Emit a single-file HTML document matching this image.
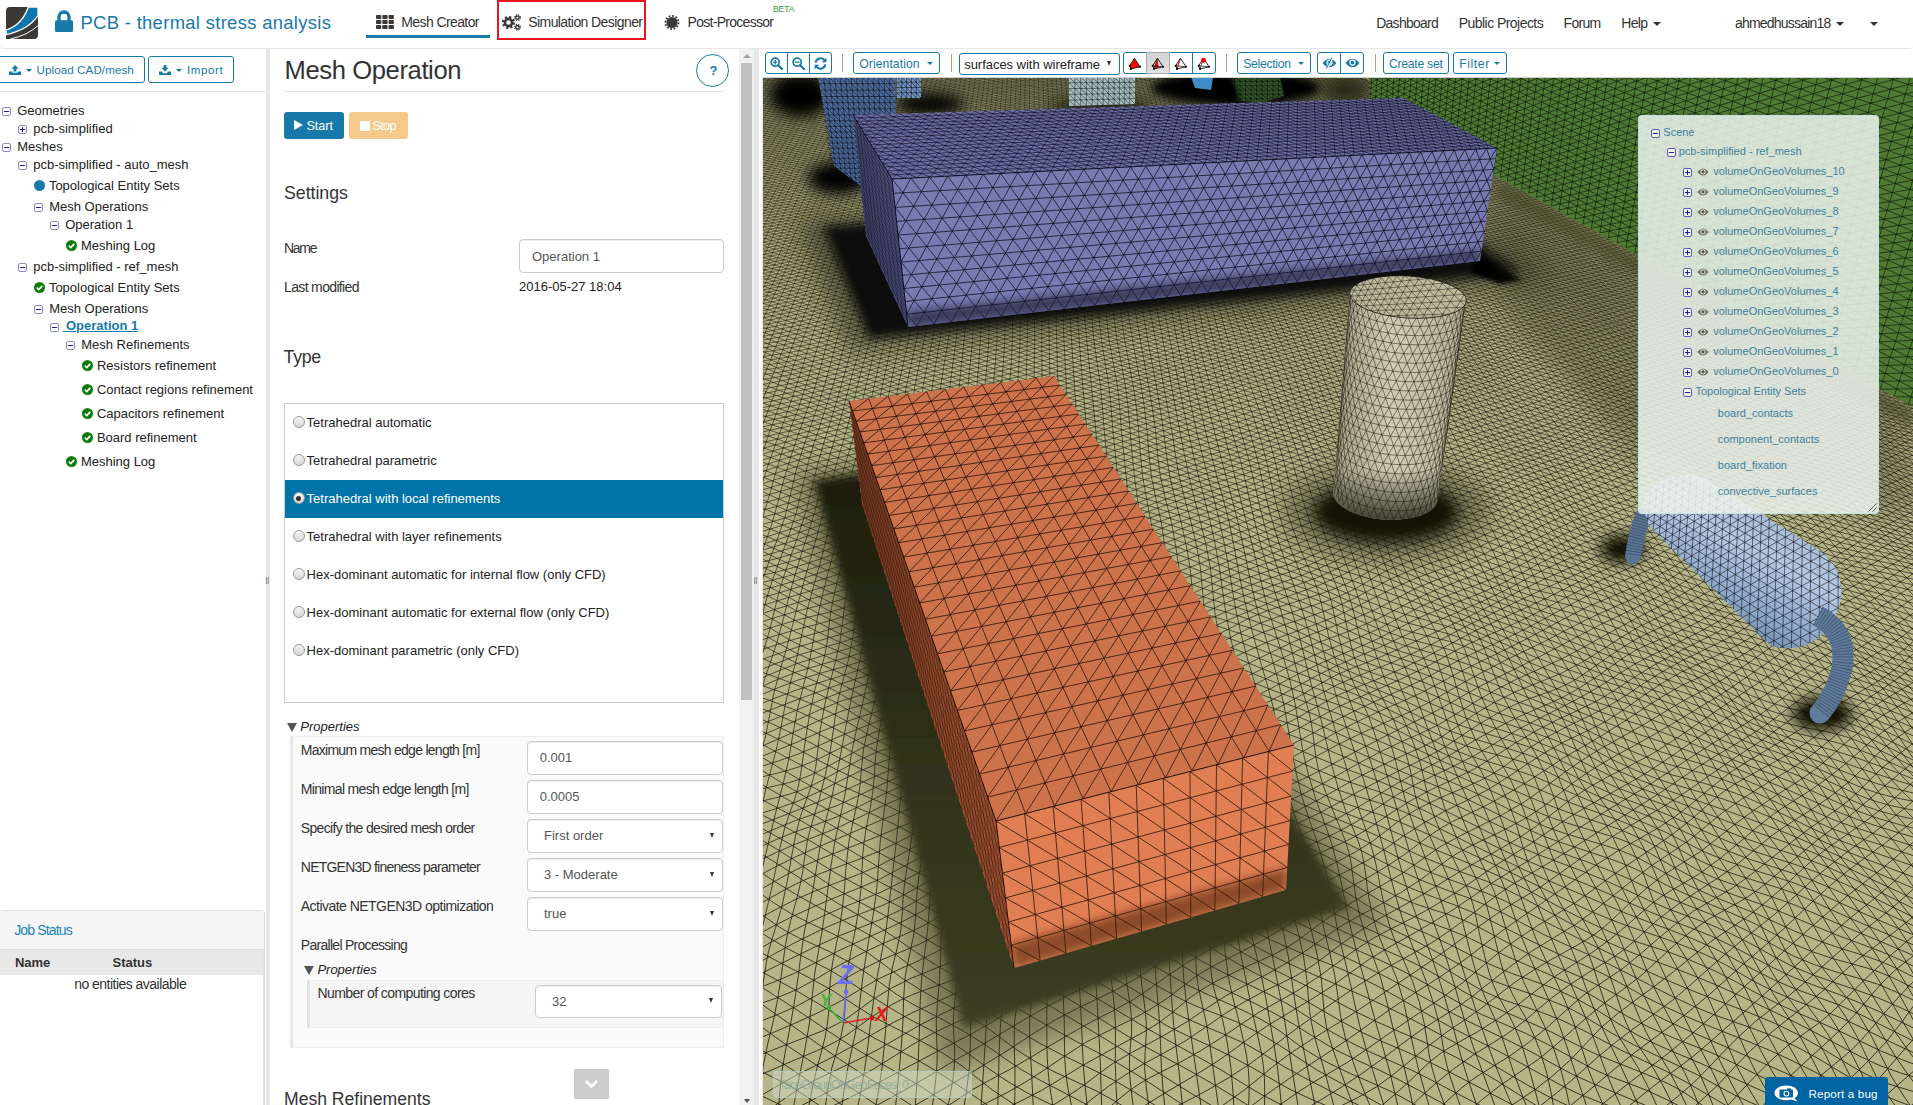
<!DOCTYPE html>
<html lang="en">
<head>
<meta charset="utf-8">
<title>PCB - thermal stress analysis</title>
<style>
html,body{margin:0;padding:0;}
body{width:1913px;height:1105px;overflow:hidden;background:#fff;position:relative;font-family:"Liberation Sans",sans-serif;color:#333;font-size:13px;}
.a{position:absolute;box-sizing:border-box;}
.t{position:absolute;white-space:nowrap;line-height:1;}
svg{position:absolute;overflow:visible;}
svg.clip{overflow:hidden;}
</style>
</head>
<body>
<!-- sec_scene -->
<svg class="clip" style="left:762px;top:77px" width="1151" height="1028" viewBox="762 77 1151 1028">
<defs><filter id="b2" x="-40%" y="-40%" width="180%" height="180%"><feGaussianBlur stdDeviation="2"/></filter><filter id="b4" x="-40%" y="-40%" width="180%" height="180%"><feGaussianBlur stdDeviation="4"/></filter><filter id="b7" x="-40%" y="-40%" width="180%" height="180%"><feGaussianBlur stdDeviation="7"/></filter><filter id="b12" x="-40%" y="-40%" width="180%" height="180%"><feGaussianBlur stdDeviation="12"/></filter><filter id="b20" x="-40%" y="-40%" width="180%" height="180%"><feGaussianBlur stdDeviation="20"/></filter><linearGradient id="gcyl" x1="0" x2="1" y1="0" y2="0"><stop offset="0" stop-color="#a5a287"/><stop offset="0.45" stop-color="#d0cdb3"/><stop offset="1" stop-color="#b4b195"/></linearGradient><linearGradient id="gcylb" x1="0" x2="0" y1="0" y2="1"><stop offset="0.78" stop-color="#14140a" stop-opacity="0"/><stop offset="1" stop-color="#14140a" stop-opacity="0.75"/></linearGradient><linearGradient id="gcap" x1="0.75" x2="0.3" y1="0.2" y2="0.95"><stop offset="0" stop-color="#a3b9d4"/><stop offset="0.35" stop-color="#b4c8e2"/><stop offset="0.7" stop-color="#8ba6c6"/><stop offset="1" stop-color="#5f7c9f"/></linearGradient><linearGradient id="gfar" x1="0" x2="0" y1="77" y2="520" gradientUnits="userSpaceOnUse"><stop offset="0" stop-color="#3a3b22" stop-opacity="0.2"/><stop offset="0.55" stop-color="#3a3b22" stop-opacity="0.05"/><stop offset="1" stop-color="#3a3b22" stop-opacity="0"/></linearGradient><linearGradient id="gln" x1="0" x2="0" y1="77" y2="1105" gradientUnits="userSpaceOnUse"><stop offset="0" stop-color="#14140a" stop-opacity="0.45"/><stop offset="0.35" stop-color="#14140a" stop-opacity="0.62"/><stop offset="1" stop-color="#14140a" stop-opacity="0.85"/></linearGradient><filter id="wav" filterUnits="userSpaceOnUse" x="762" y="77" width="1151" height="1028"><feTurbulence type="fractalNoise" baseFrequency="0.011" numOctaves="2" seed="7"/><feDisplacementMap in="SourceGraphic" scale="14" xChannelSelector="R" yChannelSelector="G"/><feGaussianBlur stdDeviation="0.4"/></filter><linearGradient id="gband" x1="0" x2="0" y1="480" y2="1040" gradientUnits="userSpaceOnUse"><stop offset="0" stop-color="#1d1e0d"/><stop offset="0.6" stop-color="#34351c"/><stop offset="1" stop-color="#3c3d22"/></linearGradient></defs>
<rect x="762" y="77" width="1151" height="1028" fill="#b6b587"/>
<path d="M1902.8 1114.0L1921.9 1095.0M1869.0 1110.2L1922.1 1063.7M1840.9 1111.1L1879.4 1078.1L1917.5 1034.2M1815.8 1112.2L1832.7 1095.7Q1849.6 1079.1 1868.1 1061.1T1901.8 1022.1L1917.0 1001.1M1783.3 1114.3L1799.6 1096.2Q1816.0 1078.1 1835.3 1063.5T1870.2 1029.8T1902.6 992.9L1919.4 975.2M1752.3 1118.6L1768.1 1099.7Q1783.9 1080.9 1802.7 1064.3T1838.4 1031.6T1870.2 996.6T1903.1 963.8L1921.1 949.8M1718.6 1115.5L1734.3 1098.3Q1750.0 1081.2 1768.0 1063.3T1805.4 1032.6T1840.2 1004.1T1872.9 971.8T1906.4 941.7L1922.8 928.4M1690.2 1110.3L1704.7 1097.3Q1719.3 1084.4 1734.2 1067.5T1768.0 1035.2T1803.8 1006.6T1838.0 976.8T1874.5 946.7T1908.6 920.5L1923.4 908.0M1660.8 1110.0L1677.6 1096.6Q1694.3 1083.2 1708.0 1068.3T1738.3 1037.1T1771.0 1009.3T1802.1 984.6T1836.2 954.2T1873.2 923.2T1906.6 895.2L1922.1 881.0M1624.4 1109.6L1643.0 1094.6Q1661.5 1079.7 1676.7 1068.9T1708.2 1043.6T1741.9 1013.9T1773.1 986.2T1803.4 958.7T1837.8 928.5T1871.6 900.8T1904.3 871.7L1921.5 855.2M1591.2 1113.0L1611.9 1096.5Q1632.6 1079.9 1649.8 1067.3T1685.2 1039.5T1722.5 1006.6T1757.3 975.0T1791.8 944.3T1829.8 910.8T1865.9 881.2T1903.1 850.9L1923.3 833.6M1557.1 1116.5L1576.9 1100.4Q1596.6 1084.2 1615.4 1068.3T1652.0 1039.7T1690.1 1010.6T1726.5 979.3T1758.7 950.9T1793.7 919.3T1829.7 886.0T1865.4 857.6T1904.6 828.0L1925.1 811.8M1530.7 1113.1L1547.5 1100.2Q1564.4 1087.3 1581.8 1071.3T1615.6 1042.3T1652.4 1015.2T1692.8 982.9T1728.7 951.3T1762.6 924.0T1796.8 894.5T1828.8 866.2T1864.5 839.4T1904.1 808.6L1923.5 792.2M1499.7 1112.7L1517.6 1101.4Q1535.6 1090.2 1553.9 1074.8T1586.8 1042.6T1617.7 1013.5T1654.1 986.5T1691.8 956.7T1728.5 929.5T1766.3 901.8T1799.9 871.5T1830.2 846.2T1865.1 821.5T1901.7 791.9L1919.2 776.5M1465.3 1114.0L1482.3 1099.5Q1499.3 1085.0 1519.4 1072.4T1556.6 1044.3T1589.1 1015.6T1622.4 989.9T1657.2 961.0T1690.8 931.6T1728.1 908.2T1767.1 882.5T1800.8 853.7T1833.4 828.0T1867.3 801.1T1899.9 773.2L1916.0 760.1M1433.7 1113.5L1451.3 1097.0Q1468.8 1080.5 1489.5 1068.6T1529.5 1041.8T1565.6 1010.7T1602.5 982.2T1640.3 954.1T1675.3 924.4T1713.4 899.4T1753.6 872.6T1790.9 842.6T1829.1 814.9T1865.4 784.4T1899.0 754.1L1916.2 740.9M1401.9 1115.4L1418.0 1099.5Q1434.1 1083.6 1453.7 1068.9T1494.7 1041.6T1533.4 1013.3T1569.1 985.2T1606.5 961.5T1641.8 934.1T1677.4 904.8T1716.9 878.7T1754.4 850.0T1791.3 822.3T1830.3 796.6T1865.8 765.6T1900.3 735.5L1919.0 722.6M1374.4 1111.8L1390.4 1098.2Q1406.5 1084.6 1422.0 1069.1T1457.6 1042.9T1496.6 1019.8T1534.8 991.6T1574.0 964.0T1610.5 939.0T1642.9 911.3T1679.4 885.7T1718.4 859.8T1755.2 828.8T1793.4 801.0T1831.0 775.5T1865.0 746.6T1901.5 719.6L1921.3 707.7M1337.0 1107.8L1357.0 1098.0Q1377.0 1088.1 1393.5 1074.4T1427.9 1046.4T1463.0 1021.0T1497.2 995.8T1535.5 968.9T1577.2 945.1T1613.3 918.7T1646.1 888.6T1681.8 863.4T1717.7 838.1T1755.5 809.2T1795.9 782.8T1831.7 755.4T1865.1 727.5T1902.1 704.1L1921.5 693.6M1301.3 1111.4L1322.2 1099.0Q1343.1 1086.6 1361.7 1073.7T1400.8 1044.8T1440.8 1017.5T1476.0 993.5T1511.9 965.3T1553.8 937.7T1594.9 910.2T1633.6 879.3T1671.1 852.6T1705.6 826.6T1744.2 797.4T1787.8 770.8T1827.0 742.5T1863.6 713.4T1901.4 689.5L1920.1 678.4M1266.8 1113.9L1288.1 1099.0Q1309.3 1084.1 1327.9 1073.9T1365.5 1050.1T1405.7 1022.1T1444.6 995.8T1479.8 968.4T1517.4 939.0T1556.3 914.4T1595.2 888.2T1636.8 858.7T1674.8 832.5T1707.8 804.8T1745.6 777.8T1787.2 754.8T1827.0 727.7T1866.0 699.7T1902.3 675.2L1918.9 663.0M1236.4 1117.2L1255.2 1103.0Q1274.0 1088.8 1292.8 1076.1T1330.3 1051.2T1370.4 1023.3T1410.8 995.6T1446.6 972.4T1483.2 945.4T1522.0 916.8T1558.4 891.5T1596.9 864.5T1638.8 839.0T1676.2 815.7T1711.0 787.6T1748.2 760.9T1786.1 738.2T1826.4 712.5T1867.8 687.3T1903.2 662.6L1918.8 648.9M1205.2 1117.1L1225.0 1103.8Q1244.9 1090.5 1262.8 1075.1T1296.3 1049.4T1332.2 1026.7T1374.5 999.3T1414.3 972.4T1449.7 947.6T1487.0 920.7T1524.1 896.9T1560.3 873.1T1600.2 844.7T1639.9 820.2T1676.5 798.2T1714.0 772.2T1750.6 747.6T1785.7 723.1T1826.0 696.5T1868.0 673.6T1903.8 649.7L1919.9 635.7M1167.5 1110.7L1187.6 1100.7Q1207.6 1090.7 1229.4 1077.3T1267.9 1050.5T1300.3 1025.9T1336.1 1000.4T1376.4 974.0T1415.6 952.0T1454.2 927.5T1491.0 899.6T1524.7 877.0T1562.1 854.7T1603.1 828.8T1640.7 805.2T1677.3 780.9T1716.1 755.7T1751.9 734.1T1786.5 709.4T1826.5 681.6T1867.0 658.7T1903.8 635.2L1921.5 621.6M1136.2 1110.8L1154.5 1099.4Q1172.8 1088.1 1194.8 1075.4T1237.3 1047.1T1275.9 1020.6T1313.2 998.2T1351.1 972.3T1389.3 947.1T1432.0 922.7T1474.3 895.3T1509.3 872.2T1545.3 849.8T1587.3 822.8T1627.8 797.9T1666.9 773.2T1707.1 746.9T1744.4 724.3T1781.6 698.9T1822.5 670.3T1862.9 645.8T1902.5 620.5L1922.8 606.4M1104.0 1111.8L1121.2 1097.2Q1138.4 1082.7 1159.4 1072.8T1201.4 1050.3T1240.5 1024.6T1279.1 1001.0T1319.2 976.2T1355.5 949.8T1391.8 928.4T1434.9 905.4T1476.9 878.3T1512.8 854.8T1549.3 830.8T1588.4 805.7T1628.3 783.5T1670.0 757.3T1709.1 729.9T1744.5 707.6T1783.1 682.9T1823.7 656.5T1862.2 632.1T1902.3 605.6L1923.6 591.3M1075.4 1112.6L1091.6 1099.3Q1107.7 1086.0 1125.3 1074.9T1164.3 1052.8T1205.4 1027.3T1243.9 1002.1T1283.6 981.9T1322.9 958.0T1358.4 931.9T1396.0 909.5T1437.4 885.4T1477.6 861.5T1516.3 839.4T1553.7 812.7T1589.0 787.3T1628.6 766.4T1672.4 741.1T1710.7 714.8T1745.3 691.4T1784.4 665.9T1824.2 642.0T1862.2 619.1T1902.5 592.3L1923.7 577.9M1036.8 1114.5L1057.4 1102.5Q1078.0 1090.5 1095.6 1076.2T1131.5 1052.6T1168.8 1032.6T1206.9 1008.2T1247.7 984.0T1288.7 961.7T1325.0 937.1T1360.9 914.9T1400.6 892.7T1439.5 865.7T1478.1 842.4T1519.4 821.7T1557.0 795.7T1590.3 770.8T1629.6 748.1T1673.4 723.2T1711.7 700.1T1747.2 676.8T1785.4 650.2T1823.8 627.5T1862.5 606.1T1903.1 580.3L1923.6 566.6M1000.2 1110.8L1020.8 1101.1Q1041.3 1091.4 1061.5 1078.4T1103.2 1053.9T1143.6 1032.0T1179.1 1006.7T1218.1 980.3T1263.4 959.2T1304.2 935.5T1340.3 909.6T1380.4 886.2T1420.9 860.2T1459.9 835.9T1502.6 814.5T1544.1 787.9T1579.9 761.7T1618.1 739.0T1661.3 713.9T1703.0 690.4T1742.4 667.1T1780.8 640.0T1819.0 616.6T1860.3 594.7T1902.8 569.5L1923.4 556.6M965.8 1112.6L986.8 1102.8Q1007.8 1093.0 1026.1 1081.7T1065.1 1055.7T1108.5 1030.7T1148.9 1010.1T1183.5 985.8T1222.5 961.2T1266.6 938.0T1307.2 912.3T1345.2 889.6T1384.0 868.0T1422.5 841.0T1463.0 816.5T1505.8 794.8T1545.2 770.0T1582.4 746.9T1621.5 723.1T1661.6 697.0T1703.0 675.6T1744.8 653.7T1782.3 627.7T1818.7 604.6T1860.6 582.1T1903.2 558.2L1923.1 546.7M933.4 1116.3L953.1 1102.4Q972.9 1088.4 991.7 1079.0T1029.7 1057.9T1070.6 1033.5T1113.1 1010.7T1151.8 987.2T1188.7 961.7T1227.7 940.8T1268.0 918.6T1309.6 891.8T1350.6 869.2T1387.0 847.6T1423.6 823.1T1466.2 800.7T1508.4 776.8T1546.0 752.0T1584.8 732.0T1624.4 709.2T1662.1 683.2T1703.2 661.8T1746.4 640.1T1783.6 616.3T1819.1 594.3T1860.8 570.6T1903.0 547.1L1922.7 536.6M898.0 1115.3L920.0 1102.5Q942.0 1089.8 960.2 1079.1T995.1 1058.2T1033.0 1033.7T1076.2 1008.9T1116.5 989.5T1154.1 966.6T1193.8 940.8T1232.0 919.6T1269.3 897.4T1312.1 873.9T1354.7 852.4T1389.6 828.2T1425.5 804.9T1468.7 785.7T1510.1 761.9T1547.5 736.8T1587.1 717.0T1626.1 695.2T1662.9 671.4T1704.0 650.0T1747.1 627.0T1784.4 604.6T1820.2 584.3T1860.9 560.3T1902.3 536.7L1922.1 526.5M859.0 1114.5L881.3 1102.9Q903.6 1091.4 927.3 1076.9T968.4 1052.7T1003.7 1031.9T1044.5 1008.0T1088.4 985.3T1128.7 962.4T1169.4 936.8T1210.3 915.8T1247.8 894.9T1288.6 869.2T1334.1 846.5T1374.4 824.4T1410.5 800.8T1451.4 780.2T1494.6 756.5T1535.6 731.1T1576.5 711.0T1616.2 689.2T1654.5 664.9T1696.4 642.9T1740.1 619.2T1779.9 596.4T1818.2 576.0T1858.7 551.7T1900.5 527.4L1921.4 516.8M827.9 1108.4L846.7 1099.1Q865.5 1089.8 887.8 1077.7T931.9 1054.3T972.4 1033.4T1010.2 1010.0T1049.7 985.2T1090.8 965.8T1133.1 944.2T1174.8 919.1T1213.2 897.7T1251.1 875.7T1293.1 853.0T1336.3 832.7T1376.4 808.5T1415.1 784.7T1454.2 765.9T1494.9 743.3T1538.1 719.0T1579.5 697.9T1617.0 675.1T1655.8 653.2T1698.4 632.4T1740.3 607.7T1780.2 584.8T1819.9 565.0T1859.2 541.6T1899.6 518.2L1920.6 507.8M795.6 1108.7L813.3 1099.4Q830.9 1090.2 852.2 1080.1T894.4 1056.0T935.0 1032.3T976.0 1013.8T1017.0 991.6T1054.0 967.9T1092.8 947.3T1137.6 924.7T1179.5 903.4T1215.5 883.3T1254.5 858.7T1297.2 836.6T1337.8 818.2T1378.4 794.8T1419.4 771.4T1456.5 751.2T1495.4 728.7T1540.3 707.3T1582.0 686.3T1617.9 661.7T1657.2 640.6T1700.0 621.0T1740.4 596.8T1780.6 574.1T1821.3 553.6T1859.6 530.9T1898.9 509.0L1920.0 499.0M763.7 1114.1L781.6 1100.7Q799.5 1087.4 817.9 1078.7T857.8 1059.8T898.9 1037.3T938.1 1015.8T980.4 994.9T1022.0 971.8T1057.5 952.2T1095.8 932.0T1141.3 907.1T1182.7 886.6T1218.5 868.0T1258.1 844.2T1300.0 822.3T1339.4 802.2T1380.9 779.8T1422.5 759.3T1458.5 737.9T1496.6 713.8T1541.9 694.3T1583.5 674.3T1619.2 649.5T1658.7 628.2T1700.9 608.5T1740.7 585.6T1781.2 563.9T1822.3 542.4T1859.9 519.8T1898.7 499.5L1919.7 490.1M755.2 1099.1L775.6 1086.9Q796.0 1074.7 815.6 1065.6T854.4 1045.0T893.2 1022.6T933.8 1003.2T976.9 982.0T1018.0 957.7T1054.7 938.6T1093.2 919.3T1136.6 894.8T1178.8 873.8T1217.2 854.3T1256.1 831.8T1296.2 811.1T1336.6 789.5T1379.1 766.6T1420.4 747.8T1456.9 726.6T1495.4 701.8T1539.5 682.1T1581.6 662.5T1618.9 638.8T1658.1 617.5T1699.4 596.7T1739.6 574.6T1780.9 554.2T1822.0 532.2T1859.7 509.2T1898.7 489.6L1919.7 480.7M751.2 1078.9L773.6 1069.1Q796.0 1059.3 817.4 1050.5T855.7 1028.5T891.5 1004.8T933.8 986.9T977.8 966.6T1016.9 942.4T1054.9 922.6T1095.0 902.7T1135.5 880.4T1177.1 860.1T1218.9 838.4T1257.3 816.4T1294.6 798.0T1336.4 775.9T1380.1 752.0T1419.7 733.8T1456.9 713.5T1496.5 689.5T1538.8 669.3T1580.4 649.0T1620.0 627.0T1658.9 606.7T1698.4 584.8T1739.4 562.8T1781.4 543.9T1821.8 522.1T1859.7 499.0T1899.1 479.7L1920.0 470.9M749.7 1059.1L772.7 1050.0Q795.7 1041.0 817.9 1032.7T856.4 1011.5T891.3 988.2T933.6 969.2T977.7 948.7T1016.3 927.0T1055.4 907.3T1096.2 885.1T1134.6 864.2T1175.7 846.1T1220.0 823.1T1258.2 800.6T1293.6 783.3T1336.3 762.0T1380.7 738.5T1419.1 719.6T1457.0 699.2T1497.8 677.3T1538.1 657.4T1579.2 635.7T1621.0 614.7T1659.6 595.9T1697.5 573.6T1739.2 551.5T1782.0 533.3T1821.4 512.1T1859.6 489.5T1899.7 470.1L1920.5 461.0M751.1 1041.6L774.2 1032.1Q797.3 1022.6 819.1 1012.2T859.3 990.0T897.7 970.0T940.5 949.7T984.2 925.3T1025.7 905.1T1067.3 886.6T1107.8 863.1T1147.4 841.5T1192.3 821.3T1236.9 799.1T1273.9 779.7T1313.2 758.1T1359.6 734.0T1402.1 715.3T1441.1 695.5T1483.1 671.8T1524.4 651.2T1565.6 630.4T1610.2 608.8T1651.7 589.2T1689.5 566.7T1732.0 544.2T1777.1 525.5T1817.8 504.2T1857.5 481.6T1899.5 461.3L1920.9 451.4M753.0 1024.0L775.1 1015.6Q797.3 1007.1 817.6 994.7T858.9 971.0T900.0 952.3T939.9 933.3T982.3 909.4T1026.8 888.9T1068.2 869.3T1106.7 847.5T1147.6 828.0T1192.6 806.1T1236.1 783.4T1274.4 765.7T1314.1 744.9T1358.6 721.0T1401.5 701.8T1441.9 681.8T1483.5 660.1T1524.1 640.2T1565.2 618.2T1610.3 597.0T1652.0 578.7T1689.5 556.6T1731.9 534.2T1777.1 515.3T1817.6 494.5T1857.6 473.1T1899.9 452.8L1921.2 442.4M753.6 1005.9L775.1 998.5Q796.6 991.2 816.5 978.7T858.9 954.9T901.6 935.7T939.6 916.3T980.7 894.6T1027.6 875.1T1069.0 853.4T1105.8 832.0T1148.1 814.6T1192.9 792.8T1234.8 769.6T1275.1 751.8T1315.5 731.7T1357.3 709.6T1400.6 690.0T1443.1 668.7T1483.7 648.5T1523.5 629.9T1565.4 607.3T1610.2 586.0T1651.9 568.2T1689.8 546.9T1731.9 525.2T1776.7 505.8T1817.6 485.0T1857.8 464.8T1900.1 444.9L1921.2 434.2M752.8 990.2L773.7 982.1Q794.7 974.1 815.9 962.5T859.6 941.1T902.0 921.8T939.5 900.2T980.3 880.0T1027.5 862.5T1069.2 839.9T1105.9 818.0T1148.5 801.1T1192.8 780.3T1233.7 758.2T1275.7 739.3T1316.8 718.5T1356.2 698.6T1399.8 679.6T1444.3 657.0T1483.8 637.2T1522.8 619.7T1565.9 597.5T1610.1 576.3T1651.4 558.0T1690.4 537.3T1732.2 516.8T1776.0 497.1T1817.5 475.8T1858.3 456.6T1900.1 437.3L1921.0 426.5M751.9 978.1L772.0 968.1Q792.1 958.1 815.6 946.6T860.7 927.4T901.4 909.5T939.6 886.5T981.1 866.1T1026.6 849.5T1068.7 827.8T1106.9 806.4T1148.7 788.2T1192.0 767.6T1233.3 747.8T1276.3 728.5T1317.5 706.3T1355.6 687.7T1399.2 669.8T1445.0 646.9T1483.8 626.8T1522.4 609.3T1566.3 588.1T1610.0 567.6T1650.8 548.5T1691.1 527.8T1732.5 508.7T1775.2 489.0T1817.5 467.3T1858.8 448.6T1900.0 429.8L1920.5 419.2M751.8 966.6L771.2 955.6Q790.5 944.5 815.4 932.5T861.3 913.5T900.6 896.7T939.8 874.5T982.3 854.0T1025.3 836.2T1067.9 815.5T1108.7 796.1T1148.9 776.6T1190.6 755.0T1233.5 737.3T1276.9 718.6T1317.5 695.5T1355.4 676.9T1399.0 659.5T1445.0 637.5T1483.9 617.5T1522.4 599.1T1566.6 578.6T1609.7 559.4T1650.3 539.7T1691.8 518.7T1732.8 500.6T1774.5 481.3T1817.5 459.5T1859.4 440.8T1899.8 422.3L1919.9 411.9M752.5 952.7L771.7 941.9Q790.9 931.2 815.3 919.6T860.9 900.3T900.4 882.5T940.4 861.9T983.1 843.0T1024.1 823.4T1067.1 802.5T1110.4 785.5T1149.0 765.9T1189.1 743.3T1233.9 726.1T1277.5 708.3T1316.9 685.7T1355.7 666.8T1399.2 648.8T1444.4 628.1T1484.0 609.0T1522.9 589.4T1566.6 569.1T1609.3 551.3T1650.1 531.4T1692.3 510.0T1733.1 492.4T1773.8 473.6T1817.5 452.1T1859.9 433.4T1899.6 414.8L1919.3 404.6M753.5 936.8L773.3 926.2Q793.1 915.7 815.3 906.0T859.3 887.9T900.7 868.0T941.5 848.0T983.0 831.5T1023.2 811.2T1066.8 789.5T1111.5 773.5T1149.2 754.8T1188.0 732.4T1234.3 714.8T1277.9 696.9T1316.2 676.0T1356.2 657.3T1399.6 638.0T1443.4 618.2T1484.1 600.5T1523.8 580.3T1566.3 559.7T1608.8 542.8T1650.2 523.3T1692.7 501.9T1733.1 484.3T1773.4 465.8T1817.5 445.1T1860.2 426.3T1899.4 407.4L1918.8 397.3M754.3 921.2L775.0 909.9Q795.7 898.6 815.4 890.9T857.3 874.9T901.4 854.0T942.9 833.5T982.2 818.3T1022.7 798.8T1067.1 777.2T1111.6 760.8T1149.3 742.5T1187.8 721.8T1234.3 703.9T1277.9 684.8T1315.9 665.5T1356.8 648.0T1399.9 627.5T1442.3 608.0T1484.2 591.5T1524.8 571.4T1565.9 550.6T1608.2 534.0T1650.6 515.0T1692.9 494.2T1733.1 476.3T1773.3 457.8T1817.4 438.0T1860.4 419.5T1899.4 400.2L1918.5 390.0M755.2 906.7L776.2 894.5Q797.3 882.4 815.3 875.4T855.8 860.5T901.9 840.3T944.0 819.9T981.3 804.1T1022.5 785.3T1067.7 765.5T1111.1 748.2T1149.4 729.1T1188.5 710.6T1233.9 693.3T1277.4 672.8T1316.0 654.3T1357.4 638.2T1400.0 617.4T1441.4 597.7T1484.3 581.9T1525.8 562.4T1565.5 541.9T1607.6 525.0T1651.0 506.4T1693.0 486.6T1732.9 468.6T1773.3 449.7T1817.4 430.9T1860.4 412.9T1899.4 393.3L1918.5 382.9M756.3 892.0L776.6 880.3Q797.0 868.5 815.0 861.1T855.2 845.3T902.1 826.1T944.6 807.3T980.8 790.1T1022.5 771.0T1068.3 753.5T1110.2 736.2T1149.5 715.7T1189.7 698.5T1233.2 682.4T1276.5 661.3T1316.7 643.0T1357.9 627.6T1399.8 607.5T1440.8 587.9T1484.4 571.8T1526.5 553.0T1565.2 533.5T1607.1 516.2T1651.5 497.5T1693.1 478.9T1732.6 461.1T1773.5 441.8T1817.4 423.6T1860.2 406.2T1899.5 386.5L1918.7 376.0M757.5 876.4L776.4 866.4Q795.3 856.4 814.2 848.6T855.2 831.2T901.0 812.1T943.6 795.5T980.0 777.8T1021.3 757.7T1066.7 741.7T1107.7 725.2T1147.7 704.1T1188.9 687.3T1230.1 672.1T1272.9 651.5T1314.8 633.1T1355.5 618.0T1396.1 598.7T1437.1 579.7T1480.7 563.5T1523.2 545.2T1561.3 526.5T1602.3 509.3T1647.1 490.9T1688.7 472.9T1727.8 455.5T1768.7 436.5T1811.8 418.6T1854.5 401.7T1894.4 382.4L1913.6 372.1M758.4 860.9L776.6 852.4Q794.8 843.8 815.8 836.4T859.6 817.2T905.2 796.2T948.1 780.9T987.6 763.2T1030.7 741.7T1075.8 725.0T1117.7 708.1T1160.6 688.4T1202.9 670.9T1244.2 652.5T1289.1 633.9T1333.0 617.5T1373.6 598.1T1415.1 578.6T1459.4 563.0T1504.5 544.4T1545.3 524.1T1585.3 507.6T1630.9 489.8T1675.4 470.3T1715.8 452.6T1757.6 434.2T1801.6 415.7T1845.4 398.2T1887.4 378.9L1907.8 368.6M758.4 847.6L776.2 839.6Q794.1 831.6 815.7 824.8T859.8 806.1T903.5 785.0T946.2 769.3T987.8 751.9T1029.3 731.7T1072.7 714.7T1115.7 697.0T1158.9 678.5T1200.7 661.8T1240.7 642.7T1285.5 624.3T1330.5 608.9T1370.1 589.8T1410.8 570.3T1455.5 555.1T1500.1 537.1T1541.0 517.2T1580.8 500.8T1625.3 483.5T1670.1 464.5T1710.5 447.2T1751.9 429.2T1795.6 411.0T1838.7 393.9T1881.1 375.1L1902.0 365.1M757.2 836.6L776.1 828.4Q794.9 820.3 816.2 813.3T859.5 795.2T901.7 775.3T944.5 758.8T988.0 740.9T1028.0 722.4T1069.4 705.6T1113.8 686.7T1157.3 669.0T1198.1 653.3T1237.7 633.8T1282.0 615.3T1327.7 600.6T1366.9 581.9T1406.6 562.4T1451.5 547.4T1495.7 529.9T1536.5 510.5T1576.5 494.2T1620.0 477.3T1664.5 458.7T1705.3 441.7T1746.3 424.2T1789.6 406.3T1832.2 389.5T1874.5 371.3L1895.9 361.6M755.2 826.5L776.1 818.5Q796.9 810.5 817.2 802.3T858.6 784.0T900.0 766.2T943.1 749.5T987.6 730.3T1026.8 713.2T1066.4 697.2T1111.9 677.4T1155.7 659.9T1195.3 645.1T1234.9 625.6T1278.8 607.0T1324.3 592.5T1363.8 574.3T1402.8 555.1T1447.5 540.0T1491.3 523.0T1531.9 504.0T1572.4 487.9T1614.9 471.2T1658.8 453.1T1700.2 436.4T1741.0 419.3T1783.7 401.7T1825.8 385.1T1867.9 367.5L1889.5 358.1M753.2 815.6L777.0 808.5Q800.7 801.3 820.6 790.9T861.3 770.5T904.1 754.5T950.2 738.1T995.4 716.6T1034.7 699.4T1076.7 683.9T1124.9 663.7T1168.4 645.5T1208.2 628.9T1251.2 610.2T1297.6 592.9T1342.0 575.0T1381.9 556.0T1425.1 540.1T1471.4 522.6T1514.3 502.8T1556.3 486.7T1599.6 470.2T1643.9 450.8T1687.8 433.7T1730.3 417.1T1773.7 398.8T1817.2 381.6T1860.6 364.0L1882.8 354.6M751.9 803.4L777.1 797.5Q802.2 791.6 821.3 780.7T859.9 759.8T902.8 744.3T949.6 728.7T994.0 708.0T1033.2 690.7T1074.7 674.8T1122.7 655.7T1166.2 638.2T1205.5 620.9T1248.7 602.4T1294.3 586.0T1338.3 568.1T1379.0 549.0T1421.4 533.5T1467.0 516.4T1509.9 496.7T1552.0 480.7T1595.3 464.5T1638.4 445.5T1682.2 428.5T1725.3 412.3T1768.0 394.3T1811.0 377.3T1854.2 360.2L1876.1 351.1M751.9 790.9L777.1 785.5Q802.4 780.2 821.5 769.8T858.9 749.6T901.7 733.9T949.0 718.4T992.2 699.2T1031.7 682.3T1073.3 665.7T1120.2 647.5T1163.8 631.0T1203.1 613.3T1246.3 594.9T1291.1 579.3T1334.3 561.6T1376.1 542.4T1418.0 527.1T1462.3 510.4T1505.5 491.0T1547.8 475.0T1590.9 459.1T1633.1 440.4T1676.5 423.6T1720.3 407.7T1762.5 390.0T1804.8 373.1T1847.8 356.5L1869.6 347.8M752.8 779.1L777.1 773.2Q801.3 767.4 820.9 757.7T858.4 739.3T900.9 723.6T948.1 707.5T990.4 689.8T1030.3 674.0T1072.3 656.6T1117.5 639.0T1161.2 623.7T1201.1 605.9T1243.8 587.4T1287.9 572.6T1330.4 555.3T1373.1 536.1T1414.9 520.9T1457.7 504.7T1501.0 485.5T1543.7 469.5T1586.5 453.9T1628.1 435.5T1670.9 418.9T1715.2 403.2T1757.2 385.8T1798.7 369.1T1841.6 352.9L1863.3 344.5M754.2 768.7L776.9 761.5Q799.5 754.3 819.8 745.1T858.5 728.6T900.4 713.7T946.7 696.4T988.6 679.9T1028.9 665.4T1071.4 647.6T1114.8 630.2T1158.3 616.1T1199.4 598.5T1241.3 580.0T1284.5 565.8T1326.7 549.0T1369.9 529.9T1411.9 514.9T1453.2 499.1T1496.5 480.2T1539.6 464.3T1582.1 448.9T1623.2 430.8T1665.3 414.4T1709.8 399.0T1752.0 381.7T1792.7 365.2T1835.3 349.4L1857.2 341.2M755.3 758.9L776.4 750.5Q797.6 742.2 818.5 732.7T858.8 717.4T900.2 703.7T944.8 685.7T986.9 669.6T1027.8 656.4T1070.3 638.6T1112.2 621.3T1155.2 608.1T1197.7 591.0T1239.0 572.7T1281.1 558.8T1323.2 542.6T1366.7 523.8T1408.9 509.0T1449.0 493.5T1491.9 475.0T1535.7 459.2T1577.7 444.1T1618.4 426.3T1660.0 410.0T1704.4 394.8T1746.9 377.8T1786.9 361.4T1829.1 346.0L1851.1 338.1M755.4 748.9L776.5 739.8Q797.7 730.7 819.8 720.2T863.3 704.6T905.9 691.5T950.4 672.9T994.5 656.0T1037.9 642.4T1081.4 625.1T1123.8 608.1T1169.0 593.0T1213.4 576.0T1255.4 559.6T1298.5 543.5T1343.3 525.7T1388.4 509.9T1430.2 493.9T1472.4 475.2T1518.4 459.1T1562.7 443.8T1604.7 425.3T1647.3 408.4T1692.7 393.3T1737.5 375.7T1779.0 358.6T1822.1 343.0L1844.9 335.1M754.5 738.3L775.6 729.4Q796.7 720.5 819.1 710.1T863.6 694.2T905.5 680.9T948.1 663.2T993.2 646.8T1037.1 632.6T1079.6 616.0T1121.3 600.0T1166.5 584.7T1211.7 567.9T1252.6 552.5T1295.0 536.8T1340.1 519.0T1385.1 503.8T1426.7 488.3T1468.1 469.9T1514.0 454.0T1558.6 439.1T1600.0 420.9T1642.3 404.2T1687.3 389.4T1732.2 372.0T1773.6 355.1T1816.0 339.8L1838.6 332.1M752.7 727.6L774.5 719.0Q796.2 710.3 818.8 700.8T863.8 684.9T904.9 670.6T946.0 653.7T992.0 638.2T1036.3 623.2T1077.6 606.8T1118.9 592.0T1164.0 576.6T1209.7 559.7T1250.0 545.3T1291.5 530.0T1337.0 512.3T1381.7 497.5T1423.1 482.7T1464.1 464.6T1509.6 448.9T1554.4 434.4T1595.4 416.6T1637.4 400.1T1682.0 385.5T1726.7 368.5T1768.4 351.7T1810.1 336.7L1832.2 329.2M750.7 717.6L773.4 708.8Q796.1 700.0 818.8 691.7T863.6 676.5T904.1 660.9T944.3 644.3T990.7 630.0T1035.5 614.3T1075.5 597.8T1116.7 584.0T1161.7 568.7T1207.4 551.7T1247.5 537.9T1288.2 523.2T1333.9 505.6T1378.3 491.2T1419.5 476.9T1460.3 459.2T1505.1 443.8T1550.2 429.7T1591.0 412.2T1632.6 396.0T1676.8 381.7T1721.2 364.9T1763.1 348.3T1804.4 333.7L1825.8 326.4M749.2 708.6L772.6 699.1Q795.9 689.6 819.0 682.7T863.3 668.7T903.1 652.0T943.1 635.4T989.4 622.0T1034.4 606.1T1073.6 589.2T1114.6 576.1T1159.6 561.1T1204.8 543.9T1245.0 530.6T1285.2 516.4T1330.6 499.0T1375.0 484.8T1415.9 471.1T1456.7 453.8T1500.8 438.6T1545.7 424.9T1586.6 407.9T1627.8 391.8T1671.8 377.9T1715.7 361.4T1757.8 345.0T1798.9 330.6L1819.7 323.6M748.6 700.4L773.2 689.7Q797.8 679.0 821.9 672.8T866.9 659.6T907.7 641.6T950.5 623.8T998.8 610.7T1043.7 594.3T1084.1 576.7T1128.4 562.8T1175.5 547.5T1220.2 530.8T1261.2 516.2T1305.4 500.7T1352.7 485.1T1396.3 470.3T1438.5 453.9T1482.8 438.3T1529.3 423.9T1573.2 406.9T1615.3 390.6T1660.3 376.3T1705.8 359.5T1749.8 342.6T1792.7 328.0L1814.0 320.8M749.0 692.2L773.2 681.3Q797.4 670.4 821.7 664.3T866.1 651.4T906.7 634.0T949.9 616.4T997.2 602.8T1042.1 586.7T1082.4 569.6T1126.5 555.4T1173.1 540.0T1217.4 524.0T1258.9 509.5T1302.5 493.9T1349.2 478.7T1392.8 464.5T1435.0 448.2T1479.0 432.9T1524.7 419.0T1568.8 402.4T1610.9 386.4T1655.4 372.4T1700.5 356.0T1744.3 339.4T1787.4 325.0L1808.6 318.0M750.2 683.3L773.5 672.9Q796.8 662.5 821.2 656.2T865.1 643.0T905.9 626.4T949.4 609.4T995.6 595.3T1040.2 579.3T1080.9 563.0T1124.7 548.5T1170.7 532.7T1214.5 517.5T1256.5 503.1T1299.7 487.3T1345.7 472.5T1389.3 458.7T1431.5 442.6T1475.4 427.5T1520.2 414.0T1564.3 397.8T1606.7 382.1T1650.5 368.4T1695.2 352.4T1738.9 336.1T1782.1 322.0L1803.5 315.2M751.9 673.4L774.1 664.2Q796.3 654.9 820.4 648.4T864.2 634.6T905.2 618.5T949.0 602.6T993.9 588.1T1038.1 571.9T1079.7 556.6T1122.9 542.0T1168.2 525.9T1211.6 511.1T1254.2 497.0T1297.2 480.9T1342.0 466.4T1385.8 453.0T1428.1 437.0T1471.8 422.2T1515.8 409.0T1559.7 393.2T1602.5 377.8T1645.8 364.4T1690.0 348.8T1733.5 332.8T1776.8 318.9L1798.4 312.3M753.6 662.7L774.8 654.9Q795.9 647.0 819.3 640.7T863.2 626.3T904.8 610.3T948.4 595.9T992.2 581.1T1036.0 564.7T1078.5 550.3T1121.3 535.8T1165.7 519.3T1208.8 504.9T1251.8 491.1T1294.7 474.9T1338.4 460.5T1382.2 447.4T1424.8 431.6T1468.2 417.0T1511.5 404.1T1555.1 388.7T1598.3 373.4T1641.1 360.4T1684.8 345.2T1728.1 329.5T1771.5 315.9L1793.4 309.4M755.1 651.9L775.4 645.2Q795.6 638.5 818.2 632.7T862.2 618.1T904.7 602.0T947.7 588.9T990.6 574.4T1034.0 557.7T1077.4 543.9T1119.6 529.8T1163.0 513.0T1206.1 498.9T1249.5 485.5T1292.3 469.1T1334.9 454.9T1378.6 442.0T1421.5 426.4T1464.6 411.8T1507.3 399.3T1550.5 384.1T1594.1 369.1T1636.6 356.4T1679.7 341.6T1722.8 326.1T1766.1 312.8L1788.1 306.5M756.0 641.7L775.7 635.6Q795.5 629.4 817.0 624.3T861.2 610.0T904.6 593.8T946.9 581.6T988.9 567.6T1032.0 550.7T1076.3 537.5T1118.1 523.9T1160.3 507.0T1203.5 493.1T1247.1 480.0T1289.9 463.7T1331.5 449.4T1375.0 436.8T1418.3 421.3T1461.0 406.8T1503.2 394.5T1546.0 379.7T1589.8 364.9T1632.2 352.3T1674.6 337.9T1717.5 322.8T1760.8 309.7L1782.7 303.5M756.3 632.3L776.6 625.9Q796.9 619.6 818.9 614.7T865.3 600.3T911.0 583.6T954.0 571.2T997.3 557.1T1043.0 540.2T1088.9 526.3T1131.5 512.1T1175.4 495.7T1221.0 481.1T1266.3 466.6T1309.5 451.0T1353.2 436.6T1399.1 422.0T1443.8 407.0T1487.4 393.2T1531.3 378.6T1576.8 363.6T1621.6 350.3T1665.0 335.7T1709.5 320.4T1754.5 306.9L1777.3 300.5M756.1 623.7L776.4 617.2Q796.6 610.8 818.1 605.8T864.6 592.0T910.8 576.0T952.8 563.5T995.6 549.8T1041.4 533.8T1087.5 520.1T1129.6 505.9T1172.7 490.1T1218.6 475.8T1263.9 461.2T1306.7 445.9T1349.7 431.8T1395.7 417.1T1440.5 402.2T1483.5 388.7T1527.0 374.2T1572.4 359.5T1617.3 346.3T1660.2 332.0T1704.2 317.0T1749.2 303.7L1771.8 297.5M755.7 615.6L776.0 609.1Q796.2 602.6 817.5 597.1T864.1 583.5T910.4 568.5T951.6 555.9T994.0 542.2T1040.0 527.3T1086.0 513.9T1127.7 499.6T1170.1 484.6T1216.3 470.6T1261.4 455.9T1303.9 440.9T1346.3 427.1T1392.2 412.4T1437.2 397.6T1479.7 384.3T1522.8 370.0T1568.0 355.4T1613.0 342.4T1655.6 328.4T1699.1 313.7T1744.0 300.5L1766.4 294.4M755.3 607.7L775.5 601.4Q795.8 595.2 817.1 588.9T863.6 574.9T909.8 561.1T950.4 548.5T992.6 534.6T1038.6 520.7T1084.4 507.7T1125.8 493.3T1167.7 478.9T1213.9 465.5T1258.9 450.7T1301.0 436.0T1343.1 422.5T1388.7 407.9T1433.9 393.2T1475.9 380.1T1518.7 365.9T1563.6 351.4T1608.7 338.5T1651.0 324.9T1693.9 310.4T1738.8 297.4L1761.2 291.3M754.9 599.7L775.1 594.0Q795.3 588.3 817.0 581.1T863.1 566.6T909.0 553.7T949.4 541.4T991.2 527.1T1037.3 513.9T1082.6 501.5T1124.0 487.0T1165.4 473.1T1211.5 460.3T1256.4 445.6T1298.2 431.1T1340.0 418.0T1385.3 403.5T1430.5 388.9T1472.2 375.9T1514.6 362.0T1559.3 347.5T1604.3 334.8T1646.6 321.3T1688.9 307.1T1733.6 294.3L1756.1 288.2M754.7 591.8L774.8 586.7Q794.8 581.7 817.0 573.8T862.7 558.6T907.9 546.4T948.4 534.4T990.0 519.7T1036.0 507.1T1080.8 495.3T1122.1 480.7T1163.3 467.3T1209.0 455.1T1253.9 440.5T1295.3 426.2T1337.0 413.6T1381.9 399.2T1427.1 384.7T1468.6 371.9T1510.6 358.1T1555.1 343.8T1599.8 331.1T1642.1 317.9T1684.0 303.9T1728.4 291.1L1751.0 285.2M754.7 584.1L774.6 579.6Q794.5 575.0 817.0 566.8T862.2 551.1T906.7 539.2T947.4 527.5T989.0 512.6T1034.6 500.3T1078.8 489.0T1120.2 474.5T1161.4 461.4T1206.6 449.8T1251.3 435.4T1292.5 421.4T1334.2 409.1T1378.5 394.9T1423.5 380.5T1465.1 368.0T1506.6 354.4T1550.9 340.2T1595.4 327.6T1637.7 314.6T1679.2 300.8T1723.2 288.1L1746.0 282.1M754.8 576.8L775.7 572.2Q796.5 567.6 820.1 559.1T866.7 542.7T912.1 530.1T954.9 518.2T999.2 502.8T1046.3 490.0T1091.2 478.3T1134.0 463.6T1178.5 450.2T1225.7 438.0T1270.4 423.4T1313.1 409.3T1358.1 396.2T1404.9 381.7T1449.6 367.5T1492.3 354.0T1537.6 339.8T1584.0 326.0T1628.6 312.7T1671.7 298.7T1717.0 285.4L1740.8 279.1M755.1 570.1L775.9 565.3Q796.8 560.4 820.2 552.3T865.9 536.3T910.8 523.5T954.2 511.3T998.2 496.5T1044.6 483.7T1089.2 471.9T1132.3 457.8T1176.5 444.7T1223.1 432.5T1267.7 418.4T1310.4 404.8T1355.1 391.8T1401.3 377.6T1446.0 363.7T1488.6 350.4T1533.6 336.3T1579.7 322.6T1624.1 309.4T1667.1 295.7T1712.0 282.4L1735.5 276.2M755.3 563.9L776.3 558.6Q797.2 553.2 820.2 545.5T865.1 530.1T909.6 517.2T953.5 504.7T997.3 490.3T1042.9 477.6T1087.2 465.6T1130.6 451.9T1174.7 439.2T1220.4 427.1T1264.9 413.4T1307.7 400.2T1352.2 387.5T1397.8 373.5T1442.4 359.9T1485.1 346.8T1529.6 332.9T1575.4 319.3T1619.7 306.3T1662.7 292.7T1707.0 279.5L1730.2 273.3M755.5 558.1L776.7 552.1Q797.9 546.2 820.2 538.6T864.1 524.1T908.4 511.3T952.9 498.2T996.4 484.3T1041.0 471.8T1085.3 459.5T1128.9 446.1T1172.8 433.8T1217.7 421.7T1262.2 408.4T1305.1 395.6T1349.3 383.1T1394.4 369.4T1438.8 356.1T1481.6 343.2T1525.6 329.5T1571.1 316.1T1615.2 303.3T1658.2 289.9T1702.1 276.7L1724.9 270.4M755.6 552.3L777.1 545.9Q798.7 539.4 820.1 531.9T863.2 518.1T907.3 505.6T952.2 492.0T995.5 478.4T1039.2 466.3T1083.4 453.6T1127.2 440.5T1171.0 428.5T1215.0 416.4T1259.4 403.3T1302.5 391.0T1346.4 378.7T1391.0 365.3T1435.2 352.3T1478.1 339.7T1521.7 326.2T1566.8 312.9T1610.8 300.3T1653.8 287.1T1697.3 273.9L1719.6 267.7M755.6 546.4L777.5 539.6Q799.4 532.8 819.9 525.2T862.2 512.1T906.4 500.1T951.5 486.1T994.6 472.7T1037.3 460.9T1081.6 447.9T1125.6 434.9T1169.2 423.4T1212.5 411.2T1256.6 398.3T1300.0 386.4T1343.6 374.3T1387.6 361.2T1431.5 348.6T1474.7 336.2T1518.0 322.9T1562.6 309.8T1606.4 297.3T1649.4 284.3T1692.7 271.2L1714.5 265.0M755.6 540.1L777.8 533.3Q800.0 526.5 819.7 518.7T861.2 506.0T905.5 494.6T950.8 480.3T993.6 467.1T1035.5 455.7T1079.7 442.5T1124.0 429.5T1167.3 418.3T1209.9 406.1T1253.8 393.3T1297.5 381.8T1340.7 369.9T1384.3 357.0T1427.9 344.8T1471.2 332.6T1514.3 319.6T1558.4 306.7T1602.0 294.4T1645.0 281.6T1688.1 268.6L1709.6 262.3M755.5 533.4L778.8 526.5Q802.2 519.7 822.2 511.4T865.5 498.4T912.4 487.1T959.5 471.9T1003.3 458.2T1047.2 446.9T1093.9 432.7T1140.0 419.1T1184.4 408.2T1229.0 395.1T1275.3 381.7T1320.7 370.6T1365.6 357.8T1410.9 344.2T1456.4 332.3T1501.5 319.4T1546.9 305.5T1592.5 292.9T1637.5 280.0T1682.5 266.3L1704.8 259.7M755.4 526.4L778.8 519.8Q802.2 513.3 821.8 505.2T864.7 492.4T911.7 481.4T958.6 466.7T1002.0 453.0T1045.5 441.7T1092.3 427.7T1138.3 414.2T1182.3 403.2T1226.4 390.3T1272.6 377.1T1318.1 366.1T1362.5 353.7T1407.4 340.3T1452.9 328.6T1498.0 316.0T1542.9 302.4T1588.2 290.0T1633.1 277.3T1678.0 263.8L1700.3 257.2M755.3 519.2L778.6 513.0Q802.0 506.7 821.4 499.0T864.0 486.6T911.1 475.6T957.7 461.4T1000.8 448.0T1043.8 436.6T1090.6 422.9T1136.6 409.5T1180.1 398.4T1223.9 385.6T1270.0 372.6T1315.6 361.7T1359.5 349.5T1403.9 336.4T1449.4 325.0T1494.5 312.7T1538.9 299.3T1583.9 287.2T1628.8 274.7T1673.6 261.3L1695.9 254.7M755.2 512.1L778.3 506.0Q801.4 499.9 820.9 492.8T863.5 480.7T910.4 469.7T956.7 456.1T999.5 443.0T1042.3 431.6T1088.9 418.1T1134.9 404.9T1178.0 393.7T1221.4 381.1T1267.4 368.2T1313.0 357.4T1356.5 345.4T1400.5 332.6T1445.9 321.4T1491.0 309.3T1535.0 296.2T1579.6 284.3T1624.4 272.1T1669.1 258.8L1691.5 252.2M755.2 505.1L777.9 499.0Q800.7 492.9 820.5 486.5T863.1 475.0T909.7 463.8T955.7 450.7T998.2 438.2T1040.9 426.6T1087.3 413.4T1133.1 400.5T1175.9 389.1T1219.0 376.6T1264.8 364.0T1310.4 353.1T1353.5 341.3T1397.2 328.8T1442.4 317.7T1487.6 306.0T1531.2 293.1T1575.3 281.4T1620.1 269.5T1664.7 256.4L1687.1 249.8M755.1 498.5L777.5 492.2Q799.8 485.9 820.1 480.2T862.7 469.3T909.0 457.9T954.6 445.3T997.0 433.4T1039.5 421.7T1085.6 408.7T1131.3 396.1T1173.8 384.7T1216.6 372.3T1262.2 359.8T1307.8 349.0T1350.6 337.3T1393.9 325.0T1439.0 314.1T1484.1 302.6T1527.5 290.0T1571.1 278.5T1615.8 266.9T1660.3 253.9L1682.7 247.4M755.0 492.2L777.0 485.6Q799.0 478.9 819.8 473.8T862.5 463.7T908.3 452.1T953.4 439.8T995.7 428.6T1038.3 416.9T1084.0 404.1T1129.5 391.9T1171.7 380.4T1214.4 368.0T1259.7 355.8T1305.2 344.9T1347.8 333.3T1390.6 321.2T1435.5 310.5T1480.6 299.3T1523.8 286.9T1567.0 275.7T1611.6 264.3T1656.0 251.5L1678.2 245.1M754.8 486.2L776.5 479.2Q798.1 472.2 819.5 467.6T862.3 458.0T907.5 446.4T952.2 434.3T994.5 423.7T1037.1 412.1T1082.3 399.4T1127.6 387.7T1169.7 376.2T1212.1 363.9T1257.2 351.9T1302.5 341.0T1345.0 329.5T1387.4 317.6T1432.2 307.0T1477.1 296.0T1520.2 283.8T1562.9 272.8T1607.3 261.7T1651.6 249.1L1673.7 242.7M754.6 480.4L776.0 473.1Q797.4 465.7 819.3 461.4T862.2 452.3T906.6 440.7T951.0 428.8T993.3 418.8T1035.9 407.3T1080.7 394.8T1125.7 383.5T1167.7 372.1T1210.0 359.8T1254.7 348.0T1299.8 337.2T1342.2 325.7T1384.3 313.9T1428.8 303.5T1473.6 292.7T1516.5 280.7T1558.9 269.9T1603.0 259.0T1647.3 246.7L1669.2 240.4M754.2 474.6L776.7 466.9Q799.1 459.1 822.3 454.6T867.5 445.4T913.5 433.3T959.4 420.8T1003.8 411.1T1049.0 398.9T1096.0 385.5T1141.8 374.9T1185.5 362.6T1231.0 349.1T1278.2 338.2T1323.8 326.7T1367.4 313.7T1413.1 303.0T1460.2 292.0T1505.5 279.5T1549.7 268.4T1595.5 257.3T1641.9 244.6L1664.8 238.0M753.8 468.8L776.3 461.2Q798.8 453.6 822.2 448.9T867.2 439.7T912.5 427.9T958.2 415.6T1002.7 406.0T1047.8 394.2T1094.2 381.2T1139.7 370.7T1183.5 358.7T1228.7 345.3T1275.6 334.5T1321.0 323.1T1364.5 310.2T1409.9 299.5T1456.7 288.8T1502.0 276.4T1545.9 265.5T1591.3 254.6T1637.7 242.1L1660.4 235.7M753.3 463.0L776.0 455.7Q798.6 448.3 822.1 443.5T867.0 434.1T911.5 422.5T957.0 410.5T1001.7 401.0T1046.6 389.6T1092.3 376.9T1137.7 366.5T1181.6 354.8T1226.5 341.6T1272.9 330.8T1318.2 319.5T1361.7 306.8T1406.7 296.2T1453.3 285.6T1498.4 273.3T1542.1 262.6T1587.1 252.0T1633.4 239.7L1656.1 233.4M752.8 457.2L775.7 450.2Q798.6 443.3 822.0 438.3T866.6 428.6T910.5 417.2T955.8 405.5T1000.7 396.0T1045.4 384.9T1090.5 372.6T1135.7 362.4T1179.7 350.9T1224.4 338.0T1270.3 327.3T1315.4 316.1T1358.9 303.5T1403.6 292.9T1449.9 282.4T1494.8 270.3T1538.4 259.7T1583.1 249.3T1629.1 237.3L1651.9 231.1M752.3 451.3L775.5 444.8Q798.8 438.3 821.9 433.3T866.3 423.2T909.5 411.9T954.6 400.6T999.8 391.1T1044.2 380.2T1088.8 368.3T1133.7 358.2T1177.8 347.0T1222.2 334.4T1267.8 323.7T1312.6 312.7T1356.1 300.2T1400.5 289.7T1446.4 279.3T1491.3 267.4T1534.7 256.9T1579.0 246.7T1624.9 234.9L1647.8 228.8M751.9 445.5L775.4 439.5Q799.0 433.5 821.8 428.4T865.8 418.0T908.6 406.7T953.5 395.8T998.8 386.2T1043.0 375.5T1087.0 364.0T1131.7 354.1T1175.9 343.1T1220.1 330.8T1265.2 320.3T1309.8 309.4T1353.4 297.0T1397.4 286.5T1443.1 276.2T1487.7 264.5T1531.1 254.1T1575.1 244.1T1620.6 232.5L1643.6 226.5M751.6 439.9L775.4 434.3Q799.2 428.6 821.7 423.7T865.3 413.1T907.6 401.6T952.4 391.1T997.9 381.5T1041.8 370.8T1085.3 359.8T1129.7 350.0T1174.1 339.2T1218.0 327.2T1262.7 316.8T1307.1 306.1T1350.6 293.9T1394.4 283.4T1439.7 273.3T1484.2 261.6T1527.4 251.3T1571.2 241.4T1616.4 230.1L1639.5 224.2M751.3 434.5L775.3 429.1Q799.3 423.8 821.5 419.0T864.8 408.2T906.8 396.7T951.4 386.5T996.9 376.8T1040.5 366.2T1083.6 355.5T1127.7 345.9T1172.3 335.3T1216.0 323.7T1260.1 313.4T1304.3 302.8T1347.9 290.8T1391.5 280.4T1436.3 270.3T1480.7 258.8T1523.8 248.6T1567.3 238.9T1612.2 227.7L1635.2 221.9M751.3 429.3L775.3 424.1Q799.4 418.9 821.3 414.4T864.2 403.5T905.9 391.8T950.3 382.0T995.9 372.2T1039.2 361.6T1081.9 351.3T1125.8 341.8T1170.4 331.5T1213.9 320.1T1257.6 310.0T1301.5 299.6T1345.2 287.7T1388.6 277.4T1433.0 267.5T1477.2 256.0T1520.3 245.9T1563.5 236.3T1608.1 225.4L1631.0 219.7M751.3 424.2L776.6 418.8Q801.8 413.4 824.5 409.0T869.0 397.5T913.1 385.0T960.3 375.4T1007.6 365.0T1052.4 353.2T1097.3 343.7T1144.0 333.6T1190.4 321.6T1235.7 311.3T1281.6 300.7T1327.6 288.4T1373.2 277.5T1419.3 267.1T1465.7 255.3T1511.1 244.6T1556.4 234.5T1602.8 223.3L1626.7 217.4M751.5 419.4L776.6 414.0Q801.6 408.6 824.1 404.4T868.4 393.1T912.3 380.5T959.3 371.0T1006.5 360.7T1050.9 348.9T1095.5 339.5T1142.1 329.7T1188.5 317.9T1233.5 307.8T1278.9 297.5T1324.8 285.4T1370.4 274.6T1416.1 264.3T1462.2 252.6T1507.6 242.0T1552.7 232.0T1598.8 221.0L1622.3 215.2M751.8 414.7L776.6 409.3Q801.3 404.0 823.7 399.8T867.8 388.7T911.6 376.2T958.4 366.6T1005.4 356.4T1049.5 344.7T1093.8 335.4T1140.3 325.8T1186.6 314.2T1231.3 304.3T1276.3 294.3T1322.2 282.4T1367.7 271.7T1413.0 261.5T1458.8 250.0T1504.0 239.4T1549.0 229.5T1594.8 218.7L1618.0 213.0M752.2 410.0L776.5 404.7Q800.9 399.4 823.2 395.2T867.1 384.3T910.9 372.0T957.5 362.4T1004.3 352.3T1048.1 340.6T1092.1 331.4T1138.4 322.0T1184.7 310.6T1229.1 300.8T1273.7 291.1T1319.5 279.4T1365.0 268.9T1410.0 258.8T1455.4 247.4T1500.5 236.9T1545.4 227.1T1590.8 216.4L1613.7 210.8M752.6 405.3L776.5 400.1Q800.4 394.9 822.7 390.6T866.6 379.9T910.3 367.9T956.6 358.2T1003.1 348.2T1046.8 336.6T1090.5 327.4T1136.6 318.1T1182.8 307.0T1226.9 297.4T1271.2 287.9T1316.8 276.4T1362.2 266.0T1407.0 256.1T1452.0 244.9T1497.1 234.4T1541.8 224.7T1586.9 214.1L1609.5 208.6M753.1 400.6L776.4 395.6Q799.8 390.6 822.2 386.1T866.0 375.5T909.7 363.8T955.7 354.2T1001.9 344.1T1045.4 332.7T1088.9 323.5T1134.8 314.4T1180.9 303.4T1224.8 294.0T1268.7 284.7T1314.2 273.4T1359.5 263.2T1404.0 253.5T1448.6 242.4T1493.6 232.0T1538.2 222.3T1583.1 211.9L1605.4 206.5M753.5 395.8L776.3 391.0Q799.1 386.3 821.6 381.7T865.4 371.2T909.1 359.9T954.8 350.2T1000.6 340.2T1044.0 328.9T1087.4 319.7T1133.1 310.6T1178.9 299.8T1222.6 290.5T1266.2 281.5T1311.5 270.5T1356.8 260.4T1401.0 250.8T1445.3 239.9T1490.1 229.6T1534.7 220.0T1579.3 209.7L1601.4 204.4M753.9 390.9L776.2 386.5Q798.4 382.1 821.0 377.3T864.9 366.8T908.6 355.9T953.9 346.3T999.4 336.3T1042.7 325.2T1085.9 316.0T1131.3 307.0T1177.0 296.3T1220.5 287.2T1263.8 278.3T1308.9 267.5T1354.1 257.6T1398.1 248.2T1442.0 237.4T1486.7 227.2T1531.2 217.7T1575.5 207.6L1597.5 202.3M754.3 386.0L776.0 381.9Q797.7 377.9 820.5 372.9T864.4 362.5T908.1 352.0T953.0 342.5T998.1 332.4T1041.4 321.5T1084.4 312.3T1129.6 303.4T1175.0 292.9T1218.4 283.8T1261.4 275.1T1306.3 264.6T1351.4 254.8T1395.2 245.6T1438.8 235.0T1483.3 224.9T1527.7 215.4T1571.8 205.5L1593.7 200.3M754.5 381.0L775.8 377.4Q797.1 373.7 819.9 368.5T864.0 358.1T907.6 348.1T952.1 338.7T996.8 328.6T1040.0 318.0T1083.0 308.8T1127.9 299.8T1173.1 289.4T1216.3 280.5T1259.0 272.0T1303.7 261.6T1348.7 252.0T1392.4 243.0T1435.6 232.6T1479.9 222.6T1524.2 213.2T1568.1 203.4L1590.0 198.3M754.6 376.2L775.6 372.8Q796.6 369.4 819.4 364.2T863.6 353.8T907.1 344.2T951.2 335.0T995.5 324.9T1038.7 314.4T1081.6 305.3T1126.2 296.3T1171.1 286.1T1214.2 277.2T1256.7 268.8T1301.2 258.7T1346.0 249.3T1389.5 240.4T1432.4 230.2T1476.5 220.3T1520.7 211.0T1564.4 201.3L1586.3 196.3M754.7 371.3L776.6 368.1Q798.5 364.8 822.6 359.2T869.2 348.1T915.0 338.7T961.3 329.1T1007.6 317.7T1052.8 307.7T1098.5 298.4T1145.7 287.8T1192.0 278.2T1236.7 269.3T1282.5 259.3T1329.8 249.4T1375.9 240.0T1421.0 229.8T1467.0 219.4T1513.6 209.5T1559.6 199.5L1582.6 194.4M754.6 366.7L776.4 363.5Q798.1 360.4 822.2 354.9T868.8 343.9T914.5 334.8T960.2 325.5T1006.3 314.1T1051.5 304.3T1097.0 295.0T1143.9 284.5T1190.0 275.0T1234.6 266.2T1280.1 256.3T1327.1 246.6T1373.2 237.4T1418.0 227.4T1463.7 217.2T1510.2 207.4T1556.0 197.5L1578.9 192.5M754.5 362.1L776.1 359.0Q797.7 355.9 821.7 350.6T868.4 339.9T913.9 330.9T959.2 321.8T1005.0 310.6T1050.3 300.9T1095.6 291.8T1142.0 281.2T1188.0 271.8T1232.5 263.1T1277.7 253.4T1324.5 243.8T1370.4 234.8T1415.0 225.0T1460.4 214.9T1506.8 205.3T1552.5 195.6L1575.2 190.6M754.3 357.8L775.9 354.6Q797.4 351.5 821.3 346.3T868.0 335.8T913.3 327.0T958.2 318.2T1003.7 307.2T1049.0 297.6T1094.1 288.6T1140.2 278.1T1185.9 268.6T1230.3 260.1T1275.4 250.5T1321.9 241.1T1367.6 232.2T1412.0 222.6T1457.1 212.7T1503.4 203.1T1549.0 193.6L1571.6 188.7M754.1 353.6L775.7 350.3Q797.2 347.0 821.0 342.1T867.6 331.8T912.7 323.2T957.1 314.6T1002.5 303.8T1047.8 294.3T1092.7 285.4T1138.4 274.9T1183.9 265.6T1228.2 257.1T1273.1 247.6T1319.3 238.3T1364.9 229.6T1409.1 220.2T1453.9 210.4T1500.0 201.0T1545.5 191.7L1567.9 186.9M753.9 349.5L775.5 346.1Q797.1 342.6 820.7 337.8T867.2 327.9T912.1 319.4T956.1 311.0T1001.2 300.4T1046.5 291.0T1091.3 282.3T1136.6 271.9T1181.9 262.5T1226.2 254.2T1270.8 244.7T1316.7 235.6T1362.1 227.0T1406.2 217.8T1450.7 208.2T1496.6 198.9T1542.0 189.8L1564.2 185.1M753.7 345.6L775.3 342.0Q797.0 338.3 820.4 333.6T866.8 324.0T911.4 315.6T955.1 307.4T1000.0 297.0T1045.3 287.8T1089.9 279.2T1134.8 268.9T1179.9 259.6T1224.1 251.3T1268.5 241.9T1314.2 232.9T1359.4 224.5T1403.3 215.5T1447.6 206.0T1493.2 196.9T1538.5 187.9L1560.6 183.3M753.4 341.8L775.2 337.9Q796.9 334.0 820.1 329.5T866.4 320.1T910.8 311.9T954.1 303.8T998.8 293.7T1044.1 284.5T1088.6 276.1T1133.1 265.9T1177.9 256.7T1222.1 248.4T1266.3 239.2T1311.6 230.2T1356.7 221.9T1400.4 213.1T1444.5 203.8T1489.9 194.8T1535.1 186.0L1557.0 181.5M753.2 338.1L775.1 334.0Q796.9 329.9 819.9 325.4T865.9 316.3T910.1 308.2T953.1 300.2T997.6 290.3T1042.9 281.4T1087.2 273.0T1131.3 263.0T1175.9 253.8T1220.0 245.6T1264.1 236.4T1309.1 227.6T1354.0 219.4T1397.6 210.8T1441.4 201.6T1486.6 192.7T1531.6 184.1L1553.5 179.7M753.1 334.4L775.0 330.1Q796.9 325.9 819.6 321.3T865.5 312.5T909.4 304.5T952.2 296.6T996.5 287.0T1041.7 278.2T1085.8 270.0T1129.6 260.1T1173.9 251.0T1218.0 242.9T1261.9 233.8T1306.6 225.0T1351.3 216.9T1394.8 208.4T1438.4 199.4T1483.3 190.7T1528.2 182.2L1550.1 177.9M753.0 330.8L774.9 326.4Q796.9 322.0 819.4 317.4T865.0 308.7T908.7 300.9T951.2 293.0T995.4 283.7T1040.5 275.1T1084.4 267.0T1127.9 257.2T1172.0 248.2T1216.0 240.2T1259.8 231.1T1304.1 222.4T1348.6 214.4T1392.0 206.1T1435.4 197.2T1480.0 188.6T1524.8 180.4L1546.7 176.2M753.0 327.1L776.2 322.4Q799.4 317.7 823.2 312.6T871.0 303.9T916.7 295.9T961.8 286.9T1008.9 277.7T1056.1 269.1T1102.1 259.7T1148.0 250.0T1194.7 240.9T1240.9 232.0T1287.4 222.7T1334.2 213.9T1380.4 205.6T1426.0 196.4T1472.8 187.3T1520.1 178.7L1543.4 174.4M753.0 323.5L776.2 318.7Q799.4 314.0 823.0 308.9T870.5 300.2T916.0 292.5T960.8 283.4T1007.7 274.5T1054.9 266.0T1100.6 256.8T1146.2 247.2T1192.7 238.2T1238.9 229.4T1285.1 220.2T1331.6 211.4T1377.6 203.3T1423.1 194.2T1469.6 185.2T1516.7 176.9L1540.1 172.7M753.1 319.8L776.2 315.1Q799.3 310.4 822.8 305.2T869.9 296.6T915.2 289.0T959.9 280.0T1006.6 271.3T1053.6 263.1T1099.1 253.9T1144.4 244.5T1190.7 235.6T1236.9 226.8T1282.8 217.7T1329.0 209.0T1374.9 200.9T1420.2 192.0T1466.5 183.2T1513.3 175.0L1536.8 170.9M753.3 316.2L776.3 311.5Q799.3 306.9 822.5 301.6T869.4 293.1T914.5 285.6T959.0 276.6T1005.5 268.1T1052.4 260.1T1097.6 251.0T1142.6 241.8T1188.8 233.0T1234.8 224.3T1280.5 215.2T1326.4 206.6T1372.2 198.7T1417.4 189.9T1463.3 181.1T1510.0 173.2L1533.4 169.2M753.5 312.5L776.3 308.0Q799.1 303.4 822.3 298.1T868.8 289.6T913.7 282.2T958.2 273.3T1004.4 264.9T1051.1 257.1T1096.1 248.2T1140.9 239.1T1186.9 230.5T1232.8 221.8T1278.2 212.8T1323.9 204.3T1369.5 196.4T1414.5 187.7T1460.2 179.1T1506.6 171.3L1530.1 167.4M753.7 308.9L776.4 304.4Q799.0 300.0 822.0 294.7T868.2 286.1T913.0 278.9T957.3 270.0T1003.4 261.7T1049.8 254.2T1094.6 245.4T1139.1 236.4T1184.9 228.0T1230.8 219.4T1276.0 210.4T1321.3 201.9T1366.8 194.1T1411.7 185.6T1457.1 177.1T1503.3 169.4L1526.7 165.7M753.9 305.3L776.4 300.9Q798.9 296.5 821.7 291.3T867.6 282.8T912.3 275.6T956.5 266.8T1002.3 258.6T1048.6 251.2T1093.2 242.6T1137.4 233.7T1183.0 225.5T1228.8 216.9T1273.7 208.0T1318.8 199.6T1364.1 191.9T1409.0 183.5T1454.1 175.1T1500.0 167.6L1523.3 163.9M754.2 301.8L776.5 297.5Q798.7 293.1 821.5 288.0T867.0 279.5T911.5 272.3T955.7 263.6T1001.2 255.5T1047.3 248.3T1091.7 239.8T1135.7 231.1T1181.1 223.0T1226.8 214.5T1271.5 205.7T1316.3 197.4T1361.4 189.7T1406.2 181.4T1451.1 173.1T1496.7 165.7L1519.8 162.1M754.5 298.3L776.5 294.0Q798.6 289.7 821.2 284.7T866.4 276.3T910.8 269.1T954.9 260.5T1000.2 252.4T1046.0 245.4T1090.3 237.0T1134.1 228.4T1179.3 220.5T1224.8 212.2T1269.4 203.4T1313.8 195.1T1358.7 187.6T1403.5 179.3T1448.1 171.1T1493.5 163.9L1516.4 160.4M754.7 294.8L776.5 290.6Q798.4 286.4 820.9 281.4T865.8 273.1T910.1 265.9T954.1 257.4T999.2 249.4T1044.7 242.5T1088.8 234.2T1132.4 225.8T1177.4 218.0T1222.8 209.8T1267.2 201.1T1311.3 192.9T1356.1 185.4T1400.7 177.2T1445.2 169.1T1490.2 162.0L1512.9 158.6M754.9 291.4L776.6 287.2Q798.2 283.0 820.6 278.2T865.2 270.0T909.5 262.8T953.3 254.3T998.1 246.4T1043.4 239.6T1087.4 231.5T1130.8 223.2T1175.6 215.6T1220.9 207.5T1265.1 198.9T1308.9 190.8T1353.4 183.3T1398.0 175.2T1442.3 167.1T1487.0 160.2L1509.4 156.8M755.1 288.1L776.6 283.8Q798.0 279.6 820.3 275.0T864.6 266.9T908.8 259.7T952.6 251.3T997.1 243.4T1042.1 236.8T1085.9 228.8T1129.2 220.6T1173.8 213.2T1218.9 205.2T1262.9 196.7T1306.5 188.6T1350.8 181.2T1395.3 173.2T1439.4 165.2T1483.8 158.3L1506.0 155.0M755.3 284.8L776.6 280.5Q797.9 276.2 820.0 271.9T864.0 263.9T908.1 256.6T951.8 248.3T996.1 240.5T1040.9 233.9T1084.5 226.1T1127.6 218.1T1172.0 210.8T1216.9 202.9T1260.8 194.5T1304.1 186.5T1348.2 179.2T1392.6 171.2T1436.5 163.2T1480.7 156.5L1502.7 153.3M755.4 281.6L777.9 276.9Q800.4 272.2 823.7 268.0T870.3 259.9T917.0 251.7T963.4 243.3T1010.4 235.4T1057.4 228.0T1103.2 219.8T1149.4 211.5T1196.8 204.0T1243.8 195.2T1289.6 186.4T1336.0 178.8T1383.0 170.5T1429.6 162.0T1476.2 154.9L1499.3 151.5M755.5 278.4L777.9 273.7Q800.2 268.9 823.4 264.9T869.8 257.0T916.3 248.8T962.6 240.4T1009.3 232.6T1056.1 225.3T1101.7 217.2T1147.7 209.1T1194.9 201.6T1241.8 193.1T1287.3 184.3T1333.4 176.8T1380.3 168.5T1426.8 160.1T1473.1 153.1L1496.1 149.7M755.6 275.2L777.8 270.4Q800.0 265.7 823.1 261.9T869.2 254.1T915.7 245.9T961.8 237.5T1008.2 229.9T1054.7 222.6T1100.2 214.6T1146.0 206.7T1193.0 199.3T1239.8 190.9T1285.1 182.3T1330.9 174.8T1377.7 166.6T1424.1 158.2T1470.0 151.3L1492.9 148.0M755.6 272.0L777.7 267.3Q799.8 262.5 822.7 258.8T868.6 251.2T915.1 243.0T961.0 234.7T1007.1 227.2T1053.4 219.9T1098.8 212.0T1144.4 204.3T1191.2 197.0T1237.7 188.8T1282.8 180.2T1328.4 172.9T1375.0 164.7T1421.3 156.4T1467.0 149.5L1489.8 146.2M755.6 268.9L777.7 264.1Q799.7 259.4 822.4 255.8T868.1 248.4T914.4 240.2T960.2 231.9T1006.0 224.5T1052.1 217.3T1097.4 209.5T1142.8 201.9T1189.3 194.8T1235.7 186.6T1280.6 178.2T1326.0 170.9T1372.4 162.8T1418.6 154.6T1464.0 147.7L1486.7 144.5M755.6 265.7L777.5 261.0Q799.5 256.3 822.0 252.8T867.5 245.6T913.8 237.4T959.4 229.2T1004.9 221.9T1050.7 214.6T1096.0 207.0T1141.2 199.5T1187.5 192.5T1233.7 184.5T1278.5 176.2T1323.5 169.0T1369.8 161.0T1415.8 152.8T1461.0 145.9L1483.7 142.7M755.5 262.6L777.4 257.9Q799.4 253.2 821.7 249.8T867.0 242.8T913.2 234.7T958.6 226.5T1003.8 219.3T1049.4 212.1T1094.6 204.5T1139.6 197.1T1185.7 190.2T1231.7 182.4T1276.3 174.2T1321.1 167.1T1367.2 159.2T1413.1 151.0T1458.1 144.2L1480.7 141.0M755.4 259.4L777.3 254.8Q799.2 250.2 821.4 246.9T866.5 240.0T912.6 232.0T957.8 223.8T1002.8 216.7T1048.1 209.5T1093.2 202.0T1138.0 194.7T1183.9 188.0T1229.7 180.3T1274.2 172.2T1318.7 165.2T1364.6 157.4T1410.4 149.2T1455.2 142.4L1477.7 139.3M755.3 256.2L777.2 251.7Q799.1 247.2 821.1 243.9T866.0 237.2T911.9 229.3T957.0 221.2T1001.7 214.2T1046.8 207.0T1091.8 199.5T1136.5 192.4T1182.0 185.8T1227.7 178.2T1272.0 170.2T1316.3 163.3T1362.1 155.6T1407.7 147.5T1452.3 140.7L1474.7 137.6M755.2 253.1L777.1 248.7Q798.9 244.3 820.8 241.1T865.5 234.4T911.3 226.6T956.2 218.6T1000.7 211.7T1045.5 204.5T1090.4 197.1T1135.0 190.1T1180.3 183.6T1225.7 176.1T1269.9 168.3T1314.0 161.5T1359.5 153.8T1405.1 145.8T1449.5 139.0L1471.7 135.9M755.0 249.9L776.9 245.7Q798.8 241.4 820.5 238.2T865.1 231.7T910.7 224.0T955.5 216.0T999.6 209.2T1044.3 202.1T1089.0 194.7T1133.4 187.8T1178.5 181.3T1223.7 174.1T1267.8 166.3T1311.7 159.6T1357.0 152.1T1402.4 144.1T1446.7 137.4L1468.7 134.2M754.9 246.7L776.8 242.7Q798.6 238.6 820.2 235.4T864.6 229.0T910.1 221.4T954.7 213.5T998.6 206.7T1043.0 199.6T1087.7 192.3T1131.9 185.5T1176.7 179.2T1221.7 172.0T1265.7 164.4T1309.4 157.8T1354.4 150.4T1399.7 142.4T1443.8 135.7L1465.7 132.6M754.8 243.6L776.6 239.7Q798.5 235.8 819.9 232.6T864.2 226.3T909.5 218.8T953.9 211.0T997.5 204.3T1041.7 197.3T1086.3 189.9T1130.5 183.2T1175.0 177.0T1219.7 169.9T1263.6 162.5T1307.1 156.0T1351.9 148.6T1397.1 140.8T1441.1 134.1L1462.7 130.9M754.6 240.5L776.5 236.7Q798.3 233.0 819.6 229.8T863.7 223.6T908.9 216.2T953.1 208.5T996.5 201.9T1040.5 194.9T1085.0 187.6T1129.0 181.0T1173.2 174.8T1217.8 167.9T1261.5 160.6T1304.9 154.1T1349.4 146.9T1394.5 139.2T1438.3 132.5L1459.8 129.3M754.5 237.4L777.7 233.6Q800.9 229.8 823.8 226.4T870.8 219.7T918.7 212.0T965.2 204.0T1011.5 197.1T1058.5 189.5T1105.6 181.8T1152.4 175.5T1199.6 168.4T1246.5 160.7T1292.5 153.9T1339.5 146.4T1387.3 138.3T1434.1 131.1L1456.8 127.7M754.4 234.3L777.6 230.7Q800.8 227.1 823.5 223.7T870.3 217.0T918.0 209.4T964.4 201.6T1010.4 194.7T1057.2 187.2T1104.3 179.6T1150.8 173.3T1197.7 166.4T1244.4 158.8T1290.4 152.1T1337.1 144.7T1384.7 136.7T1431.4 129.5L1454.0 126.1M754.3 231.3L777.4 227.8Q800.6 224.3 823.2 221.0T869.9 214.4T917.4 206.9T963.6 199.2T1009.3 192.4T1055.9 185.0T1102.9 177.4T1149.2 171.2T1195.9 164.3T1242.4 156.8T1288.2 150.3T1334.7 143.0T1382.2 135.2T1428.7 128.0L1451.1 124.6M754.2 228.3L777.3 225.0Q800.4 221.6 822.9 218.4T869.4 211.8T916.7 204.5T962.7 196.9T1008.2 190.1T1054.6 182.8T1101.5 175.2T1147.6 169.0T1194.0 162.3T1240.4 154.9T1286.1 148.4T1332.3 141.4T1379.6 133.6T1425.9 126.4L1448.3 123.0M754.1 225.4L777.2 222.1Q800.3 218.8 822.7 215.7T869.0 209.2T916.1 202.0T961.9 194.6T1007.1 187.9T1053.4 180.6T1100.2 173.0T1146.1 166.9T1192.2 160.3T1238.4 153.0T1284.0 146.6T1330.0 139.7T1377.0 132.0T1423.2 124.9L1445.6 121.5M754.0 222.6L777.1 219.4Q800.1 216.1 822.4 213.1T868.6 206.7T915.4 199.5T961.0 192.3T1006.1 185.7T1052.2 178.4T1098.8 170.9T1144.5 164.8T1190.4 158.3T1236.4 151.1T1281.9 144.8T1327.7 138.1T1374.5 130.5T1420.6 123.4L1442.9 120.0M754.0 219.8L776.9 216.6Q799.9 213.4 822.2 210.5T868.1 204.2T914.7 197.1T960.2 190.0T1005.0 183.4T1050.9 176.2T1097.5 168.8T1143.0 162.8T1188.6 156.3T1234.4 149.2T1279.8 143.0T1325.4 136.4T1371.9 128.9T1417.9 121.9L1440.2 118.5M753.9 217.0L776.8 213.9Q799.7 210.8 822.0 207.9T867.7 201.6T914.1 194.7T959.4 187.8T1004.0 181.3T1049.7 174.1T1096.1 166.7T1141.5 160.7T1186.8 154.3T1232.4 147.3T1277.8 141.3T1323.1 134.8T1369.4 127.4T1415.2 120.4L1437.6 117.0M753.9 214.3L776.7 211.2Q799.5 208.1 821.8 205.4T867.3 199.2T913.4 192.3T958.5 185.5T1003.0 179.1T1048.5 172.0T1094.8 164.7T1140.0 158.7T1185.0 152.4T1230.4 145.4T1275.7 139.5T1320.8 133.1T1366.9 125.9T1412.6 118.9L1435.0 115.6M753.8 211.6L776.6 208.5Q799.3 205.5 821.5 202.8T866.9 196.7T912.7 189.9T957.7 183.3T1001.9 176.9T1047.3 169.9T1093.4 162.7T1138.5 156.7T1183.2 150.4T1228.5 143.6T1273.6 137.7T1318.6 131.5T1364.4 124.4T1409.9 117.5L1432.5 114.1M753.8 209.0L776.5 205.9Q799.2 202.9 821.3 200.3T866.5 194.2T912.1 187.5T956.9 181.1T1000.9 174.8T1046.2 167.9T1092.1 160.7T1137.0 154.8T1181.5 148.5T1226.6 141.7T1271.6 135.9T1316.4 129.8T1361.9 122.9T1407.3 116.0L1429.9 112.7M753.8 206.4L776.4 203.3Q799.0 200.3 821.1 197.8T866.0 191.8T911.4 185.1T956.1 178.9T1000.0 172.7T1045.0 165.8T1090.8 158.7T1135.5 152.8T1179.7 146.6T1224.6 139.9T1269.6 134.2T1314.2 128.2T1359.5 121.4T1404.7 114.6L1427.3 111.3M753.8 203.9L776.3 200.8Q798.8 197.7 820.9 195.3T865.6 189.4T910.7 182.8T955.2 176.7T999.0 170.6T1043.8 163.8T1089.4 156.8T1134.0 150.9T1178.0 144.8T1222.7 138.1T1267.5 132.4T1312.0 126.6T1357.0 119.9T1402.1 113.2L1424.7 109.8M753.8 201.4L776.2 198.3Q798.6 195.2 820.7 192.8T865.2 187.0T910.1 180.5T954.4 174.5T998.0 168.5T1042.7 161.8T1088.1 154.8T1132.6 149.0T1176.3 142.9T1220.8 136.2T1265.5 130.7T1309.9 125.0T1354.6 118.4T1399.5 111.7L1422.1 108.4M753.8 198.9L776.1 195.8Q798.5 192.7 820.5 190.4T864.8 184.6T909.4 178.2T953.6 172.4T997.1 166.5T1041.5 159.8T1086.8 152.9T1131.1 147.1T1174.6 141.1T1218.9 134.5T1263.5 129.0T1307.7 123.4T1352.2 116.9T1396.9 110.3L1419.5 107.0M753.8 196.5L776.1 193.4Q798.3 190.3 820.3 188.0T864.3 182.3T908.7 175.9T952.8 170.2T996.1 164.4T1040.4 157.8T1085.5 151.0T1129.7 145.3T1172.9 139.3T1217.0 132.7T1261.5 127.3T1305.6 121.7T1349.8 115.4T1394.4 108.9L1416.8 105.7M753.8 194.1L777.6 190.8Q801.4 187.5 824.8 185.0T871.8 178.9T919.1 172.1T965.9 166.3T1012.4 159.9T1060.1 152.6T1107.9 146.2T1154.3 139.8T1201.0 133.0T1248.4 126.9T1295.7 121.1T1342.7 114.7T1390.2 107.7L1414.1 104.3M753.8 191.7L777.5 188.4Q801.2 185.1 824.6 182.7T871.4 176.6T918.4 169.9T965.1 164.2T1011.4 158.0T1058.9 150.7T1106.5 144.3T1152.8 138.0T1199.1 131.3T1246.5 125.2T1293.6 119.5T1340.4 113.2T1387.7 106.3L1411.4 102.9M753.8 189.3L777.4 186.1Q801.0 182.8 824.4 180.3T870.9 174.3T917.7 167.7T964.3 162.1T1010.4 156.0T1057.8 148.8T1105.2 142.5T1151.2 136.3T1197.4 129.6T1244.5 123.5T1291.6 117.8T1338.1 111.7T1385.2 104.9L1408.8 101.5M753.8 187.0L777.4 183.8Q800.9 180.6 824.2 178.0T870.4 172.0T917.0 165.5T963.4 160.1T1009.4 154.0T1056.6 146.9T1103.8 140.7T1149.7 134.5T1195.6 127.8T1242.6 121.8T1289.5 116.2T1335.8 110.2T1382.6 103.5L1406.1 100.2M753.8 184.6L777.3 181.5Q800.8 178.3 823.9 175.7T869.9 169.8T916.3 163.3T962.6 158.0T1008.5 152.1T1055.4 145.0T1102.4 138.9T1148.2 132.8T1193.8 126.1T1240.7 120.1T1287.5 114.7T1333.6 108.7T1380.1 102.1L1403.4 98.8M753.9 182.3L777.2 179.2Q800.6 176.1 823.7 173.5T869.5 167.6T915.6 161.2T961.8 155.9T1007.5 150.1T1054.2 143.2T1101.0 137.2T1146.7 131.1T1192.1 124.5T1238.8 118.5T1285.4 113.1T1331.3 107.3T1377.6 100.8L1400.7 97.5M753.9 180.0L777.2 177.0Q800.5 174.0 823.5 171.3T869.0 165.4T914.9 159.1T961.0 153.9T1006.6 148.2T1053.1 141.3T1099.7 135.4T1145.2 129.4T1190.3 122.8T1236.9 116.8T1283.4 111.5T1329.1 105.8T1375.1 99.4L1398.1 96.1M753.9 177.8L777.1 174.8Q800.3 171.8 823.3 169.1T868.5 163.2T914.2 157.0T960.2 151.9T1005.7 146.3T1051.9 139.5T1098.3 133.7T1143.7 127.7T1188.6 121.2T1235.0 115.2T1281.4 110.0T1326.9 104.3T1372.7 98.0L1395.5 94.8M753.9 175.5L777.0 172.6Q800.2 169.7 823.1 166.9T868.1 161.0T913.6 154.9T959.4 149.8T1004.7 144.4T1050.7 137.7T1097.0 131.9T1142.2 126.1T1186.9 119.6T1233.1 113.6T1279.4 108.4T1324.8 102.9T1370.2 96.6L1392.9 93.4M753.9 173.2L777.0 170.4Q800.1 167.6 822.8 164.8T867.6 158.9T912.9 152.9T958.6 147.8T1003.8 142.5T1049.6 135.9T1095.6 130.2T1140.7 124.4T1185.2 118.0T1231.2 112.1T1277.4 106.9T1322.6 101.4T1367.8 95.2L1390.4 92.1M753.9 171.0L776.9 168.3Q800.0 165.6 822.6 162.7T867.1 156.7T912.2 150.8T957.8 145.9T1002.9 140.6T1048.5 134.1T1094.3 128.5T1139.2 122.8T1183.6 116.4T1229.4 110.5T1275.4 105.3T1320.5 100.0T1365.4 93.9L1387.9 90.8M753.8 168.8L776.8 166.2Q799.9 163.5 822.4 160.6T866.7 154.6T911.6 148.8T957.0 143.9T1002.0 138.7T1047.3 132.3T1093.0 126.8T1137.7 121.2T1181.9 114.8T1227.5 108.9T1273.4 103.8T1318.3 98.5T1363.0 92.5L1385.5 89.4M753.8 166.6L776.8 164.0Q799.7 161.5 822.1 158.5T866.2 152.6T910.9 146.8T956.3 141.9T1001.2 136.8T1046.2 130.6T1091.6 125.2T1136.3 119.6T1180.3 113.2T1225.7 107.4T1271.4 102.3T1316.2 97.1T1360.6 91.2L1383.0 88.1M753.8 164.4L776.7 161.9Q799.6 159.5 821.9 156.5T865.8 150.5T910.3 144.8T955.5 140.0T1000.3 134.9T1045.1 128.8T1090.3 123.5T1134.8 118.0T1178.7 111.7T1223.8 105.9T1269.5 100.9T1314.1 95.7T1358.3 89.8L1380.6 86.8M753.8 162.2L776.7 159.9Q799.5 157.5 821.6 154.5T865.3 148.5T909.6 142.9T954.7 138.1T999.4 133.1T1044.0 127.1T1089.0 121.8T1133.4 116.5T1177.1 110.2T1222.0 104.4T1267.5 99.4T1312.0 94.3T1356.0 88.5L1378.2 85.5M753.8 160.1L776.6 157.8Q799.4 155.5 821.4 152.5T864.9 146.5T909.0 140.9T954.0 136.2T998.5 131.2T1042.9 125.3T1087.7 120.2T1131.9 114.9T1175.5 108.7T1220.2 102.9T1265.6 97.9T1309.9 92.9T1353.7 87.1L1375.9 84.2M753.8 158.0L776.5 155.8Q799.2 153.6 821.1 150.5T864.4 144.5T908.4 139.0T953.2 134.3T997.7 129.4T1041.8 123.6T1086.4 118.5T1130.5 113.3T1174.0 107.2T1218.4 101.4T1263.6 96.5T1307.9 91.5T1351.4 85.8L1373.5 82.9M753.8 155.9L776.4 153.7Q799.1 151.6 820.8 148.5T864.0 142.5T907.8 137.1T952.5 132.4T996.8 127.6T1040.7 121.9T1085.1 116.9T1129.0 111.8T1172.4 105.7T1216.6 100.0T1261.7 95.1T1305.8 90.1T1349.1 84.5L1371.1 81.6M753.8 153.8L778.0 151.5Q802.3 149.3 825.6 145.9T871.8 139.4T919.1 134.0T967.1 129.0T1014.4 123.4T1061.7 117.7T1109.1 112.3T1155.9 106.5T1202.9 100.0T1251.2 94.5T1298.7 89.4T1345.2 83.3L1368.8 80.3M753.7 151.8L777.9 149.6Q802.1 147.3 825.3 144.0T871.4 137.5T918.5 132.1T966.3 127.2T1013.5 121.6T1060.5 116.1T1107.7 110.8T1154.4 105.0T1201.2 98.5T1249.3 93.1T1296.7 88.0T1343.0 82.0L1366.4 79.0M753.7 149.7L777.9 147.6Q802.0 145.4 825.0 142.1T870.9 135.6T917.9 130.3T965.5 125.4T1012.5 119.8T1059.3 114.4T1106.4 109.2T1152.9 103.5T1199.5 97.1T1247.4 91.7T1294.6 86.7T1340.8 80.7L1364.1 77.7M753.7 147.8L777.8 145.6Q801.8 143.5 824.7 140.2T870.4 133.7T917.3 128.5T964.8 123.6T1011.6 118.1T1058.1 112.8T1105.0 107.7T1151.5 102.1T1197.8 95.7T1245.6 90.4T1292.6 85.3T1338.7 79.4L1361.7 76.4M753.7 145.8L777.7 143.7Q801.6 141.5 824.4 138.3T870.0 131.9T916.6 126.7T964.0 121.9T1010.7 116.4T1056.9 111.1T1103.7 106.2T1150.0 100.6T1196.2 94.3T1243.7 89.0T1290.6 84.0T1336.5 78.2L1359.3 75.2M753.7 143.8L777.6 141.7Q801.4 139.6 824.1 136.4T869.6 130.1T916.0 124.9T963.2 120.1T1009.8 114.6T1055.8 109.5T1102.3 104.6T1148.5 99.2T1194.6 93.0T1241.8 87.7T1288.6 82.7T1334.4 76.9L1357.0 73.9M753.7 141.9L777.5 139.8Q801.3 137.7 823.8 134.6T869.1 128.3T915.4 123.1T962.5 118.4T1008.9 112.9T1054.6 107.9T1101.0 103.1T1147.1 97.7T1193.0 91.6T1240.0 86.3T1286.7 81.4T1332.2 75.6L1354.7 72.7M753.7 140.0L777.4 137.9Q801.1 135.8 823.6 132.7T868.7 126.5T914.8 121.3T961.7 116.7T1008.0 111.3T1053.5 106.3T1099.7 101.6T1145.6 96.3T1191.4 90.2T1238.1 85.0T1284.7 80.1T1330.1 74.4L1352.4 71.5M753.7 138.1L777.3 136.0Q800.9 133.9 823.3 130.9T868.3 124.7T914.2 119.6T961.0 115.0T1007.1 109.6T1052.3 104.7T1098.3 100.1T1144.2 94.9T1189.8 88.9T1236.3 83.7T1282.7 78.8T1328.0 73.1L1350.1 70.2M753.7 136.3L777.1 134.1Q800.6 132.0 823.0 129.1T867.8 123.0T913.6 117.9T960.2 113.3T1006.1 107.9T1051.2 103.1T1097.0 98.6T1142.7 93.5T1188.2 87.5T1234.5 82.4T1280.8 77.6T1325.9 71.9L1347.8 69.0M753.6 134.4L777.0 132.3Q800.3 130.2 822.4 127.3T867.0 121.3T912.4 116.2T958.8 111.7T1004.4 106.4T1049.1 101.6T1094.5 97.2T1140.0 92.2T1185.2 86.4T1231.0 81.3T1277.0 76.5T1321.8 70.9L1343.6 68.1M753.6 132.6L776.4 130.5Q799.2 128.4 820.9 125.7T864.6 119.8T908.9 114.9T954.3 110.4T999.0 105.3T1042.7 100.5T1087.0 96.3T1131.6 91.7T1175.9 86.0T1220.4 80.9T1265.6 76.3T1309.7 71.0L1331.1 68.4M753.6 130.8L777.7 128.5Q801.8 126.2 824.8 123.3T871.1 117.3T918.3 112.2T966.2 107.5T1013.3 101.9T1059.6 97.2T1106.8 92.8T1153.9 87.2T1200.8 81.7T1248.5 76.6T1295.6 71.4L1318.9 68.6M753.6 129.0L777.1 126.7Q800.6 124.5 823.1 121.7T868.4 115.9T914.5 110.9T961.3 106.3T1007.4 100.8T1052.5 96.2T1098.6 92.0T1144.7 86.9T1190.5 81.3T1236.9 76.3T1283.3 71.5L1306.5 68.8M753.6 127.2L776.5 125.0Q799.5 122.8 821.5 120.2T865.8 114.5T910.6 109.6T956.4 105.1T1001.5 99.9T1045.5 95.3T1090.3 91.2T1135.4 86.5T1180.2 81.0T1225.2 76.1T1270.8 71.5L1293.6 68.8M753.6 125.4L778.0 123.0Q802.3 120.6 825.7 117.8T872.9 112.0T920.9 106.8T969.5 102.0T1017.1 96.4T1064.0 91.9T1112.1 87.6T1159.9 81.9T1207.6 76.6T1256.0 71.6L1280.2 68.8M753.6 123.6L777.3 121.3Q801.0 119.0 823.9 116.3T869.9 110.6T916.6 105.6T964.0 101.0T1010.6 95.5T1056.2 91.0T1102.9 86.9T1149.7 81.6T1196.2 76.4T1243.1 71.5L1266.6 69.0M753.6 121.8L776.7 119.6Q799.7 117.3 822.0 114.7T867.0 109.2T912.3 104.4T958.5 99.9T1004.0 94.6T1048.3 90.1T1093.7 86.2T1139.4 81.4T1184.7 76.1T1230.1 71.4L1253.0 69.3M753.6 120.1L776.0 117.9Q798.4 115.7 820.2 113.2T864.0 107.9T908.0 103.2T953.0 98.9T997.3 93.7T1040.5 89.3T1084.4 85.5T1128.9 81.1T1173.1 76.0T1217.2 71.3L1239.5 69.5M753.6 118.3L777.5 116.0Q801.4 113.6 824.7 110.9T871.6 105.5T918.9 100.5T966.8 95.7T1013.8 90.3T1060.0 85.9T1107.6 81.9T1155.0 76.5T1202.1 71.5L1225.9 69.4M753.6 116.6L776.8 114.3Q799.9 112.0 822.7 109.4T868.2 104.2T914.0 99.4T960.7 94.8T1006.4 89.5T1051.3 85.1T1097.2 81.3T1143.4 76.4T1189.2 71.4L1212.0 69.1M753.6 114.8L776.0 112.6Q798.4 110.4 820.6 108.0T864.8 102.9T909.2 98.3T954.4 93.9T999.0 88.7T1042.5 84.4T1086.7 80.7T1131.7 76.3T1176.2 71.4L1198.0 68.7M753.6 113.1L777.7 110.8Q801.8 108.4 825.6 105.6T873.3 100.4T921.3 95.6T969.8 90.6T1017.4 85.3T1064.2 80.9T1112.6 76.9T1160.7 71.6L1184.3 68.6M753.6 111.4L776.9 109.1Q800.2 106.9 823.3 104.2T869.5 99.2T915.8 94.6T962.8 89.8T1009.0 84.6T1054.2 80.3T1100.8 76.5T1147.5 71.6L1170.8 68.8M753.6 109.6L776.0 107.5Q798.5 105.3 821.0 102.8T865.7 98.0T910.3 93.5T955.8 89.1T1000.5 83.9T1044.3 79.6T1088.8 76.1T1134.2 71.6L1157.2 69.2M753.6 107.9L778.0 105.6Q802.4 103.3 826.7 100.5T875.2 95.5T923.9 90.8T973.0 85.5T1021.2 80.4T1068.8 76.1T1118.0 71.9L1143.1 69.6M753.6 106.2L777.0 104.0Q800.4 101.8 824.0 99.1T870.8 94.3T917.6 89.8T965.0 85.0T1011.5 79.8T1057.3 75.5T1104.5 71.8L1128.3 69.7M753.6 104.5L776.1 102.4Q798.5 100.4 821.3 97.8T866.4 93.2T911.3 88.9T956.9 84.4T1001.8 79.3T1045.8 75.0T1090.7 71.6L1113.4 69.5M753.6 102.8L775.1 100.8Q796.6 98.9 818.6 96.5T862.0 92.0T904.9 88.0T948.6 83.8T992.0 78.8T1034.3 74.6T1077.0 71.2L1098.6 69.3M753.6 101.1L777.2 99.0Q800.8 96.9 824.7 94.2T872.2 89.5T919.4 85.2T967.2 80.2T1014.1 75.1T1060.5 71.0L1084.1 69.2M753.6 99.4L776.1 97.5Q798.5 95.5 821.6 92.9T867.0 88.5T912.0 84.4T957.7 79.8T1002.8 74.8T1047.1 70.6L1069.4 69.1M753.6 97.8L774.9 95.9Q796.3 94.1 818.4 91.7T861.8 87.4T904.6 83.6T948.1 79.5T991.3 74.5T1033.6 70.3L1054.5 68.9M753.5 96.1L777.3 94.1Q801.1 92.1 825.5 89.3T873.6 84.8T921.2 80.7T969.4 75.5T1016.8 70.6L1039.7 68.5M753.5 94.5L776.0 92.6Q798.5 90.7 821.8 88.1T867.4 83.9T912.4 80.0T958.1 75.4T1003.2 70.5L1025.3 67.9M753.5 92.8L774.7 91.1Q795.9 89.4 818.0 87.0T861.2 82.9T903.7 79.4T946.7 75.3T989.6 70.5L1011.0 67.7M753.5 91.2L777.5 89.3Q801.6 87.3 826.3 84.6T875.0 80.2T923.0 76.3T971.6 71.0L996.2 68.0M753.5 89.6L775.9 87.8Q798.4 86.1 821.7 83.5T867.4 79.4T912.3 75.8T957.8 71.2L980.7 68.7M753.5 88.0L774.3 86.4Q795.2 84.8 817.1 82.4T859.7 78.6T901.6 75.3T943.8 71.4L964.8 69.4M753.4 86.5L777.7 84.5Q802.0 82.6 827.2 80.0T876.4 75.7T924.8 71.9L949.1 69.7M753.4 84.9L775.7 83.2Q798.0 81.5 821.3 79.0T866.7 75.1T911.2 71.7L933.6 69.7M753.4 83.4L773.7 81.8Q794.0 80.3 815.3 78.0T856.9 74.4T897.5 71.4L918.0 69.7M753.4 81.8L778.0 79.9Q802.6 77.9 828.0 75.5T877.8 71.4L902.0 69.7M753.4 80.3L775.2 78.7Q797.1 77.0 820.0 74.6T864.5 71.0L886.1 69.7M753.4 78.8L772.5 77.4Q791.7 76.0 811.7 73.8T851.1 70.5L870.5 69.4M753.3 77.4L803.1 73.3L854.7 68.7M753.3 75.9L794.8 72.7L838.1 68.3M753.3 74.5L820.9 68.3M753.3 73.1L803.6 68.8M753.3 71.6L786.8 69.2M753.3 70.3L770.0 69.2M1918.6 377.7L1908.3 368.9M1918.5 382.7L1889.1 357.8M1918.5 387.9L1868.1 347.0M1918.6 393.2L1885.4 365.8L1848.6 336.9M1918.9 398.5L1904.9 387.2Q1890.9 375.9 1875.3 363.5T1844.1 339.4L1828.6 327.6M1919.2 403.8L1902.1 390.1Q1885.1 376.5 1866.3 361.5T1828.8 332.6L1810.0 318.7M1919.6 409.1L1904.5 397.4Q1889.3 385.6 1873.0 372.5T1840.2 346.6T1808.9 321.8L1793.9 309.7M1920.1 414.4L1902.7 401.0Q1885.3 387.5 1866.6 372.4T1829.1 343.0T1793.7 314.5L1776.9 300.3M1920.5 419.7L1904.6 407.7Q1888.7 395.8 1872.2 382.5T1839.2 355.7T1807.0 329.7T1775.8 303.9L1760.0 290.6M1920.9 425.0L1903.3 411.7Q1885.7 398.4 1867.4 383.6T1830.6 353.9T1795.6 325.2T1761.5 296.1L1744.0 281.0M1921.1 430.4L1902.0 415.8Q1882.9 401.2 1862.8 384.8T1822.5 352.3T1784.3 320.7T1746.7 288.4L1727.2 271.7M1921.2 436.2L1903.7 422.8Q1886.2 409.4 1868.7 395.0T1832.9 365.4T1798.0 336.4T1764.2 307.7T1728.9 278.0L1710.9 263.0M1921.2 442.2L1902.6 427.5Q1883.9 412.9 1865.0 397.3T1826.4 365.3T1789.2 334.0T1753.1 302.7T1715.4 270.7L1696.4 254.9M1921.0 448.6L1903.9 434.8Q1886.8 421.0 1870.4 407.0T1835.8 377.8T1800.5 348.3T1766.8 319.9T1732.8 290.6T1698.9 261.4L1682.5 247.3M1920.7 455.4L1902.8 440.3Q1884.9 425.2 1867.4 410.3T1830.6 378.9T1793.7 347.5T1758.0 317.0T1721.4 285.5T1685.5 254.7L1668.2 239.9M1920.4 462.5L1904.0 448.0Q1887.6 433.4 1872.2 419.9T1838.6 391.0T1803.0 361.2T1769.7 332.7T1737.1 303.9T1703.6 274.6T1670.7 246.4L1654.5 232.5M1920.0 469.7L1903.0 454.0Q1886.0 438.3 1869.7 423.8T1834.5 393.2T1797.4 361.6T1762.3 331.4T1727.3 300.7T1692.5 269.9T1658.5 240.1L1641.3 225.2M1919.8 476.9L1902.0 460.0Q1884.3 443.1 1867.3 427.9T1830.4 395.5T1792.0 362.2T1755.2 330.3T1717.9 297.8T1681.6 265.5T1646.0 234.0L1627.9 218.1M1919.7 483.9L1903.3 467.8Q1886.9 451.7 1871.4 437.4T1837.4 407.6T1801.0 376.3T1766.9 346.1T1733.3 316.2T1698.8 285.5T1665.2 255.9T1631.5 226.3L1614.2 211.1M1919.7 490.7L1902.5 473.6Q1885.3 456.6 1869.2 441.5T1834.0 410.3T1796.3 377.7T1760.7 346.1T1725.3 314.7T1689.7 282.7T1655.2 251.7T1619.6 220.4L1601.2 204.3M1919.9 497.2L1903.6 481.1Q1887.2 465.0 1872.0 450.4T1839.4 421.4T1804.8 391.0T1771.8 360.7T1738.9 331.6T1704.3 301.6T1671.4 271.8T1639.6 242.8T1606.3 213.0L1589.2 197.9M1920.3 503.5L1902.9 486.8Q1885.5 470.1 1869.8 454.7T1836.3 424.4T1800.6 392.8T1766.5 361.4T1732.3 331.1T1696.7 299.8T1662.6 269.0T1629.1 238.6T1594.7 207.4L1577.6 191.8M1920.8 509.9L1902.4 492.6Q1883.9 475.3 1867.7 459.1T1833.1 427.4T1796.5 394.8T1761.3 362.2T1725.8 330.8T1689.3 298.2T1654.2 266.3T1618.9 234.5T1583.4 202.0L1565.9 185.9M1921.4 516.6L1903.3 500.5Q1885.1 484.4 1869.7 468.4T1838.2 438.1T1805.0 407.9T1771.7 376.7T1738.2 347.0T1703.2 316.8T1669.9 286.1T1637.9 256.3T1604.4 225.9T1570.9 195.2L1554.5 180.2M1921.9 523.5L1902.8 507.1Q1883.7 490.6 1867.7 473.8T1835.3 442.0T1801.3 410.6T1767.4 378.3T1732.9 347.5T1696.6 316.2T1662.3 284.5T1629.1 253.5T1594.8 221.8T1560.6 190.1L1543.8 174.7M1922.4 530.8L1903.7 515.6Q1885.1 500.3 1869.9 483.8T1840.2 453.0T1808.6 423.5T1775.5 392.7T1743.4 362.8T1710.4 333.6T1677.2 303.3T1645.3 273.6T1613.0 244.1T1580.7 213.6T1549.1 183.7L1533.3 169.1M1922.8 538.2L1903.5 522.8Q1884.2 507.4 1868.5 490.3T1837.7 458.0T1805.2 427.4T1771.6 395.4T1738.7 364.4T1704.4 334.0T1670.6 302.6T1638.0 271.9T1604.5 241.2T1571.2 209.6T1538.9 178.8L1522.6 163.5M1923.1 545.5L1903.4 530.1Q1883.6 514.6 1867.4 496.9T1835.4 463.4T1802.0 431.6T1767.7 398.6T1734.0 366.3T1698.6 334.7T1664.1 302.1T1630.8 270.4T1596.3 238.4T1562.2 205.8T1528.7 173.8L1511.6 157.9M1923.3 552.7L1904.9 538.4Q1886.6 524.2 1870.8 507.6T1840.1 475.4T1807.8 445.1T1774.7 414.0T1744.2 382.4T1712.3 352.3T1678.2 321.4T1645.6 290.4T1613.7 260.2T1581.5 229.2T1549.9 198.2T1517.5 167.7L1500.9 152.3M1923.5 559.9L1905.1 545.3Q1886.8 530.8 1870.3 514.2T1838.3 481.3T1804.8 450.0T1771.1 418.1T1739.9 385.5T1707.2 354.2T1672.7 322.1T1639.3 289.9T1606.2 258.6T1573.3 226.4T1541.3 194.5T1508.0 162.8L1490.7 146.7M1923.6 567.3L1905.4 552.3Q1887.1 537.3 1869.9 520.7T1836.5 487.2T1802.0 455.0T1767.5 422.4T1735.7 388.7T1702.3 356.3T1667.3 323.0T1633.3 289.7T1598.9 257.1T1565.3 223.7T1532.7 190.9T1498.7 158.0L1481.1 141.2M1923.7 575.4L1907.1 560.6Q1890.5 545.9 1873.4 530.8T1840.4 499.1T1807.7 468.0T1775.1 437.7T1745.1 405.5T1714.0 374.0T1680.1 342.7T1647.8 310.3T1616.2 278.8T1583.6 247.2T1551.7 215.1T1520.3 183.8T1488.0 152.1L1471.6 135.8M1923.7 584.6L1907.1 568.7Q1890.6 552.9 1872.8 537.7T1838.9 505.3T1805.4 473.2T1771.9 442.1T1741.3 409.2T1709.6 376.9T1675.2 344.6T1642.2 311.1T1609.7 278.5T1576.6 245.7T1544.3 212.5T1511.9 180.2T1478.7 147.3L1462.2 130.6M1923.5 594.9L1906.8 577.8Q1890.1 560.7 1872.0 545.2T1837.5 512.0T1803.3 478.5T1768.9 446.6T1737.6 412.9T1705.3 379.7T1670.4 346.4T1636.8 311.9T1603.3 278.3T1569.7 244.3T1537.0 210.1T1503.7 176.7T1469.7 142.8L1452.9 125.6M1922.9 605.9L1907.2 588.8Q1891.5 571.6 1873.9 556.8T1841.4 525.1T1810.4 492.1T1777.2 461.1T1745.1 429.5T1714.8 397.0T1683.0 365.6T1651.3 332.9T1619.6 300.0T1586.5 267.8T1554.7 234.7T1524.2 202.1T1492.5 169.9T1460.1 137.1L1444.1 120.7M1922.0 617.1L1906.0 599.1Q1890.1 581.1 1872.5 565.7T1840.1 533.1T1808.9 498.8T1774.8 466.3T1741.8 433.6T1710.7 400.1T1678.4 367.9T1646.5 334.4T1614.3 300.6T1580.5 267.4T1548.0 233.3T1516.8 199.8T1484.5 166.5T1451.9 132.7L1435.8 116.0M1920.8 627.7L1904.7 609.3Q1888.5 590.8 1871.0 574.9T1838.8 541.5T1807.5 506.0T1772.5 471.9T1738.6 438.1T1706.8 403.4T1673.9 370.2T1641.6 335.8T1609.0 301.3T1574.6 267.1T1541.5 232.0T1509.4 197.6T1476.6 163.1T1443.9 128.5L1427.7 111.5M1919.7 637.6L1904.4 620.2Q1889.2 602.7 1873.0 586.9T1842.9 555.3T1813.6 521.5T1779.8 487.7T1746.1 455.2T1716.5 421.3T1686.2 388.6T1654.3 356.3T1623.1 322.7T1591.2 290.0T1559.2 256.8T1528.4 223.0T1497.1 190.0T1465.5 156.6T1434.7 123.3L1419.4 107.0M1918.8 647.2L1903.6 629.8Q1888.4 612.3 1872.0 595.7T1841.4 563.4T1811.8 529.3T1777.7 494.4T1743.4 460.8T1713.1 425.7T1682.1 391.6T1649.9 358.3T1618.4 323.9T1585.7 290.3T1553.2 256.3T1522.1 221.8T1490.2 187.9T1458.0 153.4T1426.6 119.3L1410.9 102.6M1918.7 657.2L1904.6 640.7Q1890.6 624.3 1874.7 607.3T1844.1 575.8T1815.4 544.2T1784.8 510.3T1752.5 477.8T1722.3 444.4T1691.8 410.3T1660.8 377.9T1631.7 344.9T1601.9 311.8T1569.6 279.7T1538.6 246.5T1509.1 213.4T1478.7 180.7T1448.1 147.2T1417.7 114.4L1402.4 98.3M1919.2 667.9L1905.2 651.4Q1891.2 634.8 1874.4 616.7T1842.2 583.4T1813.0 551.3T1782.9 516.9T1750.5 483.6T1719.5 449.7T1688.2 414.5T1656.5 380.9T1627.3 346.9T1597.0 312.9T1564.4 279.9T1532.9 246.0T1502.7 212.2T1471.9 178.5T1441.2 144.3T1410.1 110.6L1394.2 94.1M1920.2 679.2L1906.1 662.7Q1892.0 646.1 1874.3 626.9T1840.4 591.5T1810.6 558.3T1781.0 523.3T1748.4 489.2T1716.8 454.9T1684.7 418.8T1652.4 384.2T1622.8 349.1T1592.2 314.1T1559.2 280.3T1527.4 245.5T1496.3 211.1T1465.1 176.5T1434.3 141.4T1402.6 106.9L1386.2 89.9M1921.3 690.4L1907.8 675.0Q1894.4 659.5 1876.9 640.9T1842.8 605.2T1814.2 572.4T1787.7 538.7T1756.4 505.0T1724.6 472.8T1694.8 438.5T1664.4 404.4T1634.6 370.9T1605.6 336.3T1574.9 303.0T1544.2 270.0T1514.4 236.3T1484.0 203.2T1453.9 169.6T1424.7 135.7T1394.4 102.3L1378.6 85.7M1921.6 700.8L1907.9 685.5Q1894.2 670.1 1876.6 651.7T1841.9 615.0T1812.4 580.5T1785.5 545.8T1754.0 510.7T1722.2 477.7T1691.9 443.1T1660.7 408.4T1630.6 374.1T1601.3 338.7T1570.1 304.3T1539.0 270.4T1508.9 235.9T1478.0 202.1T1447.4 167.7T1417.8 133.0T1387.0 98.7L1371.1 81.5M1920.9 711.0L1907.1 695.1Q1893.3 679.2 1876.2 661.6T1841.7 624.9T1811.0 589.1T1783.2 553.4T1751.5 516.8T1719.7 482.7T1689.2 447.7T1657.3 412.3T1626.6 377.5T1597.0 341.2T1565.3 305.9T1533.9 271.0T1503.5 235.7T1472.1 201.1T1441.2 165.8T1411.0 130.4T1379.7 95.3L1363.6 77.5M1919.1 722.0L1905.9 705.6Q1892.8 689.1 1878.4 673.5T1847.1 639.3T1815.7 604.3T1787.1 570.5T1757.5 534.4T1728.2 500.0T1700.0 466.7T1668.6 432.1T1636.9 398.8T1609.2 364.6T1580.9 329.5T1550.0 295.6T1519.8 261.2T1490.3 227.2T1460.5 193.6T1431.3 159.3T1401.9 125.1T1371.5 90.9L1356.2 73.5M1916.9 734.9L1904.0 716.5Q1891.0 698.0 1877.9 682.4T1847.6 648.1T1814.7 612.7T1784.8 578.8T1755.0 542.3T1725.8 506.3T1697.5 471.9T1665.6 436.5T1633.4 402.4T1605.1 367.9T1576.5 332.1T1545.5 297.3T1515.0 262.0T1484.8 227.1T1454.7 192.7T1425.4 157.5T1395.4 122.7T1364.4 87.6L1348.9 69.6M1915.7 749.1L1902.6 729.0Q1889.5 708.8 1877.4 692.5T1847.9 657.5T1814.1 621.3T1783.3 587.2T1753.3 551.1T1723.9 514.1T1695.6 478.7T1663.6 442.2T1630.9 407.3T1602.1 372.4T1573.2 336.2T1542.2 300.7T1511.5 264.6T1480.9 228.8T1450.4 193.6T1421.0 157.8T1390.8 122.3T1359.5 86.5L1343.8 68.1M1916.3 762.7L1903.1 743.1Q1889.9 723.5 1878.8 706.8T1851.1 672.7T1818.7 636.9T1789.7 603.2T1761.8 570.3T1731.6 534.7T1703.5 500.2T1676.0 465.2T1645.4 429.8T1615.4 396.5T1587.3 362.3T1558.6 327.6T1529.8 293.4T1501.0 258.2T1471.0 223.7T1441.8 189.6T1414.0 154.9T1385.1 120.7T1355.0 86.0L1340.1 68.2M1918.6 774.6L1903.9 755.7Q1889.2 736.9 1877.2 719.2T1849.6 684.5T1818.4 647.8T1789.9 612.1T1761.1 578.9T1729.6 543.4T1701.5 508.6T1674.7 473.3T1644.1 436.7T1613.4 402.4T1584.9 367.6T1556.1 332.5T1527.3 297.9T1498.3 262.1T1468.1 226.7T1438.6 191.8T1410.6 156.5T1381.6 121.7T1351.4 86.4L1336.4 68.2M1921.9 785.6L1905.2 767.7Q1888.6 749.8 1875.5 731.4T1847.8 696.6T1818.1 660.0T1790.0 622.3T1760.4 587.8T1727.9 552.2T1699.5 516.9T1673.3 481.6T1642.7 444.3T1611.4 408.6T1582.5 373.2T1553.6 337.4T1524.8 302.4T1495.7 266.0T1465.2 229.9T1435.4 194.2T1407.2 158.1T1378.1 122.7T1347.8 86.8L1332.8 68.3M1924.4 798.1L1906.3 780.5Q1888.1 762.8 1874.2 743.5T1846.4 708.3T1817.7 672.7T1789.6 634.0T1759.6 597.8T1726.5 561.3T1697.6 525.1T1671.7 490.0T1641.2 452.3T1609.6 415.5T1580.3 379.1T1551.1 342.5T1522.2 306.9T1493.1 270.1T1462.3 233.2T1432.3 196.7T1403.9 159.9T1374.5 123.8T1344.2 87.2L1329.1 68.4M1925.1 812.9L1907.3 796.2Q1889.6 779.4 1876.1 759.7T1850.0 723.9T1822.2 691.0T1793.4 654.9T1766.3 618.5T1736.7 583.2T1706.8 546.7T1680.3 512.6T1652.7 477.9T1623.2 441.4T1595.1 406.1T1566.6 370.1T1537.5 334.7T1510.3 300.2T1482.7 264.3T1453.0 228.7T1424.2 193.1T1396.9 157.2T1368.8 122.2T1339.9 86.7L1325.5 68.5M1923.9 828.8L1907.2 812.1Q1890.6 795.4 1877.2 775.4T1850.4 737.0T1820.7 702.6T1791.3 667.2T1765.6 630.5T1736.8 594.6T1705.5 556.7T1677.8 521.0T1650.7 486.2T1621.8 449.4T1593.3 413.4T1564.2 376.5T1534.8 339.9T1507.6 304.7T1479.9 268.4T1450.1 232.0T1421.0 195.7T1393.4 159.0T1365.2 123.3T1336.3 87.1L1321.9 68.6M1922.1 844.3L1907.1 827.6Q1892.0 810.9 1878.5 791.9T1850.7 752.4T1819.3 715.2T1789.2 679.3T1764.8 642.3T1736.7 606.4T1704.2 567.9T1675.5 530.2T1648.7 494.4T1620.1 457.3T1591.5 420.8T1561.9 383.3T1532.1 345.5T1504.8 309.4T1477.2 272.5T1447.2 235.5T1417.9 198.4T1390.0 160.9T1361.5 124.4T1332.6 87.5L1318.3 68.7M1921.4 860.8L1907.9 843.3Q1894.4 825.9 1880.6 809.8T1853.2 773.5T1823.7 735.6T1794.4 700.0T1770.0 663.2T1744.2 628.4T1713.4 593.2T1685.0 555.1T1659.7 519.2T1631.7 483.4T1603.5 447.4T1577.0 412.3T1548.7 375.2T1520.0 338.7T1493.7 303.3T1466.8 267.1T1438.2 231.4T1410.3 195.2T1383.2 158.6T1355.8 123.0T1328.3 87.0L1314.7 68.7M1922.0 879.9L1907.8 859.9Q1893.5 839.9 1879.1 824.0T1852.3 789.0T1824.8 751.0T1794.4 714.4T1767.6 676.1T1742.3 639.3T1713.0 604.5T1684.2 566.5T1657.6 529.1T1629.3 492.2T1601.5 455.1T1575.2 419.6T1546.5 382.2T1517.3 344.6T1490.8 308.1T1464.0 271.2T1435.3 234.8T1407.2 197.9T1379.7 160.6T1352.1 124.1T1324.7 87.4L1311.0 68.7M1923.1 900.1L1907.5 878.5Q1891.8 857.0 1876.9 839.3T1851.2 803.3T1826.1 765.7T1794.7 729.0T1765.1 690.4T1740.1 651.0T1712.6 615.2T1683.6 577.6T1655.7 539.6T1626.8 501.7T1599.4 463.0T1573.4 426.7T1544.3 389.2T1514.6 350.8T1488.0 313.3T1461.1 275.4T1432.3 238.2T1404.0 200.8T1376.2 162.7T1348.4 125.3T1321.0 87.8L1307.3 68.8M1923.4 917.1L1907.9 897.6Q1892.4 878.1 1877.7 859.0T1853.2 822.5T1830.7 785.4T1800.4 749.4T1769.6 714.5T1746.3 675.4T1721.6 638.1T1692.2 602.5T1664.9 565.5T1638.9 529.4T1611.4 491.6T1585.1 454.0T1559.1 418.6T1530.9 381.7T1503.5 344.5T1477.7 307.7T1451.0 270.5T1423.6 234.4T1396.7 197.8T1369.8 160.6T1342.9 124.1T1316.6 87.3L1303.6 68.8M1922.6 931.1L1908.5 913.4Q1894.4 895.7 1878.9 875.9T1851.9 838.6T1828.5 800.6T1800.4 762.1T1770.1 727.3T1744.9 689.5T1719.3 650.5T1690.6 613.4T1664.1 575.5T1637.7 539.2T1608.9 501.4T1582.4 462.3T1557.1 425.7T1528.8 388.3T1500.8 350.7T1474.8 313.1T1448.0 274.9T1420.6 237.8T1393.5 200.6T1366.3 162.7T1339.2 125.3T1312.9 87.7L1299.8 68.8M1921.4 946.6L1909.6 929.0Q1897.9 911.4 1881.2 891.3T1850.5 854.0T1825.5 816.8T1800.2 776.2T1771.1 739.1T1743.8 702.5T1716.8 663.3T1688.8 625.1T1663.3 585.8T1636.5 548.5T1606.6 511.1T1579.8 471.2T1555.0 433.1T1526.8 395.0T1498.1 356.8T1471.8 318.6T1445.0 279.4T1417.5 241.3T1390.3 203.4T1362.8 164.9T1335.5 126.7T1309.1 88.2L1296.0 68.8M1920.2 964.9L1910.5 947.4Q1900.7 929.9 1884.5 910.0T1852.4 871.9T1827.0 837.3T1805.5 799.7T1777.9 760.5T1748.9 724.7T1723.6 687.6T1698.0 650.8T1671.9 613.2T1646.3 574.2T1618.8 538.4T1591.6 501.4T1567.2 462.8T1541.5 425.6T1513.6 387.8T1487.4 350.8T1462.1 313.5T1435.5 275.0T1409.1 237.8T1383.2 200.6T1356.5 163.0T1330.1 125.6T1304.7 87.8L1292.1 68.8M1918.6 983.1L1908.5 965.3Q1898.3 947.6 1883.8 928.3T1853.7 888.0T1827.0 850.8T1803.6 814.9T1776.1 775.4T1748.5 737.5T1723.6 699.3T1696.4 662.0T1669.1 625.2T1644.8 585.0T1618.0 547.3T1589.5 510.3T1564.3 471.5T1539.1 433.3T1511.5 394.5T1484.8 356.6T1459.1 318.9T1432.4 279.7T1406.0 241.4T1379.9 203.4T1353.0 165.1T1326.4 126.9T1300.9 88.2L1288.2 68.8M1916.9 1002.5L1905.8 983.6Q1894.7 964.7 1884.0 948.4T1859.0 911.2T1831.1 871.4T1805.2 835.7T1780.3 798.9T1755.8 761.6T1731.3 724.4T1703.6 685.7T1676.3 650.4T1654.0 613.9T1630.1 574.6T1601.1 538.1T1574.7 501.1T1552.3 463.8T1526.8 426.5T1499.2 387.9T1474.2 351.2T1449.6 314.1T1423.5 275.7T1398.0 238.2T1372.9 200.7T1346.8 163.4T1321.2 126.0T1296.5 87.9L1284.2 68.8M1916.8 1026.5L1904.9 1004.6Q1892.9 982.7 1883.0 965.7T1859.1 929.9T1830.7 890.2T1804.6 851.5T1779.7 813.6T1754.2 775.7T1729.6 739.0T1703.3 698.9T1675.3 661.0T1651.3 625.1T1627.9 585.9T1599.9 547.7T1572.9 509.7T1549.5 471.9T1524.1 434.4T1496.9 394.9T1471.7 356.9T1446.6 319.4T1420.3 280.4T1394.9 242.0T1369.6 203.6T1343.3 165.4T1317.6 127.3T1292.7 88.4L1280.2 68.8M1919.7 1050.1L1906.9 1028.7Q1894.1 1007.3 1882.6 986.6T1856.9 948.1T1829.7 909.3T1805.5 869.8T1779.8 830.4T1751.5 789.9T1727.3 753.1T1703.5 713.8T1674.9 673.0T1648.4 635.9T1625.3 597.1T1598.9 558.1T1571.3 519.0T1546.7 479.9T1521.3 442.3T1494.6 402.3T1469.2 362.9T1443.6 324.6T1417.1 285.2T1391.7 245.9T1366.3 206.5T1339.8 167.5T1313.9 128.6T1288.8 88.9L1276.2 68.9M1922.8 1069.9L1909.4 1052.1Q1896.0 1034.3 1883.2 1013.0T1857.6 973.0T1832.9 934.2T1810.2 895.0T1785.0 857.9T1756.1 817.6T1732.3 777.8T1712.0 741.9T1684.7 702.4T1655.5 663.2T1633.5 625.8T1611.4 587.5T1583.4 550.1T1557.1 510.8T1534.4 472.5T1509.6 435.8T1483.5 396.4T1458.8 357.9T1434.0 320.1T1408.7 281.4T1384.1 243.0T1359.2 204.1T1333.7 165.8T1308.9 127.7T1284.5 88.6L1272.2 68.9M1922.0 1093.4L1908.3 1075.0Q1894.5 1056.5 1883.0 1035.9T1858.7 996.0T1832.2 956.5T1807.6 914.8T1784.4 876.0T1757.2 837.4T1730.6 795.0T1708.8 756.3T1683.8 717.6T1655.3 677.4T1631.3 638.2T1608.6 598.4T1581.6 560.7T1555.6 521.1T1532.0 480.9T1506.6 443.4T1480.8 404.0T1456.4 364.3T1431.1 325.4T1405.4 286.1T1380.9 247.0T1355.9 207.2T1330.1 167.9T1305.2 129.0T1280.7 89.1L1268.2 69.0M1916.8 1115.0L1903.9 1096.3Q1890.9 1077.6 1881.9 1057.4T1860.4 1017.3T1832.3 980.1T1805.8 940.8T1786.8 899.2T1763.6 862.3T1733.6 823.1T1709.8 782.4T1690.9 744.0T1665.2 704.9T1636.9 666.8T1614.5 627.3T1592.6 588.0T1566.9 551.5T1541.6 512.1T1518.0 473.0T1494.1 435.9T1470.0 397.2T1445.7 358.7T1420.8 320.2T1396.8 281.8T1373.3 243.6T1348.7 204.5T1323.8 166.0T1300.1 127.9T1276.4 88.7L1264.1 69.1M1901.1 1113.8L1888.7 1096.6Q1876.4 1079.5 1867.4 1058.4T1846.0 1017.3T1818.5 980.6T1793.1 942.1T1773.5 900.8T1750.3 862.9T1722.3 823.9T1698.8 784.4T1678.4 744.9T1653.9 705.0T1627.8 667.8T1604.5 627.9T1581.8 587.9T1558.1 551.3T1533.8 512.1T1509.2 472.9T1485.7 435.4T1463.0 396.9T1438.8 358.7T1413.8 319.9T1390.5 281.5T1367.6 243.5T1343.2 204.4T1318.7 165.9T1295.6 127.8T1272.2 88.8L1260.1 69.2M1884.4 1111.6L1874.1 1095.4Q1863.7 1079.3 1854.0 1058.5T1830.8 1017.5T1804.1 980.2T1781.1 942.3T1760.5 902.4T1736.3 863.7T1711.0 824.1T1688.3 786.1T1665.9 746.3T1642.2 705.3T1618.7 668.5T1594.7 628.8T1571.0 588.3T1549.0 551.2T1525.9 512.2T1500.6 473.1T1477.2 434.9T1455.9 396.5T1432.0 358.6T1406.8 319.7T1384.1 281.2T1362.0 243.4T1337.8 204.3T1313.6 165.8T1291.1 127.7T1268.1 88.8L1256.1 69.3M1867.3 1110.1L1858.6 1093.0Q1849.9 1075.8 1839.5 1054.8T1813.5 1013.8T1785.9 974.6T1765.1 934.6T1743.6 895.3T1716.5 854.4T1691.8 813.2T1670.4 774.8T1646.4 732.3T1621.3 690.9T1597.8 652.2T1573.9 609.9T1550.1 569.4T1527.0 529.6T1502.3 489.1T1477.7 449.0T1455.2 408.6T1431.7 369.5T1406.2 329.4T1382.6 288.9T1359.9 249.8T1335.5 209.6T1310.9 169.4T1287.8 129.7T1264.4 89.5L1252.1 69.3M1852.1 1110.2L1843.3 1091.6Q1834.6 1073.1 1824.3 1052.5T1799.5 1013.3T1773.0 973.9T1751.2 933.1T1729.6 895.4T1704.9 854.8T1680.7 813.1T1657.5 775.3T1634.6 733.5T1611.9 691.8T1587.7 652.6T1562.8 611.0T1540.9 570.2T1518.9 529.6T1493.3 489.5T1469.1 449.4T1447.9 408.4T1424.6 369.4T1399.2 329.4T1376.2 288.8T1354.1 249.6T1330.0 209.5T1305.8 169.3T1283.2 129.6T1260.2 89.5L1248.2 69.4M1839.7 1111.2L1829.1 1091.3Q1818.4 1071.4 1807.6 1050.3T1785.0 1012.0T1761.3 973.3T1737.5 931.6T1714.7 894.3T1693.4 854.7T1670.2 813.0T1644.5 775.0T1622.4 734.2T1602.6 693.0T1577.8 652.8T1551.8 611.8T1531.5 571.3T1510.6 529.8T1484.6 489.8T1460.5 449.8T1440.4 408.3T1417.6 369.2T1392.3 329.3T1369.8 288.7T1348.2 249.4T1324.5 209.4T1300.7 169.2T1278.5 129.4T1256.0 89.4L1244.2 69.5M1828.0 1112.0L1815.5 1091.7Q1803.0 1071.3 1791.0 1049.3T1769.8 1010.5T1749.5 972.4T1724.3 930.5T1699.9 892.7T1681.2 853.8T1659.5 813.0T1632.2 774.2T1610.2 734.1T1592.5 694.0T1568.0 652.9T1541.3 612.3T1521.8 572.5T1502.0 530.2T1476.1 490.2T1452.1 450.3T1432.7 408.5T1410.4 369.2T1385.5 329.3T1363.3 288.7T1342.3 249.3T1319.0 209.3T1295.7 169.2T1273.9 129.3T1251.8 89.3L1240.2 69.5M1814.1 1112.2L1801.1 1092.1Q1788.0 1071.9 1775.6 1049.6T1755.1 1009.6T1736.3 971.1T1711.1 930.1T1686.3 891.2T1668.6 852.1T1647.8 812.8T1620.5 773.3T1598.7 733.2T1581.7 694.6T1557.8 653.1T1531.5 612.4T1512.2 573.3T1492.8 530.8T1467.6 490.5T1444.1 450.8T1424.8 408.9T1403.0 369.2T1378.8 329.3T1356.9 288.8T1336.2 249.1T1313.5 209.1T1290.7 169.2T1269.2 129.1T1247.5 89.2L1236.2 69.5M1798.0 1112.8L1784.9 1092.5Q1771.9 1072.1 1760.9 1050.7T1741.5 1010.0T1721.9 969.9T1697.1 929.9T1674.0 890.5T1656.1 850.1T1634.9 812.1T1609.1 772.5T1588.1 731.9T1570.3 694.5T1547.1 653.2T1522.2 612.4T1502.7 573.8T1483.2 531.5T1459.2 490.9T1436.3 451.1T1416.8 409.5T1395.5 369.4T1372.2 329.3T1350.6 288.9T1330.0 249.1T1308.0 209.0T1285.7 169.2T1264.5 129.0T1243.2 89.1L1232.2 69.5M1781.5 1114.5L1768.1 1093.1Q1754.7 1071.6 1745.9 1051.8T1728.7 1011.6T1707.4 969.5T1682.5 929.8T1662.1 890.5T1644.0 848.6T1621.4 811.1T1597.5 771.7T1578.0 730.6T1558.9 693.7T1535.9 653.1T1513.1 612.2T1493.5 573.8T1473.3 532.1T1450.6 491.4T1428.8 451.4T1408.8 410.0T1387.8 369.7T1365.6 329.3T1344.4 289.1T1323.8 249.0T1302.4 208.9T1280.7 169.2T1259.7 128.9T1238.8 89.0L1228.2 69.5M1766.0 1117.1L1752.2 1094.2Q1738.4 1071.3 1730.8 1052.7T1715.1 1013.6T1693.3 970.2T1668.2 930.0T1649.7 890.9T1631.9 848.1T1608.3 810.0T1585.7 771.0T1567.8 729.7T1547.6 692.4T1524.6 652.6T1503.9 612.1T1484.5 573.4T1463.4 532.4T1441.8 491.9T1421.2 451.5T1400.9 410.5T1380.0 370.1T1359.0 329.3T1338.1 289.3T1317.6 249.1T1296.8 208.8T1275.8 169.1T1255.0 128.8T1234.4 88.8L1224.1 69.4M1750.5 1118.7L1737.4 1094.5Q1724.3 1070.3 1715.4 1051.3T1697.6 1010.7T1676.1 965.8T1652.0 923.8T1632.1 882.0T1613.2 838.1T1590.2 797.9T1567.5 756.0T1548.4 714.6T1527.9 674.8T1504.9 633.3T1483.8 592.5T1463.9 551.0T1442.5 509.2T1420.4 467.1T1399.7 424.6T1379.0 382.7T1357.5 340.0T1336.1 298.2T1315.1 256.5T1294.1 214.3T1272.8 173.1T1251.5 131.2T1230.5 89.5L1220.0 69.3M1733.7 1118.0L1723.3 1094.9Q1712.9 1071.7 1702.2 1052.1T1681.4 1011.3T1661.2 967.6T1640.5 925.0T1619.3 882.6T1598.7 839.2T1578.6 797.5T1557.6 755.4T1536.3 714.4T1516.1 673.4T1495.8 632.6T1474.5 592.1T1453.5 550.3T1433.5 509.4T1412.8 467.3T1391.5 424.7T1371.0 383.2T1350.8 340.2T1329.8 298.3T1308.8 256.7T1288.4 214.3T1267.8 173.1T1246.8 131.1T1226.1 89.4L1215.9 69.2M1716.7 1115.1L1708.5 1093.9Q1700.2 1072.7 1688.8 1052.8T1665.9 1011.2T1646.2 968.8T1628.4 926.6T1606.7 883.1T1584.5 840.7T1566.6 798.0T1547.3 755.0T1524.5 714.5T1504.3 672.4T1486.4 631.7T1465.2 591.7T1443.3 549.5T1424.5 509.3T1405.1 467.4T1383.4 424.7T1363.0 383.6T1343.9 340.5T1323.4 298.5T1302.5 256.8T1282.7 214.3T1262.8 173.0T1242.1 131.1T1221.7 89.3L1211.8 69.1M1701.7 1111.9L1693.5 1092.0Q1685.3 1072.0 1673.8 1052.7T1651.1 1010.7T1632.2 969.0T1615.3 928.1T1593.6 883.7T1571.5 842.1T1554.6 799.1T1536.1 755.0T1513.0 714.9T1493.1 671.9T1476.5 630.8T1455.7 591.3T1433.5 548.7T1415.4 508.8T1397.1 467.3T1375.4 424.7T1355.2 383.8T1337.0 340.8T1317.0 298.6T1296.2 257.0T1276.9 214.4T1257.7 173.0T1237.3 131.1T1217.3 89.3L1207.7 68.9M1688.7 1110.1L1679.1 1090.0Q1669.6 1069.9 1657.5 1051.7T1636.2 1010.0T1619.5 968.4T1601.5 928.9T1579.4 884.4T1559.3 843.1T1543.0 800.5T1523.9 755.6T1501.4 715.3T1482.7 671.9T1466.3 630.2T1445.6 590.7T1424.1 548.1T1406.6 508.2T1388.7 467.2T1367.4 424.6T1347.5 383.9T1330.0 341.1T1310.5 298.8T1290.0 257.2T1271.2 214.5T1252.6 173.0T1232.6 131.1T1212.9 89.2L1203.5 68.8M1675.2 1109.9L1664.8 1089.0Q1654.4 1068.2 1641.4 1050.1T1621.0 1009.0T1606.9 967.5T1587.9 928.5T1564.9 885.1T1547.3 843.7T1531.9 801.6T1511.1 756.8T1489.6 715.8T1472.9 672.4T1456.0 630.0T1435.1 590.1T1414.8 547.7T1398.0 507.6T1380.0 466.8T1359.2 424.6T1340.1 383.8T1322.9 341.3T1303.9 299.0T1283.8 257.3T1265.5 214.7T1247.4 173.1T1227.8 131.1T1208.5 89.2L1199.4 68.7M1658.8 1110.0L1649.1 1089.1Q1639.4 1068.2 1626.4 1048.7T1606.3 1007.5T1593.2 966.7T1574.4 927.1T1550.9 885.2T1534.8 844.1T1520.6 802.2T1498.6 758.4T1477.6 716.4T1463.0 673.0T1445.8 630.4T1424.3 589.5T1405.6 547.4T1389.6 507.0T1371.2 466.2T1350.9 424.5T1332.8 383.6T1315.9 341.4T1297.1 299.2T1277.6 257.4T1259.8 214.9T1242.2 173.1T1223.0 131.1T1204.2 89.2L1195.3 68.6M1640.3 1109.7L1631.6 1089.9Q1623.0 1070.0 1612.0 1048.2T1592.9 1006.0T1578.2 966.1T1560.4 925.4T1538.3 884.6T1522.1 844.3T1508.3 802.1T1486.7 759.8T1466.0 717.3T1452.6 673.6T1435.6 631.3T1413.7 589.2T1396.2 547.3T1381.2 506.6T1362.4 465.5T1342.5 424.3T1325.5 383.4T1308.9 341.4T1290.2 299.4T1271.5 257.4T1254.2 215.0T1236.9 173.2T1218.2 131.1T1199.9 89.2L1191.2 68.6M1622.4 1109.6L1613.9 1091.0Q1605.4 1072.3 1597.5 1048.8T1580.2 1005.0T1562.7 965.6T1545.5 924.0T1526.6 883.3T1509.7 844.1T1494.8 801.5T1475.1 760.7T1455.3 718.2T1441.6 674.2T1425.1 632.4T1403.6 589.2T1386.8 547.2T1372.6 506.4T1353.6 464.8T1334.2 424.1T1318.2 383.1T1301.9 341.2T1283.3 299.6T1265.3 257.5T1248.6 215.2T1231.6 173.3T1213.4 131.2T1195.6 89.3L1187.2 68.6M1605.8 1110.8L1597.2 1091.4Q1588.5 1072.0 1581.5 1047.1T1565.1 1000.9T1545.4 959.3T1527.0 914.9T1511.1 873.3T1493.9 832.0T1474.6 787.9T1456.5 746.6T1440.2 701.3T1423.1 656.7T1403.9 612.7T1385.8 567.1T1369.6 524.5T1352.2 480.8T1332.9 438.0T1315.4 395.8T1299.1 352.3T1280.9 309.2T1262.3 265.4T1245.2 221.5T1228.1 177.8T1209.7 133.8T1191.7 90.2L1183.1 68.6M1589.1 1113.4L1582.1 1092.8Q1575.1 1072.2 1567.4 1048.2T1549.8 1002.1T1530.7 959.2T1513.8 914.4T1498.3 872.1T1480.9 830.9T1462.0 787.2T1445.0 746.5T1429.6 701.7T1412.1 657.4T1393.2 613.6T1376.4 567.5T1360.8 524.7T1343.0 480.6T1324.4 437.6T1308.0 395.5T1291.8 351.9T1273.8 309.2T1256.0 265.5T1239.5 221.5T1222.7 177.9T1204.8 133.9T1187.4 90.3L1179.2 68.6M1571.7 1115.9L1567.1 1094.0Q1562.4 1072.1 1553.8 1049.0T1533.9 1003.8T1515.4 959.6T1501.7 914.4T1485.5 871.5T1466.8 829.5T1449.9 786.4T1434.2 745.7T1418.1 701.9T1400.9 657.9T1383.0 614.3T1366.9 568.1T1351.6 525.0T1334.0 480.6T1316.0 437.3T1300.5 395.3T1284.6 351.6T1266.8 309.2T1249.7 265.5T1233.8 221.6T1217.3 178.0T1199.8 133.9T1183.1 90.3L1175.2 68.7M1555.2 1116.5L1551.5 1094.5Q1547.7 1072.6 1539.4 1049.4T1518.7 1005.5T1500.3 960.6T1489.2 914.9T1472.9 871.7T1452.5 828.2T1437.8 785.6T1424.0 744.6T1406.3 701.5T1389.2 658.3T1373.4 614.7T1357.5 568.9T1341.9 525.4T1325.0 480.7T1307.9 437.1T1292.8 395.0T1277.2 351.3T1259.8 309.0T1243.4 265.5T1228.1 221.7T1211.8 178.2T1194.9 134.0T1178.8 90.4L1171.2 68.8M1541.5 1114.9L1536.0 1094.0Q1530.6 1073.0 1523.2 1049.4T1504.1 1006.6T1486.1 961.9T1475.7 915.7T1460.0 872.4T1438.7 827.4T1425.4 785.0T1413.6 743.5T1394.6 700.6T1377.3 658.5T1363.9 614.9T1348.3 569.7T1331.9 525.9T1316.1 481.0T1300.0 437.2T1285.0 394.7T1269.8 351.1T1252.9 308.8T1237.1 265.4T1222.3 221.7T1206.4 178.3T1189.9 134.1T1174.5 90.5L1167.2 68.9M1529.1 1112.8L1521.1 1092.5Q1513.1 1072.1 1505.9 1048.9T1489.5 1007.0T1473.3 963.0T1461.4 916.8T1446.3 873.5T1426.1 827.3T1413.1 784.5T1402.4 742.5T1383.1 699.4T1365.5 658.4T1354.3 614.7T1339.2 570.4T1321.7 526.4T1307.0 481.3T1292.3 437.4T1277.1 394.4T1262.1 350.9T1246.1 308.6T1230.8 265.3T1216.5 221.7T1201.0 178.4T1185.0 134.1T1170.2 90.6L1163.2 69.0M1514.7 1112.0L1505.7 1090.7Q1496.7 1069.4 1488.9 1047.9T1474.7 1006.7T1461.0 963.3T1446.8 918.1T1431.6 874.6T1414.4 827.9T1401.3 784.4T1390.1 741.8T1371.7 698.3T1354.4 657.9T1344.3 614.4T1329.9 570.8T1311.7 527.0T1297.9 481.7T1284.6 437.7T1269.2 394.3T1254.4 350.7T1239.4 308.3T1224.5 265.2T1210.6 221.7T1195.6 178.4T1180.1 134.2T1165.9 90.7L1159.2 69.2M1497.4 1112.8L1488.9 1089.4Q1480.3 1066.0 1473.2 1046.5T1460.4 1006.0T1447.7 962.8T1432.4 919.2T1416.9 875.5T1402.7 828.9T1389.8 784.9T1377.1 741.3T1360.1 697.4T1344.1 657.2T1334.0 613.8T1320.1 571.0T1302.0 527.5T1288.9 482.0T1276.8 438.2T1261.3 394.2T1246.5 350.6T1232.7 308.1T1218.3 265.0T1204.6 221.7T1190.2 178.4T1175.2 134.3T1161.5 90.8L1155.1 69.3M1479.6 1113.9L1471.2 1088.9Q1462.8 1063.9 1458.0 1045.3T1446.9 1005.0T1433.2 961.7T1417.8 919.7T1403.2 876.2T1390.7 830.1T1378.2 785.8T1363.9 741.1T1348.4 696.9T1334.3 656.3T1323.5 613.1T1309.9 570.8T1292.5 527.8T1279.9 482.4T1268.8 438.7T1253.4 394.2T1238.7 350.5T1225.9 308.0T1212.2 264.8T1198.5 221.6T1184.7 178.4T1170.3 134.4T1157.1 90.9L1151.0 69.4M1463.3 1114.0L1454.3 1089.1Q1445.3 1064.3 1442.8 1044.8T1433.7 1003.8T1418.0 960.3T1402.7 919.5T1390.5 876.5T1378.6 831.1T1365.8 787.1T1351.1 741.3T1336.7 697.0T1324.6 655.5T1313.1 612.4T1299.2 570.5T1283.3 527.9T1271.2 482.7T1260.5 439.2T1245.5 394.4T1231.0 350.5T1219.1 307.8T1206.0 264.5T1192.5 221.6T1179.2 178.4T1165.5 134.5T1152.7 91.0L1146.8 69.5M1447.9 1113.5L1439.0 1089.9Q1430.2 1066.4 1427.7 1045.3T1419.5 1002.8T1403.0 959.0T1387.5 918.7T1378.3 876.2T1366.5 831.7T1352.4 788.4T1338.7 741.8T1325.6 697.4T1314.5 654.9T1302.6 611.5T1288.4 570.1T1274.2 527.7T1262.8 483.0T1252.0 439.7T1237.4 394.6T1223.4 350.6T1212.3 307.8T1199.8 264.3T1186.4 221.5T1173.7 178.4T1160.7 134.5T1148.3 91.1L1142.6 69.6M1431.5 1113.5L1424.6 1091.0Q1417.7 1068.5 1413.2 1046.5T1403.7 1002.3T1388.3 958.1T1373.1 917.6T1365.8 875.3T1354.4 832.0T1338.5 789.4T1326.4 742.6T1315.1 698.1T1303.8 654.6T1291.8 610.8T1277.9 569.6T1265.0 527.2T1254.4 483.2T1243.3 440.0T1229.3 394.9T1216.0 350.7T1205.4 307.7T1193.5 264.1T1180.3 221.4T1168.2 178.3T1155.9 134.6T1143.9 91.1L1138.3 69.7M1414.9 1114.6L1410.0 1092.1Q1405.2 1069.5 1398.7 1048.1T1387.0 1002.6T1373.5 957.7T1360.0 916.6T1352.6 874.0T1341.8 831.9T1324.8 789.9T1314.1 743.5T1305.1 699.1T1292.8 654.7T1280.7 610.3T1267.7 569.1T1255.9 526.6T1245.9 483.3T1234.5 440.3T1221.1 395.2T1208.7 351.0T1198.6 307.7T1187.1 264.0T1174.2 221.4T1162.7 178.2T1151.1 134.6T1139.4 91.2L1133.9 69.7M1400.0 1115.4L1394.6 1091.9Q1389.3 1068.5 1382.7 1046.6T1369.2 998.4T1356.6 951.5T1346.3 907.5T1336.7 862.4T1323.4 820.0T1308.5 775.1T1299.0 727.9T1290.2 681.8T1275.9 634.2T1262.9 589.2T1252.4 545.7T1240.9 500.6T1230.0 456.5T1217.4 410.2T1204.1 363.6T1194.1 318.2T1183.0 272.4T1169.9 227.7T1158.4 182.8T1147.0 137.4T1135.2 92.2L1129.5 69.7M1386.8 1114.3L1379.5 1091.8Q1372.2 1069.4 1365.7 1047.7T1353.7 999.4T1342.8 952.4T1333.3 907.0T1323.1 861.3T1309.2 819.3T1296.5 774.7T1288.2 728.7T1278.7 682.7T1264.7 634.6T1252.3 589.1T1243.0 545.1T1232.3 500.1T1220.8 456.5T1209.0 410.4T1196.8 364.0T1187.1 318.3T1176.5 272.4T1163.8 227.6T1152.8 182.7T1142.1 137.4T1130.8 92.3L1125.1 69.7M1372.3 1111.3L1364.0 1091.1Q1355.8 1070.8 1348.5 1048.1T1338.4 1000.3T1330.0 953.9T1319.4 906.9T1308.9 860.6T1295.7 818.2T1284.6 774.0T1277.5 729.1T1266.9 683.6T1253.2 635.1T1242.2 589.4T1233.7 544.6T1223.3 499.6T1211.7 456.4T1200.5 410.4T1189.6 364.4T1180.0 318.5T1169.8 272.4T1157.7 227.5T1147.2 182.6T1137.3 137.4T1126.3 92.4L1120.7 69.6M1354.2 1108.5L1347.3 1090.0Q1340.5 1071.6 1332.3 1047.6T1323.2 1000.9T1317.3 955.4T1305.1 907.4T1293.9 860.5T1283.1 817.2T1272.9 772.9T1266.1 729.1T1255.1 684.3T1241.5 635.8T1232.4 589.9T1224.4 544.1T1214.0 499.2T1202.6 456.0T1192.1 410.4T1182.3 364.7T1173.0 318.7T1163.0 272.4T1151.6 227.4T1141.6 182.5T1132.3 137.3T1121.8 92.4L1116.3 69.5M1334.4 1107.9L1329.4 1089.2Q1324.5 1070.5 1317.2 1046.2T1308.7 1001.0T1303.5 956.5T1290.7 908.4T1278.8 860.9T1271.1 816.6T1261.5 771.7T1253.9 728.7T1243.2 684.6T1230.2 636.4T1222.6 590.6T1215.1 543.9T1204.4 498.9T1193.5 455.6T1183.9 410.3T1174.9 364.9T1165.9 318.9T1156.1 272.5T1145.5 227.4T1136.1 182.4T1127.4 137.3T1117.3 92.4L1111.9 69.5M1315.9 1109.5L1311.6 1088.7Q1307.4 1067.9 1302.6 1044.5T1294.8 1000.6T1288.4 957.0T1276.2 909.4T1264.3 861.7T1259.0 816.4T1250.3 770.5T1240.9 728.2T1231.3 684.4T1219.4 637.1T1212.8 591.4T1205.8 543.9T1194.5 498.7T1184.5 455.1T1175.9 410.1T1167.5 365.0T1158.8 319.1T1149.3 272.6T1139.4 227.4T1130.6 182.2T1122.4 137.2T1112.8 92.4L1107.5 69.4M1299.0 1111.7L1295.2 1088.7Q1291.3 1065.7 1288.1 1043.1T1280.8 999.6T1272.6 956.9T1261.4 910.2T1250.9 863.0T1246.7 816.8T1238.8 769.6T1227.6 727.5T1219.1 683.6T1209.3 637.6T1202.7 592.2T1196.2 544.1T1184.7 498.7T1175.4 454.6T1168.0 409.8T1160.0 365.1T1151.6 319.3T1142.4 272.7T1133.3 227.5T1125.1 182.1T1117.3 137.2T1108.2 92.4L1103.2 69.3M1282.0 1113.1L1279.9 1089.4Q1277.7 1065.6 1273.6 1042.5T1265.8 998.3T1256.7 956.3T1246.5 910.4T1238.5 864.4T1234.2 817.3T1226.4 769.2T1214.5 726.9T1207.1 682.6T1199.5 637.9T1192.6 592.7T1186.1 544.6T1175.0 498.7T1166.4 454.3T1160.3 409.5T1152.4 365.1T1144.2 319.5T1135.6 272.8T1127.2 227.6T1119.7 182.0T1112.3 137.1T1103.7 92.3L1098.9 69.3M1264.4 1114.0L1264.7 1090.6Q1265.0 1067.2 1259.2 1042.4T1249.4 997.4T1241.0 955.3T1232.4 909.8T1226.2 865.7T1221.6 818.0T1213.1 769.6T1201.9 726.3T1195.4 681.4T1189.8 637.9T1182.3 593.0T1175.6 545.2T1165.5 498.9T1157.6 454.0T1152.5 409.0T1144.8 365.0T1136.8 319.6T1128.8 273.0T1121.0 227.7T1114.2 181.9T1107.2 137.1T1099.0 92.3L1094.6 69.3M1248.3 1115.5L1249.1 1092.1Q1249.9 1068.8 1244.0 1042.9T1232.7 997.3T1225.4 953.9T1219.3 909.0T1213.5 866.5T1208.5 818.6T1199.4 770.6T1189.5 725.8T1184.2 680.5T1179.7 637.6T1172.0 593.2T1164.8 545.8T1156.1 499.3T1148.9 453.9T1144.5 408.6T1137.1 364.9T1129.2 319.6T1122.1 273.2T1115.0 227.8T1108.7 181.8T1102.1 137.0T1094.4 92.2L1090.3 69.2M1234.4 1117.5L1233.1 1093.2Q1231.7 1068.8 1227.4 1043.8T1216.5 998.1T1210.2 952.5T1206.8 908.1T1200.4 866.5T1194.7 819.1T1185.7 771.9T1177.3 725.7T1173.6 679.8T1169.3 636.9T1161.3 593.2T1154.0 546.2T1146.8 499.8T1140.4 453.9T1136.4 408.2T1129.3 364.8T1121.6 319.5T1115.4 273.4T1108.9 227.9T1103.1 181.8T1096.9 137.0T1089.8 92.1L1086.0 69.2M1220.0 1118.4L1216.5 1093.1Q1213.0 1067.8 1209.9 1045.0T1201.0 999.4T1195.8 951.5T1194.1 907.4T1186.8 865.6T1180.2 819.5T1172.7 773.2T1165.6 726.0T1163.1 679.4T1158.5 636.1T1150.4 592.9T1143.4 546.5T1137.7 500.4T1132.1 453.9T1128.1 407.9T1121.5 364.7T1114.1 319.3T1108.7 273.6T1102.9 228.0T1097.5 181.8T1091.8 136.9T1085.1 92.0L1081.7 69.2M1202.5 1116.7L1199.0 1091.9Q1195.6 1067.1 1192.5 1046.2T1186.1 1000.7T1182.2 951.5T1180.5 906.9T1172.9 864.3T1165.3 819.5T1160.1 774.1T1154.3 726.9T1152.3 679.2T1147.3 635.5T1139.1 592.5T1133.1 546.5T1128.6 501.1T1123.8 454.0T1119.7 407.8T1113.5 364.4T1106.6 319.1T1102.0 273.7T1096.9 228.1T1091.9 181.8T1086.6 136.8T1080.4 91.9L1077.4 69.2M1183.0 1113.3L1180.9 1090.2Q1178.7 1067.2 1176.1 1046.9T1171.8 1001.5T1168.7 952.3T1166.0 906.6T1158.4 863.1T1150.9 819.0T1148.0 774.7T1143.5 727.9T1140.9 679.3T1135.9 635.1T1127.8 591.7T1123.0 546.3T1119.6 501.8T1115.3 454.2T1111.1 407.9T1105.4 364.2T1099.1 318.8T1095.3 273.9T1090.9 228.2T1086.2 181.9T1081.4 136.8T1075.8 91.8L1073.0 69.2M1165.1 1110.4L1163.0 1088.8Q1160.9 1067.2 1160.6 1046.6T1157.9 1002.0T1154.6 953.6T1150.8 906.8T1143.6 862.2T1137.2 818.0T1136.1 774.9T1132.7 728.9T1128.9 679.6T1124.2 635.2T1116.7 590.8T1113.2 546.1T1110.7 502.3T1106.7 454.3T1102.5 408.1T1097.3 363.9T1091.8 318.6T1088.6 274.0T1084.8 228.2T1080.5 182.0T1076.1 136.8T1071.1 91.7L1068.7 69.1M1149.4 1109.8L1146.3 1088.0Q1143.2 1066.1 1145.5 1045.5T1144.1 1002.1T1139.4 954.7T1135.2 907.6T1128.9 861.8T1124.4 816.6T1124.3 775.0T1121.4 729.3T1116.5 680.3T1112.3 635.5T1105.9 589.8T1103.5 545.9T1101.9 502.5T1097.8 454.5T1093.7 408.5T1089.1 363.6T1084.6 318.4T1081.9 274.0T1078.7 228.3T1074.7 182.1T1070.9 136.7T1066.4 91.6L1064.3 69.1M1133.8 1111.0L1130.9 1087.6Q1128.0 1064.2 1130.6 1044.2T1129.6 1001.7T1123.5 955.2T1119.4 909.0T1114.9 861.7T1112.1 815.4T1112.6 774.7T1109.5 729.2T1103.9 681.3T1100.3 636.0T1095.6 588.9T1093.9 545.7T1093.0 502.4T1088.8 454.8T1084.9 408.9T1081.0 363.4T1077.4 318.2T1075.3 274.0T1072.6 228.3T1068.9 182.2T1065.6 136.7T1061.8 91.6L1059.9 69.0M1117.4 1111.9L1116.1 1087.6Q1114.8 1063.4 1115.4 1043.6T1113.8 1000.5T1107.3 955.1T1103.9 910.7T1101.8 861.8T1099.9 815.0T1100.4 774.1T1096.9 728.5T1091.2 682.6T1088.5 636.6T1085.7 588.4T1084.4 545.5T1083.8 502.0T1079.5 455.1T1076.0 409.4T1073.0 363.2T1070.2 318.0T1068.6 273.9T1066.4 228.4T1063.1 182.3T1060.3 136.7T1057.2 91.5L1055.5 68.9M1101.8 1111.8L1101.1 1088.4Q1100.5 1065.0 1099.4 1043.9T1097.0 998.7T1091.2 954.8T1089.0 912.0T1089.3 862.0T1087.7 815.4T1087.6 773.0T1083.8 727.5T1078.5 683.7T1077.2 637.0T1075.9 588.4T1074.8 545.2T1074.3 501.4T1070.2 455.5T1067.1 409.7T1065.2 363.2T1063.1 317.9T1062.0 273.7T1060.1 228.4T1057.3 182.4T1055.0 136.7T1052.6 91.4L1051.1 68.8M1087.9 1111.7L1085.5 1090.0Q1083.0 1068.3 1082.3 1044.6T1080.0 996.9T1075.8 954.6T1075.0 912.1T1076.8 862.6T1075.1 816.5T1073.9 771.8T1070.6 726.7T1066.1 684.3T1066.3 637.3T1066.1 588.8T1065.2 544.9T1064.4 500.8T1060.8 455.7T1058.2 410.0T1057.4 363.3T1056.0 317.8T1055.3 273.5T1053.8 228.4T1051.4 182.5T1049.7 136.8T1048.0 91.4L1046.7 68.7M1073.0 1112.8L1068.7 1092.0Q1064.4 1071.3 1064.5 1045.2T1063.2 996.1T1061.2 954.3T1061.6 911.3T1064.0 863.6T1061.8 817.7T1059.8 770.8T1057.4 726.1T1054.2 684.3T1055.8 637.6T1056.3 589.6T1055.2 544.6T1054.3 500.2T1051.4 455.7T1049.5 410.3T1049.7 363.5T1048.9 317.7T1048.5 273.4T1047.4 228.4T1045.5 182.5T1044.4 136.8T1043.4 91.4L1042.3 68.6M1054.3 1114.3L1050.8 1093.2Q1047.3 1072.1 1046.9 1045.6T1047.1 996.6T1047.4 953.6T1048.3 909.9T1050.5 864.6T1047.8 818.7T1045.5 770.5T1044.5 725.6T1043.0 683.6T1045.3 638.0T1046.4 590.4T1044.9 544.4T1044.1 499.8T1042.0 455.5T1041.0 410.4T1042.0 363.8T1041.8 317.7T1041.7 273.2T1041.0 228.4T1039.7 182.6T1039.2 136.9T1038.8 91.3L1038.0 68.4M1033.6 1114.4L1032.6 1092.9Q1031.6 1071.4 1030.0 1046.2T1031.9 998.0T1034.1 952.8T1034.6 908.6T1036.2 865.0T1033.3 819.4T1031.3 771.0T1032.0 725.1T1032.2 682.7T1034.7 638.3T1036.1 591.0T1034.2 544.5T1033.8 499.5T1032.7 455.2T1032.6 410.6T1034.4 364.1T1034.6 317.6T1034.7 273.1T1034.6 228.4T1033.8 182.6T1033.9 137.1T1034.2 91.3L1033.7 68.2M1014.5 1112.5L1014.9 1091.5Q1015.4 1070.5 1014.2 1046.9T1017.5 999.3T1020.3 952.5T1020.2 907.8T1020.9 864.4T1018.7 820.0T1017.7 772.0T1020.2 724.6T1021.6 681.8T1023.9 638.3T1025.3 591.4T1023.3 544.9T1023.6 499.2T1023.5 454.6T1024.4 410.8T1026.7 364.4T1027.4 317.6T1027.7 273.0T1028.1 228.2T1027.9 182.7T1028.7 137.2T1029.6 91.2L1029.5 68.1M997.7 1110.6L998.2 1090.3Q998.7 1070.1 999.3 1046.9T1003.1 1000.1T1005.8 953.3T1005.0 907.1T1005.2 863.2T1004.6 820.6T1004.6 773.0T1009.0 724.4T1010.9 681.4T1012.8 637.8T1014.1 591.6T1012.5 545.7T1013.4 499.0T1014.6 454.1T1016.2 410.9T1018.9 364.6T1020.1 317.7T1020.6 273.0T1021.6 228.1T1022.0 182.7T1023.5 137.3T1025.0 91.2L1025.3 67.9M980.8 1110.7L982.2 1089.9Q983.6 1069.0 985.0 1045.7T988.0 1000.5T990.4 955.0T989.0 906.5T989.6 862.0T991.0 821.0T992.3 773.5T997.8 724.9T999.7 681.3T1001.3 636.8T1002.5 591.8T1001.7 546.6T1003.4 498.8T1005.9 453.7T1008.1 410.9T1011.1 364.6T1012.6 317.8T1013.5 273.1T1015.1 227.9T1016.2 182.7T1018.3 137.5T1020.4 91.2L1021.1 67.8M963.0 1113.1L966.7 1089.8Q970.5 1066.6 970.3 1043.7T971.7 1001.1T974.2 956.5T972.9 906.0T974.8 861.5T978.0 820.7T980.6 773.3T986.2 726.0T988.2 681.4T989.3 635.5T990.7 592.0T991.1 547.3T993.6 498.6T997.4 453.6T999.9 410.8T1003.2 364.5T1005.1 318.1T1006.3 273.1T1008.6 227.7T1010.3 182.7T1013.1 137.6T1015.8 91.1L1016.8 67.7M946.2 1115.5L951.2 1089.6Q956.2 1063.6 954.2 1041.9T954.8 1001.5T957.4 956.9T957.2 906.2T960.8 861.9T965.4 819.5T969.1 772.9T974.0 727.7T976.2 681.4T976.8 634.3T979.1 592.2T980.8 547.8T984.1 498.6T988.9 453.6T991.5 410.6T995.2 364.4T997.3 318.5T999.2 273.2T1002.1 227.5T1004.6 182.8T1007.8 137.7T1011.1 91.1L1012.6 67.7M931.0 1116.3L934.6 1089.3Q938.3 1062.3 936.8 1041.6T937.6 1001.3T940.6 956.2T942.7 907.3T947.2 862.8T953.3 817.7T957.1 772.6T961.1 729.4T963.7 681.2T964.1 633.5T967.8 592.4T970.6 547.7T974.8 498.7T980.2 453.9T983.1 410.1T987.0 364.2T989.5 318.9T992.0 273.2T995.6 227.3T998.8 182.8T1002.6 137.7T1006.5 91.1L1008.3 67.7M914.5 1115.7L916.4 1089.8Q918.3 1063.8 919.0 1042.6T920.3 1000.1T924.5 955.0T929.2 909.1T934.0 863.5T941.1 816.0T944.2 772.5T947.8 730.4T950.8 681.1T951.7 633.4T956.9 592.3T960.6 547.3T965.8 499.2T971.4 454.3T974.6 409.6T978.7 364.0T981.7 319.3T984.9 273.2T989.1 227.1T993.1 182.9T997.4 137.7T1001.9 91.1L1004.0 67.8M894.7 1115.3L897.1 1091.0Q899.6 1066.7 901.5 1044.0T903.6 998.6T909.7 954.1T916.0 910.5T920.9 863.8T928.2 815.1T930.5 772.4T934.2 730.4T937.6 681.3T939.9 634.0T946.1 591.8T951.0 546.7T956.7 499.9T962.4 454.7T966.0 409.0T970.2 363.9T973.9 319.6T977.8 273.2T982.6 227.0T987.4 182.9T992.2 137.7T997.2 91.2L999.6 67.9M874.1 1115.2L878.3 1091.9Q882.6 1068.6 884.4 1044.9T888.0 997.9T895.9 953.5T902.5 910.8T907.6 864.3T914.1 815.4T916.4 772.0T920.3 729.7T924.6 681.9T928.7 634.9T935.6 591.0T941.6 546.1T947.4 500.6T953.1 455.0T957.3 408.4T961.5 363.9T966.2 319.8T970.7 273.2T976.2 227.0T981.6 182.9T986.9 137.7T992.5 91.2L995.2 68.1M856.3 1114.2L860.8 1091.4Q865.3 1068.7 867.9 1045.6T873.8 998.6T881.8 952.7T888.6 910.0T893.6 865.0T898.9 816.4T902.3 771.2T906.4 728.6T912.2 682.7T917.9 635.7T925.1 590.2T932.2 545.6T937.8 501.2T943.7 455.2T948.3 408.1T952.8 363.8T958.5 319.9T963.7 273.2T969.9 227.0T975.9 182.8T981.6 137.6T987.8 91.3L990.6 68.3M841.0 1111.3L844.2 1089.7Q847.3 1068.0 852.4 1046.7T860.1 1000.0T866.8 951.6T874.1 908.9T878.4 865.9T883.4 817.3T888.4 770.4T892.8 727.9T900.7 683.3T907.3 636.2T914.8 589.8T922.7 545.3T927.7 501.5T934.2 455.3T939.1 408.1T944.2 363.8T950.9 319.8T956.6 273.2T963.5 227.1T970.1 182.8T976.3 137.5T983.0 91.4L986.0 68.5M825.2 1108.0L828.0 1088.1Q830.8 1068.2 837.7 1047.9T845.4 1000.9T851.1 950.8T858.8 908.4T862.2 866.4T868.3 817.6T874.6 770.3T879.9 727.5T889.8 683.3T896.6 636.6T904.6 589.9T912.6 545.0T917.5 501.4T924.5 455.5T929.9 408.2T935.8 363.7T943.3 319.7T949.6 273.3T957.3 227.3T964.3 182.7T971.0 137.4T978.2 91.5L981.4 68.7M808.6 1107.1L812.4 1088.0Q816.3 1068.9 822.4 1048.1T829.1 1000.7T834.9 951.1T842.4 908.6T846.2 865.6T853.9 817.7T861.2 771.3T868.2 727.2T878.8 682.4T885.9 637.0T894.2 590.5T901.9 544.6T907.1 500.9T914.7 455.7T920.6 408.5T927.5 363.5T935.7 319.4T942.7 273.4T950.9 227.4T958.4 182.6T965.7 137.3T973.3 91.6L976.7 68.9M793.1 1109.2L796.9 1088.9Q800.8 1068.7 805.4 1046.7T811.9 999.9T818.2 952.8T825.3 909.0T831.3 863.7T840.0 817.8T848.4 773.0T857.2 726.6T867.5 681.0T875.0 637.6T883.3 591.4T890.7 544.1T896.8 500.4T904.7 456.0T911.5 408.9T919.4 363.3T928.1 319.2T935.9 273.5T944.6 227.6T952.5 182.4T960.4 137.2T968.4 91.8L972.0 69.1M778.1 1112.4L780.0 1089.8Q781.9 1067.3 786.6 1044.5T794.8 999.5T800.9 955.2T808.9 908.8T817.5 861.6T826.3 818.4T836.6 774.8T846.0 725.8T855.5 679.8T864.0 638.3T871.8 592.1T879.4 543.6T886.4 499.9T894.6 456.4T902.6 409.2T911.4 363.1T920.6 319.0T929.1 273.7T938.2 227.7T946.6 182.3T955.0 137.1T963.5 91.9L967.3 69.3M760.4 1114.3L761.1 1090.2Q761.7 1066.2 767.9 1043.1T777.6 999.4T783.8 956.6T794.1 908.4T804.2 860.3T813.1 819.2T825.2 775.7T834.1 725.0T843.3 679.2T852.5 639.0T859.5 592.4T868.1 543.2T876.1 499.8T884.7 456.6T894.0 409.4T903.4 363.0T913.1 318.8T922.4 273.8T931.7 227.8T940.6 182.2T949.6 137.1T958.5 92.0L962.7 69.4M751.8 1035.8L757.2 1013.5Q762.7 991.1 764.9 971.9T774.9 930.0T787.0 882.4T795.2 837.2T807.2 797.4T817.4 753.2T824.7 705.1T835.3 662.4T842.6 621.5T850.2 575.7T860.1 529.7T868.0 487.3T877.8 444.3T887.9 399.1T897.2 354.6T907.4 311.2T916.8 267.5T926.2 223.1T935.4 178.8T944.5 134.9T953.6 91.4L958.0 69.5M751.8 966.6L758.0 943.8Q764.2 921.0 770.2 894.6T780.0 847.7T791.4 808.3T802.1 764.2T809.6 714.2T820.4 670.5T828.6 630.0T836.8 583.6T848.0 536.2T856.7 493.3T867.3 450.2T878.6 404.1T888.3 358.6T899.2 314.7T909.3 270.5T919.0 225.5T929.1 180.4T938.8 135.9T948.5 91.7L953.4 69.6M755.9 896.9L761.8 871.0Q767.7 845.2 772.8 824.5T783.5 782.3T792.7 735.7T802.9 687.9T812.9 642.9T821.9 597.3T834.0 550.7T844.3 505.4T855.5 459.7T868.1 413.1T878.4 367.1T890.1 321.7T901.1 275.9T911.4 229.7T922.3 183.5T932.8 137.8T943.3 92.4L948.8 69.7M756.6 833.1L760.8 811.6Q765.1 790.1 771.5 767.9T781.8 722.7T791.8 677.3T802.3 632.2T813.4 586.9T825.6 542.1T836.4 497.4T848.9 452.0T861.1 406.8T871.7 361.9T883.9 316.8T894.7 271.9T905.4 226.8T916.8 181.4T927.4 136.4T938.4 91.9L944.2 69.7M752.9 779.0L759.7 757.4Q766.6 735.9 769.8 714.4T780.2 669.9T792.9 624.0T804.5 579.7T816.8 536.4T828.9 491.6T841.7 446.4T853.5 402.4T864.8 358.2T877.2 313.3T888.1 269.0T899.2 224.8T911.1 180.0T922.0 135.5T933.5 91.6L939.6 69.7M753.3 731.0L756.9 710.2Q760.6 689.5 769.3 665.4T783.4 618.6T794.8 575.5T808.0 533.5T821.0 488.1T833.5 442.8T845.6 399.9T857.5 356.3T869.9 311.3T881.1 267.2T892.9 223.6T905.1 179.2T916.5 134.9T928.6 91.3L935.1 69.7M749.3 689.2L758.7 664.1Q768.0 639.1 773.0 616.4T784.4 574.5T798.9 533.3T812.2 487.0T824.3 441.3T837.2 399.3T849.5 356.0T862.1 310.6T873.9 266.5T886.4 223.4T899.0 179.1T910.9 134.6T923.7 91.2L930.5 69.7M756.0 641.4L761.3 618.6Q766.7 595.8 773.6 576.8T788.8 535.4T802.1 488.4T814.3 442.4T828.1 400.9T840.8 357.6T853.6 311.4T866.3 267.1T879.5 224.1T892.6 179.6T905.2 134.8T918.8 91.2L925.9 69.7M755.0 602.1L761.8 581.9Q768.6 561.6 777.2 539.7T790.8 493.1T803.4 446.8T818.2 404.7T831.3 360.8T844.6 313.8T858.4 269.1T872.2 225.9T886.0 181.0T899.4 135.5T913.8 91.3L921.3 69.7M755.1 567.8L763.6 547.2Q772.0 526.6 777.9 502.4T791.4 454.8T807.0 410.4T820.9 365.8T834.8 318.5T849.9 272.9T864.4 229.0T879.1 183.2T893.5 136.6T908.7 91.7L916.6 69.7M755.6 539.9L762.6 517.6Q769.6 495.3 775.9 471.9T790.5 428.6T804.8 388.9T817.7 346.5T832.4 301.9T847.0 259.6T861.0 218.5T875.3 175.5T889.5 132.1T904.3 90.2L911.9 69.7M755.2 507.1L762.0 484.2Q768.9 461.3 777.1 439.8T792.4 397.5T806.5 354.0T822.2 308.6T837.9 265.1T852.8 222.8T868.2 178.6T883.5 133.8T899.2 90.7L907.2 69.7M754.4 478.2L762.0 454.4Q769.6 430.7 778.1 408.8T794.0 364.6T810.8 318.7T827.9 273.1T843.8 228.5T860.6 182.7T877.2 136.3T893.9 91.6L902.5 69.7M752.3 451.1L760.6 430.0Q768.8 409.0 776.7 388.1T792.6 345.3T809.3 301.9T825.3 259.8T840.9 218.3T857.4 175.3T873.4 132.0T889.5 90.2L897.8 69.8M751.3 425.7L761.0 403.5Q770.7 381.3 779.0 359.4T796.7 315.0T814.3 270.1T831.3 225.7T849.3 180.7T866.8 135.4T884.1 91.3L893.0 69.8M752.8 403.5L761.6 382.2Q770.4 360.9 778.4 340.1T795.3 298.5T812.1 257.0T828.9 215.6T846.4 173.4T863.0 131.1T879.7 89.9L888.4 69.7M754.5 380.8L763.0 358.9Q771.4 337.1 781.0 314.8T799.8 269.9T818.3 225.0T837.4 180.4T855.8 135.6T874.1 91.4L883.7 69.7M754.4 359.0L762.5 339.1Q770.6 319.2 780.1 298.6T798.4 256.9T816.3 214.8T834.6 173.0T852.1 131.2T869.8 90.0L879.1 69.6M753.4 340.4L763.5 318.4Q773.6 296.4 784.0 273.3T804.2 227.5T824.4 182.3T844.2 137.2T864.0 91.9L874.5 69.5M753.0 323.2L763.5 302.6Q773.9 281.9 783.4 259.9T802.4 216.7T821.7 174.6T840.6 132.6T859.8 90.4L869.9 69.3M753.9 306.3L763.8 286.9Q773.8 267.5 782.5 247.0T800.5 206.6T818.9 167.4T837.0 128.4T855.6 88.9L865.3 69.2M755.0 290.1L765.7 267.6Q776.3 245.2 786.4 222.8T807.3 179.0T828.3 135.5T849.6 91.3L860.6 69.0M755.6 274.9L765.2 253.5Q774.8 232.1 784.7 211.5T804.9 171.1T825.0 131.0T845.4 89.7L855.9 68.8M755.4 260.2L764.4 240.2Q773.3 220.1 783.0 201.0T802.6 163.7T821.8 126.6T841.1 88.1L851.2 68.6M754.9 245.4L765.7 222.7Q776.6 200.1 788.6 178.6T811.7 135.4T834.6 91.0L846.3 68.5M754.3 231.1L764.9 210.5Q775.5 189.9 786.9 170.3T808.8 130.6T830.3 89.3L841.4 68.3M753.9 217.7L764.3 198.9Q774.6 180.2 785.2 162.4T805.7 125.9T826.0 87.7L836.4 68.3M753.8 205.3L767.1 182.7Q780.4 160.1 793.0 137.8T818.5 91.8L831.3 68.2M753.8 193.8L766.3 173.3Q778.8 152.7 790.5 132.1T814.2 89.9L826.2 68.3M753.9 182.9L765.4 164.3Q777.0 145.7 787.8 126.8T809.8 88.1L821.1 68.3M753.9 172.3L764.5 155.6Q775.1 138.9 785.1 121.5T805.5 86.3L815.9 68.4M753.8 162.0L782.3 116.6L810.8 68.6M753.7 152.2L779.6 111.6L805.8 68.7M753.7 143.0L776.9 106.7L800.7 68.9M753.6 134.2L774.3 102.0L795.7 69.0M753.6 125.8L790.8 69.1M753.6 117.5L785.9 69.2M753.6 109.4L780.9 69.2M753.6 101.5L776.0 69.2M753.5 93.7L771.0 69.2M753.4 86.2L766.1 69.1M753.4 79.1L761.0 69.0M753.3 72.4L756.0 68.9M1347.3 68.8L1343.9 68.1M1350.6 70.5L1338.7 68.2M1354.0 72.3L1333.5 68.3M1357.4 74.1L1328.3 68.4M1360.8 76.0L1323.2 68.6M1364.3 77.8L1318.1 68.7M1367.7 79.7L1312.9 68.7M1371.2 81.6L1307.7 68.8M1374.6 83.5L1337.6 76.1L1302.4 68.8M1378.1 85.4L1336.6 77.0L1297.0 68.8M1381.6 87.3L1335.6 78.0L1291.5 68.8M1385.1 89.2L1334.7 79.0L1285.9 68.8M1388.7 91.2L1333.7 80.0L1280.2 68.8M1392.4 93.1L1372.5 89.1Q1352.7 85.0 1333.3 81.0T1294.2 72.9L1274.5 68.9M1396.1 95.1L1374.7 90.7Q1353.3 86.4 1332.4 82.0T1290.1 73.3L1268.8 69.0M1399.9 97.1L1376.9 92.4Q1353.9 87.7 1331.5 82.9T1286.1 73.6L1263.1 69.1M1403.8 99.0L1379.2 94.1Q1354.6 89.1 1330.6 84.0T1282.1 74.0L1257.4 69.2M1407.7 101.0L1381.5 95.7Q1355.2 90.5 1329.8 85.0T1278.0 74.4L1251.8 69.3M1411.7 103.0L1390.7 98.8Q1369.6 94.6 1348.9 90.3T1308.3 81.7T1267.3 73.4L1246.1 69.4M1415.6 105.0L1393.3 100.6Q1371.1 96.1 1349.2 91.6T1306.2 82.5T1262.8 73.7L1240.5 69.5M1419.5 107.1L1396.0 102.4Q1372.5 97.7 1349.5 92.9T1304.1 83.3T1258.3 74.0L1234.8 69.5M1423.3 109.1L1398.7 104.2Q1374.0 99.2 1349.8 94.2T1301.9 84.1T1253.8 74.2L1229.1 69.5M1427.1 111.2L1406.5 107.0Q1385.8 102.8 1365.4 98.7T1325.1 90.2T1284.8 81.7T1243.9 73.5L1223.4 69.4M1430.9 113.2L1409.4 108.8Q1387.9 104.5 1366.5 100.2T1324.3 91.3T1282.0 82.4T1239.1 73.7L1217.6 69.2M1434.7 115.4L1412.3 110.7Q1390.0 106.1 1367.7 101.7T1323.5 92.4T1279.1 83.0T1234.2 73.8L1211.7 69.1M1438.4 117.5L1415.3 112.7Q1392.2 107.8 1368.8 103.2T1322.6 93.5T1276.3 83.7T1229.3 74.0L1205.8 68.9M1442.3 119.7L1418.4 114.6Q1394.4 109.5 1370.0 104.7T1321.8 94.6T1273.5 84.4T1224.4 74.1L1200.0 68.7M1446.2 121.9L1425.8 117.4Q1405.4 112.8 1384.0 108.8T1341.5 100.2T1300.1 91.2T1258.2 82.4T1215.4 73.3L1194.2 68.6M1450.3 124.1L1429.1 119.4Q1408.0 114.6 1385.7 110.4T1341.5 101.5T1298.4 92.2T1254.8 82.9T1210.4 73.4L1188.4 68.6M1454.4 126.4L1432.5 121.4Q1410.6 116.4 1387.4 112.1T1341.5 102.8T1296.7 93.1T1251.5 83.5T1205.5 73.6L1182.7 68.6M1458.7 128.7L1435.9 123.5Q1413.1 118.2 1389.1 113.7T1341.5 104.1T1295.0 94.1T1248.1 84.0T1200.6 73.7L1177.0 68.6M1463.0 131.1L1439.3 125.6Q1415.7 120.1 1390.8 115.4T1341.5 105.4T1293.3 95.1T1244.7 84.5T1195.6 73.9L1171.4 68.8M1467.4 133.5L1446.2 128.4Q1425.1 123.4 1403.3 119.2T1359.8 110.6T1316.9 101.4T1273.8 92.2T1230.1 82.6T1187.1 73.3L1165.8 69.0M1471.8 135.9L1449.8 130.6Q1427.8 125.4 1405.4 121.0T1360.5 112.0T1316.1 102.6T1271.5 93.0T1226.4 83.0T1181.9 73.5L1160.1 69.1M1476.1 138.4L1453.4 132.9Q1430.6 127.4 1407.5 122.8T1361.3 113.5T1315.4 103.8T1269.3 93.8T1222.6 83.4T1176.8 73.8L1154.3 69.3M1480.5 140.9L1456.9 135.1Q1433.4 129.4 1409.7 124.6T1362.1 115.0T1314.6 105.1T1267.0 94.6T1218.8 83.9T1171.6 74.0L1148.4 69.5M1484.9 143.4L1463.5 138.1Q1442.2 132.8 1421.3 128.4T1378.4 119.7T1334.9 110.8T1292.5 101.6T1249.5 91.9T1205.8 82.3T1163.2 73.7L1142.4 69.6M1489.4 146.0L1467.4 140.4Q1445.4 134.9 1423.9 130.3T1379.7 121.3T1334.8 112.2T1291.1 102.7T1246.8 92.6T1201.8 82.8T1157.9 74.0L1136.2 69.7M1494.0 148.5L1471.3 142.8Q1448.6 137.1 1426.5 132.3T1380.9 122.9T1334.7 113.6T1289.6 103.8T1244.0 93.3T1197.8 83.3T1152.5 74.2L1130.0 69.7M1498.6 151.1L1475.3 145.2Q1451.9 139.3 1429.1 134.3T1382.2 124.6T1334.7 115.0T1288.3 104.9T1241.3 94.0T1193.8 83.8T1147.1 74.4L1123.8 69.6M1503.5 153.7L1482.1 148.3Q1460.7 142.9 1439.6 138.1T1396.9 129.0T1353.6 120.3T1310.9 111.3T1268.1 101.7T1224.8 91.6T1181.9 82.7T1139.1 74.1L1117.5 69.6M1508.4 156.3L1486.3 150.8Q1464.2 145.2 1442.5 140.2T1398.6 130.7T1354.2 121.8T1310.3 112.6T1266.2 102.6T1221.6 92.2T1177.7 83.2T1133.7 74.3L1111.3 69.5M1513.5 158.9L1490.6 153.3Q1467.7 147.6 1445.4 142.4T1400.3 132.5T1354.8 123.3T1309.6 113.9T1264.3 103.5T1218.5 92.9T1173.5 83.7T1128.2 74.4L1105.1 69.4M1518.6 161.5L1494.9 155.7Q1471.3 150.0 1448.3 144.6T1402.0 134.3T1355.4 124.9T1309.0 115.2T1262.4 104.5T1215.4 93.6T1169.3 84.3T1122.8 74.6L1099.0 69.3M1523.6 164.1L1501.6 158.9Q1479.5 153.7 1458.2 148.5T1415.9 138.7T1372.9 129.8T1329.3 121.1T1286.9 111.8T1243.9 101.3T1200.2 91.8T1157.8 83.4T1114.9 74.2L1092.9 69.2M1528.6 166.6L1505.9 161.4Q1483.3 156.2 1461.4 150.8T1418.1 140.7T1374.0 131.5T1329.2 122.6T1285.8 112.9T1241.6 102.2T1196.9 92.5T1153.3 83.8T1109.3 74.3L1086.8 69.2M1533.5 169.2L1510.3 163.9Q1487.1 158.7 1464.7 153.1T1420.3 142.6T1375.0 133.1T1329.2 124.1T1284.6 114.1T1239.3 103.1T1193.5 93.3T1148.8 84.3T1103.7 74.4L1080.7 69.2M1538.3 171.8L1514.7 166.5Q1491.1 161.2 1468.1 155.5T1422.5 144.7T1376.1 134.9T1329.1 125.6T1283.4 115.3T1237.1 104.0T1190.2 94.0T1144.3 84.7T1098.0 74.5L1074.5 69.2M1543.2 174.3L1521.4 169.6Q1499.7 164.8 1478.1 159.4T1435.3 149.1T1392.3 139.7T1348.8 131.0T1305.8 122.1T1262.8 111.7T1219.3 101.4T1176.3 92.6T1133.4 83.8T1090.1 74.1L1068.4 69.1M1548.0 176.9L1526.0 172.1Q1504.0 167.3 1481.8 161.9T1437.7 151.3T1393.8 141.5T1349.3 132.6T1305.3 123.4T1261.2 112.7T1216.7 102.3T1172.8 93.3T1128.7 84.2T1084.3 74.2L1062.1 69.1M1553.0 179.5L1530.7 174.7Q1508.4 169.9 1485.5 164.3T1440.2 153.5T1395.3 143.3T1349.9 134.2T1304.7 124.8T1259.6 113.8T1214.0 103.2T1169.2 94.0T1124.1 84.6T1078.5 74.3L1055.9 69.0M1558.2 182.1L1535.5 177.3Q1512.8 172.5 1489.2 166.8T1442.7 155.7T1396.8 145.2T1350.4 135.8T1304.2 126.2T1258.0 114.9T1211.4 104.1T1165.6 94.7T1119.5 85.0T1072.8 74.3L1049.6 68.8M1563.4 184.7L1542.3 180.3Q1521.2 175.9 1498.8 170.7T1455.0 160.3T1412.4 150.1T1368.9 141.0T1324.9 132.4T1282.2 122.4T1238.8 111.6T1194.8 102.2T1152.2 93.4T1109.0 84.1T1065.1 73.9L1043.4 68.6M1568.8 187.3L1547.2 182.9Q1525.5 178.5 1502.7 173.2T1457.9 162.6T1414.4 152.2T1369.9 142.7T1324.9 133.9T1281.3 123.7T1236.9 112.7T1192.0 103.1T1148.4 94.1T1104.2 84.4T1059.4 73.9L1037.3 68.4M1574.2 190.0L1552.0 185.6Q1529.8 181.1 1506.6 175.7T1460.9 165.0T1416.3 154.2T1370.8 144.5T1324.9 135.5T1280.3 125.0T1235.0 113.7T1189.1 104.0T1144.5 94.7T1099.4 84.8T1053.8 73.9L1031.3 68.1M1579.6 192.8L1556.8 188.2Q1534.1 183.7 1510.6 178.3T1464.0 167.4T1418.3 156.3T1371.8 146.3T1325.0 137.1T1279.4 126.3T1233.1 114.8T1186.3 104.9T1140.6 95.3T1094.5 85.1T1048.1 73.8L1025.3 67.9M1585.0 195.6L1563.4 191.3Q1541.9 187.0 1520.2 182.1T1476.4 171.9T1432.7 161.4T1389.3 151.5T1345.4 142.8T1301.8 133.4T1258.4 122.5T1214.5 112.2T1171.0 103.2T1127.7 94.1T1084.0 84.2T1040.7 73.4L1019.3 67.8M1590.4 198.5L1568.4 194.1Q1546.4 189.7 1524.4 184.7T1479.7 174.4T1435.0 163.7T1390.7 153.4T1346.0 144.5T1301.4 134.9T1257.0 123.8T1212.3 113.3T1168.0 104.0T1123.7 94.7T1079.0 84.4T1035.0 73.3L1013.3 67.7M1595.8 201.4L1573.5 196.9Q1551.1 192.3 1528.7 187.3T1483.1 176.9T1437.3 165.9T1392.2 155.4T1346.6 146.2T1301.0 136.3T1255.7 125.0T1210.1 114.4T1165.0 104.9T1119.7 95.3T1074.0 84.7T1029.3 73.3L1007.2 67.8M1601.5 204.5L1578.7 199.8Q1555.8 195.0 1533.1 189.9T1486.5 179.4T1439.6 168.2T1393.7 157.4T1347.2 147.9T1300.6 137.8T1254.4 126.3T1207.9 115.5T1161.9 105.7T1115.7 95.9T1069.0 84.9T1023.5 73.4L1001.0 67.9M1607.4 207.5L1585.7 203.0Q1564.0 198.5 1542.5 193.7T1498.3 183.8T1453.9 173.4T1410.6 162.8T1366.4 153.4T1321.9 144.4T1278.7 133.9T1234.7 123.1T1190.2 113.3T1147.1 104.1T1103.3 94.6T1059.0 83.8T1015.9 73.1L994.7 68.1M1613.5 210.7L1591.2 206.0Q1569.0 201.3 1546.9 196.4T1501.9 186.4T1456.7 175.8T1412.5 164.9T1367.4 155.3T1322.1 146.1T1278.0 135.3T1233.1 124.3T1187.8 114.3T1143.8 105.0T1099.2 95.2T1054.0 84.0T1010.0 73.2L988.3 68.4M1619.8 213.9L1596.8 209.0Q1573.9 204.2 1551.3 199.1T1505.6 188.9T1459.6 178.2T1414.3 167.1T1368.4 157.2T1322.3 147.7T1277.3 136.8T1231.5 125.6T1185.3 115.4T1140.5 105.8T1095.0 95.7T1049.0 84.2T1004.0 73.4L981.7 68.7M1626.1 217.1L1603.9 212.5Q1581.8 207.8 1560.3 202.9T1517.3 193.3T1473.5 183.3T1429.8 172.7T1386.7 162.7T1343.0 153.8T1299.4 144.0T1256.3 133.2T1212.8 122.9T1169.3 113.4T1126.3 104.4T1082.9 94.3T1039.5 83.2T996.6 73.3L975.1 69.0M1632.4 220.4L1609.6 215.6Q1586.8 210.8 1565.0 205.8T1521.3 195.9T1476.7 185.8T1432.0 175.0T1388.2 164.7T1343.6 155.6T1299.1 145.5T1255.2 134.6T1210.9 124.1T1166.6 114.4T1122.8 105.2T1078.5 94.7T1034.5 83.4T990.6 73.6L968.4 69.2M1638.6 223.7L1615.3 218.8Q1592.0 213.9 1569.7 208.7T1525.3 198.6T1479.8 188.3T1434.2 177.3T1389.6 166.8T1344.3 157.4T1298.9 147.1T1254.2 136.0T1209.0 125.4T1164.0 115.5T1119.2 105.9T1074.1 95.2T1029.4 83.7T984.6 73.8L961.8 69.4M1644.7 227.1L1621.0 222.0Q1597.3 217.0 1574.7 211.7T1529.4 201.3T1483.0 190.8T1436.5 179.7T1391.2 168.9T1345.0 159.2T1298.7 148.7T1253.2 137.5T1207.2 126.6T1161.4 116.5T1115.7 106.7T1069.7 95.6T1024.3 84.0T978.6 74.1L955.2 69.6M1650.7 230.4L1628.3 225.6Q1606.0 220.8 1584.2 215.7T1540.7 205.7T1496.5 195.7T1452.2 185.3T1408.8 174.7T1364.7 165.2T1320.4 155.5T1277.2 145.0T1233.2 134.4T1189.0 124.2T1145.9 114.8T1102.1 105.2T1057.9 94.1T1014.9 83.4T971.1 74.1L948.7 69.7M1656.9 233.8L1634.3 228.9Q1611.8 224.0 1589.4 218.8T1544.8 208.5T1500.0 198.3T1455.0 187.8T1410.7 177.0T1365.8 167.2T1320.7 157.3T1276.7 146.6T1231.9 135.8T1186.9 125.4T1143.1 115.8T1098.5 105.9T1053.4 94.5T1009.6 83.8T965.1 74.3L942.2 69.7M1663.2 237.2L1640.5 232.2Q1617.8 227.3 1594.6 222.0T1549.0 211.3T1503.6 201.0T1457.8 190.2T1412.5 179.3T1366.9 169.2T1321.1 159.0T1276.2 148.1T1230.6 137.2T1184.8 126.6T1140.2 116.8T1094.8 106.5T1048.9 94.9T1004.3 84.2T958.9 74.5L935.7 69.7M1669.7 240.6L1648.1 235.9Q1626.5 231.1 1604.0 226.1T1560.0 215.8T1517.0 205.8T1473.0 195.7T1429.0 185.1T1386.0 175.1T1342.2 165.5T1298.3 155.3T1255.4 144.9T1211.7 134.4T1168.0 124.5T1125.1 115.2T1081.6 104.8T1037.8 93.7T994.8 83.7T951.3 74.4L929.2 69.7M1676.2 244.0L1654.3 239.2Q1632.3 234.4 1609.3 229.3T1564.5 218.9T1520.9 208.5T1476.0 198.3T1431.3 187.5T1387.6 177.4T1343.0 167.5T1298.3 157.0T1254.6 146.4T1210.2 135.7T1165.7 125.7T1122.0 116.1T1077.7 105.4T1033.3 94.2T989.4 84.2T945.0 74.6L922.7 69.7M1682.8 247.5L1660.4 242.6Q1638.1 237.7 1614.8 232.6T1569.3 221.9T1524.8 211.3T1479.1 200.8T1433.6 190.0T1389.2 179.6T1343.8 169.4T1298.3 158.8T1253.9 148.0T1208.7 137.1T1163.5 126.9T1118.9 117.1T1073.8 106.0T1028.8 94.7T984.0 84.6T938.7 74.7L916.0 69.7M1689.3 251.0L1666.5 246.0Q1643.8 241.0 1620.3 235.9T1574.1 225.1T1528.7 214.2T1482.3 203.4T1436.0 192.4T1390.8 181.9T1344.6 171.4T1298.3 160.5T1253.1 149.6T1207.2 138.5T1161.2 128.1T1115.8 118.0T1069.9 106.6T1024.3 95.3T978.5 85.0T932.3 74.8L909.4 69.7M1695.7 254.5L1673.9 249.7Q1652.2 244.8 1630.0 240.1T1585.5 229.8T1541.4 219.2T1497.3 208.8T1452.9 198.3T1409.0 188.0T1364.9 178.0T1320.6 167.5T1277.0 157.1T1232.9 146.5T1188.6 136.0T1145.2 126.2T1101.1 116.1T1056.7 105.0T1013.4 94.4T969.3 84.5T924.7 74.7L902.7 69.7M1702.2 258.2L1680.2 253.2Q1658.3 248.1 1635.9 243.4T1590.6 233.1T1545.5 222.1T1500.9 211.6T1455.7 200.8T1410.9 190.4T1366.2 180.1T1321.2 169.4T1276.7 158.8T1231.9 148.1T1186.9 137.3T1142.7 127.4T1097.9 117.0T1052.7 105.6T1008.6 95.0T963.8 84.9T918.3 74.8L896.0 69.8M1708.9 262.0L1686.7 256.7Q1664.6 251.5 1641.9 246.7T1595.6 236.3T1549.6 225.2T1504.5 214.3T1458.6 203.4T1412.8 192.8T1367.5 182.3T1321.7 171.3T1276.5 160.6T1230.9 149.6T1185.2 138.7T1140.3 128.6T1094.7 117.8T1048.7 106.4T1003.9 95.6T958.2 85.3T912.1 74.9L889.3 69.7M1716.2 265.9L1694.7 260.6Q1673.3 255.3 1651.4 250.9T1606.8 241.1T1562.5 230.4T1519.2 219.7T1474.8 209.2T1430.5 198.9T1387.4 188.9T1343.1 178.3T1298.9 167.7T1255.8 157.4T1211.8 146.8T1167.6 136.6T1124.5 126.7T1080.5 115.9T1036.2 105.0T992.9 94.8T949.0 84.8T904.6 74.8L882.7 69.7M1723.8 269.9L1701.6 264.3Q1679.5 258.7 1657.3 254.2T1612.1 244.5T1567.1 233.6T1523.0 222.7T1477.9 211.9T1433.0 201.4T1389.1 191.2T1344.1 180.4T1299.1 169.6T1255.4 159.1T1210.6 148.3T1165.6 137.9T1121.8 127.7T1077.1 116.7T1032.1 105.8T988.0 95.3T943.2 85.1T898.4 74.8L876.2 69.5M1731.6 274.0L1708.6 268.1Q1685.5 262.2 1663.1 257.6T1617.6 247.8T1571.9 236.8T1526.8 225.6T1481.1 214.6T1435.5 204.0T1390.8 193.6T1345.1 182.5T1299.4 171.5T1254.9 160.9T1209.4 149.9T1163.7 139.3T1119.1 128.8T1073.7 117.6T1028.1 106.5T983.0 95.9T937.5 85.5T892.1 74.9L869.7 69.3M1739.3 278.3L1716.6 272.3Q1693.8 266.3 1672.5 261.8T1629.2 252.5T1584.8 242.1T1540.7 231.2T1497.3 220.4T1453.2 210.0T1409.3 200.1T1365.9 189.6T1321.9 178.7T1278.2 168.3T1234.7 157.9T1190.8 147.4T1147.3 137.3T1103.6 126.7T1059.6 115.9T1016.1 105.4T972.3 95.1T928.1 85.0T884.6 74.6L863.1 69.1M1746.9 282.7L1723.6 276.4Q1700.3 270.0 1678.7 265.3T1634.9 255.8T1589.7 245.5T1544.8 234.4T1500.9 223.2T1456.0 212.6T1411.4 202.6T1367.3 191.9T1322.7 180.7T1278.2 170.2T1234.0 159.6T1189.4 148.9T1145.2 138.6T1100.8 127.7T1056.0 116.8T1011.9 106.2T967.3 95.6T922.3 85.4T878.2 74.6L856.5 68.8M1754.3 287.1L1730.7 280.5Q1707.2 273.9 1685.2 269.0T1640.7 259.2T1594.6 248.9T1549.1 237.6T1504.6 226.1T1458.9 215.3T1413.5 205.2T1368.8 194.3T1323.4 182.8T1278.2 172.1T1233.3 161.3T1188.0 150.5T1143.1 139.9T1097.9 128.7T1052.4 117.7T1007.7 106.9T962.3 96.1T916.4 85.7T871.8 74.6L849.7 68.6M1761.7 291.6L1739.3 285.1Q1716.8 278.5 1695.1 273.4T1651.7 263.8T1607.4 254.1T1563.4 243.4T1520.2 232.1T1476.1 221.2T1432.1 211.4T1389.0 201.3T1345.0 190.2T1301.0 179.4T1258.1 169.1T1214.1 158.6T1170.0 148.2T1127.1 137.7T1083.1 126.8T1038.8 116.3T995.8 105.8T951.8 95.4T907.3 85.2T864.1 74.2L842.7 68.4M1769.4 296.1L1746.9 289.4Q1724.4 282.7 1701.8 277.3T1657.3 267.2T1612.8 257.5T1568.1 246.7T1523.9 235.2T1479.3 224.0T1434.7 214.0T1390.8 203.8T1346.1 192.4T1301.5 181.4T1257.8 170.9T1213.1 160.3T1168.4 149.8T1124.7 138.9T1080.0 127.9T1035.1 117.3T991.3 106.5T946.6 95.9T901.5 85.5T857.5 74.2L835.6 68.3M1777.4 300.6L1754.7 293.8Q1731.9 287.0 1708.5 281.3T1663.1 270.8T1618.4 260.9T1572.8 250.1T1527.7 238.4T1482.7 226.8T1437.4 216.7T1392.6 206.3T1347.3 194.7T1302.1 183.5T1257.6 172.8T1212.2 162.0T1166.8 151.3T1122.4 140.1T1077.0 128.9T1031.4 118.2T986.8 107.2T941.4 96.5T895.7 85.7T850.8 74.2L828.4 68.2M1785.4 305.0L1763.3 298.5Q1741.3 292.1 1718.4 286.2T1674.4 275.5T1631.4 265.9T1586.9 255.9T1542.9 244.7T1499.9 233.1T1455.7 222.8T1411.8 213.2T1368.8 202.3T1324.7 191.0T1280.8 180.4T1237.7 170.0T1193.7 159.6T1149.8 149.0T1106.4 137.9T1062.5 127.3T1018.5 116.9T974.9 106.1T930.8 95.8T886.9 85.2T843.2 73.9L821.1 68.3M1793.1 309.3L1770.8 303.0Q1748.5 296.6 1725.4 290.4T1680.8 279.2T1637.0 269.4T1591.8 259.3T1547.2 248.1T1503.6 236.1T1458.7 225.5T1414.1 215.8T1370.4 204.8T1325.7 193.2T1281.0 182.4T1237.3 171.8T1192.6 161.4T1148.0 150.4T1103.9 139.1T1059.2 128.4T1014.7 117.8T970.3 106.9T925.5 96.3T881.1 85.3T836.5 74.0L813.9 68.5M1800.5 313.5L1778.2 307.4Q1755.9 301.2 1732.7 294.7T1687.3 283.0T1642.6 272.9T1596.9 262.8T1551.6 251.5T1507.3 239.2T1461.7 228.3T1416.4 218.5T1372.1 207.3T1326.6 195.5T1281.3 184.4T1236.9 173.7T1191.5 163.1T1146.2 151.9T1101.4 140.3T1056.0 129.6T1010.9 118.7T965.7 107.6T920.1 96.8T875.2 85.5T829.8 74.2L806.7 68.7M1808.0 317.6L1786.8 312.0Q1765.6 306.4 1743.4 300.0T1698.7 288.2T1654.9 277.9T1611.4 268.3T1567.2 257.8T1523.5 245.9T1479.9 234.5T1435.9 224.9T1392.4 214.7T1348.6 203.3T1304.7 192.1T1261.3 181.5T1217.3 171.3T1173.3 160.8T1129.9 149.4T1085.9 138.4T1041.6 128.2T998.3 117.4T954.1 106.6T909.6 96.0T866.3 85.0T822.2 74.1L799.5 68.9M1815.9 321.7L1794.7 316.3Q1773.4 310.9 1751.0 304.4T1705.3 292.3T1660.7 281.6T1617.0 271.7T1571.9 261.3T1527.4 249.2T1483.4 237.5T1438.7 227.7T1394.4 217.3T1350.1 205.7T1305.5 194.3T1261.3 183.5T1216.7 173.2T1172.0 162.4T1128.0 150.8T1083.2 139.7T1038.2 129.3T994.3 118.3T949.4 107.4T904.2 96.5T860.3 85.2T815.5 74.3L792.5 69.1M1824.6 325.8L1802.9 320.6Q1781.2 315.4 1758.4 308.9T1712.0 296.5T1666.8 285.3T1622.6 275.2T1576.6 264.9T1531.4 252.6T1487.0 240.5T1441.5 230.5T1396.4 220.0T1351.6 208.3T1306.3 196.5T1261.4 185.5T1216.1 175.1T1170.7 164.1T1126.1 152.2T1080.5 141.0T1034.9 130.4T990.3 119.2T944.7 108.1T898.8 96.8T854.2 85.4T808.7 74.5L785.5 69.2M1833.8 330.0L1812.1 325.1Q1790.3 320.3 1768.4 314.1T1723.9 302.1T1679.9 290.8T1636.5 280.6T1592.0 270.9T1548.1 259.5T1505.0 247.2T1460.5 236.8T1416.5 227.1T1373.4 216.1T1329.0 204.5T1284.9 193.3T1241.8 182.9T1197.4 172.8T1153.1 161.5T1109.8 149.9T1065.5 139.4T1021.0 129.0T977.5 118.0T933.2 107.1T888.8 96.0T845.2 85.1T800.9 74.5L778.5 69.2M1843.2 334.2L1820.3 329.4Q1797.5 324.6 1775.8 318.6T1731.3 306.5T1686.3 294.8T1642.0 284.2T1597.3 274.5T1552.7 263.1T1508.7 250.5T1463.7 239.7T1419.1 229.9T1375.3 218.8T1330.2 207.0T1285.5 195.5T1241.7 185.0T1196.6 174.7T1151.6 163.1T1107.7 151.3T1062.7 140.7T1017.6 130.1T973.3 118.9T928.4 107.8T883.4 96.4T839.0 85.4T794.1 74.7L771.5 69.2M1852.2 338.7L1828.6 333.8Q1805.0 329.0 1783.4 323.0T1738.9 310.9T1692.8 298.9T1647.6 287.9T1602.8 278.0T1557.3 266.7T1512.4 253.8T1467.1 242.7T1421.8 232.7T1377.1 221.5T1331.5 209.5T1286.1 197.7T1241.6 187.1T1195.8 176.7T1150.2 164.8T1105.5 152.8T1059.9 142.0T1014.1 131.2T969.1 119.8T923.5 108.4T878.1 96.8T832.8 85.8T787.1 74.8L764.4 69.1M1861.1 343.3L1838.1 338.6Q1815.1 333.8 1794.2 328.1T1750.9 316.6T1705.7 304.9T1661.7 293.6T1618.6 283.8T1573.7 273.5T1529.7 261.1T1486.5 249.4T1441.9 239.5T1397.8 229.1T1354.3 217.7T1309.9 205.9T1265.7 194.8T1222.0 184.9T1177.6 174.2T1133.4 162.1T1089.4 150.9T1044.9 140.6T1000.9 129.8T956.6 118.7T912.0 107.3T868.2 96.2T823.9 85.6T779.3 74.7L757.2 69.0M1870.3 348.1L1847.3 343.2Q1824.3 338.3 1802.6 332.6T1758.4 321.1T1713.0 309.4T1668.6 297.7T1624.9 287.6T1579.5 277.3T1535.0 264.9T1491.3 252.9T1446.1 242.7T1401.4 232.3T1357.6 220.8T1312.5 208.8T1267.8 197.5T1223.6 187.4T1178.6 176.5T1133.9 164.3T1089.3 152.9T1044.3 142.4T999.8 131.5T954.9 120.2T909.9 108.6T865.6 97.4T820.7 86.7T775.5 75.5L753.3 69.7M1879.9 353.1L1856.9 348.0Q1833.8 343.0 1811.1 337.2T1766.3 325.8T1721.3 314.0T1676.3 302.1T1631.8 291.6T1586.4 281.4T1541.6 269.1T1497.4 256.8T1451.9 246.3T1406.8 235.8T1362.7 224.4T1317.1 212.2T1271.9 200.6T1227.6 190.4T1182.1 179.6T1136.9 167.2T1092.1 155.6T1046.8 145.0T1001.7 134.0T956.6 122.6T911.2 110.8T866.4 99.4T821.2 88.7T775.7 77.4L753.3 71.4M1889.7 358.2L1866.4 353.0Q1843.1 347.8 1819.6 342.0T1774.5 330.4T1729.9 318.8T1683.9 306.7T1638.8 295.7T1593.7 285.5T1548.3 273.4T1503.5 260.8T1457.8 250.0T1412.4 239.4T1367.7 228.0T1321.8 215.7T1276.3 203.9T1231.6 193.5T1185.7 182.6T1139.9 170.2T1095.0 158.4T1049.2 147.6T1003.6 136.6T958.2 125.1T912.5 113.0T867.3 101.6T821.7 90.8T775.9 79.3L753.3 73.2M1899.0 363.3L1876.5 358.3Q1853.9 353.3 1831.1 347.5T1787.5 336.2T1744.5 325.1T1699.4 313.4T1655.7 302.2T1612.8 292.3T1568.0 281.3T1524.1 268.9T1481.1 257.6T1436.5 247.4T1392.5 236.8T1349.1 225.4T1304.6 213.3T1260.6 202.3T1216.8 192.5T1172.5 181.3T1128.4 169.1T1084.4 157.9T1040.1 147.5T996.1 136.8T951.9 125.4T907.6 113.6T863.9 102.6T819.7 92.2T775.2 81.0L753.3 75.1M1907.5 368.4L1885.5 363.5Q1863.4 358.5 1840.6 352.6T1796.3 340.9T1752.6 329.8T1707.5 318.2T1663.5 306.6T1620.0 296.4T1574.9 285.6T1530.7 273.2T1487.3 261.6T1442.2 251.1T1397.8 240.5T1354.2 229.1T1309.3 216.8T1264.7 205.5T1220.8 195.6T1176.0 184.4T1131.4 172.1T1087.2 160.7T1042.5 150.1T998.0 139.4T953.6 127.9T908.9 115.9T864.7 104.8T820.2 94.3T775.4 82.9L753.3 76.9M1916.1 373.5L1894.7 368.6Q1873.4 363.7 1850.4 357.8T1805.0 345.8T1760.7 334.5T1716.0 323.0T1671.3 311.2T1627.1 300.7T1582.0 289.8T1537.5 277.5T1493.5 265.7T1448.1 254.8T1403.4 244.2T1359.4 232.8T1314.0 220.4T1269.0 208.8T1224.9 198.7T1179.6 187.6T1134.5 175.2T1090.1 163.5T1044.9 152.7T1000.0 142.0T955.3 130.4T910.2 118.1T865.6 107.0T820.7 96.4T775.7 84.9L753.4 78.8M1918.7 377.0L1897.6 372.2Q1876.4 367.5 1853.4 361.3T1807.6 349.1T1763.1 337.7T1718.7 326.3T1673.6 314.5T1629.3 303.8T1584.3 292.8T1539.6 280.5T1495.3 268.7T1449.9 257.6T1405.1 246.9T1360.9 235.6T1315.4 223.1T1270.3 211.4T1226.1 201.2T1180.6 190.0T1135.4 177.6T1091.0 165.8T1045.6 155.0T1000.5 144.2T955.8 132.6T910.6 120.2T865.8 109.0T820.9 98.4T775.8 86.8L753.4 80.7M1918.6 379.9L1897.5 375.2Q1876.5 370.5 1853.5 364.2T1807.5 351.7T1763.2 340.3T1718.9 328.9T1673.7 317.2T1629.3 306.4T1584.5 295.2T1539.7 283.0T1495.4 271.3T1450.0 260.1T1405.1 249.3T1360.9 238.0T1315.4 225.4T1270.3 213.8T1226.0 203.5T1180.5 192.2T1135.3 179.8T1090.9 168.0T1045.6 157.1T1000.4 146.4T955.8 134.7T910.6 122.2T865.8 111.0T820.9 100.4T775.8 88.7L753.4 82.6M1918.5 382.8L1897.6 378.2Q1876.6 373.6 1853.5 367.1T1807.5 354.4T1763.2 343.0T1719.1 331.6T1673.8 320.0T1629.4 309.1T1584.6 297.6T1539.8 285.5T1495.4 273.9T1450.1 262.5T1405.2 251.7T1360.9 240.3T1315.3 227.8T1270.3 216.1T1226.0 205.8T1180.5 194.5T1135.3 182.1T1090.9 170.2T1045.5 159.2T1000.4 148.5T955.8 136.7T910.6 124.2T865.7 113.0T820.9 102.4T775.8 90.7L753.4 84.5M1918.5 385.8L1897.6 381.2Q1876.8 376.6 1853.6 370.0T1807.5 357.2T1763.3 345.6T1719.2 334.3T1673.8 322.8T1629.4 311.8T1584.8 300.1T1539.8 288.1T1495.4 276.5T1450.1 265.0T1405.2 254.1T1360.9 242.7T1315.3 230.2T1270.2 218.5T1226.0 208.1T1180.4 196.7T1135.2 184.4T1090.9 172.4T1045.5 161.3T1000.3 150.7T955.8 138.8T910.6 126.2T865.7 115.0T821.0 104.4T775.9 92.6L753.4 86.5M1918.5 388.8L1897.7 384.2Q1876.9 379.6 1853.7 372.9T1807.6 360.0T1763.4 348.3T1719.4 337.0T1673.9 325.7T1629.5 314.5T1584.9 302.5T1539.9 290.7T1495.4 279.1T1450.2 267.6T1405.2 256.6T1360.8 245.2T1315.3 232.6T1270.2 220.9T1225.9 210.4T1180.3 199.0T1135.1 186.7T1090.8 174.6T1045.4 163.5T1000.2 152.9T955.8 140.9T910.6 128.2T865.7 117.1T821.0 106.4T776.0 94.6L753.5 88.5M1918.6 391.8L1897.8 387.2Q1877.0 382.6 1853.8 375.8T1807.6 362.8T1763.5 351.0T1719.6 339.7T1674.0 328.6T1629.5 317.2T1585.1 305.0T1539.9 293.3T1495.4 281.8T1450.2 270.1T1405.3 259.1T1360.8 247.6T1315.2 235.0T1270.2 223.4T1225.8 212.7T1180.3 201.2T1135.1 189.0T1090.8 176.8T1045.4 165.7T1000.2 155.1T955.8 143.1T910.6 130.3T865.7 119.1T821.0 108.4T776.0 96.7L753.5 90.5M1918.7 394.9L1897.9 390.2Q1877.1 385.5 1853.9 378.7T1807.7 365.7T1763.7 353.7T1719.8 342.4T1674.0 331.5T1629.6 319.9T1585.2 307.5T1540.0 295.9T1495.3 284.5T1450.3 272.7T1405.3 261.6T1360.7 250.0T1315.2 237.5T1270.2 225.9T1225.8 215.1T1180.2 203.5T1135.1 191.3T1090.8 179.1T1045.3 167.9T1000.1 157.3T955.8 145.2T910.6 132.4T865.6 121.2T821.1 110.5T776.1 98.7L753.5 92.6M1918.8 398.0L1898.0 393.2Q1877.2 388.4 1854.0 381.7T1807.8 368.6T1763.8 356.4T1720.0 345.2T1674.1 334.5T1629.7 322.7T1585.4 310.1T1540.0 298.6T1495.3 287.2T1450.3 275.3T1405.2 264.1T1360.6 252.5T1315.2 239.9T1270.1 228.4T1225.7 217.4T1180.1 205.9T1135.0 193.7T1090.8 181.4T1045.3 170.2T1000.1 159.6T955.8 147.4T910.6 134.6T865.6 123.3T821.1 112.5T776.1 100.8L753.5 94.7M1919.0 401.1L1898.2 396.2Q1877.3 391.4 1854.1 384.7T1807.9 371.6T1764.0 359.1T1720.1 348.0T1674.1 337.5T1629.7 325.5T1585.5 312.7T1540.0 301.3T1495.3 289.9T1450.4 278.0T1405.2 266.7T1360.5 254.9T1315.1 242.5T1270.1 230.9T1225.6 219.8T1180.1 208.2T1135.0 196.1T1090.7 183.7T1045.3 172.5T1000.1 161.8T955.9 149.6T910.7 136.7T865.6 125.5T821.2 114.6T776.2 102.9L753.6 96.8M1919.2 404.1L1898.3 399.2Q1877.4 394.3 1854.2 387.7T1808.0 374.6T1764.2 361.9T1720.2 350.8T1674.1 340.5T1629.8 328.2T1585.6 315.3T1539.9 304.0T1495.2 292.6T1450.4 280.7T1405.2 269.3T1360.4 257.4T1315.1 245.0T1270.0 233.5T1225.6 222.2T1180.0 210.6T1135.0 198.5T1090.7 186.1T1045.2 174.8T1000.1 164.1T955.9 151.7T910.7 138.9T865.6 127.6T821.2 116.7T776.2 105.0L753.6 98.9M1919.5 407.2L1898.5 402.2Q1877.4 397.2 1854.3 390.8T1808.1 377.6T1764.4 364.7T1720.4 353.7T1674.2 343.5T1629.9 331.1T1585.7 318.0T1539.9 306.7T1495.1 295.4T1450.4 283.5T1405.1 271.9T1360.3 259.8T1315.1 247.6T1270.0 236.1T1225.5 224.7T1180.0 213.0T1134.9 200.9T1090.7 188.4T1045.2 177.1T1000.1 166.3T955.9 154.0T910.7 141.2T865.6 129.8T821.3 118.8T776.3 107.1L753.6 101.0M1919.7 410.3L1898.6 405.2Q1877.5 400.2 1854.3 393.9T1808.3 380.7T1764.5 367.5T1720.5 356.6T1674.2 346.6T1629.9 333.9T1585.8 320.7T1539.8 309.5T1495.1 298.2T1450.5 286.3T1405.0 274.5T1360.2 262.3T1315.0 250.3T1269.9 238.7T1225.4 227.1T1179.9 215.4T1134.9 203.3T1090.6 190.8T1045.2 179.5T1000.1 168.6T956.0 156.2T910.7 143.4T865.6 132.0T821.4 120.9T776.4 109.2L753.6 103.2M1920.0 413.3L1898.7 408.2Q1877.5 403.1 1854.4 397.0T1808.5 383.8T1764.7 370.3T1720.5 359.6T1674.2 349.6T1630.0 336.7T1585.8 323.4T1539.7 312.2T1495.0 301.0T1450.5 289.1T1404.9 277.1T1360.1 264.8T1315.0 252.9T1269.9 241.4T1225.3 229.6T1179.9 217.9T1134.9 205.8T1090.6 193.3T1045.1 181.9T1000.1 170.9T956.0 158.5T910.7 145.7T865.6 134.2T821.4 123.1T776.4 111.4L753.6 105.3M1920.3 416.4L1898.9 411.3Q1877.5 406.2 1854.5 400.2T1808.7 386.9T1764.8 373.2T1720.6 362.6T1674.2 352.7T1630.0 339.6T1585.8 326.3T1539.6 315.0T1494.9 303.8T1450.5 292.0T1404.8 279.8T1359.9 267.4T1315.0 255.6T1269.8 244.1T1225.2 232.1T1179.9 220.3T1134.9 208.2T1090.6 195.7T1045.1 184.3T1000.1 173.2T956.0 160.7T910.8 148.0T865.7 136.4T821.5 125.2T776.5 113.6L753.6 107.5M1920.5 419.4L1899.0 414.3Q1877.5 409.2 1854.6 403.4T1808.9 390.0T1764.9 376.2T1720.6 365.6T1674.3 355.7T1630.1 342.5T1585.8 329.1T1539.5 317.8T1494.9 306.6T1450.4 294.9T1404.7 282.5T1359.8 270.0T1315.0 258.4T1269.8 246.8T1225.1 234.6T1179.9 222.8T1134.9 210.7T1090.5 198.2T1045.1 186.8T1000.2 175.5T956.1 163.0T910.8 150.4T865.7 138.6T821.6 127.4T776.5 115.8L753.6 109.7M1920.7 422.5L1899.1 417.4Q1877.4 412.3 1854.7 406.6T1809.1 393.2T1765.0 379.2T1720.5 368.8T1674.3 358.8T1630.1 345.5T1585.8 332.1T1539.4 320.6T1494.8 309.5T1450.4 297.8T1404.6 285.2T1359.7 272.6T1314.9 261.1T1269.7 249.5T1225.0 237.2T1179.9 225.4T1134.9 213.2T1090.5 200.7T1045.2 189.2T1000.2 177.9T956.1 165.4T910.8 152.8T865.8 140.9T821.7 129.7T776.6 118.0L753.6 111.9M1920.9 425.6L1899.1 420.6Q1877.3 415.5 1854.7 409.8T1809.3 396.3T1765.0 382.3T1720.5 371.9T1674.3 361.8T1630.1 348.5T1585.7 335.0T1539.3 323.4T1494.7 312.4T1450.3 300.8T1404.4 287.9T1359.6 275.2T1314.9 263.9T1269.6 252.2T1224.9 239.8T1179.9 227.9T1134.9 215.7T1090.5 203.3T1045.2 191.8T1000.3 180.2T956.2 167.7T910.8 155.2T865.8 143.2T821.7 131.9T776.6 120.3L753.6 114.1M1921.1 428.8L1899.1 423.8Q1877.2 418.8 1854.8 413.0T1809.5 399.4T1765.0 385.4T1720.4 375.1T1674.3 364.8T1630.0 351.5T1585.6 338.0T1539.1 326.3T1494.6 315.4T1450.3 303.8T1404.3 290.6T1359.5 277.9T1314.9 266.7T1269.6 255.0T1224.8 242.5T1179.9 230.5T1135.0 218.3T1090.5 205.9T1045.2 194.3T1000.3 182.6T956.2 170.1T910.9 157.6T865.9 145.5T821.8 134.2T776.7 122.5L753.6 116.3M1921.2 432.0L1899.1 427.0Q1877.1 422.0 1854.9 416.3T1809.6 402.6T1765.0 388.7T1720.3 378.3T1674.3 367.9T1630.0 354.6T1585.4 341.1T1539.0 329.1T1494.5 318.4T1450.2 306.8T1404.1 293.4T1359.4 280.6T1314.9 269.5T1269.5 257.7T1224.7 245.1T1179.9 233.1T1135.0 220.8T1090.5 208.5T1045.3 196.9T1000.4 185.0T956.2 172.5T910.9 160.0T865.9 147.9T821.9 136.5T776.7 124.8L753.6 118.6M1921.2 435.3L1899.1 430.3Q1877.0 425.4 1854.9 419.5T1809.8 405.8T1764.9 392.0T1720.2 381.5T1674.3 370.9T1629.9 357.7T1585.3 344.2T1538.9 332.0T1494.4 321.4T1450.1 309.8T1404.0 296.2T1359.3 283.3T1314.9 272.4T1269.4 260.6T1224.7 247.9T1180.0 235.7T1135.0 223.4T1090.5 211.2T1045.3 199.4T1000.5 187.4T956.3 175.0T911.0 162.5T866.0 150.3T822.0 138.8T776.7 127.1L753.6 120.8M1921.2 438.7L1899.0 433.7Q1876.8 428.7 1855.0 422.7T1809.9 409.0T1764.8 395.4T1720.0 384.8T1674.2 373.9T1629.7 360.9T1585.1 347.3T1538.8 335.0T1494.4 324.4T1450.0 312.9T1403.8 299.0T1359.2 286.2T1314.9 275.2T1269.4 263.4T1224.6 250.6T1180.0 238.3T1135.0 226.0T1090.5 213.9T1045.4 202.1T1000.6 189.8T956.3 177.4T911.0 165.0T866.1 152.7T822.0 141.1T776.7 129.4L753.6 123.0M1921.2 442.3L1898.9 437.2Q1876.7 432.1 1855.0 425.9T1810.0 412.2T1764.6 398.9T1719.9 388.1T1674.2 377.0T1629.6 364.1T1584.9 350.4T1538.6 337.9T1494.3 327.5T1449.9 315.9T1403.7 301.8T1359.2 289.0T1314.9 278.1T1269.3 266.2T1224.6 253.4T1180.1 241.0T1135.1 228.6T1090.5 216.6T1045.5 204.7T1000.6 192.3T956.3 179.9T911.1 167.5T866.1 155.1T822.1 143.5T776.8 131.7L753.6 125.3M1921.1 446.0L1898.8 440.7Q1876.5 435.5 1855.0 429.1T1810.0 415.5T1764.4 402.4T1719.7 391.4T1674.2 380.1T1629.4 367.3T1584.7 353.6T1538.6 341.0T1494.2 330.6T1449.8 319.0T1403.6 304.7T1359.1 291.9T1315.0 281.0T1269.3 269.1T1224.6 256.3T1180.2 243.6T1135.1 231.3T1090.5 219.4T1045.6 207.3T1000.7 194.8T956.4 182.5T911.1 170.0T866.2 157.6T822.1 145.9T776.8 134.0L753.6 127.6M1921.0 449.8L1898.7 444.3Q1876.4 438.8 1855.0 432.3T1810.0 418.8T1764.1 406.1T1719.5 394.7T1674.2 383.2T1629.2 370.6T1584.5 356.8T1538.5 344.1T1494.1 333.8T1449.7 322.0T1403.5 307.7T1359.1 294.9T1315.0 283.9T1269.2 272.0T1224.6 259.2T1180.3 246.3T1135.1 234.0T1090.5 222.2T1045.7 210.0T1000.8 197.3T956.4 185.0T911.2 172.6T866.3 160.1T822.1 148.4T776.8 136.3L753.6 129.8M1920.8 453.7L1898.5 447.9Q1876.2 442.2 1855.0 435.4T1809.9 422.1T1763.8 409.7T1719.4 398.1T1674.1 386.3T1629.0 373.9T1584.2 360.0T1538.4 347.2T1494.0 337.0T1449.6 325.1T1403.5 310.7T1359.1 297.9T1315.0 286.8T1269.2 275.0T1224.6 262.1T1180.4 249.0T1135.2 236.7T1090.5 225.0T1045.8 212.7T1000.9 199.9T956.4 187.6T911.2 175.2T866.3 162.6T822.1 150.8T776.8 138.7L753.6 132.2M1920.6 457.7L1898.3 451.6Q1876.1 445.5 1854.9 438.6T1809.8 425.5T1763.5 413.5T1719.2 401.5T1674.1 389.5T1628.8 377.2T1584.1 363.3T1538.4 350.5T1494.0 340.2T1449.5 328.1T1403.5 313.7T1359.2 300.9T1315.1 289.8T1269.2 278.0T1224.7 265.0T1180.5 251.8T1135.2 239.4T1090.5 227.9T1045.9 215.4T1000.9 202.5T956.4 190.2T911.3 177.8T866.4 165.2T822.2 153.3T776.8 141.0L753.6 134.5M1920.4 461.9L1898.2 455.3Q1875.9 448.8 1854.8 441.8T1809.7 429.0T1763.2 417.2T1719.1 404.9T1674.0 392.7T1628.5 380.5T1583.9 366.5T1538.4 353.8T1493.9 343.4T1449.4 331.2T1403.5 316.9T1359.2 304.0T1315.1 292.7T1269.2 281.0T1224.8 268.0T1180.6 254.5T1135.2 242.2T1090.6 230.8T1046.0 218.2T1001.0 205.1T956.4 192.8T911.4 180.4T866.5 167.8T822.1 155.8T776.8 143.4L753.7 136.8M1920.2 466.0L1898.0 459.0Q1875.8 452.0 1854.7 445.0T1809.5 432.5T1762.9 421.0T1718.9 408.3T1673.9 396.0T1628.3 383.8T1583.7 369.9T1538.4 357.2T1493.8 346.6T1449.3 334.3T1403.5 320.0T1359.3 307.1T1315.1 295.7T1269.3 284.0T1224.8 271.0T1180.8 257.3T1135.3 245.1T1090.6 233.7T1046.1 221.0T1001.1 207.8T956.4 195.4T911.4 183.0T866.5 170.4T822.1 158.3T776.8 145.8L753.7 139.2M1920.0 470.2L1897.8 462.8Q1875.6 455.3 1854.6 448.3T1809.2 436.1T1762.6 424.8T1718.8 411.8T1673.9 399.4T1628.0 387.1T1583.6 373.2T1538.5 360.6T1493.8 349.9T1449.2 337.3T1403.6 323.3T1359.4 310.3T1315.2 298.7T1269.3 287.1T1225.0 274.0T1180.9 260.2T1135.3 247.9T1090.6 236.6T1046.2 223.8T1001.1 210.5T956.4 198.1T911.5 185.7T866.5 173.1T822.1 160.9T776.7 148.2L753.7 141.6M1919.9 474.4L1897.7 466.5Q1875.5 458.6 1854.4 451.6T1809.0 439.8T1762.3 428.5T1718.7 415.4T1673.8 402.8T1627.8 390.4T1583.5 376.7T1538.6 364.2T1493.7 353.1T1449.2 340.4T1403.7 326.5T1359.5 313.5T1315.2 301.7T1269.4 290.2T1225.1 277.1T1181.0 263.0T1135.4 250.8T1090.7 239.5T1046.3 226.6T1001.1 213.2T956.4 200.8T911.5 188.4T866.6 175.9T822.1 163.5T776.7 150.7L753.7 144.1M1919.7 478.5L1897.5 470.2Q1875.3 461.9 1854.2 455.1T1808.7 443.4T1762.1 432.3T1718.6 419.0T1673.7 406.2T1627.6 393.7T1583.5 380.1T1538.7 367.8T1493.7 356.4T1449.2 343.6T1403.9 329.9T1359.6 316.7T1315.3 304.8T1269.5 293.4T1225.2 280.1T1181.1 265.9T1135.4 253.8T1090.8 242.5T1046.4 229.5T1001.2 216.0T956.4 203.5T911.6 191.1T866.6 178.6T822.0 166.1T776.7 153.1L753.7 146.6M1919.7 482.6L1897.4 474.0Q1875.2 465.4 1853.9 458.6T1808.4 447.2T1761.9 436.1T1718.6 422.8T1673.7 409.7T1627.5 396.9T1583.5 383.7T1538.8 371.5T1493.6 359.6T1449.2 346.7T1404.0 333.2T1359.7 320.0T1315.3 307.9T1269.6 296.6T1225.3 283.2T1181.2 268.9T1135.5 256.8T1090.8 245.5T1046.5 232.4T1001.2 218.9T956.4 206.2T911.6 193.8T866.6 181.4T821.9 168.7T776.7 155.6L753.7 149.1M1919.7 486.5L1897.3 477.7Q1875.0 468.9 1853.7 462.3T1808.2 450.9T1761.8 439.9T1718.6 426.6T1673.6 413.3T1627.3 400.2T1583.6 387.3T1539.0 375.2T1493.6 362.9T1449.3 349.9T1404.3 336.6T1359.8 323.3T1315.4 311.1T1269.7 299.8T1225.5 286.3T1181.3 271.9T1135.5 259.9T1090.9 248.4T1046.6 235.3T1001.2 221.8T956.3 209.0T911.7 196.6T866.6 184.2T821.9 171.3T776.7 158.2L753.7 151.6M1919.7 490.4L1897.3 481.5Q1874.8 472.6 1853.4 466.0T1808.0 454.7T1761.7 443.6T1718.6 430.4T1673.6 416.8T1627.3 403.5T1583.7 390.9T1539.1 378.9T1493.6 366.2T1449.4 353.1T1404.5 340.1T1359.9 326.6T1315.4 314.4T1269.9 303.0T1225.6 289.4T1181.4 275.0T1135.5 262.9T1091.0 251.4T1046.7 238.3T1001.2 224.7T956.3 211.8T911.7 199.4T866.5 187.1T821.8 174.0T776.6 160.7L753.8 154.2M1919.8 494.2L1897.2 485.3Q1874.6 476.4 1853.1 469.9T1807.8 458.5T1761.8 447.4T1718.6 434.4T1673.5 420.4T1627.3 406.9T1583.9 394.7T1539.3 382.7T1493.6 369.5T1449.5 356.4T1404.7 343.5T1360.0 330.0T1315.5 317.7T1270.1 306.2T1225.7 292.5T1181.4 278.2T1135.6 266.1T1091.0 254.5T1046.8 241.3T1001.1 227.6T956.3 214.6T911.7 202.3T866.5 190.0T821.7 176.7T776.6 163.3L753.8 156.9M1920.0 497.9L1897.2 489.2Q1874.4 480.4 1852.9 473.9T1807.7 462.3T1761.8 451.2T1718.6 438.4T1673.5 424.1T1627.3 410.2T1584.1 398.5T1539.5 386.5T1493.6 372.9T1449.7 359.8T1405.0 347.0T1360.0 333.4T1315.6 321.1T1270.3 309.4T1225.8 295.7T1181.4 281.4T1135.6 269.2T1091.1 257.5T1046.8 244.3T1001.1 230.6T956.2 217.4T911.7 205.2T866.4 192.9T821.6 179.4T776.6 166.0L753.8 159.6M1920.2 501.6L1897.2 493.1Q1874.2 484.6 1852.6 478.0T1807.6 466.1T1762.0 455.1T1718.6 442.4T1673.6 427.7T1627.4 413.7T1584.3 402.3T1539.7 390.3T1493.7 376.3T1449.8 363.2T1405.3 350.5T1360.1 336.9T1315.6 324.5T1270.4 312.7T1225.9 298.8T1181.5 284.7T1135.7 272.4T1091.1 260.5T1046.8 247.4T1001.0 233.6T956.2 220.3T911.7 208.1T866.4 195.8T821.5 182.2T776.6 168.7L753.8 162.3M1920.5 505.3L1897.2 497.1Q1873.9 489.0 1852.4 482.2T1807.6 469.9T1762.2 459.0T1718.7 446.5T1673.6 431.3T1627.6 417.2T1584.5 406.2T1539.8 394.2T1493.8 379.8T1450.1 366.6T1405.5 353.9T1360.1 340.5T1315.7 328.0T1270.6 315.9T1226.0 302.0T1181.4 288.0T1135.7 275.7T1091.2 263.6T1046.8 250.6T1001.0 236.7T956.2 223.2T911.7 211.1T866.3 198.8T821.4 185.0T776.5 171.4L753.8 165.0M1920.8 509.0L1897.2 501.2Q1873.7 493.4 1852.2 486.5T1807.8 473.8T1762.5 463.0T1718.7 450.6T1673.7 435.0T1627.9 420.8T1584.8 410.1T1540.0 398.0T1493.9 383.4T1450.3 370.1T1405.7 357.4T1360.2 344.1T1315.8 331.6T1270.8 319.1T1226.0 305.2T1181.4 291.4T1135.7 278.9T1091.2 266.7T1046.8 253.7T1000.9 239.8T956.1 226.2T911.7 214.1T866.2 201.7T821.3 187.8T776.5 174.2L753.8 167.8M1921.1 512.8L1897.3 505.4Q1873.5 498.0 1852.1 490.8T1808.0 477.7T1762.8 467.0T1718.8 454.7T1673.9 438.8T1628.2 424.6T1585.0 414.1T1540.2 401.8T1494.0 387.1T1450.5 373.6T1405.9 360.9T1360.2 347.8T1315.9 335.2T1271.0 322.4T1226.0 308.5T1181.4 294.9T1135.8 282.2T1091.2 269.8T1046.7 256.9T1000.8 242.9T956.1 229.2T911.7 217.1T866.1 204.7T821.2 190.7T776.5 177.0L753.9 170.6M1921.4 516.7L1897.4 509.6Q1873.4 502.6 1852.0 495.1T1808.3 481.7T1763.1 471.1T1718.9 458.8T1674.0 442.6T1628.5 428.4T1585.2 418.0T1540.3 405.6T1494.1 390.8T1450.7 377.2T1406.1 364.4T1360.2 351.5T1315.9 338.8T1271.1 325.6T1226.0 311.8T1181.3 298.4T1135.8 285.5T1091.2 273.0T1046.6 260.1T1000.8 246.0T956.0 232.2T911.6 220.2T866.0 207.7T821.1 193.6T776.5 179.8L753.9 173.5M1921.7 520.7L1897.5 513.9Q1873.3 507.1 1852.0 499.5T1808.6 485.9T1763.5 475.3T1718.9 462.8T1674.3 446.4T1628.9 432.4T1585.4 421.9T1540.4 409.5T1494.3 394.6T1450.9 380.8T1406.2 367.9T1360.1 355.3T1316.0 342.5T1271.2 328.9T1225.9 315.2T1181.2 302.0T1135.8 288.9T1091.1 276.3T1046.5 263.4T1000.7 249.2T956.0 235.3T911.6 223.3T865.9 210.7T821.0 196.5T776.5 182.8L753.9 176.4M1922.0 524.8L1897.6 518.2Q1873.3 511.7 1852.1 503.8T1809.0 490.1T1763.8 479.5T1719.0 466.8T1674.5 450.4T1629.2 436.5T1585.5 425.9T1540.5 413.3T1494.5 398.6T1451.1 384.4T1406.3 371.5T1360.1 359.2T1316.0 346.2T1271.3 332.2T1225.8 318.6T1181.1 305.6T1135.8 292.3T1091.0 279.5T1046.4 266.7T1000.6 252.3T955.9 238.5T911.5 226.4T865.8 213.8T821.0 199.5T776.5 185.7L753.9 179.3M1922.3 529.0L1897.8 522.5Q1873.3 516.1 1852.3 508.2T1809.5 494.5T1764.1 483.7T1719.0 470.7T1674.8 454.4T1629.6 440.6T1585.6 429.8T1540.6 417.3T1494.6 402.5T1451.2 388.0T1406.3 375.1T1360.0 363.2T1316.1 350.0T1271.3 335.5T1225.6 322.1T1181.0 309.2T1135.8 295.7T1090.9 282.9T1046.2 270.0T1000.5 255.6T955.9 241.7T911.4 229.6T865.7 216.8T820.9 202.5T776.5 188.7L753.9 182.2M1922.5 533.2L1898.0 526.8Q1873.5 520.4 1852.6 512.7T1810.0 499.1T1764.4 487.9T1719.1 474.6T1675.1 458.6T1629.9 444.9T1585.7 433.7T1540.6 421.2T1494.8 406.6T1451.3 391.7T1406.3 378.8T1359.9 367.2T1316.1 353.7T1271.3 338.9T1225.4 325.6T1180.9 312.8T1135.8 299.2T1090.8 286.2T1046.1 273.3T1000.5 258.8T955.8 245.0T911.3 232.8T865.6 219.9T820.8 205.6T776.4 191.7L753.8 185.1M1922.8 537.5L1898.2 531.1Q1873.7 524.6 1852.9 517.1T1810.4 503.8T1764.7 492.1T1719.1 478.5T1675.5 462.9T1630.2 449.3T1585.6 437.6T1540.7 425.2T1495.0 410.7T1451.3 395.4T1406.2 382.5T1359.8 371.2T1316.1 357.5T1271.3 342.4T1225.2 329.2T1180.8 316.5T1135.8 302.8T1090.6 289.7T1045.9 276.6T1000.4 262.1T955.7 248.4T911.3 236.1T865.6 223.0T820.8 208.7T776.4 194.8L753.8 188.1M1922.9 541.8L1898.5 535.3Q1874.0 528.8 1853.3 521.7T1810.8 508.6T1764.8 496.4T1719.2 482.3T1675.8 467.3T1630.4 453.7T1585.5 441.6T1540.7 429.3T1495.1 414.8T1451.2 399.2T1406.0 386.4T1359.8 375.3T1316.0 361.3T1271.2 346.0T1225.0 332.8T1180.6 320.2T1135.8 306.4T1090.5 293.2T1045.7 279.9T1000.4 265.5T955.7 251.8T911.1 239.3T865.5 226.1T820.8 211.9T776.4 197.9L753.8 191.1M1923.1 546.0L1898.8 539.5Q1874.4 532.9 1853.6 526.3T1811.1 513.6T1765.0 500.6T1719.2 486.2T1676.0 471.8T1630.6 458.1T1585.3 445.6T1540.7 433.4T1495.2 418.9T1451.1 403.0T1405.9 390.3T1359.7 379.3T1315.9 365.1T1271.0 349.6T1224.8 336.5T1180.5 323.8T1135.7 310.1T1090.3 296.7T1045.6 283.2T1000.3 268.9T955.6 255.3T911.0 242.6T865.4 229.3T820.8 215.1T776.4 201.0L753.8 194.1M1923.2 550.2L1900.0 543.9Q1876.8 537.5 1856.6 531.7T1815.4 519.8T1770.8 506.7T1726.8 492.6T1685.7 479.1T1641.4 465.9T1596.9 453.1T1555.5 441.5T1511.6 428.6T1467.2 413.0T1425.0 399.1T1381.5 388.7T1337.5 376.7T1294.7 361.5T1251.1 347.4T1207.7 335.4T1164.7 322.8T1120.8 309.6T1077.9 296.5T1034.9 283.1T990.8 269.5T948.0 256.7T905.3 244.2T861.2 231.2T818.3 217.6T775.6 204.0L753.8 197.2M1923.3 554.4L1900.3 548.1Q1877.4 541.8 1856.9 536.5T1815.4 525.0T1770.8 511.0T1726.9 496.6T1685.7 483.6T1641.3 470.5T1596.8 457.3T1555.5 445.6T1511.5 432.7T1466.9 417.0T1425.0 403.2T1381.4 392.8T1337.2 380.6T1294.6 365.3T1251.0 351.2T1207.5 339.1T1164.5 326.6T1120.8 313.4T1077.7 300.0T1034.8 286.5T990.8 273.1T948.0 260.3T905.2 247.5T861.2 234.5T818.3 220.9T775.6 207.2L753.8 200.3M1923.4 558.5L1900.7 552.3Q1877.9 546.1 1857.1 541.5T1815.3 530.1T1770.8 515.3T1727.0 500.7T1685.6 488.2T1641.1 475.1T1596.7 461.6T1555.4 449.9T1511.3 436.8T1466.7 421.1T1424.9 407.5T1381.2 396.9T1336.9 384.5T1294.4 369.3T1251.0 355.1T1207.2 342.8T1164.3 330.4T1120.8 317.3T1077.6 303.6T1034.6 289.8T990.8 276.7T947.9 263.9T905.1 250.9T861.2 237.8T818.3 224.3T775.6 210.4L753.8 203.5M1923.5 562.7L1901.0 556.7Q1878.4 550.8 1857.3 546.5T1815.1 535.2T1770.8 519.7T1727.0 504.9T1685.4 492.8T1640.9 479.7T1596.6 466.1T1555.2 454.1T1511.0 440.9T1466.4 425.3T1424.7 411.8T1381.0 401.0T1336.5 388.4T1294.3 373.3T1250.9 359.0T1206.9 346.5T1164.2 334.3T1120.8 321.2T1077.4 307.1T1034.5 293.3T990.8 280.4T947.9 267.6T905.1 254.3T861.2 241.1T818.3 227.7T775.6 213.7L753.8 206.7M1923.6 567.0L1901.2 561.3Q1878.9 555.6 1857.3 551.6T1814.7 540.2T1770.8 524.1T1727.0 509.3T1685.1 497.4T1640.6 484.4T1596.5 470.8T1555.0 458.4T1510.7 444.9T1466.1 429.6T1424.6 416.3T1380.8 405.2T1336.2 392.3T1294.2 377.4T1250.8 363.0T1206.7 350.3T1164.1 338.3T1120.8 325.2T1077.3 310.7T1034.4 296.8T990.9 284.1T947.9 271.3T905.0 257.7T861.2 244.5T818.4 231.1T775.6 217.0L753.8 210.0M1923.7 571.6L1901.4 566.1Q1879.2 560.7 1857.2 556.7T1814.3 545.1T1770.7 528.7T1726.9 513.8T1684.6 501.9T1640.4 489.1T1596.3 475.5T1554.7 462.8T1510.3 448.9T1465.9 434.0T1424.4 420.9T1380.5 409.3T1336.0 396.3T1294.1 381.6T1250.7 367.0T1206.5 354.1T1164.0 342.3T1120.8 329.2T1077.2 314.3T1034.4 300.3T991.0 287.9T947.9 275.0T905.0 261.2T861.3 247.9T818.4 234.5T775.7 220.4L753.9 213.4M1923.7 576.4L1901.5 571.2Q1879.3 565.9 1856.9 561.8T1813.8 549.9T1770.7 533.4T1726.7 518.5T1684.1 506.4T1640.1 493.9T1596.2 480.5T1554.3 467.1T1510.0 452.9T1465.7 438.6T1424.2 425.6T1380.3 413.4T1335.7 400.3T1294.0 385.9T1250.6 371.1T1206.3 358.0T1164.0 346.4T1120.9 333.2T1077.1 318.0T1034.3 304.0T991.1 291.8T947.9 278.7T905.0 264.7T861.4 251.4T818.5 237.9T775.7 223.9L753.9 216.8M1923.7 581.7L1901.5 576.5Q1879.3 571.4 1856.5 566.9T1813.2 554.7T1770.6 538.3T1726.4 523.3T1683.5 510.9T1639.9 498.7T1596.0 485.5T1553.9 471.4T1509.7 456.9T1465.6 443.2T1424.0 430.3T1380.0 417.5T1335.6 404.4T1294.0 390.2T1250.5 375.2T1206.1 362.0T1164.0 350.5T1120.9 337.3T1077.0 321.7T1034.4 307.7T991.2 295.6T947.9 282.5T905.0 268.3T861.6 254.9T818.5 241.4T775.7 227.3L754.0 220.3M1923.7 587.3L1901.4 582.1Q1879.1 576.8 1856.0 572.0T1812.7 559.4T1770.5 543.4T1726.1 528.1T1682.9 515.4T1639.7 503.7T1595.8 490.6T1553.4 475.7T1509.5 461.1T1465.5 448.0T1423.8 435.1T1379.8 421.7T1335.5 408.5T1294.0 394.5T1250.4 379.4T1206.0 366.0T1164.1 354.7T1121.0 341.3T1076.9 325.5T1034.4 311.5T991.4 299.5T947.9 286.3T905.0 272.0T861.7 258.4T818.6 244.9T775.7 230.9L754.1 223.9M1923.5 593.4L1901.2 587.8Q1878.8 582.3 1855.4 576.9T1812.2 564.2T1770.3 548.6T1725.7 533.0T1682.4 520.0T1639.6 508.7T1595.6 495.7T1552.9 480.0T1509.3 465.3T1465.5 452.8T1423.6 439.9T1379.7 425.9T1335.5 412.7T1294.0 398.9T1250.4 383.6T1206.0 370.2T1164.2 358.9T1121.1 345.3T1076.9 329.4T1034.6 315.4T991.6 303.4T947.9 290.1T905.1 275.8T861.9 262.0T818.7 248.4T775.8 234.5L754.2 227.6M1923.2 599.7L1900.8 593.7Q1878.3 587.7 1854.8 581.8T1811.7 569.0T1770.2 553.9T1725.2 538.0T1681.9 524.6T1639.5 513.9T1595.5 500.8T1552.5 484.4T1509.3 469.6T1465.5 457.7T1423.4 444.6T1379.6 430.3T1335.6 417.0T1294.0 403.2T1250.4 387.9T1206.1 374.6T1164.4 363.1T1121.2 349.3T1076.9 333.3T1034.7 319.4T991.8 307.3T947.9 294.0T905.2 279.6T862.1 265.6T818.8 251.9T775.8 238.2L754.3 231.4M1922.9 606.1L1900.3 599.6Q1877.8 593.1 1854.3 586.8T1811.4 573.9T1770.1 559.3T1724.8 542.9T1681.4 529.4T1639.6 519.1T1595.3 505.9T1552.2 488.8T1509.3 474.1T1465.6 462.6T1423.2 449.4T1379.6 434.8T1335.8 421.4T1294.0 407.5T1250.4 392.3T1206.2 379.0T1164.5 367.4T1121.3 353.3T1077.0 337.4T1034.9 323.5T992.0 311.2T948.0 298.0T905.3 283.5T862.3 269.3T818.8 255.5T775.9 241.9L754.4 235.2M1922.4 612.6L1899.8 605.5Q1877.3 598.5 1853.8 591.8T1811.2 578.9T1769.9 564.6T1724.4 548.0T1681.2 534.4T1639.7 524.3T1595.2 510.9T1551.9 493.4T1509.5 478.8T1465.7 467.5T1423.0 454.2T1379.7 439.4T1336.0 425.7T1294.1 411.8T1250.5 396.8T1206.4 383.6T1164.7 371.6T1121.4 357.3T1077.1 341.6T1035.1 327.6T992.1 315.2T948.0 301.9T905.5 287.5T862.5 273.0T818.9 259.1T776.0 245.7L754.6 239.1M1921.8 619.0L1899.3 611.4Q1876.8 603.9 1853.5 596.9T1811.0 584.0T1769.8 569.8T1724.1 553.1T1681.1 539.6T1639.8 529.6T1595.1 515.8T1551.7 498.1T1509.7 483.7T1465.9 472.4T1422.9 459.1T1380.0 444.1T1336.3 430.1T1294.1 416.0T1250.6 401.4T1206.7 388.3T1164.9 375.7T1121.6 361.4T1077.3 345.9T1035.4 331.8T992.3 319.1T948.1 306.0T905.6 291.6T862.7 276.7T818.9 262.7T776.0 249.6L754.8 243.1M1921.1 625.2L1898.8 617.3Q1876.5 609.4 1853.4 602.3T1811.0 589.2T1769.6 575.0T1724.0 558.4T1681.1 545.1T1640.0 534.7T1595.1 520.6T1551.7 503.1T1510.1 488.6T1466.1 477.2T1422.9 464.0T1380.3 449.1T1336.7 434.6T1294.2 420.3T1250.8 406.2T1207.0 393.0T1165.1 379.9T1121.7 365.4T1077.5 350.3T1035.6 336.1T992.5 323.1T948.2 310.1T905.8 295.7T862.9 280.4T818.9 266.5T776.1 253.5L754.9 247.1M1920.4 631.1L1898.4 623.1Q1876.4 615.2 1853.5 607.9T1811.1 594.4T1769.5 580.0T1724.0 563.9T1681.3 550.8T1640.3 539.8T1595.1 525.4T1551.8 508.2T1510.5 493.7T1466.3 481.9T1422.9 469.0T1380.7 454.1T1337.0 439.0T1294.2 424.6T1251.1 411.1T1207.4 397.8T1165.3 384.1T1121.8 369.6T1077.7 354.8T1035.8 340.4T992.6 327.2T948.2 314.3T906.0 299.8T863.0 284.2T818.9 270.3T776.1 257.5L755.1 251.1M1919.7 636.8L1898.2 629.0Q1876.6 621.2 1853.9 613.8T1811.3 599.6T1769.5 584.9T1724.2 569.6T1681.7 556.7T1640.5 544.8T1595.3 530.2T1552.1 513.5T1511.0 498.9T1466.5 486.7T1423.0 474.0T1381.1 459.2T1337.4 443.4T1294.3 429.0T1251.4 416.1T1207.8 402.7T1165.4 388.3T1122.0 373.8T1078.0 359.3T1036.0 344.7T992.7 331.3T948.3 318.5T906.1 303.9T863.1 288.1T818.9 274.2T776.2 261.6L755.3 255.1M1919.2 642.4L1898.1 635.0Q1877.1 627.7 1854.4 619.9T1811.6 604.8T1769.5 589.9T1724.6 575.6T1682.1 562.7T1640.8 549.8T1595.5 535.0T1552.5 519.0T1511.5 504.1T1466.8 491.5T1423.2 479.2T1381.6 464.3T1337.7 447.9T1294.4 433.5T1251.7 421.2T1208.1 407.6T1165.5 392.6T1122.2 378.2T1078.2 363.9T1036.1 349.1T992.8 335.6T948.4 322.8T906.3 308.0T863.2 292.0T818.9 278.2T776.3 265.6L755.4 259.2M1918.8 647.9L1898.3 641.1Q1877.8 634.4 1855.2 626.2T1811.8 609.9T1769.6 594.9T1725.2 581.8T1682.6 568.7T1641.0 554.7T1595.9 540.0T1553.0 524.6T1511.9 509.4T1467.0 496.4T1423.5 484.4T1382.1 469.5T1338.0 452.4T1294.4 438.2T1252.1 426.3T1208.5 412.4T1165.5 396.9T1122.3 382.6T1078.5 368.5T1036.2 353.6T992.8 339.9T948.5 327.1T906.4 312.2T863.2 296.1T818.9 282.3T776.3 269.7L755.5 263.2M1918.6 653.6L1898.7 647.4Q1878.8 641.2 1856.0 632.5T1812.1 615.0T1769.8 600.1T1725.9 588.1T1683.1 574.7T1641.2 559.6T1596.3 545.1T1553.5 530.2T1512.3 514.7T1467.2 501.5T1423.8 489.7T1382.6 474.6T1338.2 457.1T1294.5 443.0T1252.5 431.5T1208.7 417.3T1165.4 401.4T1122.5 387.1T1078.7 373.1T1036.2 358.1T992.8 344.4T948.6 331.4T906.4 316.3T863.2 300.2T818.8 286.4T776.3 273.8L755.6 267.2M1918.7 659.6L1899.3 653.8Q1879.8 648.0 1856.9 638.7T1812.4 620.2T1770.1 605.5T1726.8 594.4T1683.6 580.7T1641.4 564.7T1596.8 550.3T1554.0 535.9T1512.5 520.1T1467.4 506.7T1424.1 495.1T1383.0 479.6T1338.3 461.9T1294.5 448.0T1252.8 436.6T1208.9 422.2T1165.4 406.0T1122.6 391.6T1078.9 377.7T1036.1 362.8T992.8 348.9T948.7 335.8T906.4 320.5T863.1 304.5T818.8 290.7T776.3 277.9L755.6 271.2M1919.0 665.8L1900.0 660.2Q1880.9 654.6 1857.7 644.7T1812.6 625.5T1770.4 611.3T1727.6 600.8T1683.9 586.6T1641.5 569.9T1597.4 555.6T1554.4 541.4T1512.7 525.7T1467.7 512.2T1424.4 500.3T1383.2 484.6T1338.4 466.9T1294.6 453.2T1253.1 441.7T1209.0 427.1T1165.2 410.8T1122.7 396.2T1079.0 382.3T1035.9 367.5T992.7 353.6T948.8 340.1T906.3 324.7T863.0 308.8T818.7 295.0T776.3 282.0L755.6 275.2M1919.6 672.3L1900.7 666.6Q1881.9 660.9 1858.4 650.6T1812.8 631.2T1770.9 617.3T1728.4 607.0T1684.1 592.5T1641.6 575.5T1597.9 561.0T1554.8 546.9T1512.7 531.4T1467.9 517.9T1424.7 505.5T1383.3 489.6T1338.4 472.1T1294.6 458.5T1253.2 446.8T1208.9 432.1T1165.0 415.7T1122.8 400.9T1079.1 386.9T1035.7 372.4T992.6 358.4T948.8 344.4T906.2 329.0T862.8 313.4T818.7 299.4T776.2 286.1L755.5 279.3M1920.2 678.9L1901.4 672.7Q1882.7 666.6 1858.9 656.3T1812.9 637.2T1771.3 623.6T1729.0 613.1T1684.2 598.4T1641.6 581.3T1598.5 566.5T1554.9 552.3T1512.5 537.3T1468.1 523.8T1424.9 510.6T1383.3 494.5T1338.3 477.6T1294.6 463.9T1253.3 451.7T1208.8 437.1T1164.8 420.8T1122.8 405.6T1079.0 391.5T1035.4 377.5T992.5 363.3T948.8 348.7T905.9 333.3T862.6 318.0T818.6 303.9T776.1 290.3L755.4 283.4M1920.8 685.4L1901.9 678.6Q1883.0 671.9 1859.1 662.0T1813.0 643.6T1771.6 630.0T1729.5 618.9T1684.0 604.4T1641.6 587.4T1598.9 571.9T1554.9 557.7T1512.2 543.5T1468.2 529.7T1424.9 515.6T1383.0 499.5T1338.1 483.2T1294.6 469.4T1253.2 456.7T1208.6 442.2T1164.5 425.9T1122.8 410.3T1078.9 396.2T1035.0 382.6T992.4 368.2T948.8 353.0T905.7 337.6T862.4 322.7T818.5 308.4T776.0 294.5L755.2 287.6M1921.4 691.7L1902.2 684.3Q1883.0 676.9 1859.1 667.7T1813.0 650.4T1771.9 636.5T1729.6 624.7T1683.7 610.5T1641.5 593.6T1599.2 577.3T1554.6 563.1T1511.8 549.9T1468.3 535.8T1424.9 520.5T1382.6 504.7T1337.9 489.1T1294.5 474.9T1253.0 461.7T1208.2 447.5T1164.3 431.2T1122.7 415.0T1078.7 401.0T1034.7 387.9T992.3 373.1T948.7 357.3T905.3 342.1T862.2 327.5T818.5 312.9T775.8 298.7L754.9 291.8M1921.6 697.8L1902.0 689.8Q1882.5 681.8 1858.8 673.6T1813.0 657.5T1771.9 643.0T1729.4 630.5T1683.3 616.8T1641.4 599.9T1599.2 582.7T1554.1 568.8T1511.4 556.4T1468.4 541.8T1424.6 525.5T1382.0 510.0T1337.7 495.1T1294.4 480.4T1252.6 466.7T1207.9 452.8T1164.0 436.5T1122.6 419.8T1078.4 405.9T1034.3 393.2T992.2 378.1T948.6 361.7T905.0 346.7T862.0 332.4T818.4 317.5T775.6 303.1L754.6 296.1M1921.6 703.7L1901.6 695.3Q1881.6 686.9 1858.3 679.7T1813.0 664.7T1771.7 649.6T1729.0 636.3T1682.8 623.2T1641.2 606.2T1599.1 588.2T1553.5 574.6T1510.9 563.0T1468.3 547.8T1424.2 530.5T1381.4 515.4T1337.6 501.1T1294.2 486.0T1252.2 471.9T1207.5 458.2T1163.8 441.8T1122.4 424.7T1078.0 411.0T1033.9 398.6T992.1 383.0T948.4 366.2T904.6 351.4T861.9 337.3T818.4 322.2T775.3 307.5L754.3 300.6M1921.1 709.6L1900.7 701.0Q1880.3 692.5 1857.7 686.1T1812.9 671.9T1771.3 656.2T1728.3 642.5T1682.3 629.7T1640.9 612.4T1598.7 593.9T1552.8 580.7T1510.4 569.6T1468.2 553.7T1423.6 535.7T1380.8 521.0T1337.4 507.2T1293.9 491.7T1251.6 477.3T1207.2 463.6T1163.6 447.1T1122.1 429.8T1077.6 416.3T1033.6 403.9T992.0 388.0T948.2 370.9T904.2 356.2T861.8 342.2T818.3 326.9T775.1 312.1L754.0 305.1M1920.2 715.7L1899.6 707.1Q1879.0 698.5 1857.0 692.6T1812.7 679.0T1770.6 663.0T1727.5 648.9T1681.9 636.0T1640.5 618.5T1598.2 599.9T1552.1 587.1T1510.0 576.1T1468.0 559.5T1423.0 541.3T1380.1 526.8T1337.3 513.1T1293.5 497.5T1251.0 482.8T1206.9 469.0T1163.4 452.3T1121.7 435.1T1077.3 421.7T1033.4 409.2T991.8 392.9T948.0 375.7T903.9 361.1T861.7 347.1T818.3 331.8T774.8 316.7L753.7 309.6M1919.0 722.3L1898.3 713.7Q1877.7 705.1 1856.4 699.3T1812.5 685.8T1769.6 670.0T1726.6 655.7T1681.6 642.1T1640.0 624.5T1597.5 606.4T1551.5 593.8T1509.6 582.3T1467.8 565.4T1422.3 547.1T1379.6 532.6T1337.2 519.0T1293.2 503.5T1250.4 488.6T1206.7 474.3T1163.3 457.5T1121.4 440.6T1077.0 427.3T1033.2 414.4T991.7 398.0T947.7 380.7T903.7 366.0T861.7 352.1T818.2 336.7T774.6 321.5L753.4 314.3M1917.8 729.6L1897.1 720.8Q1876.5 712.1 1856.0 705.9T1812.3 692.5T1768.6 677.4T1725.9 662.7T1681.4 648.0T1639.4 630.6T1596.7 613.3T1551.0 600.5T1509.3 588.3T1467.4 571.4T1421.7 553.3T1379.2 538.4T1337.2 524.8T1292.8 509.7T1249.9 494.5T1206.7 479.5T1163.2 462.8T1121.0 446.4T1076.8 432.9T1033.2 419.6T991.7 403.1T947.6 385.9T903.5 371.0T861.7 357.0T818.2 341.8T774.4 326.4L753.2 318.9M1916.6 737.4L1896.2 728.3Q1875.7 719.2 1855.7 712.4T1812.0 699.2T1767.5 685.2T1725.3 669.8T1681.4 653.7T1638.9 636.7T1596.1 620.6T1550.8 607.3T1509.2 594.1T1467.1 577.6T1421.3 559.7T1379.0 544.2T1337.3 530.7T1292.4 516.1T1249.5 500.5T1206.8 484.6T1163.2 468.2T1120.6 452.4T1076.8 438.6T1033.2 424.7T991.6 408.3T947.4 391.2T903.4 376.1T861.8 361.9T818.2 347.0T774.2 331.3L753.0 323.5M1915.9 745.7L1895.6 735.9Q1875.3 726.2 1855.6 718.9T1811.7 706.0T1766.6 693.2T1725.1 676.9T1681.5 659.3T1638.3 643.1T1595.6 628.2T1550.9 614.0T1509.0 599.9T1466.7 584.0T1421.0 566.2T1379.0 550.1T1337.4 536.6T1292.1 522.7T1249.3 506.6T1207.1 489.8T1163.1 473.8T1120.4 458.7T1076.8 444.3T1033.4 429.8T991.5 413.7T947.4 396.7T903.5 381.1T861.9 367.0T818.2 352.3T774.2 336.4L753.0 328.2M1915.7 753.9L1895.5 743.6Q1875.3 733.3 1855.7 725.6T1811.5 713.2T1766.1 701.3T1725.2 683.8T1681.8 665.0T1637.8 649.9T1595.3 636.0T1551.2 620.7T1509.0 605.8T1466.5 590.5T1421.1 572.9T1379.2 556.0T1337.5 542.7T1292.0 529.5T1249.3 512.6T1207.4 494.9T1163.2 479.5T1120.2 465.1T1077.1 450.0T1033.6 434.9T991.4 419.1T947.4 402.3T903.7 386.2T862.1 372.1T818.3 357.7T774.2 341.4L753.1 332.8M1916.1 761.7L1895.9 751.0Q1875.6 740.4 1855.9 732.6T1811.4 720.8T1765.9 709.2T1725.6 690.6T1682.2 671.0T1637.5 656.9T1595.5 643.6T1551.9 627.5T1509.0 611.9T1466.4 597.1T1421.4 579.4T1379.5 562.1T1337.6 549.1T1292.0 536.2T1249.5 518.6T1207.9 500.2T1163.2 485.5T1120.2 471.5T1077.5 455.8T1033.9 440.1T991.4 424.7T947.6 407.9T904.0 391.4T862.2 377.4T818.4 363.2T774.3 346.5L753.2 337.5M1917.2 768.8L1896.7 758.3Q1876.1 747.8 1856.2 740.3T1811.5 728.7T1766.3 716.8T1726.3 697.3T1682.7 677.6T1637.4 664.1T1595.9 651.1T1552.7 634.4T1509.1 618.4T1466.5 603.6T1422.0 586.0T1379.9 568.5T1337.8 555.7T1292.2 542.8T1249.9 524.5T1208.4 505.8T1163.3 491.6T1120.3 477.9T1078.1 461.6T1034.2 445.6T991.4 430.3T947.9 413.5T904.4 396.8T862.4 382.8T818.5 368.7T774.5 351.6L753.5 342.2M1918.9 775.4L1897.7 765.7Q1876.6 756.0 1856.4 748.8T1811.9 736.8T1767.1 723.8T1727.1 704.2T1683.1 684.8T1637.6 671.4T1596.7 658.3T1553.6 641.5T1509.2 625.1T1466.8 610.0T1422.9 592.5T1380.4 575.3T1338.0 562.5T1292.7 549.2T1250.5 530.5T1208.8 511.8T1163.5 497.9T1120.6 484.2T1078.7 467.5T1034.5 451.2T991.5 436.0T948.3 419.1T904.8 402.3T862.6 388.4T818.7 374.2T774.7 356.7L753.7 347.1M1920.8 781.8L1898.9 773.3Q1876.9 764.9 1856.6 757.8T1812.6 744.7T1768.2 730.3T1727.9 711.3T1683.6 692.5T1638.1 678.6T1597.6 665.4T1554.4 649.0T1509.4 632.1T1467.4 616.2T1423.9 599.0T1380.8 582.6T1338.2 569.4T1293.3 555.3T1251.1 536.5T1209.3 518.1T1163.8 504.2T1121.0 490.4T1079.3 473.6T1034.8 457.1T991.6 441.6T948.8 424.8T905.2 408.1T862.7 394.1T818.9 379.7T775.1 361.8L754.0 352.2M1922.6 788.3L1899.8 781.4Q1877.1 774.5 1856.8 767.2T1813.6 752.5T1769.5 736.7T1728.5 718.9T1684.1 700.6T1638.8 685.6T1598.6 672.5T1555.1 656.9T1509.6 639.2T1468.1 622.2T1425.0 605.8T1381.1 590.3T1338.5 576.3T1294.1 561.3T1251.7 542.8T1209.6 524.8T1164.1 510.5T1121.5 496.5T1079.9 480.0T1035.1 463.1T991.7 447.1T949.4 430.5T905.6 414.1T862.8 399.9T819.2 385.0T775.5 367.1L754.3 357.5M1924.1 795.6L1900.5 790.0Q1876.9 784.4 1856.9 776.7T1814.6 760.0T1770.6 743.3T1728.8 726.7T1684.6 708.8T1639.7 692.7T1599.4 679.8T1555.6 665.0T1509.9 646.3T1468.8 628.1T1425.8 612.9T1381.3 598.3T1338.8 583.1T1294.9 567.1T1252.2 549.4T1209.7 531.7T1164.5 516.8T1122.0 502.7T1080.3 486.5T1035.2 469.2T991.9 452.6T949.9 436.3T905.9 420.4T862.8 405.8T819.5 390.3T775.8 372.5L754.6 363.0M1924.9 803.6L1900.8 798.8Q1876.6 794.0 1857.0 785.7T1815.7 767.6T1771.4 750.3T1728.7 734.7T1685.1 716.9T1640.6 700.0T1599.9 687.3T1555.9 673.0T1510.2 653.2T1469.5 634.3T1426.5 620.3T1381.2 606.4T1339.1 589.9T1295.7 573.0T1252.4 556.2T1209.8 538.8T1164.9 523.0T1122.4 509.0T1080.6 493.3T1035.3 475.3T992.2 458.1T950.4 442.3T906.1 426.9T862.8 411.6T819.8 395.6T776.2 378.0L754.7 368.9M1925.1 812.5L1900.6 807.7Q1876.2 802.9 1857.0 794.3T1816.4 775.5T1771.7 757.8T1728.2 742.6T1685.5 724.9T1641.4 707.8T1599.9 695.2T1555.8 680.8T1510.5 660.1T1470.0 641.0T1426.7 628.0T1381.1 614.3T1339.3 596.6T1296.4 579.2T1252.4 563.1T1209.7 545.9T1165.4 529.4T1122.7 515.4T1080.7 500.1T1035.4 481.5T992.4 463.7T950.8 448.5T906.2 433.6T862.7 417.5T820.1 400.8T776.4 383.7L754.7 374.9M1924.6 821.7L1900.2 816.3Q1875.8 811.0 1856.9 802.6T1816.8 783.9T1771.5 765.8T1727.5 750.1T1685.8 732.9T1641.7 716.2T1599.4 703.2T1555.6 688.1T1510.7 667.1T1470.1 648.3T1426.6 635.8T1380.8 622.1T1339.5 603.4T1296.7 585.7T1252.1 570.1T1209.5 553.0T1165.7 536.0T1122.8 522.1T1080.5 506.9T1035.4 487.7T992.5 469.4T950.9 455.0T906.1 440.3T862.6 423.3T820.4 406.2T776.6 389.5L754.5 381.1M1923.6 830.8L1899.6 824.6Q1875.5 818.5 1856.7 810.7T1816.5 792.9T1770.7 773.9T1726.7 757.3T1685.9 741.2T1641.6 725.4T1598.4 711.2T1555.2 694.9T1510.8 674.4T1469.8 656.2T1426.1 643.6T1380.4 629.5T1339.5 610.5T1296.7 592.6T1251.5 577.1T1209.2 560.0T1166.0 543.0T1122.6 529.0T1080.1 513.6T1035.3 493.8T992.6 475.5T950.9 461.6T905.9 447.0T862.4 429.2T820.6 411.8T776.5 395.5L754.2 387.4M1922.6 839.8L1899.0 832.9Q1875.5 825.9 1856.2 819.0T1815.6 802.2T1769.6 782.1T1725.8 764.4T1685.7 749.9T1641.0 735.0T1597.1 719.0T1554.8 701.5T1510.8 682.2T1469.0 664.7T1425.3 651.2T1380.0 636.7T1339.3 618.1T1296.4 599.7T1250.8 583.8T1208.9 567.1T1166.1 550.4T1122.2 536.0T1079.5 520.0T1035.3 500.1T992.5 482.0T950.6 468.3T905.5 453.6T862.3 435.2T820.6 417.5T776.4 401.6L753.7 393.6M1921.8 848.8L1898.6 841.4Q1875.5 834.0 1855.6 827.7T1814.3 811.3T1768.5 790.1T1725.1 771.9T1685.2 759.1T1639.9 744.7T1595.7 726.4T1554.4 708.1T1510.5 690.5T1467.8 673.5T1424.4 658.7T1379.7 644.0T1338.8 626.0T1295.7 607.0T1250.0 590.4T1208.5 574.4T1166.0 558.3T1121.5 542.9T1078.9 526.2T1035.2 506.7T992.3 488.9T950.1 475.1T905.2 460.0T862.1 441.4T820.5 423.5T776.1 407.6L753.2 399.8M1921.4 858.4L1898.5 850.7Q1875.6 843.0 1854.8 836.7T1812.8 820.0T1767.7 798.2T1724.6 780.1T1684.4 768.5T1638.7 754.0T1594.5 733.8T1554.0 715.1T1509.9 699.1T1466.4 682.3T1423.6 666.1T1379.4 651.4T1338.1 634.1T1294.8 614.4T1249.2 597.0T1208.1 582.0T1165.7 566.4T1120.6 549.8T1078.2 532.3T1035.1 513.5T991.8 496.2T949.4 481.8T904.8 466.4T861.9 447.8T820.3 429.8T775.6 413.7L752.6 405.8M1921.5 868.9L1898.6 860.9Q1875.7 852.8 1853.9 845.6T1811.4 828.1T1767.4 806.8T1724.3 789.4T1683.5 777.9T1637.7 762.7T1593.7 741.4T1553.8 722.7T1509.2 707.8T1465.0 691.0T1423.1 673.7T1379.2 659.1T1337.2 642.3T1293.8 621.7T1248.7 603.8T1207.8 590.0T1165.1 574.7T1119.7 556.6T1077.6 538.4T1035.0 520.7T991.3 503.7T948.7 488.4T904.5 472.8T861.6 454.5T819.9 436.2T775.2 419.7L752.0 411.7M1922.1 880.4L1898.9 871.6Q1875.8 862.8 1853.2 854.1T1810.6 835.7T1767.7 816.0T1724.2 799.4T1682.5 786.9T1637.1 770.9T1593.5 749.6T1553.6 730.9T1508.5 716.3T1464.0 699.5T1422.9 681.9T1379.1 667.1T1336.2 650.1T1293.1 629.0T1248.4 611.1T1207.4 598.2T1164.5 582.8T1118.9 563.3T1077.2 544.7T1034.9 528.1T990.6 511.3T947.9 495.0T904.3 479.2T861.4 461.4T819.4 442.6T774.7 425.6L751.6 417.7M1922.7 892.2L1899.4 882.3Q1876.0 872.5 1852.9 862.3T1810.5 843.4T1768.6 826.1T1724.2 809.9T1681.9 795.4T1637.3 779.0T1593.9 758.6T1553.5 739.6T1508.0 724.3T1463.5 708.2T1423.1 690.8T1379.1 675.1T1335.3 657.6T1292.7 636.6T1248.5 619.0T1207.0 606.5T1163.9 590.7T1118.4 570.1T1077.0 551.5T1034.8 535.8T989.9 518.9T947.4 501.7T904.3 485.9T861.1 468.5T818.8 449.2T774.3 431.7L751.3 423.9M1923.3 903.5L1899.8 892.5Q1876.4 881.6 1853.1 870.4T1811.2 851.8T1769.8 836.7T1724.4 820.3T1681.6 803.6T1638.1 787.3T1594.6 768.1T1553.5 748.3T1507.9 732.2T1463.6 717.2T1423.6 700.3T1379.2 682.9T1334.7 664.6T1292.8 644.7T1249.0 627.7T1206.7 614.6T1163.5 598.2T1118.3 577.2T1077.0 558.7T1034.7 543.4T989.3 526.4T947.0 508.7T904.4 492.8T860.8 475.5T818.2 455.7T774.1 437.9L751.3 430.3M1923.5 913.4L1900.3 902.0Q1877.1 890.6 1854.0 879.2T1812.5 861.1T1771.0 847.2T1724.8 830.4T1681.9 812.1T1639.5 796.0T1595.5 777.7T1553.5 757.0T1508.4 740.2T1464.4 726.7T1424.4 710.0T1379.4 690.5T1334.5 671.6T1293.3 653.3T1249.6 636.8T1206.4 622.5T1163.3 605.6T1118.6 584.8T1077.2 566.2T1034.6 550.9T989.0 534.0T946.9 516.0T904.6 499.8T860.5 482.4T817.8 462.4T774.0 444.5L751.4 437.0M1923.3 922.0L1900.8 911.0Q1878.4 900.0 1855.4 889.0T1813.9 871.1T1772.0 857.2T1725.3 840.3T1682.8 821.3T1641.3 805.0T1596.4 787.0T1553.6 765.8T1509.4 748.9T1465.7 736.5T1425.1 719.5T1379.7 697.9T1334.9 678.9T1294.3 662.6T1250.4 646.1T1206.2 630.1T1163.6 612.9T1119.3 592.9T1077.5 574.0T1034.5 558.2T989.0 541.7T947.2 523.8T905.0 507.0T860.3 489.2T817.5 469.2T774.3 451.5L751.8 444.1M1922.7 930.0L1901.3 920.2Q1879.9 910.4 1857.1 899.8T1814.9 881.4T1772.5 866.7T1726.0 850.3T1684.0 831.5T1642.8 813.9T1597.1 795.6T1553.9 775.0T1510.9 758.6T1467.1 746.2T1425.6 728.4T1380.3 705.5T1335.7 686.8T1295.5 672.1T1251.1 655.4T1206.3 637.6T1164.2 620.5T1120.4 601.4T1077.8 581.9T1034.7 565.4T989.4 549.6T947.7 531.9T905.4 514.0T860.2 495.7T817.5 476.3T774.7 458.9L752.3 451.4M1922.0 938.4L1901.7 929.9Q1881.5 921.5 1858.4 911.1T1815.2 891.6T1772.5 875.9T1726.8 860.9T1685.1 842.2T1643.8 822.6T1597.4 803.9T1554.4 785.1T1512.5 769.0T1468.2 755.4T1425.9 736.7T1381.1 713.6T1336.9 695.5T1296.6 681.6T1251.8 664.4T1206.6 645.4T1165.2 628.3T1121.5 610.0T1078.1 589.8T1035.0 572.7T990.1 557.8T948.3 540.3T905.8 521.0T860.3 502.3T817.8 483.8T775.4 466.7L752.9 458.8M1921.3 948.0L1901.9 940.2Q1882.6 932.3 1859.0 922.1T1814.5 901.9T1772.1 885.8T1727.5 871.9T1685.6 852.8T1643.9 830.9T1597.4 812.5T1554.9 796.1T1513.8 779.9T1468.8 763.9T1425.8 744.8T1382.1 722.8T1338.2 704.7T1297.3 690.6T1252.2 673.3T1207.1 653.7T1166.3 636.5T1122.6 618.3T1078.3 597.8T1035.4 580.6T991.1 566.3T949.0 548.6T906.2 527.9T860.6 509.0T818.3 491.7T776.1 474.7L753.6 466.3M1920.6 958.5L1901.6 950.4Q1882.7 942.3 1858.6 932.4T1813.1 912.8T1771.4 896.6T1728.0 882.7T1685.4 862.8T1643.2 839.5T1597.1 821.8T1555.2 807.6T1514.4 790.5T1468.6 772.0T1425.4 753.2T1383.0 732.7T1339.1 714.2T1297.4 699.2T1252.5 682.3T1207.8 662.8T1167.4 644.7T1123.3 626.3T1078.3 606.1T1036.1 589.0T992.2 574.9T949.5 556.7T906.5 534.9T861.1 516.1T819.0 499.9T776.8 482.7L754.1 473.6M1919.9 969.3L1901.5 960.5Q1883.2 951.7 1859.5 943.4T1815.1 926.2T1776.4 910.1T1735.5 895.5T1691.5 876.8T1651.3 854.0T1610.1 835.9T1568.0 823.3T1527.4 807.6T1484.3 787.7T1443.0 769.3T1403.9 751.9T1359.5 732.7T1317.2 715.5T1278.8 701.0T1235.3 684.1T1192.2 664.8T1152.4 646.4T1110.0 628.3T1068.0 610.0T1026.6 594.6T983.7 580.1T943.2 560.9T901.7 539.5T857.7 522.2T817.3 507.4T776.6 490.4L754.6 481.0M1919.0 979.8L1900.1 970.2Q1881.2 960.5 1858.0 953.7T1814.1 939.0T1775.6 922.4T1734.5 905.0T1689.8 885.8T1650.4 864.6T1609.9 847.0T1566.6 834.0T1526.0 817.8T1484.2 797.0T1442.6 778.4T1402.7 761.9T1358.9 742.8T1317.2 724.4T1278.7 710.2T1234.9 694.3T1191.9 673.8T1152.9 653.8T1110.4 636.6T1067.6 619.8T1026.9 603.8T984.5 587.9T943.4 568.5T901.8 547.4T858.3 530.3T817.9 515.7T777.0 498.3L754.9 488.4M1917.9 990.3L1898.6 980.5Q1879.2 970.8 1856.8 965.2T1813.7 952.2T1774.7 934.2T1733.1 913.9T1688.5 895.2T1649.6 876.3T1609.2 858.6T1564.9 843.9T1524.6 827.7T1484.0 807.3T1441.6 788.1T1401.1 771.3T1358.4 752.6T1316.9 734.1T1277.9 719.9T1234.0 704.2T1191.4 682.5T1153.0 661.5T1110.1 645.5T1067.0 630.1T1027.1 612.9T985.0 595.4T943.1 576.2T901.8 555.9T858.9 538.7T818.2 523.7T777.1 506.2L755.1 496.3M1916.9 1001.9L1897.4 992.5Q1877.9 983.1 1856.7 977.7T1814.2 964.6T1773.8 945.3T1732.0 923.4T1688.0 905.4T1649.1 888.6T1608.3 870.1T1563.4 853.6T1523.7 837.8T1483.7 818.4T1440.1 797.9T1399.4 780.2T1358.0 762.7T1316.2 745.0T1276.4 729.9T1233.1 713.3T1190.9 691.1T1152.5 669.8T1109.3 655.0T1066.1 640.4T1027.1 621.9T985.0 602.7T942.4 584.2T901.6 565.0T859.3 547.2T818.2 531.5T776.9 514.2L755.2 504.6M1916.5 1015.2L1897.2 1006.2Q1878.0 997.2 1857.7 990.4T1815.1 975.7T1773.1 956.2T1731.7 934.1T1688.6 916.4T1648.8 900.4T1607.4 881.5T1562.7 863.7T1523.3 848.5T1483.3 829.7T1438.7 807.6T1398.1 789.0T1357.8 773.4T1315.2 756.7T1274.6 739.8T1232.3 721.7T1190.4 699.9T1151.5 679.3T1108.2 664.9T1065.3 650.4T1026.8 630.6T984.6 610.5T941.4 592.7T901.3 574.3T859.5 555.6T817.7 539.3T776.5 522.6L755.2 513.4M1917.1 1029.7L1898.1 1020.6Q1879.2 1011.4 1859.5 1002.8T1816.2 986.1T1772.9 967.6T1732.5 946.3T1689.9 927.5T1648.7 911.3T1607.1 893.1T1563.1 875.1T1523.5 859.3T1483.0 840.3T1437.8 817.3T1397.6 798.6T1357.9 784.9T1314.2 768.6T1273.1 749.1T1231.9 729.6T1189.9 709.3T1150.1 689.9T1107.2 674.8T1064.7 659.7T1026.2 639.5T983.7 618.9T940.3 601.5T901.0 583.5T859.4 564.2T816.9 547.4T776.0 531.3L755.3 522.5M1918.6 1043.7L1899.8 1034.3Q1880.9 1024.9 1861.1 1014.9T1817.2 996.9T1773.5 979.6T1734.2 958.9T1691.6 938.3T1648.8 922.0T1607.6 905.6T1564.5 887.4T1524.1 869.7T1482.9 850.0T1437.9 827.6T1398.0 809.5T1358.2 796.6T1313.4 780.0T1272.3 758.1T1232.2 737.8T1189.4 719.6T1148.6 701.2T1106.5 684.5T1064.3 668.5T1025.4 648.9T982.6 628.1T939.4 610.3T900.6 592.4T858.9 573.0T815.8 556.0T775.4 540.1L755.5 531.6M1920.8 1056.0L1901.3 1047.0Q1881.9 1038.1 1861.9 1027.7T1817.9 1008.9T1774.6 991.7T1736.1 971.0T1693.0 949.4T1649.1 933.3T1609.0 918.9T1566.5 900.0T1524.7 879.3T1483.2 859.4T1439.1 839.2T1398.9 821.7T1358.6 807.9T1313.3 790.4T1272.4 767.4T1232.9 747.0T1189.1 730.5T1147.6 712.4T1106.5 693.9T1064.3 677.4T1024.3 658.8T981.7 637.7T938.8 618.8T900.1 601.2T858.1 582.5T814.7 565.1T774.9 548.8L755.6 540.2M1922.5 1067.3L1901.9 1059.6Q1881.3 1051.9 1861.4 1041.7T1818.4 1021.8T1775.8 1002.8T1737.2 982.5T1693.7 961.6T1649.7 946.0T1610.6 932.1T1568.4 911.8T1525.0 888.7T1484.0 869.5T1441.1 852.0T1400.1 834.4T1359.0 818.3T1314.0 800.2T1273.4 777.7T1233.9 757.3T1189.0 741.1T1147.2 723.2T1107.2 703.6T1064.4 686.8T1023.4 669.1T981.3 647.5T938.7 627.1T899.6 610.1T857.3 592.6T813.8 574.7T774.5 557.1L755.6 548.1M1923.0 1079.6L1901.1 1073.1Q1879.2 1066.5 1859.9 1056.3T1818.6 1034.4T1776.5 1013.1T1736.9 994.3T1693.7 975.7T1650.3 959.5T1611.9 944.0T1569.4 922.8T1525.2 899.0T1485.2 880.7T1443.1 865.2T1400.9 846.8T1359.6 828.2T1315.5 810.1T1274.8 789.1T1234.8 768.2T1189.4 751.2T1147.8 733.8T1108.5 714.3T1064.8 696.8T1022.9 679.1T981.6 656.9T939.2 635.7T899.1 619.5T856.7 603.3T813.4 584.4T774.3 565.0L755.5 555.5M1922.0 1094.0L1899.2 1087.3Q1876.4 1080.5 1858.1 1069.9T1818.5 1046.3T1776.0 1023.9T1735.3 1007.3T1693.1 991.0T1650.7 972.8T1612.1 954.6T1569.3 933.8T1525.1 911.1T1486.3 893.0T1444.6 877.8T1401.0 858.8T1360.1 838.5T1317.4 820.7T1276.1 801.0T1235.4 779.1T1190.4 760.9T1149.2 744.6T1109.9 726.0T1065.3 707.2T1022.9 688.4T982.6 666.3T939.9 645.2T898.8 629.7T856.6 614.1T813.6 593.8T774.3 572.8L755.3 562.9M1920.3 1109.6L1897.3 1100.9Q1874.3 1092.3 1856.7 1081.7T1818.0 1058.5T1774.5 1036.8T1733.0 1021.5T1692.5 1005.8T1650.4 985.3T1610.8 965.0T1568.2 945.7T1524.9 924.6T1486.6 905.4T1444.8 889.3T1400.4 870.8T1360.6 850.2T1319.1 831.8T1276.7 812.4T1235.6 789.9T1191.7 771.0T1150.7 756.2T1111.0 738.2T1065.9 717.2T1023.6 696.9T984.2 675.9T940.8 655.9T898.6 640.4T857.1 624.4T814.4 602.9T774.3 580.8L755.0 570.7M1899.5 1113.6L1877.3 1103.4Q1855.2 1093.2 1835.5 1082.7T1793.2 1061.2T1750.9 1042.5T1710.9 1026.8T1666.3 1007.3T1623.2 984.7T1584.1 965.2T1541.0 945.8T1498.2 924.3T1456.5 905.7T1413.0 889.1T1373.0 869.0T1331.0 847.8T1285.3 827.9T1244.6 806.1T1203.2 785.9T1159.4 770.9T1117.5 753.6T1073.0 730.3T1030.5 707.9T990.4 688.5T945.2 669.3T901.4 652.1T860.4 634.9T816.9 612.7T774.8 589.8L754.8 579.5M1865.6 1110.0L1847.9 1101.6Q1830.2 1093.2 1808.7 1083.5T1764.1 1063.6T1723.0 1045.6T1684.0 1028.6T1641.5 1007.9T1600.7 986.6T1559.5 968.0T1517.5 948.1T1479.1 927.4T1437.2 911.0T1393.6 894.8T1355.6 873.2T1315.0 850.7T1271.5 831.2T1231.6 812.0T1190.3 794.2T1149.0 778.9T1108.8 759.5T1064.9 734.9T1023.8 713.8T985.0 697.2T940.8 679.4T898.3 660.8T858.8 642.6T816.2 621.3T774.4 599.3L754.7 589.0M1838.5 1111.3L1818.1 1102.8Q1797.8 1094.3 1775.0 1083.4T1733.4 1062.9T1693.8 1045.8T1649.1 1027.2T1606.8 1004.4T1568.1 983.1T1525.2 964.3T1483.1 944.8T1442.2 927.1T1399.8 910.5T1360.5 888.6T1318.9 863.9T1274.6 844.5T1235.7 827.9T1195.4 809.6T1151.6 791.3T1110.9 771.2T1069.0 747.2T1027.4 725.8T987.4 709.9T942.9 692.2T900.5 671.5T861.3 652.0T817.8 631.8T774.7 609.9L754.9 599.1M1812.5 1112.3L1789.7 1102.9Q1767.0 1093.5 1744.5 1083.0T1702.3 1064.1T1659.9 1046.0T1617.2 1022.9T1576.8 998.9T1532.3 980.6T1488.8 963.8T1449.9 944.6T1406.9 925.3T1364.0 903.4T1322.8 878.8T1279.7 859.1T1240.0 843.9T1198.7 825.1T1153.7 803.5T1113.5 782.9T1073.1 760.7T1029.8 739.2T988.5 722.3T945.1 704.4T902.9 682.6T863.2 662.2T818.8 642.8T775.1 620.8L755.4 609.1M1779.7 1114.8L1757.4 1105.5Q1735.0 1096.1 1717.2 1085.6T1678.0 1065.5T1633.3 1044.5T1591.9 1021.1T1553.2 1001.6T1510.3 987.1T1468.8 969.5T1428.2 947.5T1386.2 926.3T1347.2 905.2T1305.7 884.0T1262.4 867.0T1224.7 851.4T1184.7 830.5T1141.1 808.0T1102.1 788.6T1062.3 768.6T1020.8 747.8T981.2 730.4T939.1 712.8T898.4 691.6T860.1 671.3T816.8 652.5T774.8 630.9L756.0 619.3M1748.7 1118.8L1727.8 1106.5Q1706.8 1094.2 1686.9 1082.5T1644.4 1061.0T1602.8 1040.6T1563.1 1020.9T1518.5 1004.8T1476.0 987.1T1437.4 963.5T1394.2 940.6T1351.5 921.6T1310.9 901.8T1268.6 882.4T1228.8 865.2T1187.5 845.0T1143.4 821.9T1104.8 802.0T1065.2 782.8T1021.5 761.2T981.4 741.9T940.9 725.0T899.5 704.7T859.9 682.7T816.9 662.6T775.1 641.4L756.3 629.9M1714.9 1114.7L1697.2 1101.4Q1679.5 1088.0 1657.2 1078.8T1612.6 1061.0T1570.9 1041.9T1529.1 1022.2T1486.4 1003.5T1446.1 981.1T1401.7 957.4T1358.0 938.2T1319.0 919.5T1275.9 898.2T1232.5 879.0T1191.4 860.3T1148.4 837.6T1108.2 815.6T1067.3 796.1T1022.4 774.9T982.5 754.7T942.9 738.0T899.8 718.1T859.0 694.0T817.0 672.3T775.2 652.2L755.9 641.7M1687.3 1110.0L1666.9 1099.7Q1646.5 1089.3 1624.7 1081.9T1585.4 1064.9T1547.2 1044.1T1503.4 1023.8T1462.7 1004.9T1424.9 983.1T1382.1 961.1T1340.4 942.9T1300.8 924.1T1258.9 903.4T1219.0 885.2T1177.9 866.7T1134.9 843.5T1096.8 821.1T1057.0 802.7T1013.1 783.7T974.5 764.8T935.9 747.7T893.7 727.1T854.2 702.2T814.3 680.9T773.9 663.5L754.7 654.9M1656.6 1110.0L1634.8 1100.9Q1613.0 1091.7 1592.4 1083.3T1552.7 1063.7T1511.7 1042.1T1471.0 1022.7T1432.3 1002.1T1388.8 978.4T1346.9 958.1T1309.0 940.9T1266.2 921.3T1223.4 901.1T1183.6 881.6T1141.5 858.3T1100.8 834.4T1059.8 816.4T1016.0 799.7T977.1 779.8T937.8 759.8T893.7 738.3T853.8 713.6T814.9 692.3T773.3 676.2L752.7 668.7M1620.3 1109.7L1598.5 1101.8Q1576.7 1093.9 1559.6 1084.5T1520.8 1063.1T1477.4 1040.6T1436.8 1019.5T1396.4 996.5T1354.7 974.9T1315.4 958.6T1272.1 940.4T1229.0 917.6T1190.7 895.3T1148.1 872.8T1104.5 849.8T1063.8 831.6T1021.2 815.8T980.5 794.7T939.6 771.2T894.8 749.2T854.8 726.4T815.8 705.5T772.4 689.1L750.5 681.6M1587.0 1113.7L1567.6 1105.5Q1548.2 1097.3 1527.0 1084.8T1483.3 1059.1T1443.1 1036.1T1404.5 1015.6T1360.7 994.9T1319.1 977.0T1278.5 958.7T1236.2 934.1T1196.5 909.0T1153.2 888.1T1108.8 867.5T1069.5 848.1T1027.2 830.7T983.5 808.8T941.9 783.1T897.9 761.1T857.0 740.8T816.9 719.7T771.9 701.3L748.9 693.0M1553.4 1116.4L1536.1 1105.5Q1518.8 1094.5 1497.3 1081.0T1455.3 1056.9T1416.3 1038.8T1376.4 1021.6T1336.5 1001.6T1298.8 982.0T1256.9 960.7T1216.3 935.6T1179.9 913.5T1138.4 896.3T1096.2 877.3T1058.2 857.0T1017.4 837.8T976.2 815.7T936.1 791.3T893.7 771.2T854.3 753.0T815.1 732.2T771.1 712.3L748.7 703.4M1527.4 1112.6L1505.3 1101.0Q1483.2 1089.4 1461.3 1078.1T1422.3 1058.9T1383.9 1042.3T1340.9 1021.1T1301.0 997.9T1261.7 976.6T1221.0 953.9T1182.6 931.3T1141.0 913.3T1099.2 894.6T1062.3 872.1T1021.1 851.0T978.0 830.3T938.9 806.7T897.8 785.1T856.5 766.7T816.1 745.7T772.5 724.1L750.1 714.3M1495.1 1113.0L1472.8 1101.6Q1450.4 1090.2 1431.1 1079.9T1390.6 1061.0T1346.6 1040.4T1306.4 1016.0T1268.2 993.9T1224.9 973.3T1183.9 950.3T1144.5 929.4T1103.3 910.8T1064.6 888.6T1023.0 866.0T979.8 845.6T941.9 822.6T901.2 799.0T857.8 779.5T817.3 759.6T774.9 737.6L752.5 726.7M1461.3 1113.9L1439.5 1101.7Q1417.7 1089.5 1398.9 1079.8T1357.3 1060.3T1314.6 1037.3T1273.7 1013.0T1229.5 991.7T1188.0 969.1T1149.7 946.2T1106.8 927.3T1065.1 906.9T1024.6 882.9T982.6 860.5T944.0 837.7T902.6 813.2T858.2 793.0T818.5 774.7T777.3 752.5L754.7 740.3M1429.3 1113.6L1411.7 1102.7Q1394.0 1091.9 1372.2 1083.0T1328.5 1063.0T1289.7 1038.4T1251.6 1014.6T1208.5 994.9T1168.5 974.3T1130.1 953.9T1089.5 936.1T1050.9 915.1T1010.9 889.8T970.4 867.0T934.3 846.2T894.6 824.4T852.5 805.8T815.8 788.7T777.2 766.5L755.5 753.5M1398.2 1115.4L1379.1 1103.9Q1360.0 1092.5 1338.3 1081.7T1298.0 1057.7T1258.3 1032.7T1214.7 1013.2T1174.5 995.5T1136.6 974.4T1093.4 953.3T1052.3 931.3T1013.8 905.2T973.0 881.1T934.1 862.2T894.0 842.6T852.4 822.2T815.8 803.0T776.8 779.7L754.6 766.0M1370.0 1110.9L1347.4 1099.6Q1324.7 1088.2 1303.8 1077.4T1264.4 1054.7T1223.9 1034.2T1182.3 1016.7T1142.2 994.9T1098.4 969.6T1056.9 946.2T1018.9 922.1T976.0 898.4T934.0 879.8T894.7 861.2T853.6 838.2T815.0 815.6T775.0 792.1L752.8 779.2M1331.7 1108.0L1310.6 1099.0Q1289.4 1090.0 1272.0 1079.2T1232.2 1056.9T1187.9 1036.0T1147.3 1013.8T1106.3 987.1T1064.0 962.6T1023.7 941.2T979.5 918.4T936.4 897.5T897.8 877.9T855.6 853.5T813.8 828.2T773.2 805.6L751.8 794.3M1296.7 1111.9L1278.1 1103.1Q1259.5 1094.3 1241.2 1082.4T1202.4 1059.3T1164.3 1038.3T1126.8 1016.3T1085.5 991.6T1046.8 970.2T1010.3 950.9T968.0 928.9T927.3 907.5T890.8 887.9T850.1 864.8T809.6 840.6T771.8 819.8L752.5 810.3M1262.0 1114.2L1245.5 1103.8Q1229.0 1093.4 1207.4 1080.8T1166.0 1057.9T1128.6 1036.7T1090.5 1012.6T1050.9 988.5T1012.8 968.4T971.5 947.3T931.4 924.4T894.6 904.1T852.4 882.4T810.4 857.2T773.3 834.6L754.9 824.7M1232.5 1117.7L1211.1 1105.2Q1189.6 1092.7 1169.1 1079.6T1132.2 1055.9T1094.5 1032.5T1052.3 1007.4T1013.9 986.2T975.7 967.1T935.2 944.4T896.6 921.7T854.7 899.5T813.1 873.5T775.8 848.5L757.4 837.6M1199.7 1116.3L1177.5 1101.3Q1155.3 1086.4 1136.4 1074.4T1096.8 1052.0T1054.5 1029.5T1016.3 1007.5T978.9 988.2T936.5 965.4T896.7 938.8T857.3 914.4T816.1 889.2T777.4 863.8L758.5 852.2M1162.7 1110.2L1141.9 1096.9Q1121.1 1083.6 1102.4 1074.4T1061.3 1054.5T1019.8 1031.2T980.0 1008.0T936.9 984.0T897.3 955.5T859.6 929.4T817.5 906.6T776.8 882.8L757.9 870.7M1131.4 1111.1L1114.1 1100.7Q1096.8 1090.2 1075.6 1081.5T1034.2 1060.9T998.2 1036.1T961.8 1012.7T920.6 990.0T884.2 964.8T849.7 942.2T810.4 923.4T773.2 902.4L756.4 890.7M1099.6 1111.7L1081.0 1101.6Q1062.4 1091.6 1041.5 1081.0T1002.4 1056.8T964.0 1031.5T923.0 1009.5T885.7 986.5T849.8 962.5T808.7 942.2T771.1 921.3L755.0 909.4M1070.4 1113.0L1048.0 1103.0Q1025.6 1093.1 1006.0 1080.4T968.5 1053.8T929.1 1029.4T888.6 1007.0T850.1 982.3T809.1 959.5T770.8 938.9L754.0 928.2M1030.5 1114.2L1010.9 1102.3Q991.4 1090.4 974.3 1075.7T934.9 1048.6T891.5 1026.2T852.6 1003.6T812.9 979.7T772.0 958.4L752.8 948.4M995.1 1110.4L976.8 1097.9Q958.5 1085.3 937.6 1071.9T895.6 1048.8T857.2 1028.0T817.5 1003.2T773.5 978.1L751.8 966.6M960.2 1113.5L941.7 1100.4Q923.3 1087.3 901.0 1074.8T860.1 1051.3T819.3 1025.0T774.7 995.5L752.1 981.2M928.6 1116.3L904.6 1100.9Q880.7 1085.4 860.2 1072.6T819.5 1045.2T776.3 1014.5L753.3 998.3M891.3 1115.3L873.0 1102.6Q854.8 1089.8 838.7 1079.5T805.8 1058.1T771.1 1033.9L753.2 1020.7M853.7 1113.8L837.1 1101.3Q820.4 1088.8 805.2 1078.4T770.4 1055.6L750.9 1043.2M822.5 1107.6L790.9 1086.2L749.9 1066.0M790.6 1109.7L753.6 1092.0" fill="none" stroke="url(#gln)" stroke-width="0.95" stroke-opacity="1" />
<rect x="762" y="77" width="1151" height="450" fill="url(#gfar)"/>
<g filter="url(#b12)" opacity="0.45"><polygon points="942.0,1073.4 1390.6,928.2 1077.2,433.2 792.2,472.5" fill="#34351c" />
</g>
<g filter="url(#b4)"><polygon points="963.5,1028.5 1349.7,907.9 1067.2,445.0 813.9,480.8" fill="url(#gband)" />
</g>
<g filter="url(#b12)" opacity="0.5"><polygon points="848.5,352.9 1552.2,278.7 1399.1,181.0 799.0,220.6" fill="#1c1d0e" />
</g>
<g filter="url(#b4)"><polygon points="869.5,338.1 1519.9,271.9 1391.6,188.1 823.5,226.9" fill="#0e0e07" />
</g>
<g filter="url(#b7)"><ellipse cx="1386" cy="512" rx="72" ry="30" fill="#0a0a05" />
<ellipse cx="1622" cy="549" rx="22" ry="13" fill="#0a0a05" />
<ellipse cx="1822" cy="714" rx="30" ry="16" fill="#0a0a05" />
<ellipse cx="800" cy="95" rx="30" ry="22" fill="#000" />
<ellipse cx="838" cy="178" rx="30" ry="16" fill="#000" />
<ellipse cx="930" cy="104" rx="34" ry="10" fill="#000" />
<ellipse cx="1100" cy="108" rx="50" ry="8" fill="#1c1d0e" />
<ellipse cx="1345" cy="90" rx="22" ry="12" fill="#2a2b16" />
</g>
<g filter="url(#b4)" opacity="0.55"><polygon points="1497.0,177.0 1913.0,407.0 1913.0,428.0 1497.0,196.0" fill="#4a4b28" />
</g>
<g filter="url(#b2)"><polygon points="1478.0,255.0 1522.0,280.0 1500.0,284.0 1470.0,272.0" fill="#060603" />
</g>
<g filter="url(#b12)" opacity="0.4"><ellipse cx="1386" cy="512" rx="105" ry="50" fill="#1c1d0e" />
</g>
<g filter="url(#b12)" opacity="0.22"><polygon points="1497.0,190.0 1913.0,420.0 1913.0,520.0 1640.0,470.0 1500.0,300.0" fill="#1c1d0e" />
</g>
<polygon points="1369.0,77.0 1913.0,77.0 1913.0,407.0 1497.0,177.0 1369.0,104.6" fill="#4f7a34" />
<clipPath id="cw"><polygon points="1369.0,77.0 1913.0,77.0 1913.0,407.0 1497.0,177.0 1369.0,104.6"/></clipPath>
<path d="M1304.3 68.1L1313.7 -152.2M1308.6 70.5L1318.5 -151.0M1313.0 72.9L1323.3 -149.8M1317.4 75.4L1328.2 -148.5M1321.9 77.9L1333.2 -147.3M1326.4 80.4L1338.2 -146.0M1331.0 83.0L1343.3 -144.7M1335.6 85.6L1348.5 -143.4M1340.3 88.2L1353.7 -142.1M1345.1 90.8L1359.0 -140.7M1349.9 93.5L1364.4 -139.4M1354.8 96.2L1369.9 -138.0M1359.7 99.0L1375.4 -136.6M1364.7 101.8L1381.0 -135.2M1369.8 104.6L1386.7 -133.7M1374.9 107.5L1392.4 -132.3M1380.1 110.4L1398.3 -130.8M1385.4 113.3L1404.2 -129.3M1390.7 116.3L1410.2 -127.8M1396.1 119.3L1416.3 -126.2M1401.6 122.3L1422.5 -124.7M1407.1 125.4L1428.8 -123.1M1412.8 128.6L1435.2 -121.5M1418.5 131.8L1441.7 -119.8M1424.3 135.0L1448.3 -118.2M1430.1 138.3L1454.9 -116.5M1436.1 141.6L1461.7 -114.8M1442.1 144.9L1468.6 -113.0M1448.2 148.3L1475.6 -111.2M1454.4 151.8L1482.7 -109.5M1460.7 155.3L1489.9 -107.6M1467.0 158.8L1497.2 -105.8M1473.5 162.4L1504.7 -103.9M1480.1 166.1L1512.2 -102.0M1486.7 169.8L1519.9 -100.0M1493.5 173.6L1527.8 -98.1M1500.3 177.4L1535.7 -96.0M1507.3 181.3L1543.8 -94.0M1514.4 185.2L1552.0 -91.9M1521.5 189.2L1560.4 -89.8M1528.8 193.3L1568.9 -87.7M1536.2 197.4L1577.5 -85.5M1543.7 201.6L1586.3 -83.2M1551.4 205.9L1595.3 -81.0M1559.1 210.2L1604.4 -78.7M1567.0 214.6L1613.7 -76.3M1575.0 219.0L1623.1 -73.9M1583.1 223.6L1632.8 -71.5M1591.4 228.2L1642.6 -69.0M1599.8 232.8L1652.6 -66.5M1608.3 237.6L1662.7 -63.9M1617.0 242.5L1673.1 -61.3M1625.8 247.4L1683.7 -58.6M1634.8 252.4L1694.4 -55.9M1643.9 257.5L1705.4 -53.1M1653.2 262.7L1716.6 -50.3M1662.7 267.9L1728.1 -47.4M1672.3 273.3L1739.7 -44.4M1682.1 278.8L1751.6 -41.4M1692.1 284.3L1763.8 -38.4M1702.2 290.0L1776.1 -35.2M1712.6 295.7L1788.8 -32.0M1723.1 301.6L1801.7 -28.8M1733.8 307.6L1814.9 -25.4M1744.8 313.7L1828.4 -22.0M1755.9 319.9L1842.2 -18.5M1767.2 326.2L1856.3 -15.0M1778.8 332.7L1870.7 -11.3M1790.6 339.2L1885.4 -7.6M1802.6 346.0L1900.5 -3.8M1814.9 352.8L1915.9 0.1M1827.4 359.8L1931.7 4.1M1840.2 366.9L1947.8 8.2M1853.2 374.2L1964.4 12.4M1866.5 381.6L1981.3 16.7M1880.1 389.2L1998.7 21.1M1894.0 396.9L2016.5 25.6M1908.2 404.8L2034.8 30.2M1922.6 412.9L2053.5 34.9M1937.4 421.1L2072.7 39.8M1952.5 429.5L2092.4 44.8M1968.0 438.2L2112.6 49.9M1983.8 447.0L2133.4 55.1M1300.2 60.7L2003.3 447.7M1300.4 55.6L2006.5 439.3M1300.6 50.5L2009.8 430.8M1300.8 45.4L2013.2 422.3M1301.0 40.3L2016.5 413.7M1301.3 35.2L2019.9 405.1M1301.5 30.0L2023.4 396.3M1301.7 24.8L2026.8 387.5M1301.9 19.6L2030.3 378.6M1302.1 14.4L2033.8 369.7M1302.3 9.1L2037.3 360.6M1302.5 3.9L2040.9 351.5M1302.8 -1.4L2044.5 342.3M1303.0 -6.7L2048.1 333.1M1303.2 -12.1L2051.8 323.7M1303.4 -17.4L2055.5 314.3M1303.6 -22.8L2059.2 304.8M1303.9 -28.2L2063.0 295.2M1304.1 -33.7L2066.7 285.5M1304.3 -39.1L2070.6 275.7M1304.5 -44.6L2074.4 265.9M1304.8 -50.1L2078.3 255.9M1305.0 -55.6L2082.2 245.9M1305.2 -61.2L2086.2 235.8M1305.4 -66.8L2090.2 225.6M1305.7 -72.4L2094.2 215.3M1305.9 -78.0L2098.3 204.9M1306.1 -83.6L2102.4 194.4M1306.4 -89.3L2106.5 183.8M1306.6 -95.0L2110.7 173.1M1306.8 -100.7L2114.9 162.3M1307.1 -106.5L2119.2 151.4M1307.3 -112.2L2123.5 140.4M1307.5 -118.0L2127.8 129.3M1307.8 -123.9L2132.2 118.1M1308.0 -129.7L2136.7 106.8M1308.3 -135.6L2141.1 95.4M1308.5 -141.5L2145.6 83.9M1308.8 -147.4L2150.2 72.3M1308.8 -147.4L1313.7 -152.2M1308.5 -141.5L1318.5 -151.0M1308.3 -135.6L1323.3 -149.8M1308.0 -129.7L1328.2 -148.5M1307.8 -123.9L1333.2 -147.3M1307.5 -118.0L1338.2 -146.0M1307.3 -112.2L1343.3 -144.7M1307.1 -106.5L1348.5 -143.4M1306.8 -100.7L1353.7 -142.1M1306.6 -95.0L1359.0 -140.7M1306.4 -89.3L1364.4 -139.4M1306.1 -83.6L1369.9 -138.0M1305.9 -78.0L1375.4 -136.6M1305.7 -72.4L1381.0 -135.2M1305.4 -66.8L1386.7 -133.7M1305.2 -61.2L1392.4 -132.3M1305.0 -55.6L1398.3 -130.8M1304.8 -50.1L1404.2 -129.3M1304.5 -44.6L1410.2 -127.8M1304.3 -39.1L1416.3 -126.2M1304.1 -33.7L1422.5 -124.7M1303.9 -28.2L1428.8 -123.1M1303.6 -22.8L1435.2 -121.5M1303.4 -17.4L1441.7 -119.8M1303.2 -12.1L1448.3 -118.2M1303.0 -6.7L1454.9 -116.5M1302.8 -1.4L1461.7 -114.8M1302.5 3.9L1468.6 -113.0M1302.3 9.1L1475.6 -111.2M1302.1 14.4L1482.7 -109.5M1301.9 19.6L1489.9 -107.6M1301.7 24.8L1497.2 -105.8M1301.5 30.0L1504.7 -103.9M1301.3 35.2L1512.2 -102.0M1301.0 40.3L1519.9 -100.0M1300.8 45.4L1527.8 -98.1M1300.6 50.5L1535.7 -96.0M1300.4 55.6L1543.8 -94.0M1300.2 60.7L1552.0 -91.9M1300.0 65.7L1560.4 -89.8M1304.3 68.1L1568.9 -87.7M1308.6 70.5L1577.5 -85.5M1313.0 72.9L1586.3 -83.2M1317.4 75.4L1595.3 -81.0M1321.9 77.9L1604.4 -78.7M1326.4 80.4L1613.7 -76.3M1331.0 83.0L1623.1 -73.9M1335.6 85.6L1632.8 -71.5M1340.3 88.2L1642.6 -69.0M1345.1 90.8L1652.6 -66.5M1349.9 93.5L1662.7 -63.9M1354.8 96.2L1673.1 -61.3M1359.7 99.0L1683.7 -58.6M1364.7 101.8L1694.4 -55.9M1369.8 104.6L1705.4 -53.1M1374.9 107.5L1716.6 -50.3M1380.1 110.4L1728.1 -47.4M1385.4 113.3L1739.7 -44.4M1390.7 116.3L1751.6 -41.4M1396.1 119.3L1763.8 -38.4M1401.6 122.3L1776.1 -35.2M1407.1 125.4L1788.8 -32.0M1412.8 128.6L1801.7 -28.8M1418.5 131.8L1814.9 -25.4M1424.3 135.0L1828.4 -22.0M1430.1 138.3L1842.2 -18.5M1436.1 141.6L1856.3 -15.0M1442.1 144.9L1870.7 -11.3M1448.2 148.3L1885.4 -7.6M1454.4 151.8L1900.5 -3.8M1460.7 155.3L1915.9 0.1M1467.0 158.8L1931.7 4.1M1473.5 162.4L1947.8 8.2M1480.1 166.1L1964.4 12.4M1486.7 169.8L1981.3 16.7M1493.5 173.6L1998.7 21.1M1500.3 177.4L2016.5 25.6M1507.3 181.3L2034.8 30.2M1514.4 185.2L2053.5 34.9M1521.5 189.2L2072.7 39.8M1528.8 193.3L2092.4 44.8M1536.2 197.4L2112.6 49.9M1543.7 201.6L2133.4 55.1M1551.4 205.9L2154.8 60.5M1559.1 210.2L2150.2 72.3M1567.0 214.6L2145.6 83.9M1575.0 219.0L2141.1 95.4M1583.1 223.6L2136.7 106.8M1591.4 228.2L2132.2 118.1M1599.8 232.8L2127.8 129.3M1608.3 237.6L2123.5 140.4M1617.0 242.5L2119.2 151.4M1625.8 247.4L2114.9 162.3M1634.8 252.4L2110.7 173.1M1643.9 257.5L2106.5 183.8M1653.2 262.7L2102.4 194.4M1662.7 267.9L2098.3 204.9M1672.3 273.3L2094.2 215.3M1682.1 278.8L2090.2 225.6M1692.1 284.3L2086.2 235.8M1702.2 290.0L2082.2 245.9M1712.6 295.7L2078.3 255.9M1723.1 301.6L2074.4 265.9M1733.8 307.6L2070.6 275.7M1744.8 313.7L2066.7 285.5M1755.9 319.9L2063.0 295.2M1767.2 326.2L2059.2 304.8M1778.8 332.7L2055.5 314.3M1790.6 339.2L2051.8 323.7M1802.6 346.0L2048.1 333.1M1814.9 352.8L2044.5 342.3M1827.4 359.8L2040.9 351.5M1840.2 366.9L2037.3 360.6M1853.2 374.2L2033.8 369.7M1866.5 381.6L2030.3 378.6M1880.1 389.2L2026.8 387.5M1894.0 396.9L2023.4 396.3M1908.2 404.8L2019.9 405.1M1922.6 412.9L2016.5 413.7M1937.4 421.1L2013.2 422.3M1952.5 429.5L2009.8 430.8M1968.0 438.2L2006.5 439.3M1983.8 447.0L2003.3 447.7" fill="none" stroke="#0a1405" stroke-width="0.9" stroke-opacity="0.7" clip-path="url(#cw)"/>
<polygon points="818.0,77.0 895.0,77.0 897.0,182.0 862.0,187.0 834.0,166.0" fill="#4d6c9d" />
<path d="M823.5 77.0L838.5 187.0M829.0 77.0L843.0 187.0M834.5 77.0L847.5 187.0M840.0 77.0L852.0 187.0M845.5 77.0L856.5 187.0M851.0 77.0L861.0 187.0M856.5 77.0L865.5 187.0M862.0 77.0L870.0 187.0M867.5 77.0L874.5 187.0M873.0 77.0L879.0 187.0M878.5 77.0L883.5 187.0M884.0 77.0L888.0 187.0M889.5 77.0L892.5 187.0M819.0 83.6L895.1 83.6M819.9 90.2L895.2 90.2M820.8 96.5L895.4 96.5M821.7 102.7L895.5 102.7M822.6 108.8L895.6 108.8M823.5 114.8L895.7 114.8M824.4 120.7L895.8 120.7M825.2 126.4L895.9 126.4M826.0 132.0L896.0 132.0M826.8 137.5L896.1 137.5M827.6 142.9L896.2 142.9M828.4 148.2L896.3 148.2M829.1 153.4L896.4 153.4M829.8 158.4L896.5 158.4M830.6 163.4L896.6 163.4M831.3 168.3L896.7 168.3M832.0 173.1L896.7 173.1M832.7 177.8L896.8 177.8M833.3 182.5L896.9 182.5M833.3 182.5L838.5 187.0M832.7 177.8L843.0 187.0M832.0 173.1L847.5 187.0M831.3 168.3L852.0 187.0M830.6 163.4L856.5 187.0M829.8 158.4L861.0 187.0M829.1 153.4L865.5 187.0M828.4 148.2L870.0 187.0M827.6 142.9L874.5 187.0M826.8 137.5L879.0 187.0M826.0 132.0L883.5 187.0M825.2 126.4L888.0 187.0M824.4 120.7L892.5 187.0M823.5 114.8L897.0 187.0M822.6 108.8L896.9 182.5M821.7 102.7L896.8 177.8M820.8 96.5L896.7 173.1M819.9 90.2L896.7 168.3M819.0 83.6L896.6 163.4M818.0 77.0L896.5 158.4M823.5 77.0L896.4 153.4M829.0 77.0L896.3 148.2M834.5 77.0L896.2 142.9M840.0 77.0L896.1 137.5M845.5 77.0L896.0 132.0M851.0 77.0L895.9 126.4M856.5 77.0L895.8 120.7M862.0 77.0L895.7 114.8M867.5 77.0L895.6 108.8M873.0 77.0L895.5 102.7M878.5 77.0L895.4 96.5M884.0 77.0L895.2 90.2M889.5 77.0L895.1 83.6" fill="none" stroke="#0a0a14" stroke-width="0.8" stroke-opacity="0.7" />
<polygon points="897.0,77.0 921.0,77.0 921.0,98.0 897.0,98.0" fill="#7394c6" />
<path d="M901.8 77.0L901.8 98.0M906.6 77.0L906.6 98.0M911.4 77.0L911.4 98.0M916.2 77.0L916.2 98.0M897.0 82.3L921.0 82.2M897.0 87.5L921.0 87.5M897.0 92.8L921.0 92.7M897.0 92.8L901.8 98.0M897.0 87.5L906.6 98.0M897.0 82.3L911.4 98.0M897.0 77.0L916.2 98.0M901.8 77.0L921.0 98.0M906.6 77.0L921.0 92.7M911.4 77.0L921.0 87.5M916.2 77.0L921.0 82.2" fill="none" stroke="#0a0a14" stroke-width="0.8" stroke-opacity="0.7" />
<polygon points="1069.0,77.0 1135.0,77.0 1135.0,104.0 1069.0,106.0" fill="#a4bcbc" />
<path d="M1074.9 77.0L1074.9 105.8M1080.7 77.0L1080.7 105.6M1086.4 77.0L1086.4 105.5M1092.1 77.0L1092.1 105.3M1097.7 77.0L1097.7 105.1M1103.2 77.0L1103.2 105.0M1108.6 77.0L1108.6 104.8M1114.0 77.0L1114.0 104.6M1119.4 77.0L1119.4 104.5M1124.6 77.0L1124.6 104.3M1129.8 77.0L1129.8 104.2M1069.0 82.8L1135.0 82.4M1069.0 88.6L1135.0 87.8M1069.0 94.4L1135.0 93.2M1069.0 100.2L1135.0 98.6M1069.0 100.2L1074.9 105.8M1069.0 94.4L1080.7 105.6M1069.0 88.6L1086.4 105.5M1069.0 82.8L1092.1 105.3M1069.0 77.0L1097.7 105.1M1074.9 77.0L1103.2 105.0M1080.7 77.0L1108.6 104.8M1086.4 77.0L1114.0 104.6M1092.1 77.0L1119.4 104.5M1097.7 77.0L1124.6 104.3M1103.2 77.0L1129.8 104.2M1108.6 77.0L1135.0 104.0M1114.0 77.0L1135.0 98.6M1119.4 77.0L1135.0 93.2M1124.6 77.0L1135.0 87.8M1129.8 77.0L1135.0 82.4" fill="none" stroke="#0a0a14" stroke-width="0.8" stroke-opacity="0.6" />
<g filter="url(#b4)"><ellipse cx="1236" cy="88" rx="84" ry="17" fill="#050503" />
</g>
<polygon points="1218.0,77.0 1280.0,77.0 1284.0,96.0 1262.0,103.0 1234.0,100.0" fill="#35552a" />
<path d="M1223.5 77.0L1223.5 103.0M1229.0 77.0L1229.0 103.0M1234.5 77.0L1234.5 103.0M1240.0 77.0L1240.0 103.0M1245.5 77.0L1245.5 103.0M1251.0 77.0L1251.0 103.0M1256.5 77.0L1256.5 103.0M1262.0 77.0L1262.0 103.0M1267.5 77.0L1267.5 103.0M1273.0 77.0L1273.0 103.0M1278.5 77.0L1278.5 103.0M1218.0 81.3L1284.0 81.3M1218.0 85.7L1284.0 85.7M1218.0 90.0L1284.0 90.0M1218.0 94.3L1284.0 94.3M1218.0 98.7L1284.0 98.7M1218.0 98.7L1223.5 103.0M1218.0 94.3L1229.0 103.0M1218.0 90.0L1234.5 103.0M1218.0 85.7L1240.0 103.0M1218.0 81.3L1245.5 103.0M1218.0 77.0L1251.0 103.0M1223.5 77.0L1256.5 103.0M1229.0 77.0L1262.0 103.0M1234.5 77.0L1267.5 103.0M1240.0 77.0L1273.0 103.0M1245.5 77.0L1278.5 103.0M1251.0 77.0L1284.0 103.0M1256.5 77.0L1284.0 98.7M1262.0 77.0L1284.0 94.3M1267.5 77.0L1284.0 90.0M1273.0 77.0L1284.0 85.7M1278.5 77.0L1284.0 81.3" fill="none" stroke="#020802" stroke-width="0.8" stroke-opacity="0.6" />
<g filter="url(#b2)"><polygon points="1214.0,77.0 1232.0,77.0 1240.0,101.0 1226.0,99.0" fill="#050503" />
</g>
<polygon points="1191.0,77.0 1213.0,77.0 1211.0,90.0 1195.0,88.0" fill="#3d8cc6" />
<polygon points="853.0,115.0 892.0,179.0 908.0,327.0 866.0,236.0" fill="#5d608f" />
<polygon points="853.0,115.0 1404.0,98.0 1497.0,148.0 892.0,179.0" fill="#6b6ea2" />
<polygon points="892.0,179.0 1497.0,148.0 1480.0,261.0 908.0,327.0" fill="#777bb0" />
<path d="M856.3 120.3L869.5 243.6M859.6 125.9L873.1 251.5M863.1 131.6L876.9 259.6M866.8 137.6L880.8 268.1M870.6 143.8L884.9 277.0M874.5 150.3L889.1 286.2M878.6 157.0L893.6 295.7M882.9 164.0L898.2 305.7M887.3 171.4L903.0 316.1M853.5 120.0L892.7 185.1M854.1 125.1L893.3 191.3M854.6 130.1L894.0 197.5M855.2 135.1L894.7 203.6M855.7 140.2L895.3 209.8M856.2 145.2L896.0 215.9M856.8 150.2L896.7 222.1M857.3 155.3L897.3 228.2M857.9 160.3L898.0 234.4M858.4 165.3L898.7 240.6M859.0 170.4L899.3 246.7M859.5 175.4L900.0 252.9M860.0 180.5L900.7 259.1M860.6 185.5L901.3 265.2M861.1 190.6L902.0 271.4M861.7 195.6L902.7 277.6M862.2 200.6L903.3 283.7M862.7 205.7L904.0 289.9M863.3 210.7L904.7 296.1M863.8 215.8L905.3 302.3M864.4 220.8L906.0 308.5M864.9 225.9L906.7 314.6M865.5 230.9L907.3 320.8M865.5 230.9L869.5 243.6M864.9 225.9L873.1 251.5M864.4 220.8L876.9 259.6M863.8 215.8L880.8 268.1M863.3 210.7L884.9 277.0M862.7 205.7L889.1 286.2M862.2 200.6L893.6 295.7M861.7 195.6L898.2 305.7M861.1 190.6L903.0 316.1M860.6 185.5L908.0 327.0M860.0 180.5L907.3 320.8M859.5 175.4L906.7 314.6M859.0 170.4L906.0 308.5M858.4 165.3L905.3 302.3M857.9 160.3L904.7 296.1M857.3 155.3L904.0 289.9M856.8 150.2L903.3 283.7M856.2 145.2L902.7 277.6M855.7 140.2L902.0 271.4M855.2 135.1L901.3 265.2M854.6 130.1L900.7 259.1M854.1 125.1L900.0 252.9M853.5 120.0L899.3 246.7M853.0 115.0L898.7 240.6M856.3 120.3L898.0 234.4M859.6 125.9L897.3 228.2M863.1 131.6L896.7 222.1M866.8 137.6L896.0 215.9M870.6 143.8L895.3 209.8M874.5 150.3L894.7 203.6M878.6 157.0L894.0 197.5M882.9 164.0L893.3 191.3M887.3 171.4L892.7 185.1" fill="none" stroke="#08081a" stroke-width="0.7" stroke-opacity="0.5" />
<path d="M854.9 118.1L1408.7 100.5M856.9 121.3L1413.4 103.1M858.8 124.6L1418.2 105.6M860.8 127.8L1423.0 108.2M862.9 131.2L1427.9 110.9M864.9 134.5L1432.9 113.5M867.0 138.0L1437.9 116.2M869.1 141.4L1442.9 118.9M871.2 144.9L1448.0 121.7M873.4 148.5L1453.2 124.5M875.6 152.1L1458.5 127.3M877.9 155.8L1463.8 130.1M880.1 159.5L1469.2 133.0M882.4 163.3L1474.6 135.9M884.8 167.1L1480.1 138.9M887.1 171.0L1485.7 141.9M889.6 175.0L1491.3 144.9M887.1 171.0L904.8 178.3M882.4 163.3L917.5 177.7M877.9 155.8L930.1 177.0M873.4 148.5L942.6 176.4M869.1 141.4L955.1 175.8M864.9 134.5L967.4 175.1M860.8 127.8L979.6 174.5M856.9 121.3L991.7 173.9M853.0 115.0L1003.7 173.3M864.4 114.6L1015.7 172.7M875.7 114.3L1027.5 172.1M887.0 114.0L1039.3 171.5M898.2 113.6L1050.9 170.9M909.2 113.3L1062.5 170.3M920.3 112.9L1074.0 169.7M931.2 112.6L1085.4 169.1M942.1 112.3L1096.7 168.5M952.9 111.9L1107.9 167.9M963.6 111.6L1119.1 167.4M974.2 111.3L1130.1 166.8M984.8 110.9L1141.1 166.2M995.3 110.6L1152.0 165.7M1005.7 110.3L1162.8 165.1M1016.1 110.0L1173.6 164.6M1026.4 109.7L1184.2 164.0M1036.6 109.3L1194.8 163.5M1046.7 109.0L1205.3 162.9M1056.8 108.7L1215.7 162.4M1066.8 108.4L1226.1 161.9M1076.8 108.1L1236.4 161.4M1086.7 107.8L1246.6 160.8M1096.5 107.5L1256.7 160.3M1106.3 107.2L1266.8 159.8M1116.0 106.9L1276.8 159.3M1125.6 106.6L1286.7 158.8M1135.2 106.3L1296.5 158.3M1144.7 106.0L1306.3 157.8M1154.1 105.7L1316.0 157.3M1163.5 105.4L1325.7 156.8M1172.8 105.1L1335.3 156.3M1182.1 104.8L1344.8 155.8M1191.3 104.6L1354.2 155.3M1200.5 104.3L1363.6 154.8M1209.6 104.0L1372.9 154.4M1218.6 103.7L1382.2 153.9M1227.6 103.4L1391.4 153.4M1236.5 103.2L1400.5 152.9M1245.4 102.9L1409.6 152.5M1254.2 102.6L1418.6 152.0M1263.0 102.4L1427.5 151.6M1271.7 102.1L1436.4 151.1M1280.3 101.8L1445.2 150.7M1288.9 101.6L1454.0 150.2M1297.5 101.3L1462.7 149.8M1306.0 101.0L1471.4 149.3M1314.4 100.8L1480.0 148.9M1322.8 100.5L1488.5 148.4M1331.1 100.2L1497.0 148.0M1339.4 100.0L1485.7 141.9M1347.7 99.7L1474.6 135.9M1355.9 99.5L1463.8 130.1M1364.0 99.2L1453.2 124.5M1372.1 99.0L1442.9 118.9M1380.1 98.7L1432.9 113.5M1388.1 98.5L1423.0 108.2M1396.1 98.2L1413.4 103.1M856.9 121.3L864.4 114.6M860.8 127.8L875.7 114.3M864.9 134.5L887.0 114.0M869.1 141.4L898.2 113.6M873.4 148.5L909.2 113.3M877.9 155.8L920.3 112.9M882.4 163.3L931.2 112.6M887.1 171.0L942.1 112.3M892.0 179.0L952.9 111.9M904.8 178.3L963.6 111.6M917.5 177.7L974.2 111.3M930.1 177.0L984.8 110.9M942.6 176.4L995.3 110.6M955.1 175.8L1005.7 110.3M967.4 175.1L1016.1 110.0M979.6 174.5L1026.4 109.7M991.7 173.9L1036.6 109.3M1003.7 173.3L1046.7 109.0M1015.7 172.7L1056.8 108.7M1027.5 172.1L1066.8 108.4M1039.3 171.5L1076.8 108.1M1050.9 170.9L1086.7 107.8M1062.5 170.3L1096.5 107.5M1074.0 169.7L1106.3 107.2M1085.4 169.1L1116.0 106.9M1096.7 168.5L1125.6 106.6M1107.9 167.9L1135.2 106.3M1119.1 167.4L1144.7 106.0M1130.1 166.8L1154.1 105.7M1141.1 166.2L1163.5 105.4M1152.0 165.7L1172.8 105.1M1162.8 165.1L1182.1 104.8M1173.6 164.6L1191.3 104.6M1184.2 164.0L1200.5 104.3M1194.8 163.5L1209.6 104.0M1205.3 162.9L1218.6 103.7M1215.7 162.4L1227.6 103.4M1226.1 161.9L1236.5 103.2M1236.4 161.4L1245.4 102.9M1246.6 160.8L1254.2 102.6M1256.7 160.3L1263.0 102.4M1266.8 159.8L1271.7 102.1M1276.8 159.3L1280.3 101.8M1286.7 158.8L1288.9 101.6M1296.5 158.3L1297.5 101.3M1306.3 157.8L1306.0 101.0M1316.0 157.3L1314.4 100.8M1325.7 156.8L1322.8 100.5M1335.3 156.3L1331.1 100.2M1344.8 155.8L1339.4 100.0M1354.2 155.3L1347.7 99.7M1363.6 154.8L1355.9 99.5M1372.9 154.4L1364.0 99.2M1382.2 153.9L1372.1 99.0M1391.4 153.4L1380.1 98.7M1400.5 152.9L1388.1 98.5M1409.6 152.5L1396.1 98.2M1418.6 152.0L1404.0 98.0M1427.5 151.6L1413.4 103.1M1436.4 151.1L1423.0 108.2M1445.2 150.7L1432.9 113.5M1454.0 150.2L1442.9 118.9M1462.7 149.8L1453.2 124.5M1471.4 149.3L1463.8 130.1M1480.0 148.9L1474.6 135.9M1488.5 148.4L1485.7 141.9" fill="none" stroke="#08081a" stroke-width="0.8" stroke-opacity="0.7" />
<path d="M893.5 193.3L1495.4 158.7M895.1 207.4L1493.8 169.4M896.6 221.3L1492.2 179.9M898.1 235.1L1490.6 190.4M899.5 248.7L1489.1 200.7M901.0 262.1L1487.5 211.0M902.4 275.4L1486.0 221.2M903.8 288.5L1484.5 231.3M905.2 301.5L1483.0 241.3M906.6 314.3L1481.5 251.2M906.6 314.3L916.8 326.0M903.8 288.5L934.2 324.0M901.0 262.1L951.3 322.0M898.1 235.1L968.2 320.1M895.1 207.4L984.8 318.1M892.0 179.0L1001.2 316.2M910.8 178.0L1017.3 314.4M929.4 177.1L1033.3 312.5M947.6 176.2L1049.0 310.7M965.6 175.2L1064.4 309.0M983.2 174.3L1079.7 307.2M1000.6 173.4L1094.7 305.5M1017.8 172.6L1109.5 303.7M1034.6 171.7L1124.1 302.1M1051.2 170.8L1138.6 300.4M1067.6 170.0L1152.8 298.8M1083.7 169.2L1166.8 297.1M1099.6 168.4L1180.7 295.5M1115.2 167.6L1194.3 294.0M1130.7 166.8L1207.8 292.4M1145.9 166.0L1221.1 290.9M1160.8 165.2L1234.2 289.4M1175.6 164.5L1247.2 287.9M1190.1 163.7L1260.0 286.4M1204.5 163.0L1272.6 284.9M1218.6 162.3L1285.0 283.5M1232.6 161.5L1297.3 282.1M1246.4 160.8L1309.5 280.7M1259.9 160.1L1321.5 279.3M1273.3 159.5L1333.3 277.9M1286.5 158.8L1345.0 276.6M1299.5 158.1L1356.6 275.2M1312.4 157.5L1368.0 273.9M1325.1 156.8L1379.3 272.6M1337.6 156.2L1390.4 271.3M1349.9 155.5L1401.5 270.1M1362.1 154.9L1412.3 268.8M1374.2 154.3L1423.1 267.6M1386.1 153.7L1433.7 266.3M1397.8 153.1L1444.2 265.1M1409.4 152.5L1454.6 263.9M1420.8 151.9L1464.8 262.7M1432.1 151.3L1475.0 261.6M1443.3 150.8L1481.5 251.2M1454.3 150.2L1484.5 231.3M1465.1 149.6L1487.5 211.0M1475.9 149.1L1490.6 190.4M1486.5 148.5L1493.8 169.4M895.1 207.4L910.8 178.0M898.1 235.1L929.4 177.1M901.0 262.1L947.6 176.2M903.8 288.5L965.6 175.2M906.6 314.3L983.2 174.3M916.8 326.0L1000.6 173.4M934.2 324.0L1017.8 172.6M951.3 322.0L1034.6 171.7M968.2 320.1L1051.2 170.8M984.8 318.1L1067.6 170.0M1001.2 316.2L1083.7 169.2M1017.3 314.4L1099.6 168.4M1033.3 312.5L1115.2 167.6M1049.0 310.7L1130.7 166.8M1064.4 309.0L1145.9 166.0M1079.7 307.2L1160.8 165.2M1094.7 305.5L1175.6 164.5M1109.5 303.7L1190.1 163.7M1124.1 302.1L1204.5 163.0M1138.6 300.4L1218.6 162.3M1152.8 298.8L1232.6 161.5M1166.8 297.1L1246.4 160.8M1180.7 295.5L1259.9 160.1M1194.3 294.0L1273.3 159.5M1207.8 292.4L1286.5 158.8M1221.1 290.9L1299.5 158.1M1234.2 289.4L1312.4 157.5M1247.2 287.9L1325.1 156.8M1260.0 286.4L1337.6 156.2M1272.6 284.9L1349.9 155.5M1285.0 283.5L1362.1 154.9M1297.3 282.1L1374.2 154.3M1309.5 280.7L1386.1 153.7M1321.5 279.3L1397.8 153.1M1333.3 277.9L1409.4 152.5M1345.0 276.6L1420.8 151.9M1356.6 275.2L1432.1 151.3M1368.0 273.9L1443.3 150.8M1379.3 272.6L1454.3 150.2M1390.4 271.3L1465.1 149.6M1401.5 270.1L1475.9 149.1M1412.3 268.8L1486.5 148.5M1423.1 267.6L1497.0 148.0M1433.7 266.3L1493.8 169.4M1444.2 265.1L1490.6 190.4M1454.6 263.9L1487.5 211.0M1464.8 262.7L1484.5 231.3M1475.0 261.6L1481.5 251.2" fill="none" stroke="#08081a" stroke-width="0.9" stroke-opacity="0.8" />
<path d="M853 115L892 179L908 327M892 179L1497 148" fill="none" stroke="#08081a" stroke-width="1" stroke-opacity="0.9" />
<g filter="url(#b4)" clip-path="url(#cpf)"><polygon points="908.0,327.0 1480.0,261.0 1481.0,250.0 906.0,312.0" fill="#1a1a30" opacity="0.7"/>
</g>
<clipPath id="cpf"><polygon points="892.0,179.0 1497.0,148.0 1480.0,261.0 908.0,327.0"/></clipPath>
<path d="M1349.7 293L1333.5 490A52 24 4 0 0 1437.5 501L1466 300.7Z" fill="url(#gcyl)"/>
<clipPath id="ccy"><path d="M1349.7 293L1333.5 490A52 24 4 0 0 1437.5 501L1466 300.7Z"/></clipPath>
<path d="M1349.0 302.0L1350.4 306.5L1354.7 311.1L1361.6 315.4L1370.8 319.2L1381.7 322.4L1394.0 324.7L1406.8 326.1L1419.7 326.4L1431.9 325.8L1442.9 324.1L1452.1 321.5L1459.0 318.2L1463.3 314.2L1464.7 309.8M1348.2 310.9L1349.7 315.5L1353.9 320.1L1360.8 324.5L1369.9 328.3L1380.8 331.5L1393.0 333.9L1405.8 335.3L1418.6 335.7L1430.8 335.0L1441.7 333.3L1450.8 330.7L1457.7 327.3L1462.0 323.3L1463.4 318.9M1347.5 319.9L1348.9 324.5L1353.2 329.2L1360.0 333.6L1369.1 337.5L1379.9 340.7L1392.0 343.1L1404.8 344.5L1417.6 344.9L1429.7 344.2L1440.5 342.5L1449.6 339.9L1456.4 336.5L1460.7 332.5L1462.1 328.0M1346.8 328.8L1348.2 333.5L1352.4 338.2L1359.2 342.6L1368.2 346.6L1379.0 349.8L1391.1 352.3L1403.8 353.7L1416.5 354.1L1428.5 353.4L1439.3 351.8L1448.4 349.1L1455.2 345.7L1459.4 341.6L1460.8 337.1M1346.0 337.8L1347.4 342.5L1351.6 347.3L1358.4 351.7L1367.4 355.7L1378.1 359.0L1390.1 361.4L1402.8 362.9L1415.4 363.3L1427.4 362.7L1438.2 361.0L1447.1 358.3L1453.9 354.9L1458.1 350.8L1459.5 346.2M1345.3 346.7L1346.7 351.5L1350.9 356.3L1357.6 360.8L1366.5 364.8L1377.3 368.2L1389.2 370.6L1401.8 372.1L1414.3 372.5L1426.3 371.9L1437.0 370.2L1445.9 367.5L1452.6 364.1L1456.8 359.9L1458.2 355.3M1344.5 355.7L1346.0 360.5L1350.1 365.3L1356.8 369.9L1365.7 374.0L1376.4 377.3L1388.2 379.8L1400.7 381.3L1413.2 381.8L1425.1 381.1L1435.8 379.4L1444.7 376.7L1451.4 373.2L1455.5 369.1L1456.9 364.4M1343.8 364.6L1345.2 369.5L1349.3 374.4L1356.0 379.0L1364.9 383.1L1375.5 386.5L1387.3 389.0L1399.7 390.5L1412.2 391.0L1424.0 390.3L1434.6 388.6L1443.4 385.9L1450.1 382.4L1454.2 378.2L1455.6 373.5M1343.1 373.6L1344.5 378.5L1348.6 383.4L1355.2 388.1L1364.0 392.2L1374.6 395.6L1386.3 398.2L1398.7 399.8L1411.1 400.2L1422.8 399.6L1433.4 397.9L1442.2 395.1L1448.8 391.6L1452.9 387.3L1454.3 382.6M1342.3 382.5L1343.7 387.5L1347.8 392.5L1354.4 397.2L1363.2 401.3L1373.7 404.8L1385.4 407.4L1397.7 409.0L1410.0 409.4L1421.7 408.8L1432.2 407.1L1441.0 404.3L1447.6 400.8L1451.7 396.5L1453.0 391.7M1341.6 391.5L1343.0 396.5L1347.1 401.5L1353.6 406.2L1362.3 410.5L1372.8 414.0L1384.4 416.6L1396.7 418.2L1408.9 418.7L1420.6 418.0L1431.0 416.3L1439.7 413.5L1446.3 409.9L1450.4 405.6L1451.8 400.9M1340.9 400.5L1342.2 405.5L1346.3 410.5L1352.8 415.3L1361.5 419.6L1371.9 423.1L1383.5 425.8L1395.7 427.4L1407.9 427.9L1419.4 427.3L1429.8 425.5L1438.5 422.7L1445.0 419.1L1449.1 414.8L1450.5 410.0M1340.1 409.4L1341.5 414.5L1345.5 419.6L1352.0 424.4L1360.7 428.7L1371.0 432.3L1382.5 435.0L1394.6 436.6L1406.8 437.1L1418.3 436.5L1428.6 434.7L1437.3 431.9L1443.8 428.3L1447.8 423.9L1449.2 419.1M1339.4 418.4L1340.8 423.5L1344.8 428.6L1351.2 433.5L1359.8 437.8L1370.1 441.5L1381.6 444.2L1393.6 445.8L1405.7 446.3L1417.2 445.7L1427.4 443.9L1436.0 441.2L1442.5 437.5L1446.5 433.1L1447.9 428.2M1338.7 427.3L1340.0 432.5L1344.0 437.7L1350.4 442.6L1359.0 447.0L1369.2 450.6L1380.6 453.3L1392.6 455.0L1404.6 455.6L1416.0 454.9L1426.3 453.2L1434.8 450.4L1441.2 446.6L1445.2 442.2L1446.6 437.3M1337.9 436.3L1339.3 441.5L1343.2 446.7L1349.6 451.7L1358.1 456.1L1368.3 459.8L1379.7 462.5L1391.6 464.2L1403.5 464.8L1414.9 464.2L1425.1 462.4L1433.6 459.6L1440.0 455.8L1443.9 451.3L1445.3 446.4M1337.2 445.2L1338.5 450.5L1342.5 455.8L1348.8 460.7L1357.3 465.2L1367.4 468.9L1378.7 471.7L1390.6 473.4L1402.5 474.0L1413.7 473.4L1423.9 471.6L1432.3 468.8L1438.7 465.0L1442.6 460.5L1444.0 455.5M1336.4 454.2L1337.8 459.5L1341.7 464.8L1348.0 469.8L1356.4 474.3L1366.5 478.1L1377.7 480.9L1389.6 482.7L1401.4 483.2L1412.6 482.6L1422.7 480.8L1431.1 478.0L1437.4 474.2L1441.4 469.6L1442.7 464.6M1335.7 463.1L1337.0 468.5L1340.9 473.8L1347.2 478.9L1355.6 483.5L1365.6 487.3L1376.8 490.1L1388.5 491.9L1400.3 492.5L1411.5 491.8L1421.5 490.0L1429.9 487.2L1436.2 483.3L1440.1 478.8L1441.4 473.7M1335.0 472.1L1336.3 477.5L1340.2 482.9L1346.4 488.0L1354.8 492.6L1364.7 496.4L1375.8 499.3L1387.5 501.1L1399.2 501.7L1410.3 501.1L1420.3 499.3L1428.6 496.4L1434.9 492.5L1438.8 487.9L1440.1 482.8M1334.2 481.0L1335.5 486.5L1339.4 491.9L1345.6 497.1L1353.9 501.7L1363.8 505.6L1374.9 508.5L1386.5 510.3L1398.1 510.9L1409.2 510.3L1419.1 508.5L1427.4 505.6L1433.6 501.7L1437.5 497.1L1438.8 491.9M1337.9 436.3L1337.3 447.1L1337.1 457.9L1337.2 468.8L1337.5 479.7L1338.2 490.6L1339.2 501.5M1339.4 418.4L1338.8 429.1L1338.6 439.9L1338.7 450.8L1339.0 461.6L1339.7 472.5L1340.7 483.4L1341.9 494.3L1343.4 505.2M1340.9 400.5L1340.3 411.2L1340.1 422.0L1340.1 432.8L1340.5 443.6L1341.2 454.5L1342.2 465.3L1343.5 476.2L1345.0 487.0L1346.8 497.8L1348.7 508.6M1342.3 382.5L1341.8 393.2L1341.5 404.0L1341.6 414.8L1342.0 425.6L1342.8 436.4L1343.8 447.2L1345.1 458.0L1346.6 468.9L1348.4 479.6L1350.4 490.4L1352.6 501.1L1354.9 511.7M1343.8 364.6L1343.2 375.3L1343.0 386.0L1343.1 396.8L1343.5 407.5L1344.3 418.3L1345.3 429.1L1346.6 439.9L1348.2 450.7L1350.0 461.5L1352.0 472.2L1354.2 482.8L1356.6 493.4L1359.2 503.9L1361.9 514.4M1345.3 346.7L1344.7 357.4L1344.5 368.0L1344.6 378.8L1345.0 389.5L1345.8 400.3L1346.8 411.0L1348.2 421.8L1349.7 432.6L1351.6 443.3L1353.6 454.0L1355.9 464.6L1358.3 475.2L1360.9 485.7L1363.7 496.1L1366.5 506.4L1369.4 516.6M1346.8 328.8L1346.2 339.4L1346.0 350.1L1346.1 360.8L1346.5 371.5L1347.3 382.2L1348.4 393.0L1349.7 403.7L1351.3 414.4L1353.2 425.1L1355.3 435.7L1357.6 446.3L1360.0 456.9L1362.7 467.4L1365.4 477.8L1368.3 488.1L1371.3 498.3L1374.3 508.4L1377.4 518.3M1348.2 310.9L1347.7 321.5L1347.5 332.1L1347.6 342.8L1348.0 353.5L1348.8 364.2L1349.9 374.9L1351.3 385.6L1352.9 396.2L1354.8 406.9L1356.9 417.5L1359.2 428.1L1361.7 438.6L1364.4 449.1L1367.2 459.4L1370.1 469.7L1373.1 479.9L1376.2 490.0L1379.3 499.9L1382.4 509.8L1385.5 519.5M1349.7 293.0L1349.1 303.6L1348.9 314.1L1349.1 324.8L1349.5 335.4L1350.3 346.1L1351.4 356.8L1352.8 367.4L1354.5 378.1L1356.4 388.7L1358.5 399.3L1360.9 409.9L1363.5 420.4L1366.2 430.8L1369.0 441.1L1372.0 451.4L1375.0 461.6L1378.1 471.6L1381.3 481.6L1384.4 491.4L1387.5 501.1L1390.6 510.6L1393.6 520.1M1350.4 296.2L1350.6 306.8L1351.0 317.4L1351.9 328.0L1353.0 338.7L1354.4 349.3L1356.1 359.9L1358.0 370.5L1360.2 381.1L1362.6 391.6L1365.2 402.1L1367.9 412.5L1370.8 422.8L1373.8 433.0L1376.9 443.2L1380.0 453.2L1383.2 463.2L1386.4 473.0L1389.6 482.7L1392.7 492.2L1395.8 501.6L1398.7 510.9L1401.6 520.0M1352.5 299.4L1353.4 310.0L1354.5 320.6L1355.9 331.2L1357.6 341.8L1359.6 352.4L1361.8 362.9L1364.2 373.4L1366.9 383.8L1369.6 394.2L1372.6 404.5L1375.6 414.7L1378.7 424.8L1381.9 434.9L1385.1 444.8L1388.4 454.6L1391.6 464.2L1394.8 473.8L1397.9 483.2L1400.9 492.4L1403.8 501.6L1406.5 510.6L1409.1 519.4M1356.0 302.5L1357.5 313.1L1359.2 323.6L1361.2 334.2L1363.5 344.7L1365.9 355.2L1368.6 365.6L1371.4 375.9L1374.3 386.2L1377.4 396.4L1380.6 406.5L1383.8 416.5L1387.1 426.4L1390.4 436.2L1393.6 445.8L1396.8 455.3L1400.0 464.7L1403.0 474.0L1406.0 483.1L1408.8 492.1L1411.4 500.9L1413.8 509.6L1416.1 518.1M1360.8 305.5L1362.8 316.0L1365.1 326.5L1367.6 336.9L1370.3 347.3L1373.1 357.6L1376.1 367.9L1379.2 378.0L1382.4 388.1L1385.7 398.1L1389.0 408.0L1392.4 417.7L1395.7 427.4L1398.9 436.9L1402.1 446.3L1405.2 455.6L1408.2 464.7L1411.0 473.6L1413.7 482.5L1416.2 491.2L1418.4 499.7L1420.5 508.1L1422.3 516.4M1366.7 308.3L1369.3 318.7L1372.0 329.0L1374.9 339.3L1377.9 349.6L1381.1 359.7L1384.3 369.8L1387.6 379.7L1391.0 389.6L1394.3 399.3L1397.7 409.0L1401.0 418.5L1404.2 427.9L1407.4 437.1L1410.4 446.2L1413.3 455.2L1416.0 464.0L1418.5 472.7L1420.8 481.3L1422.9 489.7L1424.7 497.9L1426.3 506.1L1427.6 514.1M1373.7 310.8L1376.6 321.0L1379.7 331.2L1382.9 341.4L1386.2 351.4L1389.5 361.3L1392.9 371.2L1396.3 380.9L1399.7 390.5L1403.1 400.0L1406.4 409.4L1409.5 418.7L1412.6 427.8L1415.5 436.7L1418.3 445.6L1420.8 454.3L1423.1 462.8L1425.3 471.2L1427.1 479.5L1428.7 487.7L1430.1 495.7L1431.1 503.5L1431.8 511.3M1381.5 312.9L1384.7 323.0L1388.0 333.0L1391.4 343.0L1394.9 352.8L1398.3 362.5L1401.8 372.1L1405.1 381.6L1408.5 391.0L1411.7 400.2L1414.8 409.3L1417.8 418.3L1420.5 427.1L1423.1 435.8L1425.5 444.4L1427.7 452.8L1429.6 461.1L1431.2 469.2L1432.5 477.3L1433.6 485.2L1434.4 492.9L1434.8 500.6L1435.0 508.1M1389.9 314.7L1393.3 324.6L1396.8 334.4L1400.3 344.1L1403.8 353.7L1407.2 363.2L1410.6 372.5L1413.9 381.8L1417.0 390.9L1420.0 399.8L1422.8 408.7L1425.5 417.4L1427.9 425.9L1430.0 434.4L1432.0 442.7L1433.6 450.8L1435.0 458.9L1436.1 466.8L1436.9 474.6L1437.4 482.3L1437.5 489.8L1437.4 497.3L1436.9 504.7M1398.8 316.0L1402.3 325.7L1405.8 335.3L1409.3 344.7L1412.7 354.1L1416.0 363.3L1419.2 372.4L1422.2 381.4L1425.1 390.2L1427.8 398.9L1430.2 407.5L1432.4 415.9L1434.4 424.2L1436.1 432.4L1437.5 440.5L1438.6 448.4L1439.4 456.2L1439.9 463.9L1440.1 471.5L1439.9 479.0L1439.4 486.4L1438.6 493.7L1437.5 501.0M1407.8 316.8L1411.4 326.3L1414.8 335.6L1418.2 344.9L1421.4 354.0L1424.5 362.9L1427.4 371.8L1430.1 380.5L1432.6 389.1L1434.8 397.5L1436.8 405.8L1438.6 414.0L1440.0 422.1L1441.1 430.0L1442.0 437.9L1442.5 445.6L1442.6 453.2L1442.5 460.7L1442.0 468.2L1441.2 475.5L1440.1 482.8M1416.9 317.2L1420.3 326.4L1423.6 335.5L1426.7 344.5L1429.7 353.3L1432.4 362.0L1434.9 370.6L1437.2 379.1L1439.3 387.4L1441.0 395.6L1442.5 403.7L1443.6 411.7L1444.5 419.5L1445.0 427.3L1445.2 434.9L1445.1 442.4L1444.6 449.9L1443.8 457.3L1442.7 464.6M1425.8 317.1L1429.0 326.0L1432.0 334.9L1434.7 343.6L1437.3 352.2L1439.6 360.6L1441.7 369.0L1443.5 377.2L1445.0 385.3L1446.1 393.3L1447.0 401.1L1447.6 408.9L1447.8 416.6L1447.7 424.1L1447.2 431.6L1446.4 439.0L1445.3 446.4M1434.2 316.4L1437.1 325.1L1439.7 333.7L1442.0 342.2L1444.1 350.6L1445.9 358.8L1447.4 366.9L1448.7 374.9L1449.5 382.8L1450.1 390.6L1450.3 398.3L1450.2 405.9L1449.8 413.4L1449.0 420.8L1447.9 428.2M1442.0 315.3L1444.4 323.8L1446.5 332.1L1448.4 340.4L1449.9 348.5L1451.2 356.5L1452.1 364.4L1452.7 372.2L1452.9 379.9L1452.8 387.6L1452.4 395.1L1451.6 402.6L1450.5 410.0M1449.0 313.7L1450.8 322.0L1452.4 330.1L1453.7 338.1L1454.6 346.1L1455.2 353.9L1455.5 361.6L1455.4 369.3L1454.9 376.8L1454.2 384.3L1453.0 391.7M1454.9 311.7L1456.2 319.8L1457.1 327.7L1457.8 335.6L1458.0 343.3L1458.0 351.0L1457.5 358.6L1456.8 366.1L1455.6 373.5M1459.7 309.4L1460.3 317.2L1460.6 325.0L1460.5 332.7L1460.1 340.3L1459.3 347.9L1458.2 355.3M1463.2 306.7L1463.1 314.4L1462.7 322.0L1461.9 329.6L1460.8 337.1M1465.3 303.8L1464.5 311.4L1463.4 318.9M1350.4 296.2L1349.1 303.6L1348.2 310.9M1352.5 299.4L1350.6 306.8L1348.9 314.1L1347.7 321.5L1346.8 328.8M1356.0 302.5L1353.4 310.0L1351.0 317.4L1349.1 324.8L1347.5 332.1L1346.2 339.4L1345.3 346.7M1360.8 305.5L1357.5 313.1L1354.5 320.6L1351.9 328.0L1349.5 335.4L1347.6 342.8L1346.0 350.1L1344.7 357.4L1343.8 364.6M1366.7 308.3L1362.8 316.0L1359.2 323.6L1355.9 331.2L1353.0 338.7L1350.3 346.1L1348.0 353.5L1346.1 360.8L1344.5 368.0L1343.2 375.3L1342.3 382.5M1373.7 310.8L1369.3 318.7L1365.1 326.5L1361.2 334.2L1357.6 341.8L1354.4 349.3L1351.4 356.8L1348.8 364.2L1346.5 371.5L1344.6 378.8L1343.0 386.0L1341.8 393.2L1340.9 400.5M1381.5 312.9L1376.6 321.0L1372.0 329.0L1367.6 336.9L1363.5 344.7L1359.6 352.4L1356.1 359.9L1352.8 367.4L1349.9 374.9L1347.3 382.2L1345.0 389.5L1343.1 396.8L1341.5 404.0L1340.3 411.2L1339.4 418.4M1389.9 314.7L1384.7 323.0L1379.7 331.2L1374.9 339.3L1370.3 347.3L1365.9 355.2L1361.8 362.9L1358.0 370.5L1354.5 378.1L1351.3 385.6L1348.4 393.0L1345.8 400.3L1343.5 407.5L1341.6 414.8L1340.1 422.0L1338.8 429.1L1337.9 436.3M1398.8 316.0L1393.3 324.6L1388.0 333.0L1382.9 341.4L1377.9 349.6L1373.1 357.6L1368.6 365.6L1364.2 373.4L1360.2 381.1L1356.4 388.7L1352.9 396.2L1349.7 403.7L1346.8 411.0L1344.3 418.3L1342.0 425.6L1340.1 432.8L1338.6 439.9L1337.3 447.1L1336.4 454.2M1407.8 316.8L1402.3 325.7L1396.8 334.4L1391.4 343.0L1386.2 351.4L1381.1 359.7L1376.1 367.9L1371.4 375.9L1366.9 383.8L1362.6 391.6L1358.5 399.3L1354.8 406.9L1351.3 414.4L1348.2 421.8L1345.3 429.1L1342.8 436.4L1340.5 443.6L1338.7 450.8L1337.1 457.9L1335.9 465.0L1335.0 472.1M1416.9 317.2L1411.4 326.3L1405.8 335.3L1400.3 344.1L1394.9 352.8L1389.5 361.3L1384.3 369.8L1379.2 378.0L1374.3 386.2L1369.6 394.2L1365.2 402.1L1360.9 409.9L1356.9 417.5L1353.2 425.1L1349.7 432.6L1346.6 439.9L1343.8 447.2L1341.2 454.5L1339.0 461.6L1337.2 468.8L1335.6 475.9L1334.4 482.9L1333.5 490.0M1425.8 317.1L1420.3 326.4L1414.8 335.6L1409.3 344.7L1403.8 353.7L1398.3 362.5L1392.9 371.2L1387.6 379.7L1382.4 388.1L1377.4 396.4L1372.6 404.5L1367.9 412.5L1363.5 420.4L1359.2 428.1L1355.3 435.7L1351.6 443.3L1348.2 450.7L1345.1 458.0L1342.2 465.3L1339.7 472.5L1337.5 479.7L1335.7 486.8L1334.1 493.8M1434.2 316.4L1429.0 326.0L1423.6 335.5L1418.2 344.9L1412.7 354.1L1407.2 363.2L1401.8 372.1L1396.3 380.9L1391.0 389.6L1385.7 398.1L1380.6 406.5L1375.6 414.7L1370.8 422.8L1366.2 430.8L1361.7 438.6L1357.6 446.3L1353.6 454.0L1350.0 461.5L1346.6 468.9L1343.5 476.2L1340.7 483.4L1338.2 490.6L1336.0 497.7M1442.0 315.3L1437.1 325.1L1432.0 334.9L1426.7 344.5L1421.4 354.0L1416.0 363.3L1410.6 372.5L1405.1 381.6L1399.7 390.5L1394.3 399.3L1389.0 408.0L1383.8 416.5L1378.7 424.8L1373.8 433.0L1369.0 441.1L1364.4 449.1L1360.0 456.9L1355.9 464.6L1352.0 472.2L1348.4 479.6L1345.0 487.0L1341.9 494.3L1339.2 501.5M1449.0 313.7L1444.4 323.8L1439.7 333.7L1434.7 343.6L1429.7 353.3L1424.5 362.9L1419.2 372.4L1413.9 381.8L1408.5 391.0L1403.1 400.0L1397.7 409.0L1392.4 417.7L1387.1 426.4L1381.9 434.9L1376.9 443.2L1372.0 451.4L1367.2 459.4L1362.7 467.4L1358.3 475.2L1354.2 482.8L1350.4 490.4L1346.8 497.8L1343.4 505.2M1454.9 311.7L1450.8 322.0L1446.5 332.1L1442.0 342.2L1437.3 352.2L1432.4 362.0L1427.4 371.8L1422.2 381.4L1417.0 390.9L1411.7 400.2L1406.4 409.4L1401.0 418.5L1395.7 427.4L1390.4 436.2L1385.1 444.8L1380.0 453.2L1375.0 461.6L1370.1 469.7L1365.4 477.8L1360.9 485.7L1356.6 493.4L1352.6 501.1L1348.7 508.6M1459.7 309.4L1456.2 319.8L1452.4 330.1L1448.4 340.4L1444.1 350.6L1439.6 360.6L1434.9 370.6L1430.1 380.5L1425.1 390.2L1420.0 399.8L1414.8 409.3L1409.5 418.7L1404.2 427.9L1398.9 436.9L1393.6 445.8L1388.4 454.6L1383.2 463.2L1378.1 471.6L1373.1 479.9L1368.3 488.1L1363.7 496.1L1359.2 503.9L1354.9 511.7M1463.2 306.7L1460.3 317.2L1457.1 327.7L1453.7 338.1L1449.9 348.5L1445.9 358.8L1441.7 369.0L1437.2 379.1L1432.6 389.1L1427.8 398.9L1422.8 408.7L1417.8 418.3L1412.6 427.8L1407.4 437.1L1402.1 446.3L1396.8 455.3L1391.6 464.2L1386.4 473.0L1381.3 481.6L1376.2 490.0L1371.3 498.3L1366.5 506.4L1361.9 514.4M1465.3 303.8L1463.1 314.4L1460.6 325.0L1457.8 335.6L1454.6 346.1L1451.2 356.5L1447.4 366.9L1443.5 377.2L1439.3 387.4L1434.8 397.5L1430.2 407.5L1425.5 417.4L1420.5 427.1L1415.5 436.7L1410.4 446.2L1405.2 455.6L1400.0 464.7L1394.8 473.8L1389.6 482.7L1384.4 491.4L1379.3 499.9L1374.3 508.4L1369.4 516.6M1466.0 300.7L1464.5 311.4L1462.7 322.0L1460.5 332.7L1458.0 343.3L1455.2 353.9L1452.1 364.4L1448.7 374.9L1445.0 385.3L1441.0 395.6L1436.8 405.8L1432.4 415.9L1427.9 425.9L1423.1 435.8L1418.3 445.6L1413.3 455.2L1408.2 464.7L1403.0 474.0L1397.9 483.2L1392.7 492.2L1387.5 501.1L1382.4 509.8L1377.4 518.3M1463.4 318.9L1461.9 329.6L1460.1 340.3L1458.0 351.0L1455.5 361.6L1452.7 372.2L1449.5 382.8L1446.1 393.3L1442.5 403.7L1438.6 414.0L1434.4 424.2L1430.0 434.4L1425.5 444.4L1420.8 454.3L1416.0 464.0L1411.0 473.6L1406.0 483.1L1400.9 492.4L1395.8 501.6L1390.6 510.6L1385.5 519.5M1460.8 337.1L1459.3 347.9L1457.5 358.6L1455.4 369.3L1452.9 379.9L1450.1 390.6L1447.0 401.1L1443.6 411.7L1440.0 422.1L1436.1 432.4L1432.0 442.7L1427.7 452.8L1423.1 462.8L1418.5 472.7L1413.7 482.5L1408.8 492.1L1403.8 501.6L1398.7 510.9L1393.6 520.1M1458.2 355.3L1456.8 366.1L1454.9 376.8L1452.8 387.6L1450.3 398.3L1447.6 408.9L1444.5 419.5L1441.1 430.0L1437.5 440.5L1433.6 450.8L1429.6 461.1L1425.3 471.2L1420.8 481.3L1416.2 491.2L1411.4 500.9L1406.5 510.6L1401.6 520.0M1455.6 373.5L1454.2 384.3L1452.4 395.1L1450.2 405.9L1447.8 416.6L1445.0 427.3L1442.0 437.9L1438.6 448.4L1435.0 458.9L1431.2 469.2L1427.1 479.5L1422.9 489.7L1418.4 499.7L1413.8 509.6L1409.1 519.4M1453.0 391.7L1451.6 402.6L1449.8 413.4L1447.7 424.1L1445.2 434.9L1442.5 445.6L1439.4 456.2L1436.1 466.8L1432.5 477.3L1428.7 487.7L1424.7 497.9L1420.5 508.1L1416.1 518.1M1450.5 410.0L1449.0 420.8L1447.2 431.6L1445.1 442.4L1442.6 453.2L1439.9 463.9L1436.9 474.6L1433.6 485.2L1430.1 495.7L1426.3 506.1L1422.3 516.4M1447.9 428.2L1446.4 439.0L1444.6 449.9L1442.5 460.7L1440.1 471.5L1437.4 482.3L1434.4 492.9L1431.1 503.5L1427.6 514.1" fill="none" stroke="#14140a" stroke-width="0.8" stroke-opacity="0.62" clip-path="url(#ccy)"/>
<path d="M1349.7 293L1333.5 490A52 24 4 0 0 1437.5 501L1466 300.7Z" fill="url(#gcylb)"/>
<ellipse cx="1408" cy="297" rx="58.5" ry="21" transform="rotate(3.8 1408 297)" fill="#bdba9c" stroke="#14140a" stroke-width="0.8"/>
<clipPath id="cct"><ellipse cx="1408" cy="297" rx="58.5" ry="21" transform="rotate(3.8 1408 297)"/></clipPath>
<path d="M1340.6 286.9L1471.2 274.4M1341.2 291.9L1472.5 280.7M1341.9 296.8L1473.7 287.2M1342.5 301.8L1474.9 293.7M1343.1 306.8L1476.2 300.2M1343.7 311.8L1477.5 306.7M1344.4 316.9L1478.7 313.3M1343.7 311.8L1351.5 321.9M1342.5 301.8L1358.3 321.8M1341.2 291.9L1365.2 321.7M1340.0 282.0L1372.4 321.6M1346.3 281.3L1379.8 321.5M1352.9 280.6L1387.4 321.4M1359.6 279.9L1395.3 321.3M1366.5 279.1L1403.5 321.1M1373.7 278.4L1411.9 321.0M1381.0 277.6L1420.6 320.9M1388.6 276.8L1429.6 320.7M1396.5 275.9L1439.0 320.6M1404.6 275.0L1448.7 320.5M1413.0 274.1L1458.7 320.3M1421.7 273.2L1469.2 320.2M1430.7 272.2L1480.0 320.0M1440.0 271.2L1477.5 306.7M1449.6 270.2L1474.9 293.7M1459.6 269.1L1472.5 280.7M1341.2 291.9L1346.3 281.3M1342.5 301.8L1352.9 280.6M1343.7 311.8L1359.6 279.9M1345.0 322.0L1366.5 279.1M1351.5 321.9L1373.7 278.4M1358.3 321.8L1381.0 277.6M1365.2 321.7L1388.6 276.8M1372.4 321.6L1396.5 275.9M1379.8 321.5L1404.6 275.0M1387.4 321.4L1413.0 274.1M1395.3 321.3L1421.7 273.2M1403.5 321.1L1430.7 272.2M1411.9 321.0L1440.0 271.2M1420.6 320.9L1449.6 270.2M1429.6 320.7L1459.6 269.1M1439.0 320.6L1470.0 268.0M1448.7 320.5L1472.5 280.7M1458.7 320.3L1474.9 293.7M1469.2 320.2L1477.5 306.7" fill="none" stroke="#14140a" stroke-width="0.8" stroke-opacity="0.6" clip-path="url(#cct)"/>
<polygon points="849.0,401.0 996.0,821.0 1014.0,968.0 862.0,504.0" fill="#c0653f" />
<polygon points="849.0,401.0 1054.0,376.0 1294.0,745.0 996.0,821.0" fill="#cd734b" />
<polygon points="996.0,821.0 1294.0,745.0 1286.0,890.0 1014.0,968.0" fill="#e07f53" />
<path d="M851.2 407.3L864.3 511.0M853.5 413.7L866.6 518.1M855.7 420.2L869.0 525.3M858.0 426.8L871.4 532.6M860.4 433.5L873.8 540.0M862.7 440.3L876.2 547.5M865.2 447.2L878.7 555.1M867.6 454.1L881.3 562.8M870.1 461.2L883.8 570.6M872.6 468.4L886.4 578.5M875.1 475.7L889.1 586.6M877.7 483.0L891.7 594.8M880.3 490.5L894.5 603.1M883.0 498.2L897.2 611.5M885.7 505.9L900.0 620.0M888.5 513.7L902.8 628.7M891.2 521.7L905.7 637.5M894.1 529.8L908.7 646.4M896.9 538.0L911.6 655.5M899.9 546.3L914.7 664.7M902.8 554.8L917.7 674.1M905.8 563.4L920.8 683.6M908.9 572.2L924.0 693.3M912.0 581.0L927.2 703.1M915.2 590.1L930.5 713.1M918.4 599.3L933.8 723.3M921.7 608.6L937.2 733.6M925.0 618.1L940.6 744.1M928.4 627.7L944.1 754.7M931.8 637.6L947.7 765.6M935.3 647.6L951.3 776.6M938.8 657.7L955.0 787.8M942.5 668.1L958.7 799.2M946.1 678.6L962.5 810.8M949.9 689.3L966.4 822.7M953.7 700.2L970.3 834.7M957.6 711.3L974.3 846.9M961.6 722.6L978.4 859.4M965.6 734.1L982.6 872.1M969.7 745.8L986.8 885.1M973.9 757.7L991.1 898.2M978.1 769.9L995.5 911.7M982.5 782.3L1000.0 925.3M986.9 795.0L1004.6 939.3M991.4 807.9L1009.3 953.5M850.4 412.5L998.0 837.4M851.9 424.0L1000.0 853.8M853.3 435.4L1002.0 870.2M854.8 446.9L1004.0 886.5M856.2 458.3L1006.0 902.9M857.7 469.8L1008.0 919.2M859.1 481.2L1010.0 935.5M860.6 492.6L1012.0 951.8M860.6 492.6L864.3 511.0M859.1 481.2L866.6 518.1M857.7 469.8L869.0 525.3M856.2 458.3L871.4 532.6M854.8 446.9L873.8 540.0M853.3 435.4L876.2 547.5M851.9 424.0L878.7 555.1M850.4 412.5L881.3 562.8M849.0 401.0L883.8 570.6M851.2 407.3L886.4 578.5M853.5 413.7L889.1 586.6M855.7 420.2L891.7 594.8M858.0 426.8L894.5 603.1M860.4 433.5L897.2 611.5M862.7 440.3L900.0 620.0M865.2 447.2L902.8 628.7M867.6 454.1L905.7 637.5M870.1 461.2L908.7 646.4M872.6 468.4L911.6 655.5M875.1 475.7L914.7 664.7M877.7 483.0L917.7 674.1M880.3 490.5L920.8 683.6M883.0 498.2L924.0 693.3M885.7 505.9L927.2 703.1M888.5 513.7L930.5 713.1M891.2 521.7L933.8 723.3M894.1 529.8L937.2 733.6M896.9 538.0L940.6 744.1M899.9 546.3L944.1 754.7M902.8 554.8L947.7 765.6M905.8 563.4L951.3 776.6M908.9 572.2L955.0 787.8M912.0 581.0L958.7 799.2M915.2 590.1L962.5 810.8M918.4 599.3L966.4 822.7M921.7 608.6L970.3 834.7M925.0 618.1L974.3 846.9M928.4 627.7L978.4 859.4M931.8 637.6L982.6 872.1M935.3 647.6L986.8 885.1M938.8 657.7L991.1 898.2M942.5 668.1L995.5 911.7M946.1 678.6L1000.0 925.3M949.9 689.3L1004.6 939.3M953.7 700.2L1009.3 953.5M957.6 711.3L1014.0 968.0M961.6 722.6L1012.0 951.8M965.6 734.1L1010.0 935.5M969.7 745.8L1008.0 919.2M973.9 757.7L1006.0 902.9M978.1 769.9L1004.0 886.5M982.5 782.3L1002.0 870.2M986.9 795.0L1000.0 853.8M991.4 807.9L998.0 837.4" fill="none" stroke="#1a0800" stroke-width="0.7" stroke-opacity="0.5" />
<path d="M868.7 398.6L1025.5 813.5M888.2 396.2L1054.5 806.1M907.4 393.9L1083.0 798.8M926.5 391.6L1111.0 791.7M945.3 389.3L1138.5 784.7M963.9 387.0L1165.5 777.8M982.3 384.7L1192.1 771.0M1000.6 382.5L1218.2 764.3M1018.6 380.3L1243.9 757.8M1036.4 378.1L1269.2 751.3M852.5 411.0L1059.9 385.1M856.1 421.4L1066.0 394.5M859.8 432.0L1072.3 404.1M863.7 442.9L1078.7 413.9M867.6 454.1L1085.2 424.0M871.6 465.7L1092.0 434.4M875.8 477.6L1099.0 445.1M880.1 489.8L1106.1 456.1M884.5 502.4L1113.4 467.4M889.1 515.5L1121.0 479.0M893.8 528.9L1128.8 491.0M898.6 542.8L1136.8 503.3M903.6 557.1L1145.1 516.0M908.8 571.9L1153.6 529.1M914.2 587.2L1162.4 542.6M919.7 603.0L1171.4 556.5M925.4 619.3L1180.8 570.9M931.3 636.3L1190.4 585.7M937.5 653.8L1200.4 601.1M943.9 672.0L1210.7 616.9M950.5 690.9L1221.4 633.3M957.3 710.5L1232.4 650.3M964.5 730.9L1243.9 667.9M971.9 752.1L1255.7 686.1M979.6 774.1L1268.0 705.0M987.6 797.1L1280.8 724.6M852.5 411.0L868.7 398.6M856.1 421.4L888.2 396.2M859.8 432.0L907.4 393.9M863.7 442.9L926.5 391.6M867.6 454.1L945.3 389.3M871.6 465.7L963.9 387.0M875.8 477.6L982.3 384.7M880.1 489.8L1000.6 382.5M884.5 502.4L1018.6 380.3M889.1 515.5L1036.4 378.1M893.8 528.9L1054.0 376.0M898.6 542.8L1059.9 385.1M903.6 557.1L1066.0 394.5M908.8 571.9L1072.3 404.1M914.2 587.2L1078.7 413.9M919.7 603.0L1085.2 424.0M925.4 619.3L1092.0 434.4M931.3 636.3L1099.0 445.1M937.5 653.8L1106.1 456.1M943.9 672.0L1113.4 467.4M950.5 690.9L1121.0 479.0M957.3 710.5L1128.8 491.0M964.5 730.9L1136.8 503.3M971.9 752.1L1145.1 516.0M979.6 774.1L1153.6 529.1M987.6 797.1L1162.4 542.6M996.0 821.0L1171.4 556.5M1025.5 813.5L1180.8 570.9M1054.5 806.1L1190.4 585.7M1083.0 798.8L1200.4 601.1M1111.0 791.7L1210.7 616.9M1138.5 784.7L1221.4 633.3M1165.5 777.8L1232.4 650.3M1192.1 771.0L1243.9 667.9M1218.2 764.3L1255.7 686.1M1243.9 757.8L1268.0 705.0M1269.2 751.3L1280.8 724.6" fill="none" stroke="#1a0800" stroke-width="0.9" stroke-opacity="0.8" />
<path d="M1024.7 813.7L1040.1 960.5M1053.1 806.4L1065.9 953.1M1081.1 799.3L1091.4 945.8M1108.8 792.2L1116.6 938.6M1136.2 785.2L1141.6 931.4M1163.3 778.3L1166.3 924.3M1190.0 771.5L1190.8 917.3M1216.5 764.8L1214.9 910.4M1242.6 758.1L1238.9 903.5M1268.4 751.5L1262.6 896.7M999.2 847.5L1292.6 771.0M1002.4 873.1L1291.2 796.2M1005.4 897.9L1289.8 820.7M1008.4 922.0L1288.5 844.4M1011.2 945.3L1287.2 867.5M1011.2 945.3L1040.1 960.5M1008.4 922.0L1065.9 953.1M1005.4 897.9L1091.4 945.8M1002.4 873.1L1116.6 938.6M999.2 847.5L1141.6 931.4M996.0 821.0L1166.3 924.3M1024.7 813.7L1190.8 917.3M1053.1 806.4L1214.9 910.4M1081.1 799.3L1238.9 903.5M1108.8 792.2L1262.6 896.7M1136.2 785.2L1286.0 890.0M1163.3 778.3L1287.2 867.5M1190.0 771.5L1288.5 844.4M1216.5 764.8L1289.8 820.7M1242.6 758.1L1291.2 796.2M1268.4 751.5L1292.6 771.0" fill="none" stroke="#1a0800" stroke-width="0.9" stroke-opacity="0.8" />
<clipPath id="cof"><polygon points="996.0,821.0 1294.0,745.0 1286.0,890.0 1014.0,968.0"/></clipPath><g filter="url(#b4)" clip-path="url(#cof)"><polygon points="1014.0,968.0 1286.0,890.0 1287.0,868.0 1011.0,944.0" fill="#3a1a08" opacity="0.5"/>
</g>
<path d="M849 401L996 821L1014 968M996 821L1294 745" fill="none" stroke="#1a0800" stroke-width="1" stroke-opacity="0.9" />
<path d="M1643 516Q1636 536 1633 556" fill="none" stroke="#5a7494" stroke-width="16" stroke-linecap="round"/>
<path d="M1643 516Q1636 536 1633 556" fill="none" stroke="#0a0a14" stroke-width="16" stroke-opacity="0.3" stroke-dasharray="0.8 2"/>
<path d="M1645 514C1640 490 1660 476 1690 474L1707 480L1820 551C1845 568 1846 600 1834 617C1824 640 1800 654 1771 646L1649 526Z" fill="url(#gcap)"/>
<clipPath id="ccap"><path d="M1645 514C1640 490 1660 476 1690 474L1707 480L1820 551C1845 568 1846 600 1834 617C1824 640 1800 654 1771 646L1649 526Z"/></clipPath>
<path d="M1644.4 458.9L1872.1 585.4M1640.8 464.9L1867.3 593.2M1637.1 470.8L1862.4 601.1M1633.5 476.7L1857.6 608.9M1629.9 482.6L1852.7 616.8M1626.3 488.6L1847.9 624.6M1622.7 494.5L1843.0 632.5M1619.1 500.4L1838.2 640.3M1615.4 506.3L1833.4 648.2M1611.8 512.3L1828.5 656.0M1608.2 518.2L1823.7 663.8M1604.6 524.1L1818.8 671.7M1604.6 524.1L1603.7 531.9M1611.8 512.3L1609.1 535.7M1619.1 500.4L1614.6 539.6M1626.3 488.6L1620.3 543.5M1633.5 476.7L1626.0 547.5M1640.8 464.9L1631.8 551.6M1648.0 453.0L1637.7 555.8M1653.8 456.1L1643.7 560.0M1659.7 459.3L1649.8 564.3M1665.7 462.6L1656.1 568.7M1671.8 465.9L1662.4 573.1M1677.9 469.3L1668.9 577.7M1684.2 472.7L1675.5 582.3M1690.7 476.2L1682.2 587.0M1697.2 479.7L1689.0 591.8M1703.8 483.4L1696.0 596.7M1710.6 487.0L1703.1 601.6M1717.5 490.8L1710.3 606.7M1724.5 494.6L1717.7 611.9M1731.6 498.5L1725.2 617.2M1738.9 502.4L1732.8 622.5M1746.3 506.4L1740.6 628.0M1753.9 510.6L1748.6 633.6M1761.6 514.7L1756.8 639.3M1769.4 519.0L1765.1 645.2M1777.4 523.4L1773.5 651.1M1785.6 527.8L1782.2 657.2M1793.9 532.3L1791.0 663.4M1802.4 536.9L1800.1 669.7M1811.0 541.6L1809.3 676.2M1819.9 546.4L1818.8 671.7M1828.9 551.4L1828.5 656.0M1838.1 556.4L1838.2 640.3M1847.5 561.5L1847.9 624.6M1857.1 566.7L1857.6 608.9M1867.0 572.0L1867.3 593.2M1640.8 464.9L1653.8 456.1M1633.5 476.7L1659.7 459.3M1626.3 488.6L1665.7 462.6M1619.1 500.4L1671.8 465.9M1611.8 512.3L1677.9 469.3M1604.6 524.1L1684.2 472.7M1603.7 531.9L1690.7 476.2M1609.1 535.7L1697.2 479.7M1614.6 539.6L1703.8 483.4M1620.3 543.5L1710.6 487.0M1626.0 547.5L1717.5 490.8M1631.8 551.6L1724.5 494.6M1637.7 555.8L1731.6 498.5M1643.7 560.0L1738.9 502.4M1649.8 564.3L1746.3 506.4M1656.1 568.7L1753.9 510.6M1662.4 573.1L1761.6 514.7M1668.9 577.7L1769.4 519.0M1675.5 582.3L1777.4 523.4M1682.2 587.0L1785.6 527.8M1689.0 591.8L1793.9 532.3M1696.0 596.7L1802.4 536.9M1703.1 601.6L1811.0 541.6M1710.3 606.7L1819.9 546.4M1717.7 611.9L1828.9 551.4M1725.2 617.2L1838.1 556.4M1732.8 622.5L1847.5 561.5M1740.6 628.0L1857.1 566.7M1748.6 633.6L1867.0 572.0M1756.8 639.3L1877.0 577.5M1765.1 645.2L1867.3 593.2M1773.5 651.1L1857.6 608.9M1782.2 657.2L1847.9 624.6M1791.0 663.4L1838.2 640.3M1800.1 669.7L1828.5 656.0M1809.3 676.2L1818.8 671.7" fill="none" stroke="#0a0a14" stroke-width="0.8" stroke-opacity="0.7" clip-path="url(#ccap)"/>
<path d="M1818 616Q1848 632 1842 668Q1836 694 1821 712" fill="none" stroke="#5f7a9b" stroke-width="21"/><circle cx="1820" cy="713" r="10.5" fill="#5f7a9b"/>
<path d="M1818 616Q1848 632 1842 668Q1836 694 1821 712" fill="none" stroke="#0a0a14" stroke-width="21" stroke-opacity="0.3" stroke-dasharray="0.8 2"/>
<g stroke-width="1.6" fill="none"><path d="M843 1023L846 992" stroke="#6c6cf5"/><path d="M843 1023L829 1008" stroke="#3fae3f"/><path d="M843 1023L872 1018" stroke="#e0202a"/></g>
<circle cx="846" cy="992" r="2.4" fill="#6c6cf5"/><circle cx="829" cy="1008" r="2.4" fill="#3fae3f"/><circle cx="872" cy="1018" r="2.4" fill="#c01820"/>
<text x="838.5" y="984" font-family="Liberation Sans,sans-serif" font-size="27" font-style="italic" font-weight="bold" fill="#6f6ff8" textLength="15" lengthAdjust="spacingAndGlyphs">Z</text>
<text x="820" y="1006" font-family="Liberation Sans,sans-serif" font-size="17" font-style="italic" font-weight="bold" fill="#3fb63f" textLength="11" lengthAdjust="spacingAndGlyphs">Y</text>
<text x="875" y="1021" font-family="Liberation Sans,sans-serif" font-size="21" font-style="italic" font-weight="bold" fill="#e8181f" textLength="13" lengthAdjust="spacingAndGlyphs">X</text>
</svg>
<div class="a" style="left:762px;top:77px;width:1151px;height:1px;background:#cfcfcf;"></div>
<div class="a" style="left:762px;top:77px;width:1px;height:1028px;background:#e4e4e4;"></div>
<div class="a" style="left:773px;top:1071px;width:199px;height:27px;background:rgba(215,225,205,0.45);border:1px solid rgba(170,205,200,0.6);border-radius:3px;"></div>
<div class="t" style="left:781.0px;top:1078.8px;font-size:12px;color:rgba(120,160,150,0.65);letter-spacing:-0.637px;">faceGroupOnGeoFaces_0</div>
<div class="a" style="left:1765px;top:1077px;width:123px;height:30px;background:#0063a2;border-radius:3px 3px 0 0;"></div>
<svg style="left:1774px;top:1085px" width="25" height="18" viewBox="0 0 25 18"><path d="M12,0.5C18.5,0.5 24,3.6 24,8C24,10.2 22.6,12 20.5,13.3L23.5,16.5L17,14.6C15.5,15 13.8,15.2 12,15.2C5.5,15.2 0.5,12 0.5,8C0.5,3.6 5.5,0.5 12,0.5Z" fill="#fff"/><rect x="5.5" y="4.6" width="13.5" height="8" rx="1" fill="#0063a2"/><rect x="13" y="3.4" width="4" height="2" fill="#0063a2"/><circle cx="12.4" cy="8.6" r="2.4" fill="none" stroke="#fff" stroke-width="1.1"/></svg>
<div class="t" style="left:1808.5px;top:1088.2px;font-size:11.6px;color:#fff;letter-spacing:0.176px;">Report a bug</div>
<!-- sec_nav -->
<div class="a" style="left:0px;top:0px;width:1913px;height:48px;border-bottom:1px solid #e7e7e7;box-sizing:content-box;border-radius:0 0 4px 4px;"></div>
<svg style="left:6px;top:7px" width="32" height="32" viewBox="0 0 32 32">
<path d="M4,0H32V28a4,4 0 0 1 -4,4H0V4a4,4 0 0 1 4,-4Z" fill="#3b3836"/>
<path d="M0,23.2Q16,18 22.3,0H32V8.6Q22,23 0,27.6Z" fill="#0e76ad" stroke="#fff" stroke-width="1.3"/>
<path d="M4.5,32Q22,28 32,18.6" fill="none" stroke="#fff" stroke-width="1"/>
</svg>
<svg style="left:55px;top:10px" width="18" height="22" viewBox="0 0 18 22">
<path d="M4,11V7a5,5 0 0 1 10,0V11" fill="none" stroke="#1779aa" stroke-width="3.4"/>
<rect x="0" y="10.2" width="18" height="11.8" rx="1.5" fill="#1779aa"/>
</svg>
<div class="t" style="left:80.5px;top:14.4px;font-size:18.4px;color:#1779aa;letter-spacing:0.328px;">PCB - thermal stress analysis</div>
<svg style="left:376px;top:15px" width="18" height="14" viewBox="0 0 18 14"><rect x="0.0" y="0" width="5.3" height="4" rx="0.8" fill="#3b3836"/><rect x="6.3" y="0" width="5.3" height="4" rx="0.8" fill="#3b3836"/><rect x="12.6" y="0" width="5.3" height="4" rx="0.8" fill="#3b3836"/><rect x="0.0" y="5" width="5.3" height="4" rx="0.8" fill="#3b3836"/><rect x="6.3" y="5" width="5.3" height="4" rx="0.8" fill="#3b3836"/><rect x="12.6" y="5" width="5.3" height="4" rx="0.8" fill="#3b3836"/><rect x="0.0" y="10" width="5.3" height="4" rx="0.8" fill="#3b3836"/><rect x="6.3" y="10" width="5.3" height="4" rx="0.8" fill="#3b3836"/><rect x="12.6" y="10" width="5.3" height="4" rx="0.8" fill="#3b3836"/></svg>
<div class="t" style="left:401.3px;top:15.1px;font-size:14px;color:#333;letter-spacing:-0.601px;">Mesh Creator</div>
<div class="a" style="left:366px;top:35px;width:124px;height:3px;background:#1779aa;"></div>
<div class="a" style="left:497px;top:0px;width:149px;height:40px;border:2px solid #f0141e;box-sizing:border-box;"></div>
<svg style="left:502px;top:14px" width="20" height="17" viewBox="0 0 20 17">
<g fill="none" stroke="#3b3836">
<circle cx="6.5" cy="8.5" r="3.6" stroke-width="2.6"/>
<circle cx="6.5" cy="8.5" r="5.6" stroke-width="2" stroke-dasharray="2.2 2.2"/>
<circle cx="15.5" cy="3.6" r="1.7" stroke-width="1.5"/>
<circle cx="15.5" cy="3.6" r="2.9" stroke-width="1.2" stroke-dasharray="1.2 1.1"/>
<circle cx="15.5" cy="13.2" r="1.7" stroke-width="1.5"/>
<circle cx="15.5" cy="13.2" r="2.9" stroke-width="1.2" stroke-dasharray="1.2 1.1"/>
</g></svg>
<div class="t" style="left:528.3px;top:15.1px;font-size:14px;color:#333;letter-spacing:-0.588px;">Simulation Designer</div>
<svg style="left:664px;top:15px" width="16" height="15" viewBox="0 0 16 15">
<circle cx="8" cy="7.5" r="5.6" fill="#3b3836"/>
<circle cx="8" cy="7.5" r="6.6" fill="none" stroke="#3b3836" stroke-width="1.8" stroke-dasharray="1.7 1.75"/>
</svg>
<div class="t" style="left:687.5px;top:15.1px;font-size:14px;color:#333;letter-spacing:-0.707px;">Post-Processor</div>
<div class="t" style="left:773.0px;top:5.3px;font-size:8.6px;color:#3c9a3c;letter-spacing:-0.108px;">BETA</div>
<div class="t" style="left:1376.2px;top:15.7px;font-size:14px;color:#333;letter-spacing:-0.736px;">Dashboard</div>
<div class="t" style="left:1458.8px;top:15.7px;font-size:14px;color:#333;letter-spacing:-0.550px;">Public Projects</div>
<div class="t" style="left:1563.6px;top:15.7px;font-size:14px;color:#333;letter-spacing:-0.712px;">Forum</div>
<div class="t" style="left:1621.2px;top:15.7px;font-size:14px;color:#333;letter-spacing:-0.664px;">Help</div>
<div class="a" style="left:1653px;top:22px;width:0;height:0;border-left:4.0px solid transparent;border-right:4.0px solid transparent;border-top:4px solid #333;"></div>
<div class="t" style="left:1735.0px;top:15.7px;font-size:14px;color:#333;letter-spacing:-0.803px;">ahmedhussain18</div>
<div class="a" style="left:1836px;top:22px;width:0;height:0;border-left:4.0px solid transparent;border-right:4.0px solid transparent;border-top:4px solid #333;"></div>
<div class="a" style="left:1870px;top:22px;width:0;height:0;border-left:4.0px solid transparent;border-right:4.0px solid transparent;border-top:4px solid #333;"></div>
<!-- sec_left -->
<div class="a" style="left:266px;top:49px;width:4px;height:1056px;background:#e7e7e7;"></div>
<div class="t" style="left:265.5px;top:576.1px;font-size:7px;color:#444;">||</div>
<div class="a" style="left:-3px;top:56px;width:148px;height:27px;border:1px solid #1779aa;border-radius:3px;"></div>
<svg style="left:9px;top:65px" width="12" height="10" viewBox="0 0 12 10"><path d="M6,0L9.6,3.8H7.4V6.6H4.6V3.8H2.4Z" fill="#1779aa"/><path d="M0,6.6H3.4V7.8H8.6V6.6H12V10H0Z" fill="#1779aa"/></svg>
<div class="a" style="left:26px;top:69.3px;width:0;height:0;border-left:3.5px solid transparent;border-right:3.5px solid transparent;border-top:3.6px solid #1779aa;"></div>
<div class="t" style="left:36.6px;top:64.1px;font-size:11.6px;color:#1779aa;letter-spacing:0.081px;">Upload CAD/mesh</div>
<div class="a" style="left:148px;top:56px;width:86px;height:27px;border:1px solid #1779aa;border-radius:3px;"></div>
<svg style="left:159px;top:65px" width="12" height="10" viewBox="0 0 12 10"><path d="M6,6.4L2.4,2.8H4.6V0H7.4V2.8H9.6Z" fill="#1779aa"/><path d="M0,6.6H2.6L4.4,8.2H7.6L9.4,6.6H12V10H0Z" fill="#1779aa"/></svg>
<div class="a" style="left:175.6px;top:69.3px;width:0;height:0;border-left:3.5px solid transparent;border-right:3.5px solid transparent;border-top:3.6px solid #1779aa;"></div>
<div class="t" style="left:187.0px;top:64.1px;font-size:11.6px;color:#1779aa;letter-spacing:0.565px;">Import</div>
<div class="a" style="left:0px;top:91px;width:266px;height:1px;background:#e5e5e5;"></div>
<div class="a" style="left:2px;top:107px;width:9px;height:9px;border:1px solid #8a8ad2;border-radius:2px;background:#fff;"><div class="a" style="left:1px;top:2.7px;width:5px;height:1.6px;background:#1a1ab4;"></div></div>
<div class="t" style="left:17.2px;top:103.6px;font-size:13px;color:#222;">Geometries</div>
<div class="a" style="left:18px;top:125px;width:9px;height:9px;border:1px solid #8a8ad2;border-radius:2px;background:#fff;"><div class="a" style="left:1px;top:2.7px;width:5px;height:1.6px;background:#1a1ab4;"></div><div class="a" style="left:2.7px;top:1px;width:1.6px;height:5px;background:#1a1ab4;"></div></div>
<div class="t" style="left:33.2px;top:121.7px;font-size:13px;color:#222;">pcb-simplified</div>
<div class="a" style="left:2px;top:143px;width:9px;height:9px;border:1px solid #8a8ad2;border-radius:2px;background:#fff;"><div class="a" style="left:1px;top:2.7px;width:5px;height:1.6px;background:#1a1ab4;"></div></div>
<div class="t" style="left:17.2px;top:139.7px;font-size:13px;color:#222;">Meshes</div>
<div class="a" style="left:18px;top:161px;width:9px;height:9px;border:1px solid #8a8ad2;border-radius:2px;background:#fff;"><div class="a" style="left:1px;top:2.7px;width:5px;height:1.6px;background:#1a1ab4;"></div></div>
<div class="t" style="left:33.2px;top:157.7px;font-size:13px;color:#222;">pcb-simplified - auto_mesh</div>
<div class="a" style="left:34.2px;top:180px;width:11px;height:11px;border-radius:6px;background:#1779aa;"></div>
<div class="t" style="left:48.9px;top:178.9px;font-size:13px;color:#222;">Topological Entity Sets</div>
<div class="a" style="left:34px;top:203px;width:9px;height:9px;border:1px solid #8a8ad2;border-radius:2px;background:#fff;"><div class="a" style="left:1px;top:2.7px;width:5px;height:1.6px;background:#1a1ab4;"></div></div>
<div class="t" style="left:49.2px;top:199.8px;font-size:13px;color:#222;">Mesh Operations</div>
<div class="a" style="left:50px;top:221px;width:9px;height:9px;border:1px solid #8a8ad2;border-radius:2px;background:#fff;"><div class="a" style="left:1px;top:2.7px;width:5px;height:1.6px;background:#1a1ab4;"></div></div>
<div class="t" style="left:65.2px;top:217.8px;font-size:13px;color:#222;">Operation 1</div>
<svg style="left:66.2px;top:240px" width="11" height="11" viewBox="0 0 11 11"><circle cx="5.5" cy="5.5" r="5.5" fill="#0b7d0b"/><path d="M2.8,5.6L4.8,7.6L8.3,3.9" fill="none" stroke="#fff" stroke-width="1.7"/></svg>
<div class="t" style="left:80.9px;top:238.7px;font-size:13px;color:#222;">Meshing Log</div>
<div class="a" style="left:18px;top:263px;width:9px;height:9px;border:1px solid #8a8ad2;border-radius:2px;background:#fff;"><div class="a" style="left:1px;top:2.7px;width:5px;height:1.6px;background:#1a1ab4;"></div></div>
<div class="t" style="left:33.2px;top:259.7px;font-size:13px;color:#222;">pcb-simplified - ref_mesh</div>
<svg style="left:34.2px;top:282px" width="11" height="11" viewBox="0 0 11 11"><circle cx="5.5" cy="5.5" r="5.5" fill="#0b7d0b"/><path d="M2.8,5.6L4.8,7.6L8.3,3.9" fill="none" stroke="#fff" stroke-width="1.7"/></svg>
<div class="t" style="left:48.9px;top:280.5px;font-size:13px;color:#222;">Topological Entity Sets</div>
<div class="a" style="left:34px;top:305px;width:9px;height:9px;border:1px solid #8a8ad2;border-radius:2px;background:#fff;"><div class="a" style="left:1px;top:2.7px;width:5px;height:1.6px;background:#1a1ab4;"></div></div>
<div class="t" style="left:49.2px;top:301.7px;font-size:13px;color:#222;">Mesh Operations</div>
<div class="a" style="left:50px;top:323px;width:9px;height:9px;border:1px solid #8a8ad2;border-radius:2px;background:#fff;"><div class="a" style="left:1px;top:2.7px;width:5px;height:1.6px;background:#1a1ab4;"></div></div>
<div class="t" style="left:62.4px;top:319.4px;font-size:13px;color:#1779aa;font-weight:bold;text-decoration:underline;"> Operation 1</div>
<div class="a" style="left:66px;top:341px;width:9px;height:9px;border:1px solid #8a8ad2;border-radius:2px;background:#fff;"><div class="a" style="left:1px;top:2.7px;width:5px;height:1.6px;background:#1a1ab4;"></div></div>
<div class="t" style="left:81.2px;top:337.5px;font-size:13px;color:#222;">Mesh Refinements</div>
<svg style="left:82.2px;top:360px" width="11" height="11" viewBox="0 0 11 11"><circle cx="5.5" cy="5.5" r="5.5" fill="#0b7d0b"/><path d="M2.8,5.6L4.8,7.6L8.3,3.9" fill="none" stroke="#fff" stroke-width="1.7"/></svg>
<div class="t" style="left:96.9px;top:358.6px;font-size:13px;color:#222;">Resistors refinement</div>
<svg style="left:82.2px;top:384px" width="11" height="11" viewBox="0 0 11 11"><circle cx="5.5" cy="5.5" r="5.5" fill="#0b7d0b"/><path d="M2.8,5.6L4.8,7.6L8.3,3.9" fill="none" stroke="#fff" stroke-width="1.7"/></svg>
<div class="t" style="left:96.9px;top:382.6px;font-size:13px;color:#222;">Contact regions refinement</div>
<svg style="left:82.2px;top:408px" width="11" height="11" viewBox="0 0 11 11"><circle cx="5.5" cy="5.5" r="5.5" fill="#0b7d0b"/><path d="M2.8,5.6L4.8,7.6L8.3,3.9" fill="none" stroke="#fff" stroke-width="1.7"/></svg>
<div class="t" style="left:96.9px;top:406.6px;font-size:13px;color:#222;">Capacitors refinement</div>
<svg style="left:82.2px;top:432px" width="11" height="11" viewBox="0 0 11 11"><circle cx="5.5" cy="5.5" r="5.5" fill="#0b7d0b"/><path d="M2.8,5.6L4.8,7.6L8.3,3.9" fill="none" stroke="#fff" stroke-width="1.7"/></svg>
<div class="t" style="left:96.9px;top:430.6px;font-size:13px;color:#222;">Board refinement</div>
<svg style="left:66.2px;top:456px" width="11" height="11" viewBox="0 0 11 11"><circle cx="5.5" cy="5.5" r="5.5" fill="#0b7d0b"/><path d="M2.8,5.6L4.8,7.6L8.3,3.9" fill="none" stroke="#fff" stroke-width="1.7"/></svg>
<div class="t" style="left:80.9px;top:454.6px;font-size:13px;color:#222;">Meshing Log</div>
<div class="a" style="left:-1px;top:910px;width:266px;height:200px;background:#fff;border:1px solid #ddd;border-radius:4px 4px 0 0;"></div>
<div class="a" style="left:0px;top:911px;width:264px;height:39px;background:#f5f5f5;border-bottom:1px solid #ddd;border-radius:3px 3px 0 0;"></div>
<div class="t" style="left:14.2px;top:922.9px;font-size:14px;color:#1f84b6;letter-spacing:-0.839px;">Job Status</div>
<div class="a" style="left:0px;top:950px;width:262.5px;height:24.5px;background:#e8e8e8;"></div>
<div class="a" style="left:262.5px;top:950px;width:1px;height:160px;background:#e3e3e3;"></div>
<div class="t" style="left:15.0px;top:955.8px;font-size:13px;color:#333;font-weight:bold;letter-spacing:-0.069px;">Name</div>
<div class="t" style="left:112.6px;top:955.8px;font-size:13px;color:#333;font-weight:bold;letter-spacing:-0.026px;">Status</div>
<div class="t" style="left:74.2px;top:977.2px;font-size:14px;color:#333;letter-spacing:-0.524px;">no entities available</div>
<!-- sec_mid -->
<div class="a" style="left:739px;top:49px;width:15px;height:1056px;background:#f1f1f1;"></div>
<div class="a" style="left:741px;top:63px;width:11px;height:637px;background:#c1c1c1;"></div>
<div class="a" style="left:742.5px;top:54px;width:0;height:0;border-left:4px solid transparent;border-right:4px solid transparent;border-bottom:4px solid #a3a3a3;"></div>
<div class="a" style="left:743.5px;top:1099px;width:0;height:0;border-left:3.5px solid transparent;border-right:3.5px solid transparent;border-top:4px solid #505050;"></div>
<div class="a" style="left:754px;top:49px;width:5px;height:1056px;background:#e7e7e7;"></div>
<div class="t" style="left:753.8px;top:576.1px;font-size:7px;color:#444;">||</div>
<div class="t" style="left:284.5px;top:58.3px;font-size:25.6px;color:#333;letter-spacing:-0.395px;">Mesh Operation</div>
<div class="a" style="left:696px;top:54px;width:33px;height:33px;border:1px solid #1779aa;border-radius:17px;"></div>
<div class="t" style="left:709.5px;top:64.3px;font-size:13px;color:#1779aa;font-weight:bold;">?</div>
<div class="a" style="left:284px;top:91px;width:440px;height:1px;background:#e5e5e5;"></div>
<div class="a" style="left:284px;top:112px;width:60px;height:27px;background:#1779aa;border-radius:3px;"></div>
<div class="a" style="left:294px;top:120px;width:0;height:0;border-top:5.5px solid transparent;border-bottom:5.5px solid transparent;border-left:9.5px solid #fff;"></div>
<div class="t" style="left:306.4px;top:119.6px;font-size:12.6px;color:#fff;letter-spacing:-0.002px;">Start</div>
<div class="a" style="left:349px;top:112px;width:59px;height:27px;background:#f5c98b;border-radius:3px;"></div>
<div class="a" style="left:359.5px;top:120.5px;width:10.5px;height:10.5px;background:#fff;"></div>
<div class="t" style="left:372.4px;top:119.6px;font-size:12.6px;color:#fff;letter-spacing:-0.607px;">Stop</div>
<div class="t" style="left:284.0px;top:184.9px;font-size:17.8px;color:#333;letter-spacing:-0.045px;">Settings</div>
<div class="t" style="left:284.0px;top:241.1px;font-size:14px;color:#333;letter-spacing:-1.282px;">Name</div>
<div class="a" style="left:519px;top:239px;width:205px;height:34px;border:1px solid #ccc;border-radius:4px;background:#fff;box-shadow:inset 0 1px 1px rgba(0,0,0,.075);"></div>
<div class="t" style="left:532.0px;top:250.3px;font-size:13px;color:#555;">Operation 1</div>
<div class="t" style="left:284.0px;top:279.9px;font-size:14px;color:#333;letter-spacing:-0.647px;">Last modified</div>
<div class="t" style="left:519.0px;top:280.3px;font-size:13px;color:#222;">2016-05-27 18:04</div>
<div class="t" style="left:283.6px;top:349.1px;font-size:17.8px;color:#333;letter-spacing:-0.313px;">Type</div>
<div class="a" style="left:284px;top:403px;width:440px;height:300px;border:1px solid #ccc;background:#fff;"></div>
<div class="a" style="left:285px;top:480px;width:438px;height:38px;background:#0074a9;"></div>
<div class="a" style="left:292.5px;top:416.0px;width:12px;height:12px;border-radius:6px;border:1px solid #9a9a9a;background:linear-gradient(#f4f4f4,#d8d8d8);"></div>
<div class="t" style="left:306.6px;top:416.0px;font-size:13px;color:#222;">Tetrahedral automatic</div>
<div class="a" style="left:292.5px;top:454.0px;width:12px;height:12px;border-radius:6px;border:1px solid #9a9a9a;background:linear-gradient(#f4f4f4,#d8d8d8);"></div>
<div class="t" style="left:306.6px;top:454.0px;font-size:13px;color:#222;">Tetrahedral parametric</div>
<div class="a" style="left:292.5px;top:492.0px;width:12px;height:12px;border-radius:6px;border:1px solid #9a9a9a;background:linear-gradient(#f4f4f4,#d8d8d8);"><div class="a" style="left:2.5px;top:2.5px;width:5px;height:5px;border-radius:3px;background:#333;"></div></div>
<div class="t" style="left:306.6px;top:492.0px;font-size:13px;color:#fff;">Tetrahedral with local refinements</div>
<div class="a" style="left:292.5px;top:530.0px;width:12px;height:12px;border-radius:6px;border:1px solid #9a9a9a;background:linear-gradient(#f4f4f4,#d8d8d8);"></div>
<div class="t" style="left:306.6px;top:530.0px;font-size:13px;color:#222;">Tetrahedral with layer refinements</div>
<div class="a" style="left:292.5px;top:568.0px;width:12px;height:12px;border-radius:6px;border:1px solid #9a9a9a;background:linear-gradient(#f4f4f4,#d8d8d8);"></div>
<div class="t" style="left:306.6px;top:568.0px;font-size:13px;color:#222;">Hex-dominant automatic for internal flow (only CFD)</div>
<div class="a" style="left:292.5px;top:606.0px;width:12px;height:12px;border-radius:6px;border:1px solid #9a9a9a;background:linear-gradient(#f4f4f4,#d8d8d8);"></div>
<div class="t" style="left:306.6px;top:606.0px;font-size:13px;color:#222;">Hex-dominant automatic for external flow (only CFD)</div>
<div class="a" style="left:292.5px;top:644.0px;width:12px;height:12px;border-radius:6px;border:1px solid #9a9a9a;background:linear-gradient(#f4f4f4,#d8d8d8);"></div>
<div class="t" style="left:306.6px;top:644.0px;font-size:13px;color:#222;">Hex-dominant parametric (only CFD)</div>
<div class="a" style="left:287.3px;top:723px;width:0;height:0;border-left:5.25px solid transparent;border-right:5.25px solid transparent;border-top:9.5px solid #555;"></div>
<div class="t" style="left:300.3px;top:719.6px;font-size:13px;color:#222;font-style:italic;">Properties</div>
<div class="a" style="left:290px;top:736px;width:434px;height:311.5px;background:#fafafa;border:1px solid #eee;border-left:3px solid #e8e8e8;"></div>
<div class="t" style="left:300.8px;top:743.0px;font-size:14px;color:#333;letter-spacing:-0.729px;">Maximum mesh edge length [m]</div>
<div class="t" style="left:300.8px;top:782.0px;font-size:14px;color:#333;letter-spacing:-0.672px;">Minimal mesh edge length [m]</div>
<div class="t" style="left:300.8px;top:821.0px;font-size:14px;color:#333;letter-spacing:-0.668px;">Specify the desired mesh order</div>
<div class="t" style="left:300.8px;top:860.0px;font-size:14px;color:#333;letter-spacing:-0.772px;">NETGEN3D fineness parameter</div>
<div class="t" style="left:300.8px;top:899.0px;font-size:14px;color:#333;letter-spacing:-0.532px;">Activate NETGEN3D optimization</div>
<div class="t" style="left:300.8px;top:938.0px;font-size:14px;color:#333;letter-spacing:-0.713px;">Parallel Processing</div>
<div class="a" style="left:527px;top:741px;width:196px;height:34px;border:1px solid #ccc;border-radius:4px;background:#fff;box-shadow:inset 0 1px 1px rgba(0,0,0,.075);"></div>
<div class="t" style="left:539.7px;top:751.4px;font-size:13px;color:#555;">0.001</div>
<div class="a" style="left:527px;top:780px;width:196px;height:34px;border:1px solid #ccc;border-radius:4px;background:#fff;box-shadow:inset 0 1px 1px rgba(0,0,0,.075);"></div>
<div class="t" style="left:539.7px;top:790.4px;font-size:13px;color:#555;">0.0005</div>
<div class="a" style="left:527px;top:819px;width:196px;height:34px;border:1px solid #ccc;border-radius:4px;background:#fff;box-shadow:inset 0 1px 1px rgba(0,0,0,.075);"></div>
<div class="t" style="left:544.0px;top:829.4px;font-size:13px;color:#555;">First order</div>
<div class="a" style="left:710.4px;top:832.5px;width:0;height:0;border-left:2.8px solid transparent;border-right:2.8px solid transparent;border-top:5px solid #333;"></div>
<div class="a" style="left:527px;top:858px;width:196px;height:34px;border:1px solid #ccc;border-radius:4px;background:#fff;box-shadow:inset 0 1px 1px rgba(0,0,0,.075);"></div>
<div class="t" style="left:544.0px;top:868.4px;font-size:13px;color:#555;">3 - Moderate</div>
<div class="a" style="left:710.4px;top:871.5px;width:0;height:0;border-left:2.8px solid transparent;border-right:2.8px solid transparent;border-top:5px solid #333;"></div>
<div class="a" style="left:527px;top:897px;width:196px;height:34px;border:1px solid #ccc;border-radius:4px;background:#fff;box-shadow:inset 0 1px 1px rgba(0,0,0,.075);"></div>
<div class="t" style="left:544.0px;top:907.4px;font-size:13px;color:#555;">true</div>
<div class="a" style="left:710.4px;top:910.5px;width:0;height:0;border-left:2.8px solid transparent;border-right:2.8px solid transparent;border-top:5px solid #333;"></div>
<div class="a" style="left:303.8px;top:966px;width:0;height:0;border-left:5.25px solid transparent;border-right:5.25px solid transparent;border-top:9.5px solid #555;"></div>
<div class="t" style="left:317.4px;top:962.7px;font-size:13px;color:#222;font-style:italic;">Properties</div>
<div class="a" style="left:307px;top:979.5px;width:416px;height:48px;background:#f5f5f5;border:1px solid #eee;border-left:3px solid #e3e3e3;"></div>
<div class="t" style="left:317.6px;top:985.7px;font-size:14px;color:#333;letter-spacing:-0.599px;">Number of computing cores</div>
<div class="a" style="left:535px;top:984.5px;width:186.5px;height:33.5px;border:1px solid #ccc;border-radius:4px;background:#fff;box-shadow:inset 0 1px 1px rgba(0,0,0,.075);"></div>
<div class="t" style="left:552.0px;top:994.5px;font-size:13px;color:#555;">32</div>
<div class="a" style="left:708.9px;top:998.0px;width:0;height:0;border-left:2.8px solid transparent;border-right:2.8px solid transparent;border-top:5px solid #333;"></div>
<div class="a" style="left:574px;top:1069px;width:35px;height:29.5px;background:#ccc;"></div>
<svg style="left:584px;top:1079px" width="15" height="10" viewBox="0 0 15 10"><path d="M2,2L7.5,7.5L13,2" fill="none" stroke="#fff" stroke-width="2.6"/></svg>
<div class="t" style="left:284.0px;top:1091.4px;font-size:17.6px;color:#333;letter-spacing:-0.015px;">Mesh Refinements</div>
<!-- sec_toolbar -->
<div class="a" style="left:765px;top:52px;width:67px;height:22px;border:1px solid #1779aa;border-radius:3px;background:#fff;overflow:hidden;"></div>
<div class="a" style="left:787px;top:52px;width:1px;height:22px;background:#1779aa;"></div>
<div class="a" style="left:809px;top:52px;width:1px;height:22px;background:#1779aa;"></div>
<svg style="left:770px;top:57px" width="13" height="13" viewBox="0 0 13 13"><circle cx="5.2" cy="5.2" r="4" fill="none" stroke="#1779aa" stroke-width="1.7"/><path d="M8.2,8.2L12,12" stroke="#1779aa" stroke-width="2.2" stroke-linecap="round"/><path d="M3,5.2H7.4" stroke="#1779aa" stroke-width="1.3"/><path d="M5.2,3V7.4" stroke="#1779aa" stroke-width="1.3"/></svg>
<svg style="left:792px;top:57px" width="13" height="13" viewBox="0 0 13 13"><circle cx="5.2" cy="5.2" r="4" fill="none" stroke="#1779aa" stroke-width="1.7"/><path d="M8.2,8.2L12,12" stroke="#1779aa" stroke-width="2.2" stroke-linecap="round"/><path d="M3,5.2H7.4" stroke="#1779aa" stroke-width="1.3"/></svg>
<svg style="left:814px;top:57px" width="13" height="13" viewBox="0 0 13 13"><path d="M1.6,5.6A5,5 0 0 1 10.4,3.2" fill="none" stroke="#1779aa" stroke-width="2"/><path d="M12.4,0.6V5.2H7.8Z" fill="#1779aa"/><path d="M11.4,7.4A5,5 0 0 1 2.6,9.8" fill="none" stroke="#1779aa" stroke-width="2"/><path d="M0.6,12.4V7.8H5.2Z" fill="#1779aa"/></svg>
<div class="a" style="left:842px;top:54px;width:1.3px;height:17.5px;background:#a99f98;"></div>
<div class="a" style="left:853px;top:52px;width:87px;height:22px;border:1px solid #1779aa;border-radius:3px;"></div>
<div class="t" style="left:859.2px;top:57.5px;font-size:12.2px;color:#1779aa;letter-spacing:0.082px;">Orientation</div>
<div class="a" style="left:927px;top:61.5px;width:0;height:0;border-left:3.5px solid transparent;border-right:3.5px solid transparent;border-top:3.6px solid #1779aa;"></div>
<div class="a" style="left:951px;top:54px;width:1.3px;height:17.5px;background:#a99f98;"></div>
<div class="a" style="left:959px;top:53px;width:161px;height:21.5px;border:1px solid #1779aa;border-radius:3px;"></div>
<div class="t" style="left:964.2px;top:58.0px;font-size:13px;color:#222;letter-spacing:-0.034px;">surfaces with wireframe</div>
<div class="a" style="left:1107.3px;top:61px;width:0;height:0;border-left:2.8px solid transparent;border-right:2.8px solid transparent;border-top:5px solid #333;"></div>
<div class="a" style="left:1123px;top:52px;width:93px;height:22px;border:1px solid #1779aa;border-radius:3px;background:#fff;overflow:hidden;"></div>
<div class="a" style="left:1146px;top:52px;width:24px;height:22px;background:linear-gradient(#d2d2d2,#e2e2e2);border:1px solid #aaa;"></div>
<div class="a" style="left:1192px;top:52px;width:1px;height:22px;background:#1779aa;"></div>
<svg style="left:1123.0px;top:48px" width="23" height="26" viewBox="0 0 23 26"><polygon points="11.4,10.2 6.7,17.8 8,20.9 17.1,18.8" fill="#ff0000"/><path d="M11.4,10.2L6.7,17.8L8,20.9L17.1,18.8Z" fill="none" stroke="#111" stroke-width="0.9" stroke-linejoin="round"/><circle cx="6.7" cy="17.8" r="1.05" fill="#000"/><circle cx="8" cy="20.9" r="1.05" fill="#000"/><circle cx="17.1" cy="18.8" r="1.05" fill="#000"/></svg>
<svg style="left:1146.1px;top:48px" width="23" height="26" viewBox="0 0 23 26"><polygon points="11.4,10.2 8,20.9 12.55,19.55" fill="#ff0000"/><path d="M11.4,10.2L6.7,17.8L8,20.9L17.1,18.8Z" fill="none" stroke="#111" stroke-width="0.9" stroke-linejoin="round"/><path d="M11.4,10.2L8,20.9M6.7,17.8L17.1,18.8" fill="none" stroke="#111" stroke-width="0.7"/><circle cx="6.7" cy="17.8" r="1.05" fill="#000"/><circle cx="8" cy="20.9" r="1.05" fill="#000"/><circle cx="17.1" cy="18.8" r="1.05" fill="#000"/></svg>
<svg style="left:1169.2px;top:48px" width="23" height="26" viewBox="0 0 23 26"><path d="M11.4,10.2L6.7,17.8L8,20.9L17.1,18.8Z" fill="none" stroke="#111" stroke-width="0.9" stroke-linejoin="round"/><path d="M11.4,10.2L8,20.9M6.7,17.8L17.1,18.8" fill="none" stroke="#111" stroke-width="0.7"/><path d="M11.1,11.7L8.2,19.4" stroke="#ff2020" stroke-width="1"/><circle cx="6.7" cy="17.8" r="1.05" fill="#000"/><circle cx="8" cy="20.9" r="1.05" fill="#000"/><circle cx="17.1" cy="18.8" r="1.05" fill="#000"/></svg>
<svg style="left:1192.3px;top:48px" width="23" height="26" viewBox="0 0 23 26"><path d="M11.4,10.2L6.7,17.8L8,20.9L17.1,18.8Z" fill="none" stroke="#111" stroke-width="0.9" stroke-linejoin="round"/><path d="M11.4,10.2L8,20.9M6.7,17.8L17.1,18.8" fill="none" stroke="#111" stroke-width="0.7"/><circle cx="6.7" cy="17.8" r="1.05" fill="#000"/><circle cx="8" cy="20.9" r="1.05" fill="#000"/><circle cx="17.1" cy="18.8" r="1.05" fill="#000"/><circle cx="11.5" cy="12.2" r="2.5" fill="#ff0000"/></svg>
<div class="a" style="left:1226px;top:54px;width:1.3px;height:17.5px;background:#a99f98;"></div>
<div class="a" style="left:1237px;top:52px;width:74px;height:22px;border:1px solid #1779aa;border-radius:3px;"></div>
<div class="t" style="left:1243.2px;top:57.5px;font-size:12.2px;color:#1779aa;letter-spacing:-0.299px;">Selection</div>
<div class="a" style="left:1297.5px;top:61.5px;width:0;height:0;border-left:3.5px solid transparent;border-right:3.5px solid transparent;border-top:3.6px solid #1779aa;"></div>
<div class="a" style="left:1317px;top:52px;width:47px;height:22px;border:1px solid #1779aa;border-radius:3px;background:#fff;overflow:hidden;"></div>
<div class="a" style="left:1340px;top:52px;width:1px;height:22px;background:#1779aa;"></div>
<svg style="left:1321.5px;top:58px" width="15" height="10" viewBox="0 0 15 10"><path d="M0.6,5Q7.5,-3.6 14.4,5Q7.5,13.6 0.6,5Z" fill="#1779aa"/><circle cx="7.5" cy="4.6" r="3.1" fill="#fff"/><circle cx="7.5" cy="4.6" r="1.9" fill="#1779aa"/><path d="M10.6,-0.6L5,10.6" stroke="#fff" stroke-width="2.2"/><path d="M10,-0.6L4.4,10.6" stroke="#1779aa" stroke-width="1"/></svg>
<svg style="left:1344.5px;top:58px" width="15" height="10" viewBox="0 0 15 10"><path d="M0.6,5Q7.5,-3.6 14.4,5Q7.5,13.6 0.6,5Z" fill="#1779aa"/><circle cx="7.5" cy="4.6" r="3.1" fill="#fff"/><circle cx="7.5" cy="4.6" r="1.9" fill="#1779aa"/></svg>
<div class="a" style="left:1375px;top:54px;width:1.3px;height:17.5px;background:#a99f98;"></div>
<div class="a" style="left:1383px;top:52px;width:66px;height:22px;border:1px solid #1779aa;border-radius:3px;"></div>
<div class="t" style="left:1389.0px;top:57.5px;font-size:12.2px;color:#1779aa;letter-spacing:-0.265px;">Create set</div>
<div class="a" style="left:1453px;top:52px;width:54px;height:22px;border:1px solid #1779aa;border-radius:3px;"></div>
<div class="t" style="left:1459.2px;top:57.5px;font-size:12.2px;color:#1779aa;letter-spacing:0.598px;">Filter</div>
<div class="a" style="left:1493.6px;top:61.5px;width:0;height:0;border-left:3.5px solid transparent;border-right:3.5px solid transparent;border-top:3.6px solid #1779aa;"></div>
<!-- sec_tree -->
<div class="a" style="left:1638px;top:115px;width:240.5px;height:398.5px;background:rgba(238,244,238,0.86);border:1px solid rgba(190,225,225,0.9);border-radius:4px;"></div>
<div class="a" style="left:1651px;top:129px;width:9px;height:9px;border:1px solid #5a5ab8;border-radius:2px;background:rgba(255,255,255,0.7);"><div class="a" style="left:1px;top:2.7px;width:5px;height:1.6px;background:#1a1ab4;"></div></div>
<div class="t" style="left:1663.3px;top:127.2px;font-size:11px;color:#3f819d;">Scene</div>
<div class="a" style="left:1667px;top:148px;width:9px;height:9px;border:1px solid #5a5ab8;border-radius:2px;background:rgba(255,255,255,0.7);"><div class="a" style="left:1px;top:2.7px;width:5px;height:1.6px;background:#1a1ab4;"></div></div>
<div class="t" style="left:1678.7px;top:145.9px;font-size:11px;color:#3f819d;">pcb-simplified - ref_mesh</div>
<div class="a" style="left:1683px;top:168px;width:9px;height:9px;border:1px solid #5a5ab8;border-radius:2px;background:rgba(255,255,255,0.7);"><div class="a" style="left:1px;top:2.7px;width:5px;height:1.6px;background:#1a1ab4;"></div><div class="a" style="left:2.7px;top:1px;width:1.6px;height:5px;background:#1a1ab4;"></div></div>
<svg style="left:1696.5px;top:168px" width="12" height="8" viewBox="0 0 12 8"><path d="M0.3,4Q6,-3 11.7,4Q6,11 0.3,4Z" fill="#6b6f5c"/><circle cx="6" cy="3.8" r="2.6" fill="#d9dccf"/><circle cx="6" cy="3.8" r="1.6" fill="#55584a"/></svg>
<div class="t" style="left:1713.2px;top:166.1px;font-size:11px;color:#3f819d;">volumeOnGeoVolumes_10</div>
<div class="a" style="left:1683px;top:188px;width:9px;height:9px;border:1px solid #5a5ab8;border-radius:2px;background:rgba(255,255,255,0.7);"><div class="a" style="left:1px;top:2.7px;width:5px;height:1.6px;background:#1a1ab4;"></div><div class="a" style="left:2.7px;top:1px;width:1.6px;height:5px;background:#1a1ab4;"></div></div>
<svg style="left:1696.5px;top:188px" width="12" height="8" viewBox="0 0 12 8"><path d="M0.3,4Q6,-3 11.7,4Q6,11 0.3,4Z" fill="#6b6f5c"/><circle cx="6" cy="3.8" r="2.6" fill="#d9dccf"/><circle cx="6" cy="3.8" r="1.6" fill="#55584a"/></svg>
<div class="t" style="left:1713.2px;top:186.1px;font-size:11px;color:#3f819d;">volumeOnGeoVolumes_9</div>
<div class="a" style="left:1683px;top:208px;width:9px;height:9px;border:1px solid #5a5ab8;border-radius:2px;background:rgba(255,255,255,0.7);"><div class="a" style="left:1px;top:2.7px;width:5px;height:1.6px;background:#1a1ab4;"></div><div class="a" style="left:2.7px;top:1px;width:1.6px;height:5px;background:#1a1ab4;"></div></div>
<svg style="left:1696.5px;top:208px" width="12" height="8" viewBox="0 0 12 8"><path d="M0.3,4Q6,-3 11.7,4Q6,11 0.3,4Z" fill="#6b6f5c"/><circle cx="6" cy="3.8" r="2.6" fill="#d9dccf"/><circle cx="6" cy="3.8" r="1.6" fill="#55584a"/></svg>
<div class="t" style="left:1713.2px;top:206.1px;font-size:11px;color:#3f819d;">volumeOnGeoVolumes_8</div>
<div class="a" style="left:1683px;top:228px;width:9px;height:9px;border:1px solid #5a5ab8;border-radius:2px;background:rgba(255,255,255,0.7);"><div class="a" style="left:1px;top:2.7px;width:5px;height:1.6px;background:#1a1ab4;"></div><div class="a" style="left:2.7px;top:1px;width:1.6px;height:5px;background:#1a1ab4;"></div></div>
<svg style="left:1696.5px;top:228px" width="12" height="8" viewBox="0 0 12 8"><path d="M0.3,4Q6,-3 11.7,4Q6,11 0.3,4Z" fill="#6b6f5c"/><circle cx="6" cy="3.8" r="2.6" fill="#d9dccf"/><circle cx="6" cy="3.8" r="1.6" fill="#55584a"/></svg>
<div class="t" style="left:1713.2px;top:226.1px;font-size:11px;color:#3f819d;">volumeOnGeoVolumes_7</div>
<div class="a" style="left:1683px;top:248px;width:9px;height:9px;border:1px solid #5a5ab8;border-radius:2px;background:rgba(255,255,255,0.7);"><div class="a" style="left:1px;top:2.7px;width:5px;height:1.6px;background:#1a1ab4;"></div><div class="a" style="left:2.7px;top:1px;width:1.6px;height:5px;background:#1a1ab4;"></div></div>
<svg style="left:1696.5px;top:248px" width="12" height="8" viewBox="0 0 12 8"><path d="M0.3,4Q6,-3 11.7,4Q6,11 0.3,4Z" fill="#6b6f5c"/><circle cx="6" cy="3.8" r="2.6" fill="#d9dccf"/><circle cx="6" cy="3.8" r="1.6" fill="#55584a"/></svg>
<div class="t" style="left:1713.2px;top:246.1px;font-size:11px;color:#3f819d;">volumeOnGeoVolumes_6</div>
<div class="a" style="left:1683px;top:268px;width:9px;height:9px;border:1px solid #5a5ab8;border-radius:2px;background:rgba(255,255,255,0.7);"><div class="a" style="left:1px;top:2.7px;width:5px;height:1.6px;background:#1a1ab4;"></div><div class="a" style="left:2.7px;top:1px;width:1.6px;height:5px;background:#1a1ab4;"></div></div>
<svg style="left:1696.5px;top:268px" width="12" height="8" viewBox="0 0 12 8"><path d="M0.3,4Q6,-3 11.7,4Q6,11 0.3,4Z" fill="#6b6f5c"/><circle cx="6" cy="3.8" r="2.6" fill="#d9dccf"/><circle cx="6" cy="3.8" r="1.6" fill="#55584a"/></svg>
<div class="t" style="left:1713.2px;top:266.1px;font-size:11px;color:#3f819d;">volumeOnGeoVolumes_5</div>
<div class="a" style="left:1683px;top:288px;width:9px;height:9px;border:1px solid #5a5ab8;border-radius:2px;background:rgba(255,255,255,0.7);"><div class="a" style="left:1px;top:2.7px;width:5px;height:1.6px;background:#1a1ab4;"></div><div class="a" style="left:2.7px;top:1px;width:1.6px;height:5px;background:#1a1ab4;"></div></div>
<svg style="left:1696.5px;top:288px" width="12" height="8" viewBox="0 0 12 8"><path d="M0.3,4Q6,-3 11.7,4Q6,11 0.3,4Z" fill="#6b6f5c"/><circle cx="6" cy="3.8" r="2.6" fill="#d9dccf"/><circle cx="6" cy="3.8" r="1.6" fill="#55584a"/></svg>
<div class="t" style="left:1713.2px;top:286.1px;font-size:11px;color:#3f819d;">volumeOnGeoVolumes_4</div>
<div class="a" style="left:1683px;top:308px;width:9px;height:9px;border:1px solid #5a5ab8;border-radius:2px;background:rgba(255,255,255,0.7);"><div class="a" style="left:1px;top:2.7px;width:5px;height:1.6px;background:#1a1ab4;"></div><div class="a" style="left:2.7px;top:1px;width:1.6px;height:5px;background:#1a1ab4;"></div></div>
<svg style="left:1696.5px;top:308px" width="12" height="8" viewBox="0 0 12 8"><path d="M0.3,4Q6,-3 11.7,4Q6,11 0.3,4Z" fill="#6b6f5c"/><circle cx="6" cy="3.8" r="2.6" fill="#d9dccf"/><circle cx="6" cy="3.8" r="1.6" fill="#55584a"/></svg>
<div class="t" style="left:1713.2px;top:306.1px;font-size:11px;color:#3f819d;">volumeOnGeoVolumes_3</div>
<div class="a" style="left:1683px;top:328px;width:9px;height:9px;border:1px solid #5a5ab8;border-radius:2px;background:rgba(255,255,255,0.7);"><div class="a" style="left:1px;top:2.7px;width:5px;height:1.6px;background:#1a1ab4;"></div><div class="a" style="left:2.7px;top:1px;width:1.6px;height:5px;background:#1a1ab4;"></div></div>
<svg style="left:1696.5px;top:328px" width="12" height="8" viewBox="0 0 12 8"><path d="M0.3,4Q6,-3 11.7,4Q6,11 0.3,4Z" fill="#6b6f5c"/><circle cx="6" cy="3.8" r="2.6" fill="#d9dccf"/><circle cx="6" cy="3.8" r="1.6" fill="#55584a"/></svg>
<div class="t" style="left:1713.2px;top:326.1px;font-size:11px;color:#3f819d;">volumeOnGeoVolumes_2</div>
<div class="a" style="left:1683px;top:348px;width:9px;height:9px;border:1px solid #5a5ab8;border-radius:2px;background:rgba(255,255,255,0.7);"><div class="a" style="left:1px;top:2.7px;width:5px;height:1.6px;background:#1a1ab4;"></div><div class="a" style="left:2.7px;top:1px;width:1.6px;height:5px;background:#1a1ab4;"></div></div>
<svg style="left:1696.5px;top:348px" width="12" height="8" viewBox="0 0 12 8"><path d="M0.3,4Q6,-3 11.7,4Q6,11 0.3,4Z" fill="#6b6f5c"/><circle cx="6" cy="3.8" r="2.6" fill="#d9dccf"/><circle cx="6" cy="3.8" r="1.6" fill="#55584a"/></svg>
<div class="t" style="left:1713.2px;top:346.1px;font-size:11px;color:#3f819d;">volumeOnGeoVolumes_1</div>
<div class="a" style="left:1683px;top:368px;width:9px;height:9px;border:1px solid #5a5ab8;border-radius:2px;background:rgba(255,255,255,0.7);"><div class="a" style="left:1px;top:2.7px;width:5px;height:1.6px;background:#1a1ab4;"></div><div class="a" style="left:2.7px;top:1px;width:1.6px;height:5px;background:#1a1ab4;"></div></div>
<svg style="left:1696.5px;top:368px" width="12" height="8" viewBox="0 0 12 8"><path d="M0.3,4Q6,-3 11.7,4Q6,11 0.3,4Z" fill="#6b6f5c"/><circle cx="6" cy="3.8" r="2.6" fill="#d9dccf"/><circle cx="6" cy="3.8" r="1.6" fill="#55584a"/></svg>
<div class="t" style="left:1713.2px;top:366.1px;font-size:11px;color:#3f819d;">volumeOnGeoVolumes_0</div>
<div class="a" style="left:1683px;top:388px;width:9px;height:9px;border:1px solid #5a5ab8;border-radius:2px;background:rgba(255,255,255,0.7);"><div class="a" style="left:1px;top:2.7px;width:5px;height:1.6px;background:#1a1ab4;"></div></div>
<div class="t" style="left:1695.4px;top:386.0px;font-size:11px;color:#3f819d;">Topological Entity Sets</div>
<div class="t" style="left:1717.8px;top:408.1px;font-size:11px;color:#3f819d;">board_contacts</div>
<div class="t" style="left:1717.8px;top:434.1px;font-size:11px;color:#3f819d;">component_contacts</div>
<div class="t" style="left:1717.8px;top:460.1px;font-size:11px;color:#3f819d;">board_fixation</div>
<div class="t" style="left:1717.8px;top:486.1px;font-size:11px;color:#3f819d;">convective_surfaces</div>
<svg style="left:1868px;top:503px" width="9" height="9" viewBox="0 0 9 9"><path d="M8.5,0.5L0.5,8.5M8.5,4.5L4.5,8.5" stroke="#555" stroke-width="0.9"/></svg>
</body>
</html>
